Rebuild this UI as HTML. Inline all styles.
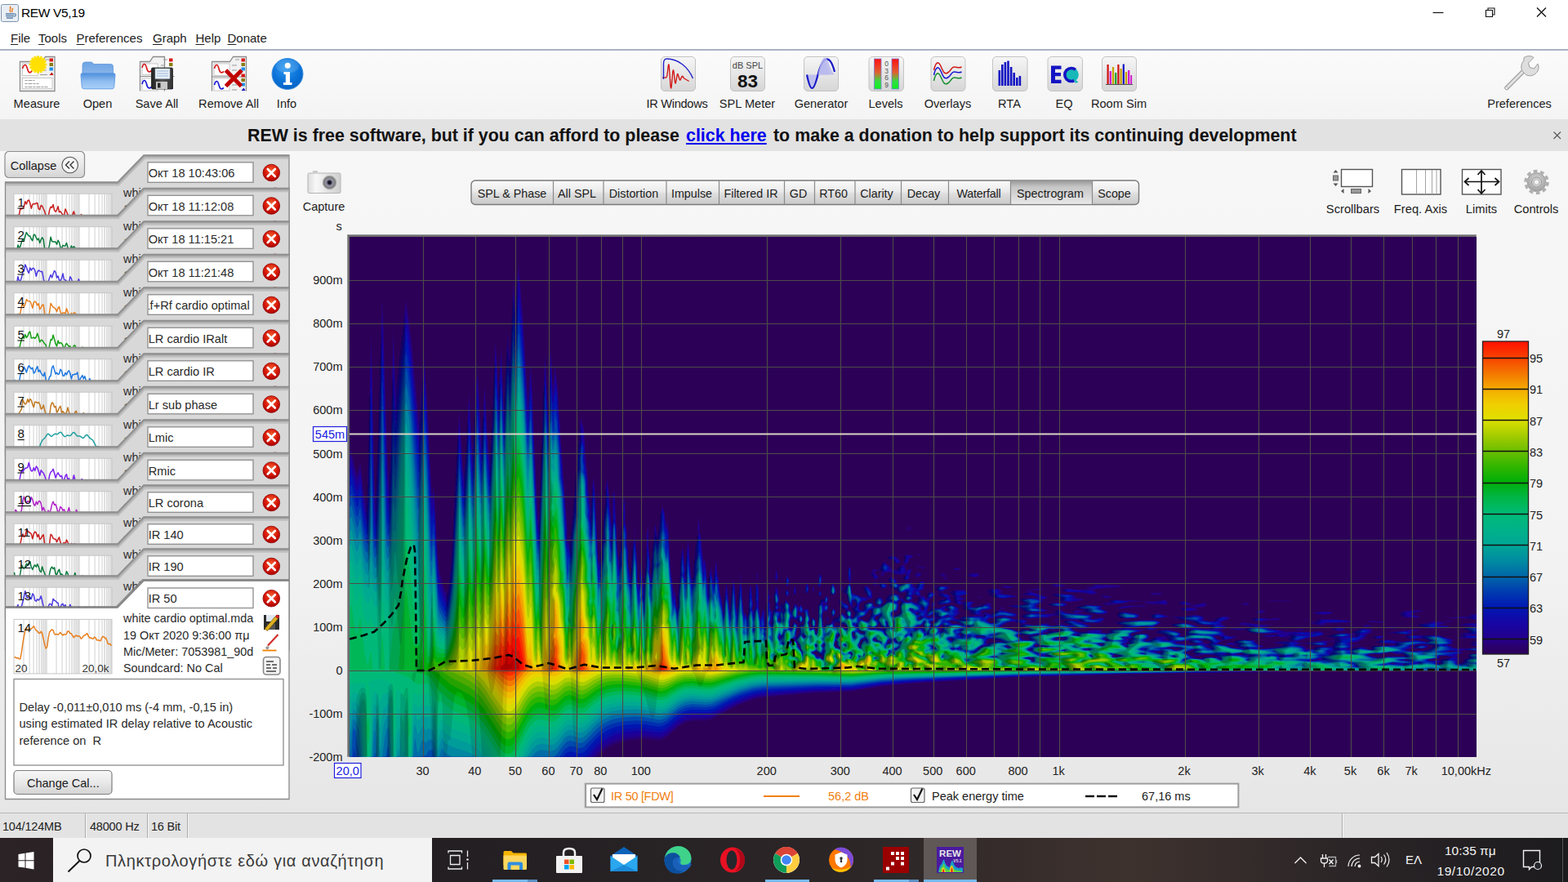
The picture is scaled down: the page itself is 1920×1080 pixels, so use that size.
<!DOCTYPE html>
<html lang="en"><head><meta charset="utf-8"><title>REW V5,19</title>
<style>
*{box-sizing:border-box;margin:0;padding:0}
html,body{width:1920px;height:1080px;overflow:hidden;background:#f2f2f2;font-family:"Liberation Sans",sans-serif;font-size:15px;color:#1a1a1a}
.abs{position:absolute}
.t{position:absolute;white-space:nowrap;line-height:1}
#title{position:absolute;left:0;top:0;width:1920px;height:32px;background:#fff}
#menu{position:absolute;left:0;top:32px;width:1920px;height:30px;background:#fff;border-bottom:2px solid #a9b3c2}
#menu span{position:absolute;top:6px;font-size:15px;color:#222;line-height:17px}
#menu u{text-decoration:underline;text-underline-offset:2px}
#tool{position:absolute;left:0;top:62px;width:1920px;height:84px;background:linear-gradient(#fbfbfb,#f4f4f4)}
.tl{position:absolute;top:119px;font-size:14.6px;line-height:17px;color:#1c1c1c;white-space:nowrap;transform:translateX(-50%)}
#banner{position:absolute;left:0;top:146px;width:1920px;height:39px;background:#e2e2e2}
#banner .msg{position:absolute;top:8px;font-weight:bold;font-size:21.4px;line-height:24px;color:#111;white-space:nowrap}
#banner a{color:#0000ee;text-decoration:underline}
#main{position:absolute;left:0;top:185px;width:1920px;height:811px;background:linear-gradient(#f7f7f7 0,#f3f3f3 60%,#e6e6e6 100%)}
#status{position:absolute;left:0;top:995px;width:1920px;height:31px;background:#e3e3e3;border-top:1px solid #b9b9b9}
#status .s{position:absolute;top:8px;font-size:14.5px;line-height:17px;color:#222}
#status .sep{position:absolute;top:0;width:1px;height:30px;background:#aaa;box-shadow:1px 0 0 #f6f6f6}
#task{position:absolute;left:0;top:1026px;width:1920px;height:54px;background:linear-gradient(90deg,#2b2325 0,#231f22 30%,#2c2627 55%,#3e322e 72%,#2b2527 86%,#1c1b1e 100%)}
#search{position:absolute;left:65px;top:0;width:464px;height:54px;background:#f3f3f3}
#search .ph{position:absolute;left:64px;top:17px;font-size:20px;line-height:22px;color:#3a3a3a;letter-spacing:0.66px}
.ax{position:absolute;font-size:14.5px;line-height:16px;color:#222;white-space:nowrap}
.ay{right:1500px;text-align:right}
</style></head><body>

<div id="title">
<svg class="abs" style="left:1px;top:4px" width="24" height="24" viewBox="0 0 24 24"><rect x="0.5" y="1.5" width="21" height="21" rx="2" fill="#e9eef5" stroke="#7d93ad"/><path d="M11 4c3 2-2 4 1 7M14 6c2 2-2 3 0 5" stroke="#e8822a" stroke-width="1.6" fill="none"/><path d="M6 13h10M6 15.5h10M7 18h8" stroke="#5a7fa8" stroke-width="1.4"/><path d="M16 13c3-1 3 3 0 3" stroke="#5a7fa8" stroke-width="1.2" fill="none"/></svg>
<div class="t" style="left:26px;top:8px;font-size:15.5px;color:#000;letter-spacing:-0.35px">REW V5,19</div>
<svg class="abs" style="left:1740px;top:0" width="180" height="32" viewBox="0 0 180 32"><path d="M14.5 15.5h13" stroke="#111" stroke-width="1.2"/><path d="M79.5 12.5h8v8h-8zM82 12.5v-2.500h8v8h-2.500" stroke="#111" stroke-width="1.1" fill="none"/><path d="M142 9.500l11 11M153 9.500l-11 11" stroke="#111" stroke-width="1.3"/></svg>
</div>
<div id="menu">
<span style="left:13px"><u>F</u>ile</span><span style="left:47px"><u>T</u>ools</span><span style="left:93.500px"><u>P</u>references</span><span style="left:187px"><u>G</u>raph</span><span style="left:239.500px"><u>H</u>elp</span><span style="left:278.500px"><u>D</u>onate</span>
</div>
<div id="tool"></div>

<svg class="abs" style="left:0;top:62px" width="1920" height="84" viewBox="0 62 1920 84">
<defs>
<linearGradient id="btn" x1="0" y1="0" x2="0" y2="1"><stop offset="0" stop-color="#f6f6f6"/><stop offset="0.5" stop-color="#e6e6e6"/><stop offset="1" stop-color="#d6d6d6"/></linearGradient>
<linearGradient id="fold" x1="0" y1="0" x2="0" y2="1"><stop offset="0" stop-color="#4f8fdc"/><stop offset="0.5" stop-color="#8ebcf0"/><stop offset="1" stop-color="#a9d0f8"/></linearGradient>
<linearGradient id="foldb" x1="0" y1="0" x2="0" y2="1"><stop offset="0" stop-color="#6ea4e4"/><stop offset="1" stop-color="#8ab6ea"/></linearGradient>
<radialGradient id="info" cx="0.45" cy="0.3" r="0.75"><stop offset="0" stop-color="#2f9bf0"/><stop offset="0.6" stop-color="#0a72d8"/><stop offset="1" stop-color="#0860c0"/></radialGradient>
<linearGradient id="lev" x1="0" y1="0" x2="0" y2="1"><stop offset="0" stop-color="#ff1010"/><stop offset="0.45" stop-color="#e06030"/><stop offset="0.75" stop-color="#30e040"/><stop offset="1" stop-color="#10f020"/></linearGradient>
<linearGradient id="flop" x1="0" y1="0" x2="1" y2="0"><stop offset="0" stop-color="#222"/><stop offset="0.5" stop-color="#555"/><stop offset="1" stop-color="#333"/></linearGradient>
</defs>
<!-- Measure -->
<g>
<path d="M24.500 75.500h27l4-6h11.500v42h-42.500z" fill="#f2f2f2" stroke="#8c8c8c" stroke-width="1.300"/>
<rect x="27.500" y="78" width="19" height="14.500" fill="#fff" stroke="#bdbdbd" stroke-width="0.800"/>
<path d="M27.500 84c2-6 4.500-6 6 0s4 6.500 6.500 1" stroke="#d61a1a" stroke-width="1.700" fill="none"/>
<rect x="27.500" y="95.500" width="36.500" height="13" fill="#fff" stroke="#bdbdbd" stroke-width="0.800"/>
<path d="M30.500 98.500h12M30.500 102.500h17M30.500 106.500h28" stroke="#9a9a9a" stroke-width="1.200" stroke-dasharray="3 1 5 1"/>
<rect x="60.500" y="71.500" width="4.500" height="4" fill="#d81b1b"/><rect x="60.500" y="77" width="4.500" height="4" fill="#8a7a10"/><rect x="60.500" y="82.500" width="4.500" height="4" fill="#2090e8"/><path d="M60.500 92l3-3.500 2 3.500z" fill="#c01010"/>
<path d="M49 91.500h9M52 86h5M55 73h5" stroke="#999" stroke-width="1"/>
<g fill="#ffee00"><circle cx="46.500" cy="79" r="7.800"/><g stroke="#ffe000" stroke-width="3.200" stroke-linecap="round"><path d="M46.500 69.500v19M37 79h19M39.800 72.300l13.400 13.400M53.200 72.300L39.800 85.700M42.800 70.300l7.400 17.400M50.200 70.300l-7.400 17.400M37.800 75.300l17.400 7.400M37.800 82.700l17.400-7.400"/></g></g>
</g>
<!-- Open -->
<g>
<path d="M101 79.500q0-3.500 3.500-3.500h6.500q2 0 3 1.500l1 1h20.500q3 0 3 3v10h-37.500z" fill="url(#foldb)" stroke="#5d97dd" stroke-width="0.800"/>
<path d="M99 92q-0.300-2.300 2-2.300h38q2.300 0 2 2.300l-1.300 14.500q-0.300 2.300-2.500 2.300h-34.400q-2.200 0-2.500-2.300z" fill="url(#fold)" stroke="#5a98e4" stroke-width="0.900"/>
</g>
<!-- Save All -->
<g>
<path d="M171.500 111.500v-36h12l4-6h14v42" fill="#f2f2f2" stroke="#8c8c8c" stroke-width="1.300"/>
<rect x="174" y="78" width="19" height="13.500" fill="#fff" stroke="#bdbdbd" stroke-width="0.800"/><rect x="174" y="96" width="19" height="15" fill="#fff" stroke="#bdbdbd" stroke-width="0.800"/>
<path d="M171.500 93.500h42" stroke="#8c8c8c" stroke-width="1.200"/>
<path d="M174 83c1.500-6 4-6 5.500 0s3.500 5.500 6 3.500" stroke="#d61a1a" stroke-width="1.700" fill="none"/>
<path d="M174 103c1.500-6 4-6 5.500 0s3.500 5.500 6 3.500" stroke="#1a1ad6" stroke-width="1.700" fill="none"/>
<rect x="207" y="71.500" width="4.500" height="4" fill="#d81b1b"/><rect x="207" y="77" width="4.500" height="4" fill="#8a7a10"/>
<path d="M200 73h5M197 80h5" stroke="#999" stroke-width="1"/>
<path d="M201 108h11" stroke="#1a1ad6" stroke-width="2"/>
<rect x="185.500" y="83" width="26" height="26" rx="1.500" fill="url(#flop)" stroke="#1a1a1a" stroke-width="0.800"/>
<rect x="190" y="84" width="18" height="12.500" fill="#e8f0f8" stroke="#9ab" stroke-width="0.500"/>
<path d="M192 87h14M192 90h14M192 93h14" stroke="#9db8d8" stroke-width="1"/>
<rect x="191" y="100" width="14" height="9" fill="#c8c8c8"/><rect x="193" y="101.500" width="3.500" height="6" fill="#2a2a2a"/>
</g>
<!-- Remove All -->
<g>
<path d="M259.500 111.500v-36h22l4-6h16v42" fill="#f2f2f2" stroke="#8c8c8c" stroke-width="1.300"/>
<rect x="262" y="78" width="19" height="14.500" fill="#fff" stroke="#bdbdbd" stroke-width="0.800"/><rect x="262" y="96" width="19" height="15" fill="#fff" stroke="#bdbdbd" stroke-width="0.800"/>
<path d="M259.500 94h42" stroke="#8c8c8c" stroke-width="1.200"/>
<path d="M262.500 84c1.500-6 4-6 5.500 0s3.500 5.500 6 3.500" stroke="#d61a1a" stroke-width="1.700" fill="none"/>
<path d="M262.500 104c1.500-6 4-6 5.500 0s3.500 5.500 6 3.500" stroke="#1a1ad6" stroke-width="1.700" fill="none"/>
<rect x="295.500" y="71.500" width="4.500" height="4" fill="#d81b1b"/><rect x="295.500" y="77" width="4.500" height="4" fill="#8a7a10"/><rect x="295.500" y="82.500" width="4.500" height="4" fill="#2090e8"/>
<rect x="295.500" y="90.500" width="4.500" height="4" fill="#d81b1b"/><rect x="295.500" y="96" width="4.500" height="4" fill="#8a7a10"/><rect x="295.500" y="101.500" width="4.500" height="4" fill="#2090e8"/><path d="M295.500 111l3-3.500 2 3.500z" fill="#1010c0"/>
<path d="M288 73h5M284 80h6M284 86h6M284 104h6M284 110h6" stroke="#999" stroke-width="1"/>
<path d="M276.500 86l19 19.500M296 86l-19.500 19.500" stroke="#c00000" stroke-width="5"/>
</g>
<!-- Info -->
<g>
<circle cx="352" cy="90.500" r="19" fill="url(#info)" stroke="#3b8fe0" stroke-width="1"/>
<ellipse cx="352" cy="81" rx="14" ry="8.500" fill="#fff" opacity="0.130"/>
<circle cx="352.300" cy="80.300" r="3.500" fill="#fff"/>
<path d="M347.500 88h7.500v13h2.500v3h-10.500v-3h2.800v-10h-2.300z" fill="#fff"/>
</g>
<!-- IR Windows -->
<g>
<rect x="809.500" y="69.500" width="42" height="42" rx="4.500" fill="url(#btn)" stroke="#c3c3c3"/>
<path d="M811 95h5" stroke="#d01818" stroke-width="1.300"/>
<path d="M812.500 97v-19c0-4 2-6 4-6c14 0 26 10 32 24" stroke="#2222cc" stroke-width="1.400" fill="none"/>
<path d="M815.500 95c1 0 1.500-2 2.500-12c0.500-5 1-6 1.500 0l1.500 22c0.300 4 1 4 1.300 0l1.500-17c0.300-3 1-3 1.300 0l1.300 12c0.300 3 1 3 1.400 0l1.300-8c0.400-2 1-2 1.400 0l1.500 5c0.500 1.500 1 1.500 1.500 0l1.200-3c0.500-1 1-1 1.500 0l1.500 2l6 3.500" stroke="#d01818" stroke-width="1.400" fill="none" stroke-linejoin="round"/>
</g>
<!-- SPL -->
<g>
<rect x="894.500" y="69.500" width="42" height="42" rx="4.500" fill="url(#btn)" stroke="#c3c3c3"/>
<text x="915.500" y="84" font-size="11" text-anchor="middle" fill="#444" font-family="Liberation Sans, sans-serif">dB SPL</text>
<text x="915.500" y="107" font-size="22.500" font-weight="bold" text-anchor="middle" fill="#111" font-family="Liberation Sans, sans-serif">83</text>
</g>
<!-- Generator -->
<g>
<rect x="984.500" y="69.500" width="42" height="42" rx="4.500" fill="url(#btn)" stroke="#c3c3c3"/>
<path d="M988 91.500c4.500 22 8 22 13.500 0c5.500-22 9-22 13.500 0z" fill="#b9b9ee" opacity="0.850"/>
<path d="M988 91.500c4.500 22 8 22 13.500 0S1016 64 1022 88" stroke="#1818c8" stroke-width="2.200" fill="none"/>
<path d="M1001.500 91.500c5-24 9.500-26 13.500-13c1.500 4 3 9 7 13z" fill="#b9b9ee" opacity="0.850"/>
</g>
<!-- Levels -->
<g>
<rect x="1064" y="69.500" width="42.500" height="42" rx="4.500" fill="url(#btn)" stroke="#c3c3c3"/>
<rect x="1070.500" y="72" width="8.500" height="37" fill="url(#lev)" stroke="#7a7ad8" stroke-width="0.800"/>
<rect x="1092" y="72" width="8.500" height="37" fill="url(#lev)" stroke="#7a7ad8" stroke-width="0.800"/>
<g font-size="8.500" fill="#555" text-anchor="middle" font-family="Liberation Sans, sans-serif"><text x="1085.500" y="81">0</text><text x="1085.500" y="89.500">3</text><text x="1085.500" y="98">6</text><text x="1085.500" y="106.500">9</text></g>
</g>
<!-- Overlays -->
<g>
<rect x="1140" y="69.500" width="42" height="42" rx="4.500" fill="url(#btn)" stroke="#c3c3c3"/>
<g fill="none" stroke-width="1.500"><path d="M1143.500 86c2-9 5-12 8-6s4 12 9 9s4-7 8-7s5 2 9 0" stroke="#d01818"/><path d="M1143.500 92c2-9 5-12 8-6s4 12 9 9s4-7 8-7s5 2 9 0" stroke="#1818d0"/><path d="M1143.500 99c2-9 5-12 8-6s4 12 9 9s4-7 8-7s5 2 9 0" stroke="#189030"/></g>
</g>
<!-- RTA -->
<g>
<rect x="1215.500" y="69.500" width="42.500" height="42" rx="4.500" fill="url(#btn)" stroke="#c3c3c3"/>
<g fill="#1414c4"><rect x="1222.500" y="86" width="2.600" height="19"/><rect x="1226" y="79" width="2.600" height="26"/><rect x="1229.600" y="76" width="2.600" height="29"/><rect x="1233.200" y="74.500" width="2.600" height="30.500"/><rect x="1236.800" y="82" width="2.600" height="23"/><rect x="1240.400" y="89" width="2.600" height="16"/><rect x="1244" y="95" width="2.600" height="10"/><rect x="1247.600" y="93" width="2.600" height="12"/></g>
</g>
<!-- EQ -->
<g>
<rect x="1283" y="69.500" width="42.500" height="42" rx="4.500" fill="url(#btn)" stroke="#c3c3c3"/>
<circle cx="1311.800" cy="91.500" r="9" fill="#19b8b8"/>
<path d="M1316 97l4.500 3.500-4 1.500z" fill="#19b8b8"/>
<circle cx="1311.800" cy="91.500" r="8" fill="none" stroke="#1414c4" stroke-width="3.600" stroke-dasharray="34 30" stroke-dashoffset="-9"/>
<path d="M1287 80.500h12.500v4.300h-7.500v4.200h7v4.200h-7v4.500h7.500v4.300h-12.500z" fill="#1414c4"/>
</g>
<!-- Room Sim -->
<g>
<rect x="1349.500" y="69.500" width="42" height="42" rx="4.500" fill="url(#btn)" stroke="#c3c3c3"/>
<g><rect x="1355.500" y="79" width="2.200" height="24" fill="#d01010"/><rect x="1358.700" y="87" width="2.200" height="16" fill="#d010d0"/><rect x="1361.900" y="82" width="2.200" height="21" fill="#c8a000"/><rect x="1365.100" y="89" width="2.200" height="14" fill="#18a030"/><rect x="1368.300" y="79" width="2.200" height="24" fill="#d01010"/><rect x="1371.500" y="84" width="2.200" height="19" fill="#c8a000"/><rect x="1374.700" y="78.500" width="2.200" height="24.500" fill="#1414c4"/><rect x="1377.900" y="88" width="2.200" height="15" fill="#c8a000"/><rect x="1381.100" y="86" width="2.200" height="17" fill="#d010d0"/><rect x="1384.300" y="92" width="1.800" height="11" fill="#d010d0"/></g>
<path d="M1354 103.500h33" stroke="#555" stroke-width="1"/>
</g>
<!-- Preferences wrench -->
<g>
<path d="M1845 107.500L1866.500 86" stroke="#a9a9a9" stroke-width="5.500" stroke-linecap="round"/>
<path d="M1845 107.500L1866.500 86" stroke="#e4e4e4" stroke-width="2.500" stroke-linecap="round"/>
<path d="M1866 70.500c4-2.500 9-2.500 12 0l-6.500 6.500 1.500 5.500 5.500 1.500 4.500-6c2 4 1 8.500-2 11.500-3.500 3.500-8.500 4.200-12.500 2l-4.500-4.500c-2-4-1.500-9 2-13z" fill="#dedede" stroke="#9c9c9c" stroke-width="1"/>
<circle cx="1844.700" cy="107.800" r="1.600" fill="#fff" stroke="#999" stroke-width="0.600"/>
</g>
</svg>
<div class="tl" style="left:45px">Measure</div><div class="tl" style="left:119.500px">Open</div><div class="tl" style="left:192px">Save All</div><div class="tl" style="left:280px">Remove All</div><div class="tl" style="left:351px">Info</div>
<div class="tl" style="left:829px;letter-spacing:-0.3px">IR Windows</div><div class="tl" style="left:915px">SPL Meter</div><div class="tl" style="left:1005.500px">Generator</div><div class="tl" style="left:1084.500px">Levels</div><div class="tl" style="left:1160.500px">Overlays</div><div class="tl" style="left:1236px">RTA</div><div class="tl" style="left:1303px">EQ</div><div class="tl" style="left:1370px">Room Sim</div><div class="tl" style="left:1860.500px">Preferences</div>
<div id="banner"><div class="msg" style="left:303px">REW is free software, but if you can afford to please</div><div class="msg" style="left:840px"><a>click here</a></div><div class="msg" style="left:947px">to make a donation to help support its continuing development</div>
<svg class="abs" style="left:1900px;top:13px" width="14" height="14" viewBox="0 0 14 14"><path d="M2.500 2.500l8.500 8.500M11 2.500L2.500 11" stroke="#555" stroke-width="1.100"/></svg></div>

<div id="main"></div>
<svg class="abs" style="left:0;top:185px" width="1920" height="811" viewBox="0 185 1920 811" font-family="Liberation Sans, sans-serif">
<defs><clipPath id="pc"><rect x="428" y="290" width="1380" height="637"/></clipPath><filter id="bl" x="0" y="0" width="1" height="1" filterUnits="objectBoundingBox"><feGaussianBlur stdDeviation="0.7"/></filter><linearGradient id="cbar" x1="0" y1="0" x2="0" y2="1">
<stop offset="0.0000" stop-color="#ff1000"/>
<stop offset="0.0250" stop-color="#fb2800"/>
<stop offset="0.0500" stop-color="#f84000"/>
<stop offset="0.0750" stop-color="#f65a00"/>
<stop offset="0.1000" stop-color="#f47400"/>
<stop offset="0.1250" stop-color="#f48e00"/>
<stop offset="0.1500" stop-color="#f4a800"/>
<stop offset="0.1750" stop-color="#f2bb00"/>
<stop offset="0.2000" stop-color="#f0ce00"/>
<stop offset="0.2250" stop-color="#e8d700"/>
<stop offset="0.2500" stop-color="#e0e000"/>
<stop offset="0.2750" stop-color="#c3d600"/>
<stop offset="0.3000" stop-color="#a6cc00"/>
<stop offset="0.3250" stop-color="#89c500"/>
<stop offset="0.3500" stop-color="#6cbe00"/>
<stop offset="0.3750" stop-color="#4fba00"/>
<stop offset="0.4000" stop-color="#32b600"/>
<stop offset="0.4250" stop-color="#19b204"/>
<stop offset="0.4500" stop-color="#00ae08"/>
<stop offset="0.4750" stop-color="#00b227"/>
<stop offset="0.5000" stop-color="#00b646"/>
<stop offset="0.5250" stop-color="#00b85e"/>
<stop offset="0.5500" stop-color="#00ba76"/>
<stop offset="0.5750" stop-color="#00b67f"/>
<stop offset="0.6000" stop-color="#00b288"/>
<stop offset="0.6250" stop-color="#00ac8f"/>
<stop offset="0.6500" stop-color="#00a696"/>
<stop offset="0.6750" stop-color="#00999b"/>
<stop offset="0.7000" stop-color="#008ca0"/>
<stop offset="0.7250" stop-color="#007aa4"/>
<stop offset="0.7500" stop-color="#0068a8"/>
<stop offset="0.7750" stop-color="#0052ac"/>
<stop offset="0.8000" stop-color="#003cb0"/>
<stop offset="0.8250" stop-color="#002ab1"/>
<stop offset="0.8500" stop-color="#0018b2"/>
<stop offset="0.8750" stop-color="#0b0fab"/>
<stop offset="0.9000" stop-color="#1606a5"/>
<stop offset="0.9250" stop-color="#1d0398"/>
<stop offset="0.9500" stop-color="#24008c"/>
<stop offset="0.9750" stop-color="#2a006e"/>
<stop offset="1.0000" stop-color="#2d0057"/>
</linearGradient></defs>
<rect x="425" y="287" width="1383" height="640" fill="#9a9a9a"/>
<rect x="426" y="288" width="1381" height="638" fill="#6e6e6e"/>
<rect x="428" y="290" width="1380" height="637" fill="#2d0057"/>
<g clip-path="url(#pc)"><g filter="url(#bl)">
<path fill="#290071" d="M454.5 401.4l3.9 191.1 1.1 19.9 1.3 -17.9 6.7 -223.9 1 0 7 210.4 1 -.3 2 -32.8 3 -149.8 3 80.1 9 -86.1 3 -22.7 1 -2.2 5 37.2 10 104.8 1 2.7 6 -78.1 9 167.6 1 4.3 1 -9.8 1 2 4 75.1 2 23.6 6.1 22.9 2.9 6.2 1 -.6 2 -7.5 3.5 -33.1 7.5 -154.7 2 -28.1 4 69.3 1 6.2 1 -1 2 -21.5 4 -75.5 3 61.6 1 10.4 .7 -5.7 5.3 -97.3 5 89.1 4 -67.8 4 74 1 9.8 1 2.5 1 -3.4 1 -12.4 5 -123.1 1 7.4 3 60.5 3 -64.4 3 72.4 1 4.5 4 -92 3 35.7 4 -99 2 29.4 1 -5.3 3 -40.4 1 0 5 64.9 4 73.8 2 24.4 3 -44.1 1 7.9 7.1 165.9 1.9 19.7 1.3 -16.7 6.7 -189.1 3 66.8 1.9 -25.7 1.1 -37.6 1 -9.5 2 43.5 1 .9 2 -24 1 3.6 3 31.7 3.1 54.4 2.9 34.8 .1 10.2 5.2 67 -.3 12 1 3.3 1.3 -2.3 .7 -4.7 1 1.2 5.3 -56.5 6.7 -86.2 2 -5.4 .3 7.6 1.7 4.7 1 6.2 2.5 42.1 1.8 14 0 12 2.7 21.2 1 2.8 3 -35.9 1 3.3 1.3 15.6 2.3 60 1.5 22 .9 3.7 1 -11.8 3.3 -17.9 1.8 -31 1.9 -13 -.2 -17 2.2 -12.9 1 4.2 4 51.9 1 -3.4 .7 -9.8 .3 -22.2 1 -6.5 1 2.3 3.2 69.4 1.8 11.4 2.2 -7.4 .8 -23.7 2.1 -10.3 -.8 -6 1.7 -27.9 1 .9 1 9.4 .1 19.6 2 13 .1 13 1.6 14 0 14 2.2 11.7 1 .7 2 -32.9 1.8 -10.5 .2 -17.9 1 8.4 -.3 8.5 1.4 6 1.8 27 .2 17 .9 5 1 .5 2 -24.8 1 .1 2 25.4 1 1.7 2.7 -30.9 1.3 -39.3 1 -4.2 .5 24.5 1.9 23 -.5 11 1.1 4.9 1 -1.4 1 -24.5 3 -35.6 1 -4.9 2 16.1 1 -1.1 3 -25.8 1.8 -7.7 1.2 -1 1.6 4 3.4 19.2 1 -9.4 3.8 64.2 3.2 23.7 1 -.6 1 1.5 2 20.6 1 0 1 -3.2 -.3 -9 2.1 -24 .6 -18 2.6 -20.1 1 2.6 2 21.3 1 -2.3 3 -34.4 2.2 35.9 1.8 15.9 1 1.2 1.7 -12.1 2.4 -28 3 -16 -.7 -7 1.6 -14.9 1 5.9 .3 14 1.8 7 1.9 22.3 1 5.8 1 -2.1 1 1.6 3 29.9 1 -2.5 3 -21.5 1 5.5 -.1 6 2.1 8 2 -19.9 1 -5.3 .8 1.2 .9 14 1.9 8 .7 11 2.7 12.6 2 14.3 4 -36.8 1.6 19.9 2.4 15.6 1 -4 3 -31.5 1 .3 1 6 1.7 24.6 1.3 6.2 3.7 -36.2 .3 -10.4 1 4.4 -.6 6 1.8 10 -.2 7 1.4 17 1.6 7.1 1 -2.8 2 4.9 1 -.3 .8 -2.9 .5 -25 1.7 -9.2 1 -.3 .9 3.5 .1 8 1.7 12 -1 5 1.3 2.3 2.7 -4.3 -1.3 -3 .8 -4 .5 -19 1.3 -3.3 1 .5 1.6 8.8 .2 19 1.2 11.6 1 2.7 1.2 -3.3 .5 -6 1.3 -2 1.3 4 .7 12.4 1.9 -21.4 1.8 -4 -.7 -5 1.2 -5 -.2 -4 1 -2.3 .7 3.3 -.4 4 .9 4 -.9 4 .8 4 -.2 5 3.1 4.8 2.4 -2.8 1.3 -6 -1.8 -11 1.5 -5 .3 -4 1.3 -1.6 1.7 2.6 1.9 13 -1.4 6 1.8 2.3 1 -.5 2 -5.4 1 2.5 1 -.1 2 -4.2 3.2 1.4 2.2 4 .4 6 1.2 2.2 5 -9.8 4 4.2 1 -.1 2 -2 1 .3 2 5 6 -.6 .6 .8 -.1 5 2.2 7 -2.1 4 .2 2 2.2 5.6 2.4 -.6 .3 -1 -2.1 -6 -.2 -3 2.6 -3 2 1.8 1.3 5.2 -1.7 6 1.4 3 -.1 3 1.1 .9 1.1 -1.9 -.4 -3 1.7 -7 .4 -18 -.6 -5 2.4 -3 .3 -4 4.1 -1.1 3 -3.5 1 -.1 1.3 2.7 0 3 -1.8 4 1.9 2 .5 2 -1.9 4.6 -4 1 -1.4 3.4 .3 12 1.1 2.7 4 -2.7 3 -.3 3.2 -1.7 1.8 -5 6 -2 3 -4.5 4.5 .5 1.5 -4.1 -.7 -.9 -4.3 -1.8 -4 -8.2 3 -3 3 4.4 6.1 3.6 .6 2 -.8 3 3.1 1.1 .8 1.9 .1 7 1.1 .3 2.3 -2.3 .8 -3 -.4 -2 -3.7 -3 -.8 -4 -4 -8 .2 -5 -1.4 -2 -4.1 -2 -.9 -1.2 -1 1.3 -2 -8.1 1 -1.7 1 .6 2 4.2 3 -1.3 4.7 -5.8 -1.3 -4 -.9 -8 .6 -5 .9 -2.1 1 -.2 1.1 2.3 .6 6 -.2 9 -.9 3 2.4 12 11 4.4 7 .9 .3 -2.3 -4.9 -9 .6 -2.1 2 -1.2 3.4 1.3 3.7 4 1.3 3 .4 6 -.8 1.6 -4 .7 -3 1.7 -4 .4 -3.1 2.6 -1.1 3 .1 4 2.1 2.2 2.3 -1.2 1.1 -6 4.6 -2.3 5 -.1 1.6 1.4 1.4 2.9 3.9 .1 -2.9 -4 -.3 -2 2.3 -4.1 2 -1.3 3 .1 2.9 3.3 -.4 3 -1.9 3 .4 1 2 -.8 4.2 -4.2 -1.6 -3 .4 -1 4.2 -4 1.8 -.7 9 .1 1.1 .6 1.9 4.2 3.6 -.2 .9 3 1.5 1.4 3 .6 1.9 -1 -3.9 -1.3 -1.4 -1.7 -.4 -2 1.8 -3 -1 -3.8 -7 1.5 -4 -3.7 -3 -.8 -5.1 -4.2 .1 -4 -2 -4 1 -2 2 -.9 6.6 2.9 .8 1 .3 3 3.3 2.5 6 -2.5 8 -.2 5 2.1 2 -.4 5 -3.1 4.4 .6 1.3 2 -2 3 .3 3.6 -4.8 2.4 1.2 6 3.6 .1 3 3.9 .9 -1 .5 -6 1.6 -1.6 5 .3 3.2 1.3 .4 1 -1.1 2 -5.2 3 -2 3 .8 3 -1.9 5 -.3 5 4.8 -4 -.8 -4 1.1 -2 2 -1.1 1.6 .1 .5 3 -3.3 3 .4 1 6.8 .3 6 -2.9 3 .2 5 -1.1 3 .3 5.7 2.2 2.4 2 .3 1 -1.1 2 1.9 1 .3 1 -6.5 5 0 1 5 2 1.7 -1 0 -1 4.3 -1.7 16.6 -1.3 -6.6 -.4 -3.9 -2.6 1 -2 -8.6 -3 .4 -2 -.9 -3.8 -4 .5 -9 -2.5 -3 1.3 -14.2 1.5 -.3 -2 1.6 -3 8.2 -2 0 -1 -8.7 -3 -.4 -5 -1.9 -2 -.3 -3 -3 .2 -.5 -1.2 .5 -1 2 -.4 2 .4 -1 2 4 -1.8 8 .1 3.5 .7 .9 1 -9.2 5 0 1 9 3 2.8 8.9 1.4 -.9 .8 -5 -4 -4 -.6 -3 8.4 -2.3 10 .5 2.9 1.8 1.2 3 -8.1 1.7 -1.7 1.3 7.5 3 -7.8 2 4 1.4 12.7 -.4 .7 1 -4.3 5 3.9 1.4 16.5 -5.4 4.9 0 .5 1 -1.3 2 1.6 3 -.2 1.4 -2 .8 -10 .9 -1.3 .9 0 1 1.3 1.3 3 -1.2 5 .9 3 1.5 7 -4.7 2 -.6 2 .6 1.6 -.8 -3.1 -2 .2 -1 4.3 -.5 2.7 1.5 -1.7 2 .7 1 6.3 2.3 9 1.7 .7 1 .3 2 -1 .5 -12.3 .5 3.3 .3 8 2.7 13 .4 1.3 1.6 -2.1 3 9.8 2.1 14 -2.3 4 .2 1.3 1 0 1 2.6 1 6.8 -1 3 -2 -7.1 -3 -.3 -1 8.2 -4 -.8 -1 -5.7 -.8 -7 1.9 -27 1.8 -8.4 -1.9 3.8 -3 4.6 -1.5 6 -.4 16 1.1 10 -.4 2.5 -.8 -1.2 -2 .7 -1 5 -1 3 .3 3.1 2.7 4.9 1.7 10 -.6 9 1.7 11 .7 1.1 .5 -2.9 3 -.1 1 1.9 .7 10 -1.8 3.2 .1 2.3 1 -2.5 3 -5.3 2 -5.7 .4 -7 -.8 -6 1.1 1.9 1.3 6.5 1 1.1 1 -7.5 3.4 -5 .3 -7 -2.2 -3 .1 -.9 1.4 1.3 2 7.6 2.8 7 -.6 3 -1.9 15 -.8 2.5 .5 .9 1 -.4 2.1 3 .7 6.5 -.8 -1.3 -2 1.6 -1 12.3 -2 -1.7 -1 5 -2 -.8 -1 -8.9 -2 1.3 -1 10 -1.8 38 -1.6 7.2 2.4 -3.2 3.1 -4.3 1.9 .6 1 2.7 1 -2 2 -5.5 1 -9.5 .3 -5 1.9 -9 1.4 -1.9 1.4 .9 2 10 -2.6 10.7 .6 2.1 4 -5 3 -.6 1 1.8 .6 10 -5.2 11 -.7 1.8 -.7 -3.8 -2 -9.6 -2 5.6 -2.8 12 -.3 9 1.9 5.8 2.2 .5 1 -2.1 2 1.8 .9 3 -.4 2.5 -1.5 .6 -1 -1.1 -1 .2 -1 5.3 -4 -11.8 -1 -11 -4 -.4 -1 11.7 -1.7 6 .2 11 2.2 5.2 2.3 1.6 2 6.2 .9 4 -.1 2.1 -3.8 -14.1 -2.3 -8 -3.5 -13 -2 -12 -3 -6 .1 -15 2.1 -4.4 -2.4 -.5 -2 2 -1 7.9 -1.2 15 4.1 16 -.3 10 -1.6 2 -1 3 .2 9 2.4 .9 1.4 -1.1 2 .3 1 5.9 1.6 6.2 -.6 2.6 -3 5.9 -2 6.3 -.6 4.3 .6 1.4 1 -1.7 1.9 -8.9 3.1 1.2 3 4.6 2 1.2 3 -7.5 2 7.5 7 11.9 .9 1 1.1 -17 3.6 -7.4 3.4 .2 1 3.5 1 8.7 .2 .1 .8 2.9 2 5 1 6.4 0 -7.4 -3.5 -7 -.5 -1.9 -1 0 -1 8.9 -.5 2 -2.3 3 -.8 20 -.1 1.4 .7 .3 2 4.3 3 7.1 2 -7.1 2 -.2 1 2.2 .3 25.6 -3.3 1.8 -1 .2 -1 -3.6 -1.3 -3 .2 -5.1 -.9 .2 -1 21.8 -2 -3.9 -.8 -2 -1.9 -13 -2.5 -6 .8 -13 -.6 8 -2.3 9.5 .3 3 -1 -1.9 -1 -19.6 .2 -12 -1.6 -7 -3.1 -6 .6 -13.9 -1.1 3.1 -1 17.8 .1 6.2 -2.1 -12.4 -2 -1.9 -1 1.5 -2 1.6 -.4 27 3.1 6 -.4 6 .7 -8.2 2 1.3 1 6.1 2 16.8 2.6 16 0 11 1 16.3 -1.6 -.5 1 5 2 -4.8 3 -14 2.3 -16.4 4.7 7.4 1.6 10 -.2 15.8 -2.4 11.2 -.5 2.8 -2.5 -7.9 -1 -1.5 -1 1.5 -1 15.1 -3.2 14 .6 .8 -.4 -1 -1 11.2 -5.3 13.9 1.3 .5 1 -1.4 1 .1 1 1.2 1 -6.5 2 .3 2 -4.6 2 2.1 2 -5.3 1 -2.6 2 -7.7 .8 -3 1.2 1 1.2 2 .5 10.7 .3 -2.7 1.2 -7 .3 -3 2.7 13 -1.8 5 .8 1.3 .8 -.1 1 2.8 1 3.3 -1 -1.6 -2 3.9 -1 22.4 -.7 4 -1.3 -4 -1.3 -15.5 -.7 -6 -1 7.5 -2.6 15 -.5 6 1.9 6 .7 9.6 -1.5 -8.3 -5 4.7 -1.6 38 .2 19.1 5.4 -.4 1 -2.6 1 2 2 -1.1 1 -5.5 1 .9 1 5.1 1 .8 2 9.7 .9 18 -.8 0 3.4 -13 -1 -7.9 1.5 5.3 2 -6.7 2 -.2 2 -1.4 1 4.3 2 -1.5 3 -1.9 .7 -.8 1.3 2.8 1.5 5.9 -2.5 -1.8 -2 8.2 -3 -1.5 -3 1 -1 9.2 -1.5 0 21.4 -216 .4 -221 3.6 -132 4 -115 6.8 -42 3.8 -38 6.3 -46 1.9 -59 5.2 -11 1.7 -11.3 3.4 -13.7 5.6 -31 16.7 -7 1.4 -17 .3 -9 2.6 -7 4.1 -15 13.4 -6 3.4 -5 .7 -13 -1.5 -8 0 -12 1.2 -11 2.2 -8.9 2.9 -7.1 3.6 -8 5.7 -5.6 5.7 -303.4 0 0 -372.3 1 -3.3 1 .5 4 20.5 3 7.9 1 -.9 2 -12.5 1 .9 4 37.9 2 9.2 1 1.4 .7 -3.3 1 -22zM955.5 745.1l-1 -.5 -3.6 2.9 4.2 1 .7 -1zM959.5 745.3l-.9 1.2 .9 1.8zM968.5 757.7l-1.7 5.8 1.3 6 1.4 -1.1 2 -6.6 1 -.2 3.4 2.9 1.6 2.9 2.5 -3.9 -5.5 -4.6 -2 1 -2 -2.5 -1 -.4zM977.5 748.3l-.9 3.2 .9 2.1 3 -.8 3 4.7 1 -.2 .9 -2.8 -.9 -3.6 -1 -1.2 -3 .7 -2 -2zM998.5 789.5l0 1.5 1 .5 .5 -1 -.5 -1zM1008.5 739l-.4 1.5 1.4 .5 .8 -1.5zM1009.5 789.1l-1 -.4 -1.9 1.8 .6 1 1.3 0 1 -1zM1021.2 763.5l.3 2.4 1 .8 5 -.5 1.8 -1.7 -1.8 -1.9 -5 -.7zM1031.3 764.5l-.7 1 2.9 3.8 3 1.2 1 -1 -.2 -2 -1.8 -2.4 -2 -.9zM1035.5 753.9l.8 1.6 .8 0 -.6 -1.4zM1044.5 773.9l-.8 1.6 .1 2 1.7 3.1 .9 -1.1 -.7 -5zM1045.5 735.5l-1 .2 -.8 1.8 .8 4.6 1 .6 2 -.9 .6 -1.3 -1.1 -4zM1051.3 772.5l-.2 1 3.4 2.4 2.7 -.4 .6 -1zM1067.1 747.5l-.6 -.6 -2 .4 -4.4 6.2 -5 2 -2.3 2 6.7 3.5 3 -.6 1.7 -1.9 2.3 -6zM1075.5 753.6l-3.6 1.9 -.4 2 1 1.5 1 .3 3 -4.8zM1076.5 762.8l-4.4 5.7 3.4 2 1 -.2 1.3 -1.8 0 -4zM1080.5 767.8l-1 1.7 2 1.8 1 -1.8 -1 -1.6zM1086.5 763.8l-.6 1.7 .6 1.9 .6 -.9zM1089.3 784.5l-1.8 -.1 -1.2 2.1 .2 1.6 3 -1.6zM1102.5 734.9l-3 2.6 1.2 3 -1.5 7 -6.5 3 -.3 2 1.1 1.8 4 -.6 5.5 -3.2 -1 -9 1.7 -4zM1115.5 745.8l-.6 .7 .6 1 1 .1zM1118.1 717.5l2.4 1.2 1 -1.2 -2 -1.5zM1126.5 756.1l-1 -.1 -1 .9 0 2 1.4 -.4zM1128.5 743.8l-.6 .7 .4 1 1.2 .4 .4 -1.4zM1130.5 762.8l-.5 1.7 -8.5 3.9 -1.1 2.1 1.1 .3 3 -1.5 5 -.3 1.2 -1.5zM1141.8 752.5l-4.3 2.4 -3.2 -.4 2.2 1.8 4 -.3 1.6 -1.5zM1153.5 764.7l-3.7 2.8 .7 2.8 1 .5 3.4 -3.3zM1159.5 744.8l-1.9 .7 -.3 2 1.2 .6 1.4 -.6 .4 -1zM1161.8 782.5l2.7 1.8 1.1 -.8 -.2 -1 -1.9 -.9zM1162.6 761.5l3.9 2.6 5 -.1 4 1 1.6 -.5 -4.8 -3 -4.8 -1.5 -3 0 -1.5 .5zM1195.1 779.5l3.4 .8 2.7 -.8 -2.7 -.6zM1208.9 759.5l1.2 2 3.4 1.6 3 -.6 1.4 -2 -1.1 -3 -1.3 -.4 -5 .3zM1220 755.5l9.1 0 -.6 -1 -3 -.2zM1226.2 766.5l0 1 1.7 1 11.6 2.1 6 2.5 6 -2 5 -.1 3 .8 2 -1.3 -2 -1.2 -10 -1.8 -1.5 -1 1.6 -2 -1 -1 -7.1 -2.6 -8 1.2zM1264.5 777.5l2 1.1 2.6 -1.1 -1.6 -1zM1277.6 775.5l2.9 1 2.7 -1 -.5 -1 -2.2 -.6zM1281.9 771.5l1.6 1.2 5 -.6 6 1.5 4.1 -2.1 -4.1 -1.3 -5 .7 -5 -.4zM1295 760.5l4.5 1.4 5 -1.8 5.3 -.6 -2.8 -1 -5.5 -.1 -6.1 1.1zM1313 759.5l8.5 2.1 1.7 -1.1 -.7 -1 -2 -.5zM1315.5 777.5l3.7 0 -1.7 -.9zM1329 794.5l.5 1.2 3.4 -.2 -.4 -1.1zM1345.6 788.5l2.9 2.2 2.1 -1.2 -2.1 -1.7zM1352 782.5l2.5 2 1.8 -1 -1.8 -1.4zM1362.9 804.5l1.6 .3 4.6 -1.3 .6 -1 -6.2 -1.1 .5 1.1zM1374.6 780.5l.9 .7 1.5 -.7 -1.5 -.5zM1378.3 791.5l1.2 .8 .8 -.8 -.8 -.9zM1378.6 787.5l2.9 .5 2.5 -.5 -1.5 -1zM1405 767.5l-6.5 -.7 -13.7 2.7 6.7 1.6 7 -.2 5.7 -2.4zM1415.4 798.5l4.1 1.4 2.7 -1.4 -2.7 -1.1zM1426.4 782.5l1.1 1.2 2.8 -.2 -1.3 -1zM1439.4 786.5l1.2 1 5.9 -.2 9 2.7 7 -.4 4.7 -1.1 -9.7 -2 -2 -1.7 -2 -.6 -7 1.8zM1469.7 783.5l3.9 2 1.9 2.8 4 .1 2.1 -.9 .6 -1 -1.9 -2 -6.8 -2.2zM1487.2 779.5l4.3 3.8 3 .3 1.7 -1.1 -1.7 -2.5 -2 -1.3 -4 -.4zM1500.2 801.5l4.1 0 -2.8 -.6zM1513.5 801.5l6 .5 1.6 -.5 .4 -1 -2 -.8zM1574.8 779.5l2.7 1.3 2.8 -.3 -1.8 -1.2zM1633.2 788.5l-1.7 -2.5 -3 -.2 -3.5 .7 -.2 1 1.2 2 -4.5 .8 -15 -.5 -11 -1.6 -8 1.3 9.5 2 1.9 1 .6 1.3 7 1.1 2.4 -.4 .6 -1.2 2.8 -.8 16.2 -.7 4.6 -2.3zM1658.5 778.5l-5.1 1 5.1 0zM1675.4 801.5l.4 1 10.7 2.8 35 -1.8 -4 -2.7 -10 -.2 -1.4 -1.1 -3.6 -.8 -14 2.7 -9 -1.1zM1729 782.5l16.5 3.4 3.4 -.4 1.5 -1 -2.9 -1.5 -7 -1.4zM1749.5 808.5l3 .8 11 -.9 3 -1.4 7 -1 3.8 -1.5 -4.8 -1.3 -8 -.6 -2.2 .9 1.1 2 -4.9 1.4 -7 0 -2.1 .6zM1771.9 797.5l3.6 .9 5.7 -.9 -4.7 -1zM953.5 757.1l-.7 2.4 .7 1.3 1 -.1 .5 -2.2zM973.6 783.5l-1.1 -1.3 -1.9 1.3 1.9 .6zM977.5 767.5l-2.1 4 -.9 9.1 2.1 -1.1 2.8 -5 -.1 -3zM983.5 759.6l-2.7 3.9 1.7 1.3 1 -.2 1.1 -2.1 -.1 -1.9zM995.5 798.8l-.2 .7 2.2 .8 3 2.8 4 1 3 3 .4 -.6 -.4 -3.5 -2 -.1 -6 -5.6zM1022.5 785.6l-.7 2.9 1.3 4 4.6 1 .1 -1 -3.8 -3 .5 -3.1 -1 -1.1zM1027.5 777.1l-2 -.4 -1 1.3 0 1.5 2 -.3zM1056.5 782.9l-2.1 .6 -2.7 6 -.3 2 1.1 1.6 1 -.6 .2 -3 1.6 -2zM1063.8 768.5l.7 1.1 4 1.2 2.7 -1.3 -1.3 -1 -5.4 -.9zM1095.5 782.4l-.7 1.1 1.7 1.8 .3 -.8zM1118.5 728.4l-1.3 1.1 1 3 -2.5 3 5.8 2.9 2.8 -2.9 -.4 -5 -1 -1zM1145.5 759l-6.1 2.5 1 3 -1.2 3 .3 1.4 1.6 -1.4 -.5 -3 4.7 -3 .6 -1zM1159.5 753.8l-.8 .7 .8 1 1.3 -1zM1173.9 776.5l1.6 1.3 2.2 -.3 -2.2 -1.7zM1201 792.5l-1.9 0 -1.3 2 .7 .3zM1207.6 786.5l2.9 1.3 8 -1.7 6 .1 2.9 -.7 -3.9 -1.1 -7.1 .1 .4 -2 -4.3 -.7 -2.7 .7 -.3 2zM1231.8 791.5l2.7 1.8 1.7 -.8 -2.7 -1.7zM1245.8 778.5l5.5 3 1.8 2 3.4 .4 4.2 -.4 0 -1 -2.2 -1 -.2 -1 4 -2 -13.8 -1.6 -2.4 .6zM1266.5 790.5l2 1.4 2.1 -.4 .9 -1 -3 -2.1zM1291.8 782.5l3.7 .9 6.8 -.9 1.5 -1 -8.3 -1 -3.3 1zM1298.3 763.5l7.2 2.5 3 -.4 .7 -1.1 -2.7 -1.3 -7 -.5zM1428.7 793.5l12.8 2.3 3.4 -1.3 -.8 -1 -5.6 -.9 -7 0zM1464.7 800.5l-5.5 -2 3.6 -2 -2.3 -1.1 -7 2.6 -1.4 1.5 6.4 3.9 2 -.2zM1461.2 804.5l.2 1 8.1 1.4 6 -2.2 15.6 -.2 -6.6 -2.9 -7 -.7 -14 2.5zM1476.8 791.5l1.7 1.2 4.7 .8 -.3 -1 -3.4 -1.8zM1613.2 807.5l4.5 0 -.2 -1 -2 -.4zM1703.1 812.5l1.4 .5 2.9 -.5 -2.9 -.9zM1718.9 808.5l3.6 .8 3 -.8 -3 -.8zM1722.2 796.5l6.3 1.2 15 -.8 7 -1.7 5.6 -3.7 -.6 -1.1 -3.6 -.9 -8.4 -.9 -7 .4 -9.2 2.5 .2 1.1 6 -1.9 8 -.5 7 .7 .7 .6 -1 1 -5.7 1.6 -15 .2 -5 1.1zM1759.9 812.5l1.6 .8 2 -.5 1.1 -1.3 -2.1 -.9zM954.5 779.2l-1.1 2.3 1.1 1.3 1 -2.3zM976.1 786.5l.6 4 2.8 4.4 0 -4.4 -2 -3.1zM983.5 777.8l-.5 .7 .5 1.5 1 .6 1 -.5 -.1 -1.6zM1070.2 782.5l-.4 1 .7 1 2 .7 1.2 -.7 -2.2 -2zM1122.5 749.7l-.7 1.8 .7 1.3 1.4 -1.3 -.4 -1.5zM1257.9 805.5l6.6 3.6 1 -.6 -1.6 -3zM1259.8 795.5l1.7 1 1.1 -1 -1.1 -1.1zM1436.3 803.5l1.2 .7 .9 -.7 -.9 -.6zM1115.5 645l.5 2.5 -1.3 1 -3.2 1 -2 -.9 3 -4.4 1 -.3zM1122.6 678.5l2.9 -.6 1.9 .6 .1 1 -3 1.2zM1118 680.5l-.3 2 -4.2 2 -.3 3 -3.5 3 -1.5 3 .3 2 2 2.6 4 -1.4 2.5 .8 -3.4 7 -.2 4 -1.9 1.5 -3 .3 -2.9 -.8 .6 -2 3.4 -4 -1.1 -.9 -5 1.1 -9.1 -1.2 -3.9 -1.6 -3 -.3 -4.6 .9 -.3 3 -3.2 1 -1.3 -1 1.2 -4 -2.8 -1.9 -2 0 -3.1 1.9 4.5 6 -3.4 3.7 -7.1 -7.7 3.1 -5.4 2 -.6 4 .7 2 -.4 4 -7.5 2 -1.1 9.9 7.3 1.5 2 2.6 .9 1.8 -.9 1.1 -2 7.1 -5 -.2 -3 1 -3 -.6 -2 1 -3 8.5 0zM1086.4 682.5l1.1 -1.1 3 -.8 4 .3 5.1 2.6 2.3 3 .3 2 -2.7 1.4 -3 -.3 -4 -3.8 -5 -1.6zM1121.4 692.5l1.1 -1.5 4 2.2 6.9 1.3 -.9 1.4 -3 .6 -7 -2.5zM1166.8 696.5l2.4 -1 5.3 -.1 2.3 .1 .5 1 -2.8 1.3 -4 .5 -3 -.5zM950.5 697.6l1.7 8.9 -.6 3 -1.1 1.6 -1 -.7 -.3 -2.9 .3 -7.8zM926.5 700.8l1 .2 .3 4.5 -.3 4.3 -1 .4zM1119.9 704.5l1.4 -2 3.2 -1.3 2 .3 3.2 2 -7.2 4.2 -1.2 -.2 .1 -1zM1132.8 702.5l1.7 -.2 1.1 1.2 -1.7 0zM1150.6 703.5l2.9 -1.4 2.6 .4 1.6 1 .3 2 2.7 3 -2.2 1 -3.4 -1 .1 -2 -4 -2zM1184.3 704.5l2.2 -2 8 -.8 3.8 .8 .6 2 -2.4 1.7 -4 .5 -6 -.6zM1004.5 702.7l1.4 3.8 .3 4 -1.6 7 -1.1 1.5 -1.5 -1.5 -.3 -3 1.8 -11.4zM1200.9 705.5l.6 -1.1 2.6 .1 -.2 1zM964.5 706l2.1 6.5 -2.1 5.8 -1 -.3 -.7 -1.5 -.8 -6 1.5 -4.4zM1140.8 711.5l.7 -1.2 3.2 .2 -.8 1zM987.5 713.2l1 0 2.1 7.3 -2.1 5.5 -1 .7 -1 -.8 -.6 -2.4zM1066 713.5l7.5 -.7 3 1.9 4 -2 4.6 2.8 1.3 2 -1.9 2.5 -5 .6 -1.7 -1.1 -2.3 -3.5 -6 .6zM1019.5 713.5l3.2 7 .5 3 -1.3 4 -2.4 1.3 -2.2 -2.3 -1.2 -3 .9 -5zM1286.8 715.5l7.7 -.7 9.7 1.7 1.7 1 -4.4 1.2 -9 -.4 -4.1 -.8zM1373.5 718.5l-2.3 1 -19.7 .5 -9.9 1.5 -1.1 1 .3 1 3.4 3 -1 1 -3.7 .5 -5 -.2 -13 -2.4 -17 -.7 -4.4 -1.2 -.2 -1 4.6 -1.8 16 1.5 10.7 -.7 -.3 -1 -1.8 -1 7.4 -1.5 2.6 -1.5 .4 -1 2 -.3 11 1 17 0 2 .5zM1226 718.5l.4 -1 5.1 -.2 8.4 1.2 1.1 1 -8.5 .7zM972.5 718l1.1 .5 1.2 5 -.1 3 -1.2 1.8 -1 -.6 -.5 -2.2zM995.5 718.2l1 .5 .3 2.8 -.3 2.6 -1 .3 -.6 -2.9zM1285 747.5l-15.5 2.7 -8 -.2 -7.7 -1.5 -3.3 -3 -13 -2.6 -3.6 -1.4 15.6 -.4 5.8 -1.6 0 -1 -6.1 -4 2.3 -1.5 17.1 -.5 .4 -1 -4.5 -2.3 -13.1 -.7 6.3 -4 -.7 -1 .3 -1 11.2 -2 5 .1 5 .9 -1 .5 -12 1 -3.5 1.5 10.9 3 9.3 4 .7 1 -6.3 2 1 2 -.9 1 -6.8 3 -.1 1 2.6 3zM1207.8 723.5l1.4 -1 6.3 -1.3 7 -.2 3.4 1.5 1.1 2 -.5 2 2.2 1 17 2 -.5 1 -7.7 1.6 -8 .9 -8 -.5 -12.7 -4 .7 -2zM962.9 722.5l1.6 .4 1.4 2.6 -.2 3 -1.2 1.4 -1.5 -.4 -1.5 -2 0 -3.3zM1003.5 723.6l2 1.9 .3 2 -2.3 2.8 -1.4 -3.8 .3 -2zM1076.4 725.5l1.1 -.6 1.7 1.6 -.7 1zM1407.4 727.5l1.1 -1.1 8 -.9 5 .4 3.3 1.6 -2.8 1 -7.5 .3 -4.8 -.3zM1288 728.5l1.2 -1 4.3 -.4 16 .6 4.1 .8 4.9 3.5 10.4 1.5 -3.8 2 -4.6 .8 -15 .6 -7.6 -1.4 -.9 -1 2.1 -2zM1347.3 730.5l.1 -1 5.1 -.5 8 1.4 .8 1.1 -6.8 .3zM980.5 730.4l1 2.1 -1 1.5zM1196.4 731.5l1.1 -1 3 -.3 2.5 .3 1.1 1 -2.6 .9zM995.5 732.1l1 .4 -1 2.2zM1553 736.5l.3 -1 2.2 -1 22 .6 4.8 1.4zM1349.5 739.5l8.4 -2 -.6 -2 5.2 -.6 27 -.1 8 1.3 14 .4 15 -1.9 3 .9 -.3 2 1.2 2 -1.9 1.2 -12 -1.2 -11 .3 -7 -3 -15 .1 -6.6 1.6 -17.4 2.1 -8 .1zM1442.7 738.5l.2 -1 1.6 -.5 8 -.1 2.9 .6 4.1 2.7 3 .4 5 -.7 7 -2.2 2.8 .8 .3 3 -3.1 1.5 -10 1.4 2.8 2.1 -2.3 1 -10.5 .9 -9.7 -1.9 -.8 -1 5.5 -1.4 13 -.6 -6.1 -2 -9.9 -1.3zM1529.5 739.5l-.3 1 -4.7 .7 -5.3 -.7 3.3 -1.8 5 -1.3 1.4 .1zM1283.3 740.5l1.2 -1.3 6 -.9 13 -.1 3.6 1.3 -1.6 2 -6 1.2 -8 -.3 -6.2 -.9zM1312.4 748.5l4.1 -1.3 10.4 .3 .3 -1 -9.8 -2 .3 -1 8.8 -2 7 -.6 16 1.2 .1 1.4 -1.7 1 -.3 1 8.1 3 .9 2 -4.1 1.2 -10 .2 -16 -2.5 -10 1zM1367.1 744.5l2 -1 11.4 -1.8 22 -.9 2.3 .7 -4.6 2 -11.7 -.6 -19 2.8 -1.9 -.2zM995.5 745.3l1 2.2 -1 .6 -1 -1.6zM1020.5 745.3l2.1 2.2 .7 3 -2.8 4.7 -2.4 -1.7 .4 -7zM1802.6 745.5l4.9 -.4 0 1zM1537.6 749.5l-.1 -1 5 -1.2 8.4 .2 -7.4 4 -3.5 0zM1713.1 752.5l2 -3 4.4 -1 13 -1.3 15.7 .3 -15.7 2.7 -3.3 1.3 10.5 4 -2.5 1 -15.5 0 -4.3 -1zM1367.7 752.5l1.8 -2.6 4 -.6 17.8 2.2 3.1 1 .9 1 -1 2 -2.1 1 -15.7 .9 -6 -1 -2 -1.5zM1606.8 750.5l2.2 -1 9.5 -.5 13.5 .5 .4 1 -3.9 1.4 -8 .7 -8 -.7zM1779.2 749.5l5.9 0 -1.2 1 -2.4 .2zM1807.5 752.2l0 6.5 -16 -1.9 -14 1 -12 -2.3 3 -.3 8 1 9 -1.4 10 .4 3.2 -.7 -.6 -1 .8 -1zM1013.5 754.3l1.7 3.2 -1 2 -1.7 1.1 -.9 -2.1zM1531.5 758.5l2 -1.1 9 -.6 13 .6 10 -.8 4.4 .9 -6.4 2.1 -9 .1 -8 1.1 -11 -.7zM1603.1 763.5l1.1 -1 7.3 -1.9 2.5 -2.1 2.5 -.4 22 .5 17.7 1.9 -.8 1 -4.9 .7 -26.9 1.3 .8 1 -1.8 1 -3.1 .3zM1591.4 759.5l15.2 0 -1.1 .7 -7 .3zM1778.9 759.5l-.2 1 -7.2 1.6 -8.5 3.4 14.2 1 -8.7 2.3 -8 .8 -14 -.1 -11.3 -4 .7 -1 10.6 -1.5 7 -2.5 13 .9 9 -2.3zM1672.8 761.5l5.7 -1.8 18.7 1.8 -3.2 1 -4.5 .1zM1785.6 765.5l7.9 -2 14 -.2 0 13.9 -5.1 .3 5.1 .3 0 3.8 -23 -.1 0 -1 6.5 -2 -4 -2 2 -1 7.5 -.9 2.2 -1.1 -.5 -1 -7.2 -3 12.1 -3zM1647.6 765.5l5.9 -.6 4.8 .6 -7.8 .6zM1667.2 765.5l8.3 -.4 3.7 .4 1.5 1 -8.2 1 -3 -.5zM1628.8 769.5l10.7 -2.2 5.3 1.2 3 3 -2.3 1.4 -7 -.1 -7.5 -1.3zM1694.6 769.5l5.2 -2 2.7 -.3 7.4 .3 3.4 1 -3.7 1zM1586.2 771.5l1.2 -1 3.1 -.5 6.7 .5 -1 1 -2.7 .6zM1740.1 771.5l-2 1 -9.2 1 0 2 -4.4 1.6 -26.9 -2.6 31.9 -3.7zM1695.9 779.5l-6.4 2.7 -10.7 -1.7 10.7 -2.1 5.1 .1zM1548.8 783.5l7.1 0 -4.4 1.3 -2.3 -.3zM1798.3 786.5l9.2 -1.4 0 5.9 -6.6 -.5 -1 -1 3.3 -1z"/>
<path fill="#23008d" d="M454.5 419.8l3.8 180.7 1.2 21.2 1.6 -21.2 6.4 -215.1 1 0 5.7 184.1 1.3 23.5 1 -.9 2 -31.4 3 -147.4 3 75.4 11 -103.4 2 -8.1 5 36.1 10 106.3 1 1.9 5 -71.5 1 -5.7 3 45 6 121.1 1 2.4 1 -9.6 1 1.4 4 74.7 2 23.2 6.3 22 2.7 5.4 2 -3.4 1 -4.7 3.6 -33.3 7.4 -151 2 -26.4 4 67.3 1 6.2 1 -.9 2 -21.5 3 -64.7 1 -8.7 3 59.5 1 10.3 .9 -7.1 4.1 -85.1 1 -8.2 4.2 81.3 .8 4.9 4 -66 4 72 1 9.8 1 2.6 1 -3.5 1 -12.3 5 -121.3 1 6.5 3 59.5 3 -62.8 3 70.7 1 4.4 4 -90.5 3 34.7 4 -96.2 2 27.8 1 -4.7 3 -37.9 1 0 5 62.3 6 97 1 -5.7 2 -35.5 1 5.6 7.9 176.6 1.1 4.8 1 -2.5 5 -159.3 2 -43 3 69.6 1 -2.6 2 -60.9 1 -10.9 2 48.2 1.1 .6 1.9 -23.2 1 .4 2.3 20.8 1 23 1.9 19 .4 17 8 106 0 16 1.4 5.6 2 -2.7 1 .1 5.6 -61 3.4 -49.9 2.9 -32.1 1.1 -4.6 2.3 6.6 1.1 6 1.5 28 2.9 28 .3 13 2.9 23.7 1 3.8 3 -37.4 1 3.7 4.9 95.2 1.1 4.6 4.7 -31.6 1.8 -31 1.8 -13 -.3 -15 2 -11.2 2 15.8 3 39.5 1.7 -7.1 .4 -29 .9 -6.9 1 2.8 2.9 67.1 2.1 15.6 2.4 -11.6 1.3 -27 2.1 -8 -1 -2 1.2 -26.9 1 .1 1 13.8 -.3 13 1.3 4.8 .8 8.2 .1 12 1.6 14 0 13 2.5 15.8 1 1.6 2.7 -41.4 1.3 -5.5 1 .7 1 5.6 1.6 25.2 .3 18 1.1 6.5 1 .4 2 -24.3 1 .1 2 25 1 2.7 2.5 -27.4 1.5 -41.5 1 -4.5 .3 21 1.9 22 -.5 11 1.3 6.4 1 -.9 1.3 -27.5 2.7 -31.5 1 -5.6 2 16.1 1 -.7 2 -12.3 1.3 -16 1.6 -7 1.1 -1 1.6 5 2.4 17.5 1 2.4 1 -1.9 .9 6 2.6 48 2.8 20 .6 12 1.1 -4.5 1 -.2 2 19 1 .1 1.2 -3.4 -.2 -11 2.3 -27 .4 -14 2.3 -18.4 1 3.5 2 23.5 1 -2.8 3 -32.8 1 7.3 1.1 23.7 1.9 17 1 1.1 1.3 -6.1 3.5 -38 3.1 -15 -1.1 -5 1.2 -11.5 1 9.5 -.8 6 1.8 3.3 3.6 32.7 .4 1.9 1 -3 1 1.1 3 33.2 4 -25.3 2 14.2 1 3.3 3 -23.9 1 2.6 .5 10.9 1.8 7 1.4 16 2.3 9.2 2 15.9 4 -36.7 4 34.7 1 -4.1 3 -32.2 1 .2 1 6.1 1.5 22.9 1.5 8.1 1.2 -6.1 1.4 -23 1.4 -8.8 2 9.7 -.2 7.1 2.2 23 1 2.2 1 -2.2 2 3.9 1 -.1 1.2 -4.8 .4 -24 1.4 -8.2 1 -.6 .6 2.8 .1 8 1.7 12 -1.1 5 1.7 3.6 3.3 -6.6 -1.4 -2 .8 -3 .2 -19 1.1 -3.8 1 .5 1.4 9.3 .1 18 1.2 11 1.3 4.5 1.2 -3.5 .7 -7 1.2 -1 .9 3 1 19.2 2.4 -29.2 1.6 -3.5 1 -.4 .9 3.9 -.2 5 3.3 6.3 .8 -2.3 2.1 -2 -.1 -3 1.1 -4 -1.8 -10 1.6 -5 .2 -4 1.1 -1.2 1.4 2.2 2.1 13 -1.5 6 1.8 3 -.8 2.1 -3.1 1.9 4.1 1.7 1 -.4 .6 -2.3 -.7 -3 2.1 -5.2 1 1.9 1 .1 2 -4.6 3 1.2 2.2 3.6 .3 6 1.5 3.1 5 -10.1 1 .2 3 4.1 1 -.2 2 -2.4 1 .4 2 5.7 3 -1.4 3 .3 .3 5.3 2.1 7 -2 4 .3 2 2.3 5.9 2.6 -.9 -2 -9 2.4 -3.7 2 1.7 1 2.3 .2 3.7 -1.8 5 1.4 3 0 3 1.2 1.1 1.2 -2.1 -.3 -3 1.6 -7 -.1 -23 2.4 -3 .7 -4 3.5 -.5 3 -3.9 1.3 .4 1 3 -.5 3 -1.7 3 2.1 2 .5 2 -1.7 4.3 -4 .7 -1.6 4 .5 13 1.1 2.1 4 -2.9 3 -.4 3.5 -1.8 1.5 -4.5 6 -2.1 3 -4.6 1 -.4 3.4 1.6 2.6 3.5 1.3 -.5 -2.9 -4 1.1 -5 -5.5 -2.2 -2.8 -5.8 .1 -3 1.7 -1.6 3 4.4 6 3.2 .5 2 -1.1 3 3.9 2 .7 3 -.4 5 1.4 .5 2.5 -2.5 .9 -4 -3.3 -5 1.2 -2 3.4 -2 -.6 -4 -1.1 -1.8 -2.2 -.2 -.8 2 .4 4 -1.4 1.9 -4.6 -8.9 .3 -4 -.7 -2 -4.4 -3 -.8 -2 .9 -2 2.3 -1.4 5 -6.3 3 13.1 11 4.4 7 1 1.2 -.8 -5.3 -10 0 -2 1.1 -1.5 2 -.4 2 .9 4.3 5 .9 3 -.1 6 -4.1 .8 -3 1.9 -5 .9 -2.9 3.4 -.7 2 .2 4 1.1 2 1.3 .4 1.9 -.4 .9 -1 .9 -6 4.3 -2.1 5 -.1 1.5 1.2 1.3 3 1.2 .5 4.8 -.5 -2.8 -1.8 -2.2 -3.2 1.6 -4 2.6 -2 3 .3 2.5 2.7 -.1 3 -2.7 4 1.3 .3 5.9 -4.3 .6 -2 -1.3 -2 .4 -1 4.1 -4 6.3 -1 4.6 1 2.4 5 -.2 1 -3.2 3 1.2 3 -1 6 -.8 1.5 -5 1.5 -1.3 2 .3 2 1 1 4 -.6 5.7 -3.4 -.9 -9 1.7 -4 -1.4 -4 2.9 -1 2 3.9 2.3 1.1 2.4 0 2.3 -1.9 7 3.3 3.1 -3.4 .1 -5 -.6 -1 -5.6 -1.7 -1.9 1.7 1.2 3 -2.3 2.6 -2 .6 -4 -.7 -1.6 -2.5 1.9 -4 -.9 -4 -7.4 1.4 -2 -1.4 -1 -2 -4 -1.1 -4.8 -3.9 .2 -4 -2 -4 .6 -1.4 2 -.9 6 2.3 1 1.1 .4 2.9 2.6 2.5 2 .1 5 -2.4 8 -.2 2.4 1 .6 1 -1.1 2 2.1 1.6 2.6 -.6 .1 -3 4.2 -3 3.1 -.5 2 .7 1.1 1.8 -1.8 3 .7 3 -1 1.2 -4.6 1.8 .9 3 -.1 3 1.8 .8 3 -.2 3 3.8 1.3 -1.4 .1 -5 1.6 -2.1 5 .2 3.1 1.9 -1.1 2 -5 3 -2.3 3 1.2 3 -1.7 4 -1.2 6.8 6 -4.4 7 .3 2.7 -.7 3.3 -2.1 11 -1.2 3.9 1.3 4.7 3 .3 1 -1.6 2 2.5 2 -5.8 4.3 -.7 1.7 5.7 2.2 2 -1 .1 -1.2 3.9 -1.5 16 -.3 5 -1 3 1 .5 -1.2 -2.5 -1.9 -2 1.6 -10 -1 -2.3 -1.7 .3 -2 -9 -3 .6 -2 -1.6 -4.9 -4 1.4 -7.2 -2.5 1 -6 -3.6 -4 -.6 -3 6.4 -1.8 9 .1 4 1.4 1.7 2.3 -.3 1 -9.1 2 -.8 1 1.2 1 5.8 2 -6 1 -1.5 1 4 1.7 13 -.5 .8 .8 -4.2 5 1.4 .9 4 .4 16 -4.9 3 -.1 .8 .7 -.7 2 1.6 3 -.2 1 -11.9 2 -1.4 2 1.8 2 3 -1.4 5 .8 3 1.4 7 -4.4 8 -.1 15.2 3.7 .9 1 -.3 2 -11.8 .5 -8 -.9 -5.4 1.4 .4 .7 13 -.5 11 3.1 12 .3 1.6 1.4 -3.1 3 12.5 2.4 14 -2.3 3 .5 .7 1.4 2.3 1 4 0 7 -1.9 9 1.6 2.9 -.7 .3 -1 -8.5 -3 3.3 -1.1 9 -.6 7 2 3 .1 .4 -1.4 -.7 -1 -2.7 -.7 -18 -.6 -9 .5 5.2 -3.2 -1.2 -1.2 -5 -1 -4 .4 -4.3 1.8 -21.7 1.6 -7 -.2 -4.8 -1.4 2.9 -3 5.9 -1.4 9 -.2 12 1.3 10 -.6 2.4 -1.1 -.8 -2 .9 -1 3.5 -.6 3 .4 2.5 2.2 5.5 1.8 10 -.2 20 2.4 0 1 -2.3 2 -.1 1 2.4 .9 10 -1.8 4.8 .9 -2.4 3 -5.4 1.9 -12 -.4 -7 .6 -.4 .9 9.9 3 -7.5 3.3 -5 0 -7 -2.1 -3 .6 -.3 1.2 1.3 2 7 2.9 8 -.3 2.5 -.6 0 -1 15.5 -1.2 2.6 1.2 -1.2 2 2.9 1 4.7 -.1 4.3 -.9 -1.6 -2 1.7 -1 14.1 -2 -2.4 -1 4.3 -2 -1 -1 -8.2 -2 1 -1 7.8 -1.5 20 -1.3 17 -.3 5 .8 3.5 1.3 -.2 1 -3.3 2.4 -4.5 1.6 -.7 1 3.7 1 -.2 1 -1.5 1 -14.8 1.1 -4 1.9 -9 1.5 -2.1 1.5 .1 1.4 1 .9 10 -2.8 9.9 .5 2.1 4 -5 3.3 -.4 .7 2.4 .9 11 -5.3 13.3 -.6 .1 -1 -4.4 -2 -9.5 -2 1.5 -1.3 4 -1.3 10.2 -.4 9.8 2 5.4 2 .5 1 -2.2 2 2.3 1 3 -.4 3.8 -2.6 -1.1 -1 .8 -2 5.1 -3 -12.6 -1.1 -10.6 -3.9 0 -1 10.6 -1.5 6 .2 10.9 2.3 4.5 2 .7 2 8.9 1.2 7.4 -.2 -2.9 -1 -.4 -1 2 -2 -1.1 -.7 -14 -1.8 -7 -3.2 -14.1 -2.3 -7.7 -2 -1.3 -1 12.1 -.3 14 -1.9 9 1.7 1.3 1.5 -1 3 6.7 1.7 7 -.6 2.6 -3.1 6.4 -2 7 -.2 2.8 1.2 -2.4 2 -8.2 3 1.1 3 5.4 3 -2 2 -7 2 4.3 1.7 4.5 5.3 11.2 1 1.8 1 -16.5 3.4 -7.1 3.6 .1 1 12 1.9 4 2.2 5 1.1 8.4 -.2 -8.4 -3.5 -8 -.9 -1.3 -.6 .1 -1 8.2 -.1 1.5 -.9 -.1 -1 3.6 -1.4 20 .2 1.2 2.2 4 3 6.5 2 -6.7 2 .1 1 2.9 .5 26.2 -3.5 2.5 -2 -4.7 -1.5 -6.4 -.5 .3 -1 19.1 -1.1 2.8 -.9 -4.7 -1 -1.1 -1 3.8 -2 -.6 -1 -2.2 -.7 -4 .1 -3 1.4 -9 -1.3 -5 .8 -11 -.3 1 -1 3 -.6 12 -.4 3.8 -1 -1.6 -1 -23.2 -.1 -11 -1.5 -6 -3.1 -7 .6 -11.8 -.9 6.8 -1 12 .6 8.6 -2.6 -8.2 -2 -1.4 -1.3 -3 1 -2.4 -.7 1.4 -1.5 2 -.5 24 2.8 8.9 .2 -6 2 7.3 3 10.8 1.3 8 2.1 28 .3 11 -1 8.2 2.3 -5.2 3.1 -13 1.9 -18.7 5 10.7 1.9 26 -2.5 5.4 .6 -3.1 1 1.4 3 -4.7 .7 -14 -.6 -10 -2 -7 .7 -2.8 1.2 9.1 2 2 1 1.7 2.4 9 .1 2 -1.8 6 -1 13 -.1 4.2 -2.6 -.2 -2.5 1.8 -1.5 -1.3 -2 1.8 -2 -2.5 -1 -5.8 -.2 -1.7 -.8 10.7 -3.3 8 -.7 10.1 1 1.8 1 -5.6 2 7.7 .4 1.1 -.4 .1 -3 -3.2 -2 11 -4.8 11 1.1 1.1 .7 -1 1 .5 2 -6.9 2 1.3 2 -4.1 2 1.6 2 -4.5 .6 -4.3 2.4 -8.7 1.4 -.8 .6 .4 1 4.1 2 -3.7 2.8 -4.1 1.2 1.1 .4 17 -2.5 5.3 1.1 .2 1 4.5 1.2 2.8 -1.2 -1.3 -2 4.1 -1 24.6 -1 1.8 -1 -4 -1.5 -21.2 -1.5 9.2 -2.7 11 -.1 6 1.7 7 .7 15 -2.2 15 2.1 3.4 -1.5 -7.4 -2.7 -4 -.6 -14 .9 -5.7 -2.6 6.7 -1.5 33 .2 19.6 5.3 -.2 1 -2.3 1 1.9 2.3 -7 1.7 .9 1 4.8 1 1.4 2 10.9 1.1 18 -.9 0 3.1 -13 -1 -11 1.5 -8 -1 -4.4 1.2 4.4 1.1 10 -1 5.8 1.9 -8.1 2 .8 2 -2.1 1 4.8 2 -1.9 1 .6 2 -2 2 2.1 1.7 7.6 -2.7 -1.4 -2 7.7 -3 -1.7 -3 1 -1 8.8 -1.4 0 21.2 -216 .4 -222 3.5 -132 3.9 -120 6.9 -37 3.3 -37 6 -46 1.7 -59 4.9 -12 1.8 -11 3.3 -13.5 5.5 -30.5 16.1 -7 1.3 -17 .3 -9 2.4 -7 4.1 -15 13.1 -6 3.4 -5 .6 -14 -1.7 -11 .1 -15 2 -11.9 3.3 -7.1 3.3 -7 4.6 -7 6.1 -4.3 5 -299.7 0 0 -365.4 1 -3.5 1 .5 4 20.2 3 7.8 1 -1.2 2 -11.4 1 1 4 36.5 2 9.2 1 1.8 1 -3.5zM723.5 632.1l-1.3 1.4 .3 2.3 1 .1zM838.5 703.3l-.5 3.2 1.5 3.2zM944.5 759.7l-2.1 2.8 2.1 1.3 1 -2.3zM953.5 756.8l-.9 2.7 .9 1.5 1 0 .7 -2.5 -.7 -1.6zM959.5 744.2l-1.3 2.3 1.3 2.5 .6 -2.5zM977.5 747.7l-1.1 2.8 1.1 3.7 3 -1.2 2.8 4.5 0 2 -2.8 3.9 -6 -4.8 -2 .5 -3 -2.6 -1 .7 -1.7 5.3 .6 7 1.1 .8 3 -7.7 1 -.5 4.5 4.4 -2.6 9 .1 5.6 2.4 -1.6 2.7 -5 -.9 -8 1.8 -2.8 2 1.3 1 -.1 .9 -1.4 .2 -3 -1.1 -2 1 -.7 1 -3.3 -2 -5.7 -2 1.6zM998.5 789.3l-.3 1.2 1.3 1.2 .6 -1.2 -.6 -1.1zM1008.5 738.2l-.9 2.3 .9 1.3 1 -.2 1.8 -2.1zM1009.5 788.8l-1 -.3 -2 2 .4 1 1.6 .2 1 -1zM1021.2 762.5l0 3 1.3 1.5 5 -.7 2 -1.3 5 5 2 .7 1 -.9 -.5 -3.3 -2.5 -2.1 -2 -.5 -2 1 -3 -2.6 -3 -.6zM1039.9 799.5l2.6 1.6 .5 -.6 -1.5 -1.6zM1044.5 773.8l-1 1.7 .2 2 1.8 3.3 1.1 -1.3 -.8 -5zM1050.8 772.5l1.1 2 2.6 1.5 3 -.4 .6 -1.1 -5.6 -2.1zM1067.4 747.5l-.9 -1 -2 .5 -2.4 2.5 -2.3 4 -7 3 -.7 2 3.4 .4 4 2.2 3 -.5 1.8 -2.1 2.5 -6zM1077.1 753.5l-2.6 .2 -2.8 1.8 0 3 1.9 1zM1078.5 768.5l2 2.6 2 0 .2 -1.6 -1.2 -1.7zM1086.5 763.5l-.7 2 .7 2.1 .8 -1.1zM1089.5 784.2l-1 -.4 -1.3 .7 -1.2 3 .5 .9 3.2 -1.9zM1094.5 766l-1 3.6 1.1 -1.1zM1095.5 782.3l-.8 1.2 .4 1 2.4 1.5zM1115.5 745.5l-.8 1 1.8 1.6 .5 -.6zM1122.5 749.3l-.9 1.2 .9 2.6 1.2 -.6 .5 -2zM1126.5 755.7l-1 0 -1.6 1.8 .6 1.7 2.3 -1.7 .4 -1zM1128.5 743.4l-.9 1.1 .9 2 1 .1 1 -1.1 -.2 -1zM1142.4 752.5l-.9 -.4 -4 2.4 -3 -.8 -.8 .8 2.8 2.2 3 -.2 2.6 -1zM1143.7 755.5l1.8 1.2 2.7 -.2 .1 -1 -.8 -.3zM1153.5 764.5l-3.9 3 .9 3.6 2 .1 1 1.7 .6 -.4 -.2 -3 1.2 -2zM1158.5 744.3l-1.7 2.2 0 1 1.7 .8 1.7 -.8 .4 -1 -1.1 -2zM1161.9 761.5l4.6 2.8 5 -.1 4 1 2.1 -.7 -5.1 -3.1 -5 -1.6 -4 .3zM1194.6 779.5l1.9 .9 6 -.8 .3 .9 1.9 0 -.9 -1 -8.3 -.8zM1208.6 759.5l1.1 2 3.8 1.7 3.4 -.7 1.4 -2 -.8 -3.8 -6 0zM1225.6 766.5l.1 1 1.8 1 12 2.3 6 2.4 7 -2 7 .7 1.8 -.4 .5 -1 -2.3 -1.3 -9.3 -1.7 -1.7 -1 2.1 -2 -.5 -1 -8.6 -2.8 -9 1.5zM1263.8 777.5l2.7 1.2 2.9 -1.2 -1.9 -1.1zM1276.1 791.5l4.7 0 -2.3 -.5zM1276.9 775.5l3.6 1.1 3 -1.1 -.1 -1 -2.9 -.8zM1281.5 771.5l.2 1 1.8 .4 5 -.5 6 1.2 4.5 -2.1 -4.5 -1.3 -10 .2zM1315.1 777.5l2.4 .6 2.3 -.6 -2.3 -1.1zM1328.6 794.5l-.1 1 1 .4 3.8 -.4 0 -1 -.8 -.2zM1345.3 788.5l3.2 2.3 2.4 -1.3 -2.4 -1.7zM1351.6 782.5l2.9 2.1 2 -1.1 -2 -1.5zM1362.7 804.5l1.8 .4 5.6 -1.4 .1 -1 -6.7 -1.3zM1374.4 780.5l1.1 .9 1.8 -.9 -1.8 -.6zM1406.1 767.5l-7.6 -.8 -15.2 2.8 2.1 1 6.1 .7 8 .1zM1414.2 798.5l5.3 1.6 2 -.4 1.1 -1.2 -3.1 -1.2 -5 .6zM1424.2 782.5l3.3 1.9 4.2 -.9 -.9 -1 -2.3 -.6zM1438.7 786.5l1.8 1.3 6 .2 9 2 7 -.3 5.9 -1.2 -10.4 -2 -3.5 -2.4 -14 1.5zM1466.7 782.5l6.5 3 .8 1 -.2 2 4.7 .4 3.7 -1.4 .3 -1 -1.8 -2 -7.2 -2.3zM1487.1 778.5l-.3 1 3.7 3.6 3 .8 3 -.5 -.2 -1.9 -2.8 -2.7 -3 -.8zM1499.4 801.5l3.1 .7 2.6 -.7 -3.6 -1zM1512.5 801.5l7 .6 2.2 -.6 .2 -1 -2.4 -.9zM1513.5 788.5l2 1.2 1.5 -.2 .8 -1 -2.3 -.7zM1606.1 808.5l.4 1 4.6 -1 -1.6 -.7zM1612.6 807.5l1.9 .7 5.2 -.7 -4.2 -1.6zM1674.9 801.5l1.6 1.5 10 2.4 15 -1.2 17 0 3.6 -.7 -4.6 -3 -9.3 0 -1 -1 -4.7 -.9 -13 2.4 -10 -.8zM1756.5 791.5l-.2 -1 -2.8 -1 -15 -.9 -9.9 1.9 -2.1 1 0 1.3 2 .4 5 -2.2 7 -.6 7 .4 1.2 .7 -1 1 -5.2 1.4 -15 -.1 -6.1 1.7 .2 1 5.9 1.3 16 -.7 8 -2.1zM1779 804.5l-6.5 -1.4 -8 -.7 -2.6 1.1 .9 1 -.4 1 -4.9 1.2 -6 .1 -2.6 .7 0 1 3.6 1 11 -.8zM954.5 778.7l-1.3 2.8 1.3 1.5 1.3 -2.5zM973.5 782.2l-4 1.2 -1.8 2.1 .8 .3 2 -1.6 3 .1zM975.5 785.9l1.1 4.6 2.9 4.6 .1 -4.6 -2.1 -3.3zM983.5 777.5l-.5 2 1.5 1.2 1.5 -1.2 -.4 -1zM995.3 798.5l-.3 1 2.5 1 3 2.9 4.4 1.1 2.6 2.8 .8 -2.8 -.8 -1.8 -2 -.3 -6 -5.3zM1022.5 785.4l-.8 3.1 1.3 4 2.5 1.1 2.5 -.1 -.1 -1 -3.7 -3 .3 -3.5 -1 -1zM1027.5 776.8l-2 -.4 -1 1 0 2.5 3 -1.4zM1059.5 782.4l-4 .1 -1.3 1 -3 7 1.3 2.7 1.2 -.7 .1 -3 1.6 -2 2.1 -4.7zM1078 764.5l-1.5 -1.9 -1 .4 -1 2.8 -2 2.3 -5 .2 -3 -1 -.9 1.2 .9 1.3 4 1.1 4 -1.3 4 1.1 1.8 -1.2zM1131.5 762.2l-1 .2 -2 2.9 -7 2.9 -1.5 2.3 1.5 .5 3 -1.5 5 -.2 1.4 -1.8 -.3 -2zM1145.5 758.6l-6.4 2.9 1.2 3 -1.2 3 .4 1.6 1.7 -1.6 -.3 -3 5.2 -4zM1158.4 754.5l1.1 1.2 1.7 -1.2 -1.7 -.9zM1161.3 782.5l3.2 2.1 1.5 -1.1 -.5 -1.3 -2 -.9zM1173.5 776.5l2 1.6 2.7 -.6 -2.7 -1.9zM1177.3 771.5l-.8 -1 -1.7 1 1.7 .7zM1201.2 792.5l-.7 -.7 -1 .3 -2 2.4 1 .4zM1201.6 791.5l.9 .5 1.1 -.5 -1.1 -.7zM1207.2 786.5l2.3 2 8 -1.9 8 -.3 2.6 -.8 -4.6 -1.3 -5 .2 -.8 -1.9 -5.2 -.8 -3.2 .8 -.4 2zM1231.5 791.5l3 1.9 1.9 -.9 -2.9 -1.8zM1245.4 778.5l5.4 3 1.6 2 4.1 .6 5 -.6 -.2 -1 -2.1 -1 -.3 -1 4.6 -2 -15 -1.8 -2.8 .8zM1266.2 790.5l.5 1 1.8 .5 2.8 -.5 .7 -1 -3.5 -2.3zM1276.2 802.5l3.3 .6 2.1 -.6zM1291.3 782.5l4.2 1.1 8 -1 1.1 -1.1 -9.1 -1.1 -3.7 1.1zM1384.4 787.5l-1 -1 -1.9 -.3 -6.3 2.3 1.3 .7zM1428.2 793.5l12.3 2.5 4.8 -1.5 -.7 -1 -6.1 -1.1 -7 .1zM1451.8 799.5l4.7 3.3 4 1.2 .3 1.5 9.7 1.4 3 -1.7 3 -.4 16.2 .7 -1.2 -1.2 -7 -3.1 -10 -.2 -5.4 1.5 -6.6 .5 -.4 -.5 3.8 -2 -6.2 -2 3.5 -2 -1.7 -1.2 -8 2.5zM1476.4 791.5l5.1 2.3 2.5 -.3 -4.5 -3.1 -2 0zM1702.7 812.5l1.8 .7 3.7 -.7 -3.7 -1.1zM1715.8 813.5l1.7 .6 2.7 -.6 -2.7 -.9zM1717.9 808.5l4.6 1 3.6 -1 -3.6 -1zM1764.9 811.5l-2.4 -1.2 -3.3 2.2 2.3 1.1 2 -.6zM1069.9 782.5l-.3 1 .9 1.1 2 .7 1.4 -.8 -2.4 -2.2zM1206.8 789.5l3 0 -.3 -.9zM1257.3 805.5l5 2 2.2 2 1 -.2 -.4 -2.8 -.9 -1 -2.7 -.6zM1259.4 795.5l2.1 1.2 1.4 -1.2 -1.4 -1.4 -1.5 .4zM1379.5 790.4l-1.4 1.1 1.4 .9 .9 -.9zM1436.1 803.5l1.4 .9 1 -.9 -1 -.7zM1123.6 679.5l.9 -1.1 1.6 1.1zM1117.5 680.5l0 1.3 -4.8 2.7 0 3 -4.2 3.2 -1 -.2 -.9 -3 1.2 -3 -.6 -2 1.3 -2.5 3 -.5zM1086.9 682.5l3.6 -1.6 4.8 .6 3.6 2 2.6 3 .2 2 -2.2 1.1 -3 -.4 -3.4 -3.7 -5.6 -1.7zM1079.1 692.5l2.4 -3.7 2 .1 6.4 5.6 1.1 3 5.5 1.3 2.6 -1.3 2.3 -3 6 -3 .1 -.7 0 3.7 1.6 3 -.2 2 .6 .7 3.2 -2.7 3.3 0 -2.7 7 -.3 4 -2.5 1.5 -4 -.5 0 -2 3.6 -4 -1.6 -1.5 -5 1.4 -8 -.9 -6 -2.5 -8 .9 -3.9 -3.4zM1127.8 694.5l3.1 0 .4 1 -2.6 0zM1040.5 694.6l1.5 7.9 -.4 9 -1.1 1.8 -1.4 -3.8 -.9 -8 1.3 -6.7zM1167.3 696.5l5.2 -.8 3.8 .8 -1.8 1 -4 .4 -3 -.4zM1069.5 697.5l2.2 0 .1 1 -2.3 2 5.6 6 -2.6 2.9 -2.8 -1.9 -3.6 -5zM950.5 698.2l1.5 8.3 -1.5 4.2 -1 -1.2zM926.5 701.8l1 .6 .1 3.1 -.1 2.7 -1 .9zM1079.1 703.5l1.4 -1.4 1 .1 .8 1.3 -1.8 1.3 -1.2 -.3zM1120.7 704.5l1.3 -2 2.5 -1 3 1 .5 1 -4.5 2.7zM1151.9 703.5l2.8 -1 2.2 1 .4 1 -1.8 .9zM1185.7 704.5l.5 -1 2.2 -1 6.1 -.3 3 .4 .7 1.9 -.7 1 -4 .9 -6 -.7zM1004.5 703.2l1.3 3.3 .2 4 -1.5 6.8 -1 1.4 -1.3 -1.2 -.3 -4 1.6 -9.7zM906.5 703.8l.5 3.7 -.5 3zM963.5 706.7l1 0 1.8 4.8 -.2 3 -1.6 3.3 -1.1 -.3 -1.2 -6zM1156.2 707.5l2.3 -.3 1.2 1.3 -3.2 .1zM1074.8 715.5l-4.3 1 -3.2 -2 5.2 -1.2 2.1 1.2zM1076.6 715.5l1.9 -1.8 2 -.5 5 3.1 .3 2.2 -2.3 1.6 -4 .1 -2.1 -1.7zM987.5 714l1 .2 1.8 6.3 -.7 3 -2.1 2.9 -1 -.9 -.4 -2zM1019.5 714.1l2.6 5.4 .9 4 -1.3 4 -2.2 1.1 -2 -2.1 -.9 -3 .7 -5zM1288.7 715.5l7.6 0 5.8 1 1.8 1 -4.4 .7 -8 -.5 -2.5 -1.2zM1029.5 716.2l1.6 2.3 -.6 4.9 -1.6 -4.9zM1333 719.5l10.5 -3.6 23 1.2 4.9 1.4 -33.9 2.5zM1143.3 718.5l.9 -1 2.7 0 0 1 -2.5 1zM1146.9 721.5l2.2 -3 2.4 -.8 8 .5 2.7 1.3 -3.7 2.5 -6.8 2.5 -.2 .7 -4 -2.2zM1227.8 718.5l3.7 -.9 7 .9 1.2 1 -7.2 .3zM973.5 718.8l1.2 5.7 -1.2 3.4 -1 -.7 -.4 -3.7 .4 -4.6zM995.5 718.9l1 .9 .1 1.7 -.1 2.1 -1 .3zM1208.7 723.5l6.8 -2.1 7 .1 3.1 2 -.8 3 1.7 .8 16.2 2.2 .9 1 -13.1 2.1 -10 -.5 -9.3 -3.6 -.2 -2zM1265.1 721.5l5.4 -.6 6.5 .6 -6.5 .8zM1300.9 722.5l4.6 -1.4 18 1.5 13 -.7 2 .8 3.9 3.8 -2.6 1 -4.3 0 -13 -2.3 -18 -.7 -3.4 -1zM941.5 721.5l0 4.8 -.7 -2.8zM963.5 722.6l2.2 2.9 -.2 3 -1 1.2 -2.3 -1.2 -.7 -2 .5 -3zM1003.5 723.9l1.8 1.6 .4 2 -1.1 2 -1.1 .5 -1.3 -3.5zM1235.7 741.5l14.8 -.4 5.4 -1.6 -.1 -1 -5.4 -3 -.6 -1 1.7 -1.2 19.9 -.8 -5.9 -3.3 -11 -.8 -.6 -.9 2.6 -1.5 5 -.9 10.4 2.4 9.8 4 .4 1 -6 1 -.6 1 1.5 2 -7.7 4 .7 3 1.5 1 12.1 3 -12.1 1.9 -13 -.1 -4 -1 -3 -2.9 -14 -2.8zM1150.5 725.9l1 -.3 10.2 2.9 1 1 2.3 8 -3.5 1.4 -13 1.3 0 -2.4 1.8 -2.3 8.1 -2 0 -1 -8.7 -3zM1408.9 727.5l1.8 -1 3.8 -.1 5.4 .1 2.7 1 -9.1 .6zM1288.6 728.5l1.8 -1 4.1 -.3 16 .8 4.5 1.5 2.5 2.9 8.4 1.1 -.6 1 -3.8 1.2 -11 1 -7 -.4 -5 -1.1 -.7 -.7 2.2 -2 -1.6 -1zM941.5 727.5l1 4 -1 4 -1 -.1 -.7 -3.9 .7 -3.4zM1348.6 730.5l1.7 -1 4.2 0 5.3 1 .1 1 -7.7 0zM1197.8 731.5l2.7 -.7 1.8 .7zM1350.7 739.5l7.8 -1.5 .7 -.5 -.9 -1 .4 -1 2.8 -.3 30.2 .3 -15.2 2.8 -18.4 2.2 -4.9 0zM1429.4 739.5l-2.9 .8 -19 -1.3 -5.5 -1.5 1.5 -.7 10 .1 13 -1.7 1.5 .3zM1443.3 738.5l.5 -1 8.7 -.3 3 .9 3 2.4 -9 -.1 -4.6 -.9zM1144.5 737.5l.7 3 -1.7 1.8 -2 .7 -1 -1.3 .5 -2.2 1.5 -1.4zM1283.9 740.5l1.6 -1.3 5 -.7 12 0 3.9 1 -1.7 2 -6.2 1.1 -8 -.5zM1476.5 740.5l0 1 -1.9 1 -5.1 .6 -6 -.1 -4.1 -1.5 14.1 -2.8 2 .5zM1520.7 740.5l3.8 -1.5 3.3 .5 -.1 1 -1.2 .2zM1313.1 748.5l3.4 -1 11 .5 1.2 -.5 -.1 -1 -10.3 -2 .3 -1 8.3 -2 6.6 -.5 15 1.2 .5 1.3 -1.7 1 -.2 1 7.4 2.7 1.5 1.3 -.2 1 -2.3 .9 -8 .3 -19 -2.9 -10 1.1zM1401.8 742.5l-13.3 .2 -17 2.4 -3.1 -.6 7.3 -2 9.8 -1 7 .7 8 -.6zM1445 745.5l4.5 -1.1 8 -.2 6 .9 1.9 1.4 -2.9 1.1 -7 .5 -9.6 -1.6zM1020.5 745.5l1.9 2 .7 3 -2.6 4.4 -2.1 -1.4 -.3 -4 .6 -3zM1539 749.5l0 -1 4.3 -1 5.3 0 0 1 -5.1 2.2 -3 -.1zM1741.2 748.5l-10.7 1.7 -3.2 1.3 10.3 4 -3.1 .7 -13 -.2 -4.3 -1.5 -2.4 -2 1.6 -3 5.2 -1 17.9 -1zM1608 750.5l3.8 -1 18.7 0 1.2 1 -3.2 1.2 -8 .6 -9 -.7zM1368.2 752.5l2.3 -2.5 4 -.4 15.8 1.9 3.4 1 1 1 -.8 2 -2.4 1 -15 .8 -6 -1.3 -1.7 -1.5zM1409 754.5l.2 -1 2.2 -1 6.1 -.9 4 .5 8.4 2.4 -1.2 1 -13.2 2 -4 -.8zM1807.5 752.3l0 6.3 -13 -1.8 -13.8 -.3 4.8 -1.3 12 .1 3.1 -.8 -1.7 -1 1.6 -.9zM1013.5 755.7l.8 2.8 -1.8 1.7 -.6 -1.7zM1532.4 758.5l2.1 -1 8 -.5 13 1.2 7 -1 4.4 .3 -.7 1 -4.7 .9 -6 -.5 -10 1.6 -10 -.6zM1605.8 763.5l.8 -1 4.9 -1.1 3 -2.5 2 -.5 21 .4 17.5 1.7 -1.3 1 -29.2 1.2 -3.7 .8 .3 1 -2.6 1zM1676.5 761.5l1 -1 17.7 1 -5.7 .8zM1736.4 765.5l1.3 -1 8.8 -1 9 -2.5 12.9 1.5 -6.9 3 1 .5 13.1 .5 -7.1 2.1 -18 1 -5 -.8zM1788.4 765.5l1 -1 6.1 -.9 12 -.2 0 2.9zM1669.8 766.5l.6 -1 3.1 -.2 6.1 1.2 -6.1 .7zM1698.1 768.5l6.4 -1.1 7.3 1.1 -11.3 .9zM1807.5 766.8l0 9.9 -8.4 .8 8.4 .9 0 3.1 -18 -.2 -2.9 -.8 6.1 -2 -4.6 -2 2.3 -1 7.1 -.8 1.9 -1.2 -.6 -1 -7 -3 3.7 -1.3zM1630.4 769.5l5.1 -1.5 5 -.2 4 1.4 1.9 2.3 -2.4 1 -5.5 0 -5.8 -1zM1589.2 770.5l6.4 0 -1.5 1 -2.6 .2 -2.1 -.2zM1738.3 771.5l-10.8 1.9 .9 1.1 -.3 1 -4.6 1.2 -24 -2.2 19 -1.7 10 -1.7zM1679.6 780.5l8.9 -1.7 6.3 .7 -5.3 2.4zM1799.4 786.5l8.1 -1.2 0 5.6 -5.6 -.4 -1 -1 4.9 -1z"/>
<path fill="#1b039b" d="M454.5 438.3l3.6 169.2 1.4 22.7 1 -5.4 7 -224.3 1 0 5.6 180 1.4 24.1 1 -1.6 2 -29.2 3 -142.5 2 58 1 10.6 9 -89.6 2 -15.4 2 -7.6 2 10.4 3 25.1 10 107.6 1 1.3 5 -71.8 1 -5.4 3 44.2 6 121.1 1 .6 1 -9.9 1 1.4 4 73.7 2 22.8 6 20.1 2 4.7 1 .8 2 -3.5 1.1 -5 3.6 -33 7.3 -146.9 2 -25.5 4 65.7 1 6.3 1 -.8 2 -21.3 3 -63.7 1 -8.3 3 58.1 1 10.1 1 -7.4 4 -83.2 1 -7.8 4 77.8 1 6.1 4 -64.8 4 70.6 1 9.7 1 2.5 1 -3.4 1 -12.2 5 -119.7 1 6.3 3 58 3 -61.5 3 69.3 1 4.3 4 -89.1 3 34 4 -94 2 26.8 1 -4.1 3 -36.3 1 0 5 60.5 5 87.7 1 6.6 1.4 -11.4 1.6 -27.9 1 5.2 7 164.7 1.4 11 .6 1.5 1 -1.5 6 -179.2 1 -12.2 3 59.7 1.3 -6.3 2.7 -66.8 2 44.8 1 .9 2 -19.1 1 1.3 2 14.5 .8 20.4 2.1 21 .1 15.5 1.3 9.5 6.8 96 .1 16 1.8 8.9 2 -2.2 1 1 3.4 -32.7 3.4 -49 1.6 -11 1.1 -23 3.5 -32.2 1 .7 1.8 8.5 1.6 18 -.2 11 6.9 69 -.9 7 1.8 3.1 2 -36.4 1 -9.4 1 2.9 4.7 92.8 1.3 6 1 -4.8 2 -1 1 -2.2 -1.4 -5 2.5 -21 1.6 -30 1.9 -14 -.1 -15 1.5 -7.1 5 54 2.2 -9.9 .8 -33.6 1 3.8 .1 15.8 1.9 23 .7 25 2.3 21 2.7 -17 1.3 -27.4 1 -4.4 2 -3.8 1 1.2 1.6 11.4 0 12 1.4 10 .3 17 2.7 19.1 1.1 .9 2.9 -45 1 -4.1 1 .7 2.4 29.4 .6 21.1 1 6 1 .3 2 -22.4 1 .1 2.7 26.9 -.6 6 .9 1.6 .7 -17.6 2.1 -21 1.2 -37.9 1 -3 .1 19.9 1 4 .9 15 -.5 10 1.5 8.4 1 -.8 1.7 -31.6 3.3 -31.9 2 15.8 1 -.6 2.5 -15.3 1.5 -17.6 1 -4.1 1 -1.1 1.3 3.8 2.6 20 1.1 2.1 1 -1.5 3.3 52.4 2.5 18 1.2 15.8 1 -4 1 -.9 .8 12.1 1.2 5.5 1 .4 1.5 -4.9 -.3 -11 2.4 -27 .3 -14 2.1 -16.3 2.6 23.3 .1 6 -.8 3 2.1 5.1 .5 -18.1 2.5 -26.9 4 46.9 1 1.2 1.7 -7.2 1.4 -18 1.9 -8 -.5 -5 .7 -8 2.8 -13.2 1 -.1 1.4 5.3 .8 14 2.8 20.6 1 -5.6 1 1 3 37.5 1 -1.2 .5 -12.3 1.5 -12.2 1 -1.4 3 14.9 1.2 -4.3 1.8 -18.3 1 4.2 .3 7.1 1.7 7 1.5 16 2.5 10 2 16 1.1 -1 .1 -11 2.8 -23.8 4 34.7 1.3 -6.9 2.7 -30.5 1 .1 1 6.4 1.2 21 1.8 10.1 1.4 -8.1 1.4 -23 1.2 -7 1.7 8 -.1 7 2.4 24.3 1 1.9 1 -1.8 2 3.4 1 .1 1.5 -6.9 .4 -24 1.1 -5.6 1 -1.2 2.2 21.8 -1.3 5 1.6 3 .5 3.4 4 -10.4 -1.4 -8 .5 -15 .9 -3.3 1.2 1.3 .9 6 .1 20 1.4 12 1.4 4.8 1.5 -4.8 .5 -6.4 1 -1.1 1.7 17.5 -.4 3 .7 1.9 .9 -1.9 .8 -19 1.3 -9.8 1 -1.6 1 .1 .7 2.3 -.3 5 2 4 1.6 5.8 .7 -4.8 2.7 -3 -.4 -3 1.2 -3 -1.9 -11 2.7 -9.7 1.1 1.7 .1 4 2.1 9 -1.7 6 1.9 3 -.9 2 -3.4 2 4.8 2.2 1 -.5 .8 -1.7 -.4 -5 1.6 -3.3 1.9 3.3 -1.5 4 1.6 3.1 .9 -2.1 -.8 -6 1.9 -5.3 3 1.1 2 3.2 .3 6 1.7 4.2 5 -10.6 2 1.2 2 3.8 3 -3.6 1 .5 1.7 6.5 -1.7 1.7 -1.6 -.7 -1.4 -2.6 -1 -.3 -1.2 3.9 1.2 4.4 3 -1.7 2.6 4.3 0 2 -2.6 3.6 -4 -4 -2 -.9 -2 .3 -3 -2.6 -1.8 2.6 -1.1 5 .9 6.7 1 .5 1 -1 1.8 -6.2 1.2 -1 3 2.1 1.2 2.9 -1.7 4 -1.5 9.7 -4.4 2.3 -1.7 2 .1 1.3 3 -2.2 4 .2 -.6 -2.3 3.3 -3 2.3 -4 .4 -2 -.9 -7 1.5 -1.8 3 .5 1.4 -2.7 -.4 -4 1.1 -5 -1.4 -5 1.3 -2 3 -.4 1 1.1 .2 4.3 1.9 7 -1.8 5 2.6 7 2.1 -.4 1 -1.6 -2.1 -6 .7 -4 1.4 -1.4 2.4 2.4 .7 5 -1.8 5 1.4 3 .3 3.6 1 .6 1 -1.1 .1 -4.1 1.5 -7 0 -23 2.4 -3 .1 -3 1.9 -1.2 2 .9 3 -4.9 1 .1 .9 2.1 -.7 5 -1.2 1.6 -3 -1.7 -1.4 2.1 1.4 2.9 3 -2.3 1.9 1.4 .6 2 -1.5 4.1 -1 .6 -3 -.5 -1.8 4.8 .5 13 1.3 2.5 4 -3.2 4 -.6 3.6 -2.7 .5 -3 5.9 -2.2 3 -4.7 1 -.4 3 1.7 2 2.8 2 .5 .6 -.7 -2.3 -3 -.4 -2 2.1 -3.9 4 1.8 .9 3.1 -.5 5 1.6 .7 2.7 -2.7 1.1 -4 -2.8 -5 4 -4 -.6 -4 -2.4 -2.6 -1.7 .6 -.3 5.4 -1 1.4 -4.4 -7.8 -.4 -6 -4.3 -4 4.8 -8 2.3 -1.7 1.4 3.7 .5 6 1.1 2.7 6 1.8 5 2.6 4 .2 3.5 1.7 -1.5 1.3 -5 1 -2.6 2.7 -1.5 4 .5 4 1.6 1.4 3.5 -.4 1.5 -3 -.1 -4 4.1 -2 5 -.1 1.3 1.1 1.1 3 1.6 .7 9 -1.6 5.9 -5.1 -1.1 -3 3.3 -4 2.9 -1.5 5 -.3 3.1 .8 2.5 5 -3.4 4 1.3 3 -1.3 7 -5.2 1.8 -1.3 1.2 .1 3 .8 1 3.2 0 7 -4 -.9 -8 1.8 -5 -1 -3 1.3 -1.6 1 0 1.7 3.6 1.3 .8 3 .5 4 -1.2 7 2.7 2.5 -3.8 .5 -4.4 1 -.7 5 .5 2 2.9 2 .5 .8 -.8 -.6 -4 .8 -2.7 2 -1.1 3 .1 3 1 .4 1.7 -5.9 4 -2.5 2.8 1.6 3.2 -3.4 10 -.2 3.3 .4 -1.3 6.6 -5.2 8 -.1 5.8 -2.7 3.2 .3 5 -1.5 5.5 1.2 4.5 3 .2 1 -2 2 2.5 2 -5.3 4 -.7 2 1.3 1.1 5 1.2 4.3 -.3 -1.8 -2 2.5 -1.1 22 -.8 3 .7 1.1 -1.8 -1.6 -2 1.5 -1 8 2.2 8 -4.5 7 .1 14.3 3.2 1.2 1 -1 2 -20.5 -.4 -7 2.3 -4 -.1 -2.9 2.2 -.2 2 3.1 2.3 4 .4 2.9 -1.7 .1 -4.2 11 -1.5 5 .5 8 2.6 12.9 .6 1 1 -.8 1 -3.1 1.6 -3 -.2 -7 -2.3 -4 .1 -7 1.7 -6.5 4.1 .1 1 2.4 1.2 12 2.2 6 2.4 7 -2 7 .7 2.5 -.5 .1 -1 -2.6 -1.4 -8.6 -1.6 -1.8 -1 3.4 -2.2 14 1.6 14 -1.9 2.5 .5 1.5 1.6 2 .6 4 -.1 8 -1.6 9 1.3 2 -.4 .8 -1.4 -8.1 -3 4.3 -1.3 5 -.3 4 .6 18.5 6 -3.5 2 -5 1.3 -3.6 -.3 -5.4 -1.8 -4 .1 -.6 1.7 1.2 2 5.4 2.6 4 .7 5.7 -.3 5.3 -1 -.8 -1 12.8 -1 2.7 1 -2.1 2 2.8 1 5.6 .2 6 -1.2 -1.7 -2 1.7 -1 18 -2 -4.9 -1 3.4 -2 -1.1 -1 -8 -2 .7 -1 5.9 -1.3 39 -1.5 6.9 1.8 -.1 1 -2.8 2.1 -7 2.7 -12 -.6 -18.6 2.8 3.4 1 13.4 1 .2 1 -2.2 1 -9.7 2 -.9 2 1.4 1.5 10 -2.9 8 .3 2 .7 1.4 3.4 -4.8 3 -.5 1 1.9 1 3 -.2 10 -4.8 11 -.1 3.4 -.9 -.7 -1 -5.7 -2.3 -8.3 -1.7 .6 -1 4.7 -1.5 8 -.3 6.3 .8 9.5 3 .7 1 -2.2 2 1.7 1 5 -.6 3.7 -2.4 -1.5 -2 .8 -1.1 5.8 -2.9 -1.8 -.7 -12 -.6 -9.8 -3.7 .3 -1 13.5 -1.4 8.6 1.4 7.9 3 0 1 -1.3 1 27.8 2.6 3.5 1.4 2.4 3 .6 2 13.4 2 -7.4 2 -6.5 .7 -4.3 -4.7 -4.7 -.7 -3.2 .7 .1 1 3.1 3.2 5.7 1.8 -6.5 4 13.8 2.2 6.9 2.8 16.5 1 .9 -1 -6.3 -.3 -7 -2.7 4 -.8 .9 -1.2 -4.9 -1.5 -.9 -1.5 4.9 -1.4 14 -.1 3.5 .5 1.2 2 3.6 3 6.1 2 -7.1 2 1 1 2.7 .5 23 -2.4 4.8 -1.1 4 -2 -6.8 -1.7 -4.8 -.3 1.3 -1 18.5 -.8 8.7 1.8 -5.4 2 9 2 2 1 2.7 3.4 3 -1 6 .4 1.9 -.8 .3 -1 4.8 -1 15 .1 .5 -1.1 3.4 -2 .1 -2.4 2.9 -1.6 -.1 -1 -1.5 -1 0 -1 7 -1 .6 -1 -13.9 -.3 -2.7 -.7 8.9 -3 8.8 -.8 8 .7 2.6 1.1 -6 2 .4 .6 9 .2 1.9 -.8 1.6 -3 -4.3 -2 1.1 -1 9.7 -3.2 9.7 1.2 -.9 3 -7.4 2 2.8 2 -4 2 .5 2 -2.7 .2 -6 2.6 -8 1.6 -.7 .6 .3 1 2.9 2 -.1 1 -2.4 1.7 -4.9 1.3 1.9 1 18 -2.8 4 .7 3.4 2.1 3.6 .2 2.3 -1.2 -1.1 -2 3.8 -.9 25 -1 1.9 -1.1 -3.9 -1.7 -20.8 -1.3 7.8 -2.4 10 -.1 6 1.7 8 .5 16 -1.9 11 1.8 4 -.2 2.9 -1.4 -9.9 -3.5 -13 .9 -5 -.8 -2.6 -1.6 4.6 -1.1 36 .3 16.2 4.8 -.1 1 -1.9 1 2.4 2 -1.7 1 -6.4 1 1 1 4.7 1 1.7 2 13.1 1.5 17 -1.2 0 2.9 -12 -1 -12 1.1 -9 -.5 -4.4 1.2 5.4 1.2 9 -.9 6.2 1.7 -9.7 2 1.5 1 0 1.1 -3 .5 -15 -1.8 -3 1.2 .9 1 -.6 1 -4.3 1 -6 .2 -3.1 .8 -.1 1 4.2 1.2 10 -.5 18 -4.1 4.7 1.4 -2.7 1 2.1 2 -1.7 2 1.6 1.5 2 .5 7.3 -3 -1.2 -2 7.5 -3 -2.1 -3 1.1 -1 8.4 -1.2 0 21 -216 .4 -223 3.3 -133 3.8 -124 7 -31 2.7 -37 5.9 -46 1.4 -59 4.5 -12 1.8 -11 3.3 -13.1 5.1 -30.9 16 -7 1.2 -17 .1 -9 2.4 -7 3.9 -15 12.9 -6 3.3 -5 .6 -14 -1.9 -11 0 -15 1.8 -12 3.1 -8 3.7 -7.3 4.9 -7.7 7.1 -5.6 6.9 -296.4 0 0 -358.8 1 -3.2 1 .5 4 19.9 3 7.7 1 -1.3 2 -11 1 .9 4 35.9 2 9.1 1 2 1 -2.1 1.1 -19.6 2.9 -149zM944.5 758.1l-2.3 4.4 .3 1.1 2 1.1 1 -.4 .3 -1.8 -.3 -3.9zM953.5 756.3l-1 3.2 1 1.7 1 .1 .9 -2.8 -.9 -2.1zM975 785.5l1.5 5.1 4 6.1 -.8 -6.2 -2.2 -3.5zM983.1 777.5l-.5 1 .9 1.9 2 .1 .7 -1 -.5 -1zM998.5 789.2l-.4 1.3 1.4 1.3 .8 -1.3 -.8 -1.3zM1009.5 788.5l-2.6 1 -.3 2 1.9 .4 1 -1zM1020.8 762.5l.7 4.7 8 -1.5 5 4.5 2 .7 1 -.8 -.4 -3.6 -2.6 -2.3 -2 -.6 -2 .7 -3 -2.3 -4 -.7zM1039.6 799.5l2.9 1.9 .7 -.9 -1.7 -1.9zM1044.5 773.7l-1.1 2.8 .7 3 1.4 1.5 1.3 -1.5 -.8 -5zM1045.6 764.5l1.9 2.1 1.6 -.1 -.1 -1 -1.4 -1zM1050.3 772.5l1.4 2 2.8 1.6 3 -.3 .8 -1.3 -5.8 -2.3zM1067 746.5l-1.5 -.2 -2 1.2 -4 6 -7.3 3 -1.1 2 .4 .8 3 -.5 5 2.4 3.5 -.7 4.2 -8 .5 -4zM1077.5 753.2l-2 0 -3 1.4 -1.5 1.9 .5 2 2 1.4 .7 -.4zM1083.5 774.3l-.6 1.2 .6 1.2 .8 -.2zM1086.5 763.2l-.7 .3 -.1 2 .8 2.3 .9 -1.3zM1089.5 783.8l-1 -.3 -1.5 1 -1.2 3 .4 1 3.7 -2zM1094.5 765.8l-1.3 2.7 .3 1.3 1.2 -1.3zM1095.5 782.1l-1 1.4 .4 1 2.6 1.9 .3 -.9zM1115.1 745.5l-.6 1 .5 1 2.6 1 -.9 -2zM1122.5 749l-1.3 1.5 1.3 2.8 1.4 -.8 .7 -2 -.5 -1zM1123.7 758.5l.8 .9 1 -.2 3 -3.7 1.8 0 -4.8 0 -1.3 1zM1128.5 743.1l-1.3 1.4 1.3 2.9 1 0 1.6 -1.9 -.3 -1zM1131.7 761.5l-3.2 3.6 -7 2.8 -1.8 2.6 .8 .9 4 -1.7 5 -.1 1.7 -2.1 -.5 -2zM1150.4 756.5l-2.9 -1.6 -4 .1 -1 -1.5 1.1 -2 -1.1 -.2 -4 2.7 -2 .1 -2 -1.3 -1.5 1.7 2.4 2 2.1 .5 5 -1.4 3 1.6zM1153.5 764.2l-4.3 3.3 1.3 6.2 1 -.8 2 .7 1.2 -1.1 -.3 -3 .9 -3zM1158.5 743.8l-2.5 1.7 .5 2.2 2 .8 2 -1 .4 -1 -1.4 -2.4zM1161.1 761.5l2.4 1 2 2 5 -.2 6 1.1 1.5 -.9 -4.8 -3 -4.7 -1.8 -4 -.1 -2.7 .9zM1185.8 767.5l-1.3 -1.1 -1.7 1.1 1.7 .6zM1194.1 779.5l2.4 1.2 8 .6 .6 -.8 -.6 -1.2 -9.7 -.8zM1197.2 794.5l1.3 .6 3 -2.9 8 -2 1 -1.8 8 -1.8 9 -.2 1.4 -.9 -3.4 -1.3 -6 -.5 -.8 -1.2 -8.2 -.8 -1.7 .8 -.5 2 -1.3 1 -.3 1 1 2 -8.2 3.5zM1231.2 791.5l3.3 2 2.1 -1 -3.1 -2zM1269.9 777.5l-2.4 -1.2 -6 1.4 -13 -1.1 -3 .8 -.4 1.1 5.2 3 1.5 2 5.7 .7 4.9 -.7 -2.9 -3 3 -1.5 5 -.4zM1275.1 791.5l3.4 .5 2.7 -.5 -2.7 -.7zM1276 775.5l4.5 1.2 3.4 -1.2 .6 -1 -4 -.9zM1280.3 772.5l1.2 .6 6 -.3 7 .9 4.9 -2.2 -3.9 -1.4 -11 .1 -3.5 1.3zM1314.7 777.5l2.8 .8 2.9 -.8 -2.9 -1.3zM1328.1 794.5l0 1 1.4 .5 4.2 -.5 0 -1 -1.2 -.4zM1344.9 788.5l3.6 2.4 2.6 -1.4 -.5 -1 -2.1 -.8zM1351.2 782.5l3.3 2.2 2.3 -1.2 -2.3 -1.7 -2 -.1zM1362.6 801.5l.8 1 -.8 2 .9 .6 7.4 -1.6 -.1 -1 -6.3 -1.7zM1374.2 780.5l1.3 1.1 3 .4 2 1.9 4.9 -1.4 -6.9 -1.4 -3 -1.4zM1409.4 797.5l10.1 2.8 2 -.3 1.5 -1.5 -3.5 -1.4zM1422.5 782.4l4 2.2 4.9 -.1 1.4 -1 -1.3 -1.3 -5 -1.6 -3 .3zM1483 786.5l-2.5 -2.3 -7 -2.1 -11.1 .4 7.1 1.4 3.3 1.6 .7 1.1 -2 1.5 -12.9 -1.6 -3.1 -2.6 -16 1.5 -1.5 1.1 2.5 1.6 16 2.1 14 -1.6 8 .6 4.3 -1.7zM1498.4 800.5l.2 1 2.9 .9 4.6 -.9 -3.6 -1.1zM1522.5 801.5l-.2 -1 -2.8 -1.1 -8.2 2.1 5.2 .8zM1524.2 802.5l1.1 1 2.2 .1 5.3 -1.1zM1562.8 802.5l2.7 1 4.2 0 -4.2 -1.4zM1620.8 807.5l-1.2 -1 -4.1 -.8 -4 2 -6.1 .8 .2 1 2.9 .1 4 -1.3zM1627.1 800.5l3.8 0 -2.4 -.6zM1722.8 803.5l-5.3 -3.3 -7 -.2 -8 -1.6 -14 2.3 -10 -.5 -4.2 1.3 .4 1 10.8 3.1 16 -1.3 17 .1zM1720.5 795.5l.3 1 6.7 1.4 17 -.8 8.5 -2.6 4 -3 0 -1 -10.5 -2.1 -9.2 .1 -9.6 2 -2.5 2 1.1 1zM1758.4 812.5l3.1 1.2 2 -.5 1.7 -1.7 -2.7 -1.6 -3.5 1.6zM954.5 778.3l-1.4 3.2 1.4 1.7 1 -.7 .6 -3zM994.9 798.5l-.1 1 2.7 1.2 3 3.3 4 .6 3 2.8 .9 -2.9 -.9 -2.1 -2 -.4 -6 -5zM1022.5 785.1l-.9 3.4 1.2 4 2.7 1.2 2.7 -.2 -.1 -1 -3.7 -3 .6 -2 -.5 -1.8 -1 -.9zM1027.5 776.5l-2 -.3 -1 .9 -.6 2.4 .6 .8 3 -1.6zM1059.5 781.6l-4 .7 -1.4 1.2 -3 7 1.4 2.8 1.3 -.8 .2 -3 3.5 -6.1 2.8 -.9zM1083 770.5l-1.5 -2.9 -3 -.8 -.4 -2.3 -1.6 -2.2 -1 0 -1 3.2 -2 2.3 -5 .4 -3 -1.1 -1.1 1.4 1.1 1.5 4 1 3 -1.1 4 1.1 3 -.8 4 1.8zM1089.5 797l-1.5 3.5 .5 .4 1.4 -2.4zM1145.5 758l-3 2.1 -3.7 1.4 1.3 3 -1.2 3 .6 1.9 1.9 -1.9 -.2 -3 5.1 -4zM1161.8 754.5l-2.3 -1.1 -2 1.9 -1.7 .2 3.7 .3zM1161 782.5l3.5 2.4 1.9 -1.4 -.9 -1.7 -2 -.7 -2 .4zM1172.2 794.5l1.3 .7 1.5 -.7 -1.5 -.9zM1177.5 771.5l-1 -1.2 -2 1.2 2 .9zM1256.7 805.5l5.4 2 2.4 2.2 1.2 -.2 -.1 -2 -1.1 -2 -3 -.7zM1259.1 795.5l2.4 1.4 1.3 -.4 .4 -1 -.3 -1 -1.4 -.6 -2 .6zM1266 790.5l1.5 1.4 4.9 -.4 0 -1 -2.9 -2.3 -2 .5zM1275.2 802.5l3.2 1 9.2 0 -4.1 -.1 -.8 -.9 -3.2 -.5zM1290.9 782.5l1.5 1 3.1 .2 8 -.8 1.6 -1.4 -9.6 -1.2 -4.1 1.2zM1384.8 787.5l-.6 -1 -2.7 -.5 -6.8 2.5 1.8 1.1zM1427.6 793.5l12.9 2.7 5.3 -1.7 -1.3 -1.2 -6 -1 -7 .1zM1451.5 799.5l8 4.7 .6 1.3 10.4 1.6 4 -1.9 8 -.4 7 .6 4 1.9 .8 -.8 -1.9 -2 -6.9 -3.5 -16 .3 -2.1 1.2 -4.4 0 4.6 -2 -7.4 -2 3.5 -2 -.4 -1 -1.8 -.3 -7 2 -2.5 1.3zM1475.9 791.5l6.6 2.8 2.1 -.8 -5.1 -3.5 -3 .2zM1702.2 812.5l2.3 .9 4.7 -.9 -3.7 -1.2zM1716.9 808.5l5.6 1.1 4.2 -1.1 -4.2 -1.1zM1069.7 782.5l-.3 1 1.1 1.3 3 .6 .6 -.9 -2.6 -2.5zM1165 794.5l1.5 .8 .8 -.8 -.8 -.7zM1173.1 776.5l2.4 1.8 3.2 -.8 -3.2 -2.1zM1377.9 791.5l1.6 1 1.1 -1 -1.1 -1.3zM1435.8 803.5l1.7 1 1.3 -1 -1.3 -.8zM1715.1 813.5l2.4 .8 3.2 -.8 -3.2 -1.1zM764.5 615.6l.5 17.9 -.5 5.5 -1 .4 -1 -4.9 1 -18.4zM1116.2 680.5l.4 1 -4.9 3 .4 3 -2.6 1.9 -2 -.2 -.4 -1.7 1.4 -3 -.7 -2 1.2 -2 2.5 -.5zM1087.5 682.5l3 -1.3 4 .3 3.7 2 3.3 4.2 -1 1.2 -3 .3 -2 -1.2 -1 -2.5 -6.6 -2zM1081.5 689.5l2 -.1 5.4 5.1 .1 4 -.9 1 -5.6 .6 -3.2 -1.6 -.7 -2 .4 -3zM1108.5 697.5l-1 2 .7 2 -3.7 1.5 -8 -.7 -2.4 -.8 -2.4 -2 5.8 -.4 2.5 -1.6 2.3 -3 3.2 -1.3 1 .4zM1040.5 695l1.2 7.5 -.4 8 -.8 1.7 -1.2 -2.7 -.9 -8 1.1 -6.3zM1168.2 696.5l6.4 0 -4.1 1zM1114.6 697.5l.8 1 -2.6 6 -.2 4 -2.1 1.2 -3.1 -.2 -.5 -2 3.7 -4 -.6 -2 2.2 -3zM950.5 699l1.3 7.5 -1.3 3.7 -1 -2.7zM1067.5 702.5l2 -.1 4.2 3.1 .6 1 -.8 1.7 -1 .5 -2 -.8zM1121.7 703.5l2.8 -1.4 1.7 .4 .5 1 -3.2 1.6 -1.6 -.6zM1187.5 704.5l1 -1.2 5 -.5 3 .3 1 1.4 -1 1 -6.9 0zM1004.5 703.7l1.1 2.8 .3 4 -1.4 6.4 -1 1.5 -1.1 -.9 -.3 -4 1.4 -9zM963.5 707.1l1 .1 1.6 4.3 -.3 3 -1.3 2.9 -1 -.2 -1.1 -5.7zM1088.3 709.5l.4 -1 1.8 -.8 5 1.6 1.5 1.2 .5 3 4 3 6 -2.6 8 -.2 2.2 1.8 -.9 2 .4 1 3.3 1.4 2.4 -1.4 .2 -3 2.1 -2 2.3 -1.1 2.6 .1 1.7 1 .3 1 -1.6 3 .5 3 -.8 1 -4 1 -1.1 1 1.5 3 -1.1 2.5 -4 -.6 -3 -1.7 -2.6 2.8 1.4 2 -.6 2 -2.2 1.6 -4 .1 -2.4 -2.7 2.1 -4 -.7 -4.3 -1 -.3 -5 1.7 -2 -.1 -1.6 -1 -1.4 -3.1 -3 0 -2 -.9 -3.4 -3 .2 -4zM1068.5 714.5l4 -.6 1.3 .6 -.1 1 -3.2 .5zM1077.4 715.5l2.1 -1.8 2 .3 3.9 2.5 .1 2 -2 1.3 -4 .1 -1.6 -1.4zM987.5 715.2l1 .1 1.6 5.2 -1.6 4.8 -1 .7 -1 -1.3 -.2 -2.2zM1019.5 714.7l2.5 4.8 .8 4 -1.2 4 -2.1 .8 -1.8 -1.8 -.9 -3 .7 -5zM1292.1 716.5l6.3 0 2 1 -5.5 0zM1029.5 716.5l1.4 2 -.4 2.9 -1.4 -2.9zM1146.4 718.5l-2.5 0 1.6 -1zM1337.9 719.5l5.6 -2.1 7.2 1.1zM1058.5 718.5l3.3 0 4 4 1.7 4 0 5 -.8 1 -2.2 .1 -1 -.7 -5.6 -10.4zM1147.2 721.5l2.2 -3 2.1 -.6 8 .5 1.9 1.1 -3.9 2.6 -6 1.8 -3 -.6zM1230.2 718.5l6.5 0 .9 1 -4.7 0zM973.5 719.4l1 5.1 -1 2.9 -1 -.9 -.2 -3 .2 -3.5zM995.5 719.8l.9 1.7 -.9 1.9zM1209.8 723.5l6.7 -1.9 5 .2 2.9 1.7 -1.5 3 2 1 15.9 2 1.2 1 -12.5 1.9 -9 -.5 -5.4 -2.4 -1.7 -3zM1301.9 722.5l4.6 -1.1 16 1.5 13 0 3 1.1 1.7 2.5 -3.7 .5 -13 -2 -17.2 -.5 -4.2 -1zM963.5 722.9l2.1 2.6 0 2 -1.1 1.9 -2.1 -.9 -.7 -2 .6 -3zM1165.4 724.5l5.1 -1.4 10 .2 2.6 1.2 1.5 2 -.6 1 -7.5 1.3 -2.5 1.7 6.3 3 -6 1 -1 1 4.8 2 -1.6 1.9 -2 .3 -5.7 -2.2 .1 -7 -3.3 -3zM1003.5 724.2l1.6 1.3 .5 2 -1.1 1.9 -1 .3 -1.1 -3.2zM1255.2 727.5l4.3 -1.7 7 .7 14.5 5 .1 1 -6.6 .5 -8 -4zM1150.5 728.1l3 -1 8 1.8 1 1.6 -.1 2 2.1 3 -.1 2 -2.9 1.2 -11 1.4 -2 -.5 0 -1.2 2 -2.6 8.7 -2.3 .1 -1 -9 -3zM1289.3 728.5l5.2 -1.1 17 1 2.9 1.1 .8 3 1.3 1 5.1 1 -11.1 1.8 -10 -.7 -1.9 -1.1 2.3 -2zM941.5 728.6l.5 3.9 -.5 1.7 -1 0 -.4 -3.7 .4 -1.5zM1350.3 730.5l3.2 -.6 4.9 .6 -.6 1zM1075.5 731.8l3 .6 2.4 3.1 -.7 3 -1.7 2.2 -2 .9 -3 -1.2 -2 -2.9 1.7 -4zM1237.2 741.5l13.3 -.3 6 -1.7 -.2 -1 -5.4 -3 -.5 -1 2.1 -1.2 17 0 4 .7 2.8 2.5 -7.6 4 .3 3 1.4 1 11.8 3 -11.7 1.7 -12 -.2 -4 -1.3 -1.7 -2.2 -14.7 -3zM1029.5 734.4l3 4.2 5 2 1 1.2 .4 1.7 -1.4 2.9 -7 -2.5 -2.6 -6.4zM1359.4 736.5l.9 -1 6.2 -.4 15.7 1.4 -8.1 2 -12.6 .4zM1427.9 739.5l-22.1 -2 9.7 -.3 9 -1.4 1.9 .7zM1179.4 738.5l.5 -1 9.6 -.7 2 .5 -1 2.1 -3.1 3.1 1.4 1 3.7 .6 12 -3.7 6 -.9 3.2 5 -2.2 1.5 -10 1.5 -1.2 1 .9 3 -.7 .6 -8 .2 -3 -1.8 -.1 -2 -9.2 -3 .8 -2 -1.4 -2zM1444.1 738.5l1.4 -1.1 7 0 3.7 2.1 -1.7 .9 -8 -.8zM1144.5 738l0 3 -3 1.4 -.6 -.9 .6 -2.3zM1284.5 740.5l1 -1.1 6 -.9 11 .2 3.1 .8 -.1 1 -1.6 1 -5.4 .9 -8 -.4zM1352.3 739.5l8.2 -.6 .3 .6 -5.3 .6zM1462.2 741.5l10.3 -1.7 2 .3 .8 1.4 -6.8 1.2 -4.1 -.2zM1319.4 743.5l11.1 -2.3 17.6 1.3 .2 1 -1.6 1 -.2 1 8 3 .9 1 -.9 1.2 -4 .8 -13 -.8 -9.2 -2.2 1.6 -1 -.1 -1 -10.3 -1.9zM1370.6 744.5l1.1 -1 5 -1 11.5 0zM1446.3 745.5l10.2 -.9 5.8 .9 1.2 1 -3.4 1 -5.6 .2 -7.4 -1.2zM1020.5 745.8l1.6 1.7 .9 3 -2.5 4.1 -1.8 -1.1 -.5 -4 .7 -3zM1287 752.5l5.5 -.6 1.4 -1.4 -.4 -2 1.2 -1 2.8 -.2 9 3.9 29.8 2.3 .6 1 -2.4 3 2.2 1 2.8 .1 8 -1.8 4 .7 -2.3 3 -4.7 1.7 -18 -.1 -1.6 -.6 -1 -2 -3.4 -.9 -23 -.6 -1.2 -.5 3.1 -2 -.5 -1 -5.4 -1.6zM1313.9 748.5l3.6 -.7 6.2 .7 -5.2 1.1zM1541 748.5l5.8 0 -4.3 1.2zM1737 748.5l-8.5 1.5 -4.4 1.5 9.9 3 .5 1 -12.7 0 -4.6 -2 -.3 -1 1.3 -3 13.3 -1.3zM1609.4 750.5l9.1 -1 9 .1 3.3 .9 -2.5 1 -7.8 .5 -7.9 -.5zM1368.7 752.5l2.8 -2.4 5 -.2 15 2.2 2 .8 .7 1.6 -3.5 2 -14.2 .6 -6 -1.6zM1252 755.5l0 -1 2.5 -2 7 -1.3 8 .1 16 1.4 .9 .8 -.1 1 -3.6 1 -19.2 1.3 -7 -.1zM1409.6 754.5l.3 -1 2.4 -1 5.2 -.6 11.1 2.6 -1.6 1 -11.5 1.7 -3.4 -.7zM1807.5 752.5l0 5.8 -13.4 -1.8 9.2 -2 -2.6 -1zM1440.3 756.5l.8 -1 25.4 -1.6 6.1 1.6 .5 1 -1.2 3 6.6 1.7 5 .2 4.7 -.9 .4 -2 4.9 -2.2 7 -.9 3.8 1.1 -2.8 2 -6.7 2 -1.1 1 1.7 4 4.6 2 -3.5 2.3 -7 .9 -7.3 -1.2 -.9 -1 2.4 -2 -1 -1 -13.2 -1.3 -9 -3.6 -13.2 -2.1zM1013.5 757.4l.2 1.1 -1.2 1.2 0 -1.9zM1533.3 758.5l3.2 -1 7 -.3 6 .3 2.8 1 -8.8 1.8 -8 -.6zM1609.6 763.5l.6 -1 3 -1 1.5 -2 2.8 -.8 20 .4 16 1.4 -4 1.2 -25 .6 -9 1.7zM1737.7 765.5l1.9 -1 9.4 -1 7.5 -1.8 8.4 .8 -.6 1 -3.8 1.7 .9 1.3 12 0 -.5 1 -4.6 1 -15.8 .9 -6 -.8zM1525.1 770.5l6.4 -2.3 4.8 -.7 -1 -1 -8 -1 -1.2 -1 1.4 -.6 18.8 1.6 2.5 1 -2.9 1 8 3 11.6 1.5 4.5 1.5 -.7 1 -27.8 .8 -11 -1.6zM1791.1 764.5l16.4 -.9 0 2.4 -14.2 -.5zM1671.6 766.5l2.9 -.6 3.6 .6zM1807.5 767.5l0 8.8 -13 1.2 -4.9 -1 8.9 -1.5 1.7 -1.5 -.7 -1 -7 -3 5 -1.4zM1401.1 770.5l7.4 -2.9 5.7 .9 .6 1 -1.7 1 -4.6 .6zM1632.2 769.5l2.4 -1 4.9 -.3 2.1 .3 3 2 -.2 1 -5.9 .5 -3.6 -.5zM1700.1 768.5l4.4 -.6 5.3 .6zM1507.9 770.5l7.6 -.8 7.3 .8 -5.3 .6zM1725.7 772.5l.5 -1 9.7 0zM1701.7 774.5l21.8 -1.7 4 1.7 -1 1.3 -5 .7zM1549.6 778.5l10.9 -.4 8 -1.2 7 .3 2.7 -.7 -1.3 -1 1.9 -1 34.7 -.7 7.5 1.7 -5.5 3.1 -12 1.6 -12 3.5 -5 .6 -7 -1.2 -.8 -.6 3.4 -2 -.4 -1 -4.2 -1.6 -3 -.1 -5 1.9 -7 -.9 -4 .8 -8.7 -.1zM1788.6 780.5l7.9 -2.1 11 .3 0 2.6zM1680.5 780.5l7 -1.4 6 .4 -1 1.1 -4 1.1zM1807.5 787.9l-7 -1.4 7 -1.1zM1599.4 787.5l22.1 -2 3.2 3 -.4 1 -6.8 .6 -12 -.9zM1503 788.5l.4 -1 4.1 -.2 4 .6 1.8 1.6zM1802.1 789.5l5.4 -.8 0 2 -4.3 -.2zM1729.7 793.5l5.8 -2.6 9 -.2 3.6 .8 -1 1 -4.6 1.3z"/>
<path fill="#1109a7" d="M428.5 575.8l1 -2.9 1 .4 4 19.8 2 6.6 1 1.1 1 -1.5 2 -10.4 1 1 4 34.8 2 9 1 2.2 1 -1 1.3 -20.4 2.7 -133.9 1 -18.2 3.5 159.1 1.5 18.1 .9 -3.1 1.3 -23 5.8 -193.5 1 0 5.7 182.5 1.3 14.9 1 -2 2.3 -35.9 2.7 -125 2 51.6 1 8 9 -91.7 2 -15.2 2 -7.3 2 10 4 34.6 9 99.8 1 .2 1 -9.3 4 -62.7 1 -5 3 43.1 6 120.7 1 -1.5 1 -9.9 1 1.1 4 72.5 2 21.9 7 21.1 2 2.4 1 -.9 3 -13.3 3.2 -31.2 6.8 -137.8 2 -24.3 4 63.6 1 6.2 1 -.8 2 -20.9 3 -62.2 1 -7.8 3 56.2 1 9.8 1 -7.1 4 -81.3 1 -7.3 4 75.3 1 5.5 4 -63.1 4 68.6 1 9.6 1 2.4 1 -3.4 1 -11.9 5 -117.5 1 6 3 56 3 -59.8 3 67.5 1 4.1 4 -87.3 3 33 4 -91.1 2 25.6 1 -3.4 3 -34.2 1 0 5 58.1 5 85.2 1 7.2 3 -38.4 1 5.6 6.5 153.1 1.5 16.1 1 2.4 1 -.3 .9 -16.2 5.1 -162.3 1 -8.9 1 9.8 2 48.1 1.7 -13.7 2.3 -55.1 2 38 1 1.8 2 -17.1 1 -.8 1.3 8.2 6.4 100 1.3 7.2 1 13.3 .4 15.5 2.4 31 0 11 2.2 13.9 1 -1.7 .8 .8 1.2 6.8 .6 -.8 -.1 -9 3.6 -35 3.2 -48 2.2 -12 -.4 -7 .9 -15.1 2 -11.8 1 -1.9 1 .5 1 -.5 1.7 6.8 -.3 15 2.9 20 1.1 20 2.9 24 -.5 9 2.2 6 .8 -4 2.2 -40.3 1 2.6 4.3 87.7 1.7 11.3 1 -7 2 -1.4 1.4 -3.9 -.9 -5 .2 -6 2 -14 0 -12 3.4 -34 -.1 -12.4 1 -4.3 5 55 2.9 -15.3 .1 -29.6 .9 8.6 -.7 7 1.1 5 .1 9 1.3 9 2.3 48 1 1.7 1.5 -4.7 2 -23 .5 -17.1 1 -6.3 2 -3.4 1 1.5 1 7 .1 14.3 1.5 10 .2 16 3.2 23.6 1 1 3 -46.1 1 -4.9 1 1 2.2 28.4 .3 18 1.5 11.7 1 .1 2 -20.7 1 .1 1.8 19.8 -.1 9 1.3 2.4 1.5 -26.4 1.6 -13 .9 -31.1 .5 10.1 1.5 6.3 .3 21.7 1.7 11.3 1 -.9 1.5 -17.4 .5 -16.7 3 -25.4 2 12.4 1 -.2 3.2 -20.1 .8 -13 1 -5.3 1 -1.6 1 3.2 2.2 18.7 1.8 5.3 1 -1.8 3.1 50.5 2.4 18 .6 14 .9 3.2 1 -3.8 1 -.6 .5 9.2 1.5 7.2 1 .8 1.8 -7 -.2 -13 2.5 -26 .1 -13 1.8 -13.2 2.2 20.2 0 6 -.8 2 1.6 6.1 1 1.2 .6 -2.3 .4 -19.1 2 -20 2.9 37.1 1.1 7.7 1 1.3 2.4 -10 1.4 -19 2.3 -8 -.9 -5 .8 -8 2 -10.4 1 .2 1 4.4 .5 11.8 3.5 31.5 .5 -1.5 .5 -10.7 1 .2 3 39.1 1.3 -3.6 .4 -13 1.3 -10.9 1 -.9 3 15.2 3 -21.1 9 57.7 1.3 -3 .3 -12 2.4 -19.7 4 34.8 1.7 -10.1 2.3 -28.3 1 0 1 7 .9 18.3 2.1 13 1.7 -11 2.3 -27.8 1.3 4.8 0 8 2.7 25.7 1 2.1 1 -2.3 1 .7 1 2.8 1 .3 1.8 -8.3 .3 -23 .9 -4.7 1 -.4 1.8 19.1 -1.2 5 1.5 3 .9 7.1 1 -.1 .8 -8 2.9 -6 -1.8 -8 1.1 -17.4 1 .9 .9 7.5 -.4 5 .6 7 -.7 5 1.9 13 1.7 6.8 3 -13.1 1.3 16.3 -.4 4 1.1 1.7 1.2 -1.7 1.4 -27 1.4 -3.6 1.2 .6 .1 7 1.7 3 .7 9 -2.1 5 .4 1.5 2 1.7 1 -.2 .5 -2 -.2 -8 1.4 -7 2.3 -.5 4 1.3 1 1 3 -3.2 2 3.3 1.2 -2.9 -.8 -6 1.6 -4.7 3 .9 1.8 2.8 .2 6 2 5.7 5 -11.4 1 -.1 2.5 4.8 -1 5 .8 5 .7 .9 1.2 -1.9 1.8 -1.1 2.1 3.1 .3 3 -2.4 3.1 -4 -5 -4 .3 -3 -2.9 -1 .7 -2 6.8 .6 8 1.4 .7 1 -.7 1.7 -6 1.3 -1.6 3 2.1 .8 2.5 -1.5 4 -1.3 9 -5 3.4 -2.2 3.6 4.2 -2.7 3 0 1.6 1.7 1.4 4.5 4 5.9 .6 -.4 -1.3 -6 -2.3 -3.8 -2.5 -2.2 -.7 -2 3.2 -3 2.3 -4 -.5 -9 1.2 -1.4 3 .4 1.3 -2 0 -5 1 -4 -.7 -7 2.4 -1.2 1.7 1.2 .2 4 1.9 6 -1.6 6 2.3 7 1.5 .4 2.7 -2.4 -2.6 -6 .8 -4 1.1 -1 2.2 2 .7 5 -1.9 5 1.6 3 0 3 1.4 1.4 1.4 -2.4 -.2 -3 1.4 -6 .6 -19 -.6 -4 2.9 -4 .5 -3.5 2 .5 -.9 4 1.9 4.2 3 -3 1.6 .8 .7 2 -.9 3 -1.4 1.4 -3 -2.1 -2 6.7 1.2 15 .8 .9 4 -3.4 3 -.3 4 -2 1 .7 1 4.5 8 -1.8 6 4.9 2 -.5 0 -3.5 -3 -3.1 -2 -.6 -2 .6 -3 -2.2 -4 -.9 -2 .4 -1 -1.1 1 -2 2 0 3 -1.3 3 -4.8 1 -.4 2.9 1.9 2.1 2.6 2.3 .4 .8 -1 -2.3 -3 -.5 -2 1.7 -3.1 4 1.4 .8 3.7 -.9 3 1.1 1.8 2 -.4 2.5 -3.4 .9 -4 -2.7 -4 4.2 -4 -1.3 -4 -1.6 -2.4 -2 -.5 -1.5 1.9 .1 4 -.6 1 -1 -.6 -3.2 -6.4 0 -5 -2.6 -4 1.5 -7 2.3 -3.1 1 0 1.5 4.1 .4 6 1.1 2.2 6 1.6 5 2.9 4 .2 2.1 1.1 -1.1 1 -3 .3 -2 1.3 -3.9 5.4 .9 5.1 2 1.7 2 .1 2.2 -.9 1.3 -2 -.2 -5 4.5 -2 4.2 .1 1.1 .9 .8 3 1.1 .8 6 0 4 -1.4 6.4 -5.4 .5 -1 -1.2 -2 3 -4 2.3 -1.2 5 -.4 3.5 1.6 1.6 4 -1.1 2 -2.5 2 1.7 3 -1.2 6.8 -5 1.7 -1.6 1.5 .6 3.9 3 .5 7 -3.2 1 -1.2 -.9 -8 2 -5 -.7 -3 .5 -1 1.1 0 1.2 3 1.8 1 3 .5 5 -.9 6 3.3 1 -.6 0 -1.3 2.1 -3 .9 -3.8 4 .2 6.4 5.6 .7 2 -3.4 8 -1.7 6.7 -1 1 -1 -.6 -5 .4 -1.6 1.5 -.5 2 1.1 1.2 1 -.2 3 -3 4 -1.3 5 2.1 6 -1 1.6 1.2 -2.6 2.3 -3.3 .7 -.8 1 1.5 3 -1.3 4 .9 1.1 2.2 -2.1 -.2 -3 4.6 -3 1.2 -4 6.9 -1 -6.7 -2 -4 -.3 -.6 -.7 1.5 -2 -.9 -.7 -5 2.9 -2 .1 -1.6 -1.3 .8 -2 4.8 -4.2 2 -.6 11 -.6 2 1.4 .9 2 3.1 0 1.6 -1 .2 -1 -2 -3 .5 -1 4.7 -1 4.1 1 3.8 3 .1 1 -3.3 3 3.2 1 -.4 1 -4.9 4 1.1 2 1.3 .7 13 1.7 .9 -.4 -5.4 -2 -.4 -1 1.9 -.8 21 -.6 4 .9 3 -4 4.1 .5 .9 3 -4.5 3 -.2 2 4.7 2.8 3 .1 2.4 -.9 1.1 -1 -.3 -3 .8 -1.2 6 -1 7 -.1 10 3.1 11.2 .2 1.7 1 -.9 1 -3 .9 -9 -2.4 -7 .9 -5 1.6 -6.4 4 .3 1 3.1 1.4 12 2.2 6 2.4 7 -2 7 .6 3.5 -.6 -.4 -1 -3.1 -1.5 -9.7 -2.5 2.7 -1.6 14 1.1 13 -1.5 7 2.4 12 -1.4 10 1.1 2 -.5 .5 -1.6 -7.7 -3 3.2 -1.1 6 -.2 20.3 6.3 -3.1 2 -4.2 1 -10 -2.2 -3.8 .2 -.3 2 1.1 2 7 3.2 23 -.1 11 1.4 8 -1.5 -1.9 -2 3.9 -1.3 17 -.6 13 1 2.4 .9 -11.3 3 -.8 1 .3 2 2.4 .7 3.2 -1.7 5.8 -1.2 9 .6 1.9 2.6 -.2 1 -4.8 3 -.5 1 3.6 1.3 2.6 -.3 5.4 -2.6 5 -1 8 2.9 8.1 -.3 .5 -1 -3 -3 1.8 -1 -1.2 -1 -7.2 -2.7 -6.6 -1.3 .1 -1 2.8 -1 8.7 -.5 9.3 1.5 5.9 2 .8 1 -2.4 2 1.4 1 3 .4 8.2 -3.4 -2.4 -2 2.2 -2.2 7 -2.2 28 2.2 5 1.6 1.5 2.6 -.7 1 -7.8 .2 -3.2 .8 4.2 4.7 3.9 1.3 -.1 1 -5.5 2 -.6 1 15.3 2.5 7 2.7 16 1.1 3 -1.3 -12.4 -2 -.6 -1 3 -.9 .7 -1.1 -5.2 -2 -.5 -1 2.1 -1 5.9 -.4 13 .8 4.2 4.6 5.7 2 -4.9 1.6 -8 .4 12 1.8 26 -3.2 7.8 -2.6 -1.8 -1 -10.5 -1 4.5 -1 14 -.2 5.2 1.2 -4.4 2 11.3 3 2.6 3 -.4 2 .7 .3 3.6 -2.3 7.7 0 1.9 -2 3.8 -.7 17.9 .7 -.9 -.3 -.4 -1.7 3.3 -2 -.1 -2 4.2 -2 -.9 -3 21.6 -2 2.3 -2.3 4 -1.3 5.2 1.6 -4.5 2 -1.7 2.2 -14 3.8 -.8 1 .4 2 2.7 2 -.8 1 -8.4 2 6.9 1.4 16 -2.7 6.6 2.3 4.4 .4 2.1 -.4 .9 -1 -1.1 -1 .1 -1 3 -.7 22 -.5 6.2 -1.8 -5.2 -2.5 -18.9 -.5 5.3 -2 10.6 -.1 5 1.9 9 0 17 -1.6 12 1.6 5.6 -1.8 -10.6 -4 -.1 -1 7.1 -1 10 .1 5.8 .9 11.8 4 0 1 -1.6 1 2.7 2 -9 2 1 1 4.8 1 3.5 2.5 14.2 1.5 -8.2 .8 -8 -.4 -6.9 1.6 1.9 .9 5 .5 10 -.7 4.2 1.3 -11.1 2 2 1 -1 1 -16.1 -1.2 -2.6 1.2 1 1 -.8 1 -9.6 1 -3.8 1 -.2 1 4 1.4 8 .2 -2 2.4 4 1.4 3 -1 1.2 -1.4 -3 -2 11.1 -3 6.7 -.6 2.4 .6 -3.3 1 4.1 2 -1.3 2 2.1 2 2 .3 8.2 -3.3 -1.1 -2 7.5 -3 -2.6 -3 1.1 -1 7.9 -1.1 0 20.7 -215 .4 -225 3.3 -137 3.7 -73 3.5 -55 3.6 -24 2.2 -35 5.4 -47 1.3 -59 4.1 -12.2 1.9 -10.8 3.2 -13 5 -30 15.2 -7 1.2 -17 -.1 -9 2.2 -7 3.9 -15 12.6 -6 3.2 -5 .5 -14 -2 -12 -.1 -15 1.7 -12 3 -9 4.4 -8 5.7 -7 6.9 -7.5 9.5 -292.5 0zM748.5 658.6l-1.4 3.9 1.4 5.4zM922.5 769.6l0 3 .8 -2.1zM954.5 755.5l-1.6 1 -.3 4 1.9 1.2 1.2 -2.2zM982.4 778.5l1.1 2.2 2.3 -.2 .6 -1 -.4 -1 -2.5 -1.6zM994.5 798.5l0 1 3.5 2 1.6 3 4.9 .3 3.2 2.7 .8 -3 -1 -2.7 -3 -.7 -5 -4.3zM998.5 789l-.6 1.5 1.6 1.5 .9 -1.5 -.9 -1.5zM1009.5 788.2l-1 -.1 -1.8 1.4 -.2 2.2 1 .6 2 -1.1 .6 -1.7zM1022.5 784.8l-1 3.7 1.1 4 2.9 1.3 3 -.2 -.2 -1.1 -3.7 -3 .7 -3 -1.8 -2zM1027.5 776.2l-2 -.3 -1 .8 -.9 2.8 .4 1 3.5 -1.6 .7 -1.4zM1039.3 799.5l3.8 2 .3 -1 -1.8 -2 -1.3 0zM1044.5 773.6l-1.2 2.9 .7 3 1.5 1.8 1 -.4 .5 -1.4 -.8 -5zM1044.9 764.5l2.6 2.5 2 .3 0 -1.8 -.9 -1 -3.1 -.6zM1049.8 772.5l1.7 2 3 1.7 3 -.2 1 -1.1 -1 -1.3 -6 -1.9zM1067.5 746.3l-2 -.4 -2.6 1.6 -3.8 6 -7.6 3 -.9 2 .9 1.5 3 -.9 6 2.3 2.8 -.9 4.1 -7 .6 -5zM1078.3 753.5l-.8 -1 -5.4 2 -1.4 2 .4 2 3.4 2 1.3 -4zM1083.5 773.9l-.7 1.6 .7 1.4 1 .1zM1085.5 761.4l.1 5.1 .9 1.6 1 -.4 .1 -1.2zM1089.7 783.5l-2.2 .1 -2 4.9 2 0 2.7 -2zM1094.5 765.6l-1.5 2.9 .5 1.6 1.3 -1.6zM1095.5 782l-1.3 1.5 3.3 3.3 .5 -1.3zM1114.5 745.5l-.3 1 1.3 1.7 2 1.1 1 -.8 -2.5 -3zM1123.5 748.5l-2.8 1 1.8 4.1 1 -.1 1.7 -3zM1127.5 742.8l-.6 .7 0 4 1.6 .6 2.7 -.6 .7 -1 -.5 -2 -1.9 -1.4zM1132 761.5l-.5 -.5 -3 3.9 -7 2.7 -1.8 1.9 .1 2 5.7 -1.7 4 .6 2 -2.9 -.6 -2zM1132.5 775.7l-.6 1.8 .6 1 .8 -2zM1136.5 774.4l-.6 1.1 .6 1.2 .5 -1.2zM1143.8 792.5l-1.3 -.8 -1 2.3 1.9 -.5zM1153.5 763.8l-4.8 3.7 1.3 4 -.4 2 .9 .7 3 -.3 1.7 -1.4 -.4 -3 .8 -3zM1163 754.5l-3.5 -1.2 -4.7 2.2 .7 .9 4 -.4zM1160 761.5l3.5 1.5 2 1.8 5 -.3 7 1.2 1 -1.2 -5 -3.2 -6 -2.2 -4 .5zM1182.3 767.5l2.2 .8 1.8 -.8 -.4 -1 -1.4 -.3zM1190.9 798.5l1.6 .7 1.3 -.7 -1.3 -.7zM1193.5 779.5l3 1.4 5 -.1 3 .9 1.1 -1.2 -1.1 -1.5 -10 -.8zM1196.9 794.5l.6 .9 1 -.2 3 -2.5 8.4 -2.2 1.6 -2.1 7 -1.6 11.2 -.3 0 -1 -12.2 -3.7 -8 -.1 -1.4 .8 -.5 2 -1.2 1 .4 3 -8.3 3.9zM1230.8 791.5l3.7 2.2 1.6 -.2 .8 -1 -3.4 -2.2 -1.9 .2zM1300 771.5l-4.5 -1.5 -11 .1 -5.5 2.4 .3 1 -5.8 2.5 -7 .2 -5 1.2 -13 -1.1 -3 .8 -.8 1.4 5.1 3 1.7 2.2 9 .4 3.1 -.6 -3.4 -3 2.3 -1.2 5 -.5 4 -1.8 10 -.4 4.8 -2.1 -2.5 -1 10.7 .3zM1314.2 777.5l3.3 .9 3 -.2 .5 -.7 -3.5 -1.6 -2.4 .6zM1327.5 794.5l0 1 3 .8 3.6 -.8 .1 -1 -3.7 -.6zM1335.3 803.5l1.2 .8 .7 -.8 -.7 -.9zM1344.5 788.5l4 2.5 2.8 -1.5 -.4 -1 -2.4 -1zM1350.7 782.5l3.8 2.4 1.9 -.4 .7 -1 -3.6 -2 -1.6 0zM1359.6 800.5l3.5 2 -.7 2 1.1 .7 8.3 -1.7 -.3 -1 -3.6 -1zM1373.9 780.5l4.1 2 -1 2 1.5 .5 3 -.1 5.3 -2.4 -1.3 -1.2 -10 -1.7zM1397.4 795.5l3.1 .1 1.2 -1.1 -3.2 -.3 -1.2 .3zM1408.5 797.5l11 3.1 2 -.2 2 -1.9 -1 -1 -3 -.6zM1426.7 793.5l9.8 1.6 3 1.3 4 -.5 2.9 -1.4 -.5 -1 -7.4 -1.3 -7 .1zM1437.2 786.5l3.3 2 15 1.7 16 -1 3 .7 2.1 2.6 3.9 1.6 3 .6 1.8 -1.2 -6.2 -4 4.7 -2 -.9 -2 -3.5 -2 -5.9 -1.5 -14.4 .5 -11.6 2.3 -10.1 .7zM1535.7 802.5l-11.2 -.7 -5 -2.5 -10 2.1 -8 -1.3 -5.6 .4 4.6 2 9 -.9 12 1 5 1.3zM1561.8 802.5l4.7 1.4 6.6 -.4 -8.6 -1.8zM1577.7 803.5l2.5 0 .8 -1 -2.7 0zM1621.9 807.5l-1 -1 -5.4 -1.1 -4 1.8 -7.4 1.3 .6 1 3.8 .3zM1625 797.5l1 3 1.3 1 7 -1 -6.8 -2 2 -1.9 1.2 -.1 -4.2 -.1zM1633.6 794.5l.9 .7 3.8 -.7zM1723.6 803.5l-6.1 -3.6 -15 -1.6 -13 2.1 -11 -.4 -4.9 1.5 .4 1 3.5 1.4 8 1.9 15 -1.4 19 .1zM1719.5 795.5l1 1.2 7 1.3 18 -.8 8.1 -2.7 4.4 -4 -3.5 -1.3 -8 -1 -10 .2 -9.8 2.1 -1.7 1 -.8 2zM954.5 777.8l-1 1.1 -.6 2.6 1.6 2 1.3 -1 .7 -3zM1060.1 781.5l-4.6 .6 -1.6 1.4 -3 7 1.6 2.9 1 .1 .7 -4 2.6 -5 1.7 -1.1 2 -.2zM1083.4 770.5l-.5 -2 -3.9 -2 -1.1 -3 -2.4 -2 -1 3.6 -2 2.3 -5 .7 -3 -1.2 -1 .3 -.3 1.3 2.3 2.2 3 .4 4 -.9 3 1.2 3 -.5 4 2.3zM1089.5 796.7l-1 .8 -1 4.3 2.5 -3.3zM1096.5 793.8l-.7 .7 .5 1 1.2 .1 .6 -1.1zM1115.5 776.1l-.8 1.4 .8 1 1.1 -1zM1129.6 771.5l.1 1 1.8 1.4 .5 -1.4 -1.5 -1.3zM1160.5 782.5l4 2.7 2.4 -1.7 -1.1 -2 -2.3 -.7 -2 .4zM1174 771.5l1.5 1.1 2.3 -1.1 -1.3 -1.4zM1184.9 778.5l.6 1.2 1.8 -1.2 -.8 -.7zM1256 805.5l5.8 2 2.7 2.5 1.4 -.5 -.4 -3 -1 -1.2 -4 -.6zM1259 794.5l-.3 1 1 1 1.8 .6 1.8 -.6 .1 -2 -.9 -.7zM1265.7 790.5l.1 1 2.7 .7 5 -.6 6 .5 2.2 -.6 -3.2 -.8 -5 .2 -5 -3zM1290.3 782.5l1.2 1 4 .4 8 -.7 1.8 -.7 .4 -1 -2 -1 -8.2 -.4 -4 1.1zM1374.2 788.5l.7 1 2.6 .8 .1 1.2 1.9 1.2 1.4 -1.2 -3 -2 7.5 -2 -.9 -1.3 -4 -.6zM1435.6 803.5l1.9 1.1 1.5 -1.1 -1.5 -1zM1448.5 808.5l2.8 -1 -1.8 -.3zM1451 799.5l8 5 .1 1 11.4 1.7 5 -2 8 -.2 6 .6 4 2.1 1.3 -.2 0 -1 -2.3 -2.5 -6 -3.4 -15 0 -9 -1.4 -1.7 -.7 3.5 -2 .3 -1 -5.1 -.4 -7 2.8zM1701.6 812.5l2.9 1 6.7 -1 -5.7 -1.4zM1715.6 808.5l6.9 1.3 5 -1.3 -5 -1.3 -6.3 .3zM1733.4 811.5l2.1 1 4 -1 -3 -.7zM1069.5 782.3l.3 2.2 4.4 1 .2 -1 -2.9 -2.8zM1164.7 794.5l1.8 1.1 1.3 -1.1 -2.3 -1zM1172.6 776.5l2.9 2.6 3.7 -1.6 -3.7 -2.4zM1274.3 802.5l3.2 1.1 10.5 -.1 -8.5 -1.8 -4 .1zM1300.9 796.5l1.6 .5 1.4 -.5 -1.4 -.8zM1713.8 813.5l3.7 1 4 -1 -1.4 -1 -2.6 -.3zM1171.8 794.5l1.7 .9 2 -.9 -2 -1.1zM712.5 526.6l.7 7.9 -1.7 4.8 -.6 -4.8 .6 -5.8zM764.5 624.4l0 11.1 -1 2.2 0 -12zM1108.7 682.5l1.8 -1.7 2.7 .7 -2.7 2.5 -1 -.1zM1088.6 682.5l3.9 -.9 4.4 1.9 -.4 .8 -2 .2 -5.1 -1zM1110.5 685.4l1.1 1.1 -.2 1 -2.9 1.3 -.9 -1.3 .5 -1zM1096.1 687.5l1.4 -1.7 2 .4 1.3 1.3 -.7 1 -1.6 .3zM1082.5 690.1l5.5 4.4 -.8 4 -1.7 .9 -4 -.3 -2 -2.4 .4 -4.2zM1101.1 698.5l1.2 -3 2.2 -.9 3.1 2.9 -2.1 1.6zM1040.5 695.5l.9 7 -.9 8.7 -1 -1.8 -.8 -7.9 .5 -5zM1113.5 700.7l-.4 1.8 -1.6 .5 0 -1.8zM950.5 701.1l1.1 5.4 -1.1 3 -.6 -3zM1102.8 701.5l2.7 -.8 1.4 .8 -2.4 1.1zM1004.5 704.4l1.2 6.1 -2.2 7.4 -1.1 -1.4 -.1 -4 1.2 -7.2zM1111.5 704.2l.9 2.3 -.4 2 -2.5 1 -2 -.9 .6 -2.1zM1070.5 704.9l2 .6 .9 1 -.3 1 -2.2 0 -.7 -1zM963.5 707.8l1 -.1 1.3 3.8 -1.3 5.1 -1 -.4 -.9 -4.7zM1089.5 708.7l2 -.2 4.9 2 .5 3 3.6 3.5 7 -2.9 6 -.3 3 .7 -.2 4 3.7 2 .2 1 -2.3 2 -.4 4 -2 1.6 -2.4 .4 2.4 .6 1.3 1.4 -.5 2 -3.8 1.6 -2 -.1 -1.8 -1.5 -.3 -2 2.3 -3 -.5 -5 -1.7 -.2 -5 2 -2 -.2 -1.8 -1.6 -1.2 -2.9 -3 .4 -4 -2.5 -1.3 -2 .6 -3 -1.5 -2zM1131 713.5l.4 1 -1.6 3 .7 3 -1.4 1 -5.6 .9 -2.3 -.9 2.6 -3 .2 -3 1.8 -2 2.7 -.8zM1078.2 715.5l1.3 -1.1 3 .6 2.3 1.5 .1 2 -2.4 1.2 -3 -.2 -1.5 -2zM1019.5 715.4l3.1 7.1 -.3 3 -1.8 2.6 -2 -.8 -1.3 -2.8 .6 -6zM988.5 716.5l1.3 5 -2.3 4.1 -.9 -4.1 .9 -4.6zM1029.5 717.4l1 .8 0 1.6 -1 -.8zM1147.5 721.5l2 -2.7 2 -.7 6.8 .4 2.1 1 -2.9 2.1 -5 1.5 -3 .1zM1059.5 718.7l2.9 .8 3.1 3.5 1.6 3.5 -.6 5.1 -2 0 -3.6 -5.1 -2.4 -5 0 -2zM950.5 720.5l3.1 15 -1.9 5 1.5 2 .1 2 -2.8 2.1 -1 -.2 -.7 -1.9 1.2 -4 -2 -10 .5 -2.9 1.6 -3.1zM973.5 720.5l.6 4 -.6 2.2 -1 -3.2zM1212.5 723.5l4 -1.4 5 .3 1 1.6 -3.8 2.5 1.3 1 18.7 2 1.3 1 -10.5 1.5 -9.6 -.5 -2.6 -2 .2 -3zM1303.5 722.5l4 -.6 14 1.4 12 .2 3 .7 1.2 1.3 -2.2 .5 -10 -1.3 -15 -.2 -6.9 -1zM963.5 723.2l1 .6 1 2.7 -1 2.5 -1.7 -.5 -.8 -2 .5 -2.8zM1119.9 725.5l2.6 -2.5 3 2.1 .5 2.4 -1.5 1 -4.2 -1zM1167 727.5l1.1 -3 3.4 -.7 9 .2 3.1 2.5 -1.1 1 -5 .6 -6 2.2zM1003.5 724.5l1.4 1 .5 2 -.9 1.6 -1 .2 -.9 -2.8zM1136.5 731.9l-.5 -2.4 1.5 -2.9 4 -.4 2.9 1.3 -1 2 -5.9 3.1zM1257.5 727.5l2 -1.1 4.6 .1 15.8 5 -.8 1 -3.6 -.1 -2.8 -.9 -3.2 -2.5zM1151.2 728.5l2.3 -.8 5 .6 2.9 1.2 .4 1 -1.3 1.5 -9.2 -2.5zM1290.3 728.5l5.2 -.8 15.3 .8 2.7 1 .6 1 -1.6 2 1.6 2 -.9 1 -3.7 .4 -8 -.4 -1.6 -1 2.5 -2zM941.5 729.7l0 3.2 -1 -.2 -.1 -1.2 .1 -1.2zM1011.5 730.7l1.4 .8 .5 3 -.9 3 -1 1 -1.6 -1 .1 -4zM1170.1 732.5l1.4 -1.7 4.6 1.7 .4 1 -5 .7 -1.4 -.7zM1075.5 732.2l3 .7 2 2.6 -.6 3 -3.4 2.7 -3 -1.1 -1.7 -2.6 1.7 -3.9zM1164 735.5l-.2 2 -2.3 1 -12.4 1 .4 -2.1 3 -1.8 9 -2.2zM1239.5 741.9l12 -.7 5.8 -1.7 -.2 -1 -5.6 -3 -.2 -1 1.7 -1 14.5 -.1 5 .9 3 2.2 -7.7 4 -.1 3 1.3 1 11.5 3 -11 1.5 -11 -.3 -3.3 -1.2 -1.1 -2 -14.6 -3zM1029.5 735l3 4.2 5.5 2.3 .7 2 -1.2 1.8 -7 -1.9 -2 -4.9zM1360.9 736.5l1.8 -1 3.8 -.1 13 1.1 -2 1.1 -10 1 -4 -.4zM1170.1 736.5l1.4 -.5 5.5 1.5 -.2 1 -1.3 .8 -2 -.2 -3.3 -1.6zM1180.3 738.5l2.2 -1.1 8.3 .1 -1.1 2 -3.9 3 3.7 1.4 5 0 13 -3.4 3 .7 2.5 3.3 -1.5 1.1 -10 1.6 -2.1 1.3 .1 3.2 -6 .2 -2.6 -1.4 -.4 -2.1 -9.3 -2.9 1.5 -2 -2.3 -2zM1419.5 737.5l4 -.2 1.7 1.2 -4.8 0zM1144 738.5l.2 2 -1.7 1.2 -.9 -.2 .1 -2zM1445.7 738.5l6.8 -.3 1.9 1.3zM1285.4 740.5l.6 -1 5.5 -.8 13.2 .8 0 1 -1.9 1 -4.3 .7 -8 -.4zM957.5 740.1l.8 2.4 -.8 3.9 -1 -.7 -.5 -2.2zM1320.3 743.5l11.2 -2.2 15 1.1 .9 1.1 -1.7 2 8.2 3 .7 1 -.8 1 -4.3 .7 -14 -1.1 -5.4 -1.6 1.1 -2 -10.7 -2zM980.5 741.9l1 .6 1.4 5 -1.4 2.4 -1.2 -.4 -1.5 -3 .1 -2zM1153.9 743.5l2.6 -.5 1.3 .5 -3.3 1.3zM1448.4 745.5l8.1 -.3 2.7 .3 1.4 1 -7.1 .5 -4.3 -.5zM1020.5 746.1l1.9 2.4 .3 2 -2.2 3.7 -1.5 -.7 -.6 -4 .8 -3zM1294.5 752.5l1 -3.6 2 -.4 11 3.2 26.1 1.8 1.6 1 -2.5 3 2.8 1.2 4 .1 6 -1.6 3.8 .3 -2.1 3 -3.7 1.4 -18.3 -.4 -1.7 -2.2 -3 -.9 -23.4 -.9 2.4 -2 -.4 -1zM1212.5 755.5l.4 -2 9.6 -4.9 7 .4 12.1 2.5 1.6 1 -.7 1.5 -2 .5 -15 -.9 -11 2.4zM1369.4 752.5l3.1 -2.2 7 .1 12.5 2.1 1.4 1 .2 1 -.8 1 -3.4 1 -12.9 .3 -5.2 -1.3 -1.3 -1zM1612.2 750.5l16.7 0 -8.4 1.1zM1252.9 754.5l3.6 -2.3 9 -.8 17 1.9 2.5 1.2 -23.5 2.2 -7 -.9zM1410.4 754.5l2.1 -1.6 5 -.6 9.5 2.2 -1.8 1 -8.7 1.3 -4 -.6zM1721.5 753.5l6.2 0 -1.2 .5zM1442.2 756.5l20.3 -2.2 5 .2 4 1.1 .7 .9 -1.6 3 11.9 2.2 8 -.7 2 1 1 1.5 -3 1.9 -17.7 -.9 -5 -1 -6.6 -3 -12.8 -2zM1490.1 759.5l0 -1 4.1 -2 5.3 -.6 3.2 .6 -6.4 3 -4.8 .8zM1800.5 756.5l7 -.5 0 1.8 -5.2 -.3zM1534.7 758.5l8.8 -1.1 6 1.1 -2.4 1 -4.6 .4 -6.4 -.4zM1615.6 760.5l1.1 -1 19.8 -.1 14.4 1.1 -3.4 1 -31 .2zM1369.2 763.5l.4 -1 4.9 -1.1 22 -1.4 17 0 6 1.4 .2 1.1 -3.2 2.2 -7 2.1 -11 -.3 -18 2.3 -3.7 -.3 1.8 -2 -1.4 -1zM1436.6 765.5l.7 -1 13.2 -1.1 10 2 4.5 2.1 -.5 1 -2 .6 -14 .3 -4 -.8zM1739.3 765.5l3.3 -1 15.9 -1.5 2 .5 -1.6 1 .6 2.2 11.9 .8 -5.9 1.1 -14 .4 -3.5 -.5zM1793.8 764.5l13.7 -.5 0 1.5zM1533.3 765.5l9.2 0 -2 .6zM1482.2 768.5l1.3 -1.4 5 -1.5 6 .4 3.6 1.5 -2.3 2 -3.3 .6 -7 -.2zM1413.3 769.5l-3.8 1.3 -6.9 -.3 5.9 -2.1 3 .1zM1526.8 770.5l6.7 -2.3 10 -.4 7 1.6 3 1.7 11 1.2 2.6 1.2 -16.6 1.7 -10 -.1 -10 -1.6 -2.1 -1zM1793.4 769.5l4.1 -1.1 10 -.6 0 8.1 -6.8 -.4 .6 -2 -.9 -1zM1635.1 769.5l4.4 -.4 2.3 1.4 -4.3 .4zM1659.3 774.5l.6 -1 8.6 -2.7 7 .5 1 1.2 -1.9 2 -8.1 1.6zM1338.9 772.5l7.6 0 -1 1.1 -3 .5 -3 -.5zM1726.2 774.5l-.7 1.2 -5 .5 -15.8 -1.7 15.8 -1zM1580.1 782.5l2.9 -2 -1.2 -2 .7 -.6 14 .3 7.8 -.7 1.8 -1 -14.6 .1 -7.6 -1.1 2.1 -1 10.5 -.1 12 1 6 -.9 5.5 1 -.8 1 -4.9 2 -11.8 1.6 -12 3.5 -6 .4zM1628.7 779.5l3.7 -2 8.1 -1.5 9 .2 4.4 1.3 -8.4 2.4zM1559.7 778.5l7.8 -.7 3.2 .7 -3.2 .6zM1496.8 780.5l.1 -1 1.6 -.4 11.8 1.4 -2.1 1 -7.7 1.2 -2 -.5zM1681.7 780.5l6.8 -1.2 3 .2 .1 1 -4.1 .9zM1722.3 779.5l9.2 -.9 7.3 .9 .6 1 -11.9 .9 -4.5 -.9zM1791.1 780.5l4.4 -1.5 12 -.1 0 2.2zM1457.5 785.5l.3 -1 1.7 -.6 7 -.2 3.9 .8 2.3 2 -4.2 .9 -9 -.9zM1602 787.5l15.5 -1.2 4 .6 2.5 1.6 -.9 1 -6.6 .4 -13.5 -1.4zM1802.1 786.5l5.4 -.8 0 1.5zM1504.4 788.5l2.1 -.7 4.3 .7zM1803.7 789.5l3.8 -.4 0 1.5 -2.2 -.1zM1731.8 793.5l.7 -1.3 4 -1.2 7 -.2 3.8 .7 -.8 1 -4 1.1zM1794.6 795.5l1 -1 11.9 -.6 0 2.6z"/>
<path fill="#0215b0" d="M428.5 584.5l1 -2.8 1 .4 6 26.3 1 1 1 -1.6 2 -9.8 1 1 4 33.6 2 8.9 1 2.3 1 -.2 1.6 -20.1 2.4 -118 1 -17.4 3.2 142.4 .8 14 1 4.1 1 -2.5 1.6 -25.6 5.4 -179.9 1 0 5.4 170.9 .9 14 .7 3.8 1 -2.2 2.4 -32.6 2.6 -115.5 2 44.7 1 5.7 8 -85.3 3 -23.8 2 -7.1 2 9.7 4 34.6 9 101.6 1 -.9 4 -59.1 2 -18.2 3 42.3 6 119.9 2 -13.6 1 1 4 71.1 2 20.7 7 19.5 2 2 1 -1 3.1 -13.3 3.2 -31 6.7 -132.3 2 -23.3 4 61.5 1 6 1 -.7 2 -20.5 3 -60.5 1 -7.4 3 54.2 1 9.5 1 -6.7 4 -79.4 1 -6.8 4 72.8 1 4.8 4 -61.4 4 66.6 1 9.3 1 2.3 1 -3.3 1 -11.7 5 -115 1 5.6 3 54.1 3 -58.2 3 65.7 1 3.9 4 -85.4 1 5.2 2 26.8 4 -88.3 2 24.4 1 -2.6 3 -32.4 1 0 5 55.8 5 84 1 7.3 3 -35.7 1.1 6.8 6.9 154.7 2 8.5 1 1.3 1.2 -23.5 5.2 -158 .6 -6.7 1 11.4 2 47.7 2.1 -21.4 .8 -29 1.1 -4.6 2 25.4 1 1.9 2 -18.2 1 -1.6 .9 7.1 6.2 95 2.4 18 2.8 49 0 10 2.7 19.1 1 -2.2 2 5.1 1.3 -2 .1 -15 4.6 -44 1.9 -34 1.1 -8 1.6 -5 -.8 -6 .9 -15 2 -10 1.3 -1.7 1 .5 1.3 7.2 -.6 13 1.6 7 1.9 17 .6 17 2.8 22 -.3 8 2.7 14.4 2.9 -46.4 1.1 2.6 2.9 67.4 3.1 34.8 1 -12.9 2 -1.9 1.7 -6 -.4 -13 .8 -7 1.6 -4 -.6 -13 3.9 -37.9 2.7 21.9 1.5 22 -.9 8 1.7 10.1 1.8 -30.1 1.2 -3.6 1 -.4 1 3.8 3 56.7 1 .9 2.4 -8.4 1.8 -38 1.8 -9.7 1 -.7 1.8 10.4 -.1 12 1.4 8 .5 18 3.4 25.2 1 1.2 3 -45.4 1 -6.4 1 1.7 2 26.9 .3 18.8 1.7 14.4 1 0 2 -21.8 1 .2 1.6 17.2 -.3 8 1.7 4.6 1.8 -29.6 1.6 -12 .6 -19.2 2 9 -.1 16.2 2.1 15.7 1 -1.5 1.9 -20.2 .4 -16 2.7 -19 2 8.9 1 -.1 3.7 -22.8 1.2 -15 1.1 -3 2.4 19 2.6 10.6 1 -3 2.9 47.4 2.3 18 .7 15 1.1 3.9 1 -3.6 1 -.1 .4 6.8 1.6 8.2 1 1.3 2.1 -9.5 -.2 -13 2.6 -25 .2 -15 1.3 -8.6 1.9 17.6 -.1 4 -1 3 2.2 7.9 1 1.1 1 -1 .2 -19 .8 -9.8 1 -3.6 4 38.4 1 1.2 2.9 -11.2 1.2 -19 2.7 -11 -.8 -6 2 -13.6 1 .9 .7 12.7 1.8 11 2.3 27 2.2 -14.4 3 38 1 -1.3 .8 -5.3 .1 -11 1.1 -10.7 1 -1.6 3 17.3 3 -17.8 2.2 7.8 1.6 15 3.2 14.7 2 15.6 1.5 -5.3 .4 -13 2.1 -14.6 4 33.5 .6 -1.9 3.4 -36.9 1 0 1.6 22.9 2.4 17.9 4 -41.2 1 2.4 1.9 28.9 2.1 8.8 1 -3.1 1 .5 1 3.2 1 .7 2.2 -10.1 -.3 -11 1.1 -15 1 1.4 .3 7.6 1.2 7 -1.2 7 1.6 3 1.1 7.9 1 -.1 1.1 -9.8 2.9 -4.2 3.6 18.2 .3 7 .9 -1 -.2 -6 1.4 -6.3 1 -.9 .9 10.2 -.4 4 1.5 2.5 1.5 -2.5 1.5 -27.1 1 -2.8 1 .9 -.2 6 2.3 5 .1 7 -1.7 6 2.5 3.3 1 0 1 -4.3 -.3 -8 1.3 -5.6 1 -.5 4 .9 2 2.1 2 -2.8 1 -.2 2 2.8 1.6 -3.7 -.9 -5 .4 -3 .9 -2 2 -.1 2.9 4.1 -.1 6 2.1 6 -2 8 0 9 2.1 1.2 1 -.6 1.9 -6.6 1.1 -1.2 2.3 1.2 1.2 2 -2.5 13.5 -5 3.6 -2.3 3.9 .3 .6 4 -3.1 3 -.1 1.5 1.6 1.6 5 4.9 7.2 .7 -.2 -1.7 -4 -.5 -4 -4.7 -6 -.7 -2 2.9 -2.5 2.5 -4.5 -.3 -9 .8 -1 3 .4 1.5 -2.4 0 -5 1 -4 -.7 -6 1.2 -1.5 2.2 .5 .5 4 1.8 5 .1 2 -1.5 5 2.1 7 .8 .7 4 -1.4 1.4 2.7 .5 4 1.1 .6 1.3 -1.6 .2 -5 1.2 -5 .7 -19 -.6 -4 3.2 -4 2.2 6 -1.7 10 .8 4 0 7 1.7 3.5 4 -3.9 3 -.2 4 -1.8 2 5.4 8 -2.1 4 3.6 3 1.4 1.2 -.9 .4 -2 -2.6 -4.3 -3 -1.2 -2 .5 -3 -2.3 -4 -1.2 -2.1 .5 .1 -1.7 2 .2 3 -1.5 3 -5.2 1 -.4 5 4.6 3 0 .5 -1 -2.8 -4 .1 -2 1.2 -1.6 3 .3 1.6 3.3 -1 5 2.4 1.3 2.6 -2.3 3.1 -6 -2.7 -2.4 -.5 -1.6 2.5 -2.3 1 -.2 1 1.2 1 3.8 5 .6 3 -2.1 -.6 -5 1.7 -2 5.9 -1.1 1.8 1.1 1.2 3.9 7 .3 4 -1.5 8 -6.2 8 1.6 2.8 2.9 -.8 6.1 -1 1 -4 1.2 -1.9 1.7 .1 3 1.8 1.8 4.1 -.8 5.9 -3.5 -.5 -9.5 2.5 -4.8 5 1.5 6 -.8 9 4.6 1 4 -2 2 -5 .2 -4 -3.2 -1.3 .5 -.3 1 2.6 2.8 3 .4 2.5 3.8 1.5 .7 3 -5.1 6.1 -.6 -.4 5 -6.7 1.1 -1.4 .9 -1.1 3 1.5 1.5 4 -3.1 3 -1 6 1.8 5 -1.3 1.8 1.1 -1.8 2.1 -4.1 .9 -.4 1 1.7 3 -1.2 5.2 1 .1 2.6 -2.3 -.3 -3 4.6 -3 .8 -3 1.3 -.8 17 -2.7 2.1 3.5 -8.1 1.9 -4 -.2 -.7 1.3 4.7 .3 6 3.3 5 -.3 7 1.2 1.6 -.5 -.2 -1 -8.8 -5 .4 -.4 12 1.1 1.6 -.7 -4.6 -1.6 -1.2 -1.4 4.2 -.9 18 .1 3 1.4 3 -2.8 3 -1.3 1.7 .5 .3 1 -5 5 3.2 3 3.8 1.2 5.1 -1.2 1.1 -1 -.5 -3 2.3 -1.4 10 -.7 7.8 2.1 1.4 1 -10.2 2.6 -7.4 4.4 .5 1 2.9 1.3 13 2.4 6 2.5 8 -2 6 .5 4.3 -.7 -4.3 -2.6 -8.8 -2.4 1.8 -1.1 3 -.4 11 1.2 12 -1.2 8 2 12 -1.2 11 1.3 1 .8 1.3 3.6 7.7 3.8 19 -.4 15 1.3 9 -1.7 -2.1 -2 4.1 -1.2 17 -.4 13.2 1.6 -10.7 3 -.6 2 .9 2 -.8 .9 -8 -1 -1.9 1.1 3.6 2 -.7 1.3 -1.8 .7 2 1 .4 1 -3.4 2 5.8 4.3 1.7 -1.3 -2.4 -2 7.2 -2 0 -1 -2.7 -1 .6 -1 4.1 -2 -3 -2 5.2 -3 9.3 -1.1 5 .9 1.3 2.2 -.3 1 -4.9 3 -.3 1 2.2 1.2 4 .2 6 -2.6 6 -.5 7 2.4 9 0 3 2.4 3 1.2 15 1.6 17 -.6 3.5 2.7 6.5 2.5 3 -.4 .5 -1.1 -5.3 -4 3.8 -1.3 18 3.1 7 2.5 13 1.4 8 -1.3 13 1.6 24 -2.8 14 -3 12.9 2.8 3.1 3 -.2 2 1.2 .4 4 -1.9 8.5 -.5 1.9 -2 7.6 -.7 8.2 .7 2.5 1 -.7 .8 -5 .9 -1.1 1.3 .5 3 2.6 1.4 8.4 -1.4 -5.5 -2 2.1 -1.4 5 -1.3 5 -.5 11 .9 13 -2.6 8 2.2 4 .2 3 -.6 .7 -.9 -1.1 -1 .3 -1 3.1 -.7 25 -.8 3.6 -1.5 -2.6 -2 2.5 -1 21.5 -1.4 9 1.2 5 -.1 4.3 -1.7 -8.8 -4 .3 -1 7.2 -.8 9 .4 14 4.4 -1.2 2 3 2 -10.1 2 1 1 5.2 1 4.1 2.7 11.6 1.3 -13.6 .3 -7.7 1.7 -.2 1 8.9 .6 9 -.7 4.2 1.1 -12.6 2 2 1 -15.6 -.2 -2.2 1.2 1 1 -.9 1 -9.3 1 -4.1 1 -.3 1 2.8 1.5 7.6 .5 -.6 2 5 1.6 2.4 -.6 2.4 -2 -1.8 -2 11 -2.1 7 1.9 -.7 2.2 2 2 2.7 .6 8 -2.7 1.1 -.9 -1.1 -2 7.7 -3 -3.1 -3 1.1 -1 7.3 -.9 0 20.4 -170 0 -123 1 -264 5.3 -126 6 -43 3.2 -39 5.6 -42 .8 -63 3.9 -13 2 -16 5 -13 5.5 -18 9.7 -6 2.4 -7 1.1 -17 -.3 -8 1.8 -8 4.1 -15 12.3 -6 3.1 -5 .5 -14 -2.2 -12 -.3 -16 1.6 -12 3.1 -9 4.3 -8 5.8 -7 7 -11 13.2 -288 0zM923.5 768.5l-1 .1 -.4 1.9 .4 2.6 1.1 -1.6zM954.5 754.1l-1.8 1.4 -.5 4 .3 1.3 2 1.3 1.5 -2.6zM982.5 777.1l-.4 1.4 1.4 2.4 2.5 -.4 .2 -2 -2.7 -1.9zM994.2 798.5l.3 1.3 3.2 1.7 2.5 4 3.3 -.7 3.4 2.7 1 0 .8 -3 -1.2 -3.7 -3 -.1 -5 -4.1zM998.5 788.8l-.7 1.7 1.7 1.8 1.1 -1.8 -1.1 -1.6zM1009.5 787.9l-2 .7 -1.5 1.9 1.5 2.1 1 -.2 1.6 -1.9zM1022.5 784.4l-1.1 4.1 1 4 2.1 1.3 4 .2 -.1 -1.5 -3.5 -3 .6 -3 -2 -2.6zM1027.5 776l-2 -.3 -1 .6 -1 2.2 0 2.8 4 -2.1 .8 -1.7zM1039 799.5l3.5 2.4 1.1 -.4 -.5 -2 -1.6 -1.2zM1044.5 763.8l.5 1.7 4.5 2.8 .5 -1.8 -.5 -2 -4 -1.1zM1067.5 745.5l-2 .1 -3.5 1.9 -3.3 6 -7.2 2.3 -1.1 1.7 .1 2.4 1 .7 2 -1.1 2 0 5 2.1 3 -.9 4.6 -7.2 .2 -6zM1076.5 752.3l-4.9 2.2 -1.4 2 .5 2 4 4 -.1 2 -1.1 1.9 -3 1.5 -3 0 -4 -1.1 -.6 1.7 .6 1.3 2 1.1 7 -.3 3 1.1 4 0 2.6 1.8 .9 3 1.5 1.1 .4 -1.1 -1.4 -3 -.3 -5 -3.7 -2.1 -1.4 -2.9 -2.9 -3 .9 -4 2.8 -3 -.4 -1.2zM1085.5 761l-.6 1.5 .7 5 .9 .9 1 -.2 -.3 -3.7zM1093.5 759.4l0 1.9 1 1.4 0 -2.3zM1102.5 786.1l-.7 1.4 .7 .4 .8 -1.4zM1110.6 777.5l-2.1 .8 0 1.6zM1114.5 776.2l-.2 1.3 1.2 1.2 1 -.3 -.1 -1.9 -.9 -.7zM1132.4 761.5l-.9 -.9 -3 4.1 -6.2 1.8 -3.1 3 -.2 2 1.5 .6 4 -1.9 3 .1 4.2 4.2 .8 -2 -2.1 -2 0 -1 1.5 -2 -.8 -2zM1132.5 775.1l-.7 2.4 .7 1.2 1.2 -2.2zM1136.5 773.9l-1.1 2.6 1.1 .4 .8 -1.4zM1145.2 793.5l-2.7 -2.2 -1.5 2.2 .5 1.1zM1153.5 763.4l-5.6 4.1 1.4 3 -.1 3 .7 1 3.6 -.3 2.1 -1.7 -.5 -3 1 -3zM1160.5 765.5l-1.3 1 .3 1.2 1 0 .7 -1.2zM1160.5 781.5l-.4 1 .7 1 3.7 2.1 2.9 -2.1 -.9 -2 -2 -.9zM1173.4 771.5l2.1 1.4 2.7 -1.4 -.3 -1 -1.4 -.6zM1181.8 767.5l2.7 1 2.4 -1 0 -1 -3.4 -.4zM1192.7 778.5l0 1 3.8 1.7 5 -.1 3 1 1.5 -.6 .2 -1 -1.7 -1.9 -9 -.7zM1231.2 786.5l-3.7 -2.4 -8 -2.2 -7 -.9 -4 .5 -2.8 4 .3 3 -7.5 3.7 -2 2.8 -3 2.2 -3.7 1.3 2.9 1 3.8 -3.7 2 -.4 3 -2.5 9 -2.3 1.4 -2.1 6.6 -1.5zM1230.4 791.5l4.1 2.3 2 -.3 .7 -1 -3.7 -2.3 -2.6 .3zM1300.7 771.5l-5.2 -1.6 -11 .1 -6.6 2.5 0 1 -1.3 1 -4.1 1.2 -11 1.5 -14 -1.1 -3 1.3 -.2 1.1 4.9 3 1 2 1.3 .6 11 0 2.3 -.6 -3.8 -3 2.5 -1.2 10 -2.2 8 -.4 7 -2.6 7 -.3zM1313.7 777.5l2.8 1 4.9 0 .2 -1 -3.1 -1.9 -3 .5zM1326.9 794.5l.1 1 3.5 1 4 -1 .3 -1 -4.3 -.8zM1335.2 802.5l-.1 1 1.4 .9 .9 -.9 -.9 -1.1zM1343.9 788.5l4.6 2.7 3.1 -1.7 -.3 -1 -2.8 -1.1 -3.1 .1zM1350.2 782.5l4.3 2.5 2.9 -.5 .1 -1 -4 -2.4 -2 .2zM1359.2 800.5l3.3 1.7 -.4 2.3 1.4 .8 9.2 -1.8 -.5 -1 -11.7 -2.6zM1396.4 795.5l4.1 .5 1.8 -.5 .5 -1 -4.3 -.7 -2 .7zM1407.6 797.5l11.9 3.4 2.9 -.4 1.6 -2 -.6 -1 -2.9 -.7 -10 -.2zM1425.4 793.5l11.1 1.8 3 1.4 4 -.6 3.7 -1.6 -.3 -1 -8.4 -1.5 -7 .1zM1448.1 808.5l1.4 .4 2.2 -1.4 -1.2 -.9 -2 .9zM1450.5 799.5l7.7 5 -.3 1 12.6 1.9 5 -2.1 8 -.2 6 .7 4 2.1 1.7 -.4 -1.7 -3.2 -3.3 -1.8 -1.7 -2 -18 -.2 -9 -1.7 4.7 -3.1 -7.7 -.3 -7 3zM1492.8 800.5l6.7 2.1 10 -.6 10 .8 7 1.5 11.1 -1.8 -12.1 -1.1 -6 -2.3 -10 1.9 -14.6 -1.5zM1560.4 802.5l7.1 1.8 13.7 -.8 .6 -1 -2.3 -.5 -5 .8 -10 -1.4zM1623.4 807.5l-1.2 -1 -6.7 -1.5 -4 1.8 -7 1.3 -9.9 .4 6.9 .3 5 1.2zM1615 802.5l2.5 1.1 3.8 -1.1 -3.8 -.7zM1652.2 811.5l.4 1 3 0 -1.1 -1zM1658.5 815.5l.4 1 2.5 0 0 -1 -.9 -.4zM1724.4 803.5l-5.9 -3.6 -9 -1.5 -7 -.2 -13 1.9 -11 -.2 -5.7 1.6 .4 1 4.3 1.7 8 1.7 15 -1.3 20 0zM1718.4 795.5l.5 1 8.6 1.6 19 -.7 7.9 -2.9 5 -4 -2 -1 -10.9 -1.5 -10 .2 -10 1.9 -4 3.2 -3.7 1.2zM959.5 776.8l-2 2.6 -3 -2.1 -1 .8 -.7 3.4 1.7 2.3 1 -.3 2 -3.9 2 -1zM1008.5 796.3l-1 1.2 0 2 1 -.2 1 -1.6zM1044.5 773.4l-1 1.1 -.3 2 .6 3 1.7 2 1 -.2 .7 -1.8 -1.3 -6zM1049.3 772.5l1.9 2 3.3 1.9 3 -.1 1.2 -.8 .2 -1 -1.1 -1 -7.3 -2.4zM1069.1 782.5l-.1 1 1.5 1.6 4.5 .4 -3.5 -4.1 -1 -.2zM1078.5 785.8l-.9 .7 .9 1.2 .7 -1.2zM1089.5 782.9l-2 .4 -2.4 5.2 .4 .5 2 -.4 3 -2.1 .3 -2zM1094.5 765.2l-1.9 4.3 .9 .8 1.4 -1.8zM1164.4 794.5l2.1 1.2 1.9 -1.2 -2.9 -1.3zM1173 775.5l-1.1 1 1.4 2 -1.1 2 4.3 .8 1.1 -.8 -.9 -1 3.2 -2 -3.4 -2.4zM1182.5 796.5l-.8 1 .8 .7 .9 -.7zM1187.6 777.5l-3.6 1 .2 1 1.3 .7 2.6 -1.7zM1218.2 804.5l-1.7 -1 -2.2 1zM1255.3 805.5l1.1 1 5.1 1 3 2.7 1.7 -.7 -.4 -3 -1.3 -1.4 -4 -.6zM1258.5 794.5l-.2 1 2.2 1.6 2 .3 1.2 -.9 .1 -2 -1.3 -1.1zM1265.2 791.5l3.3 .8 5 -.5 6 .4 2.8 -.7 -2.8 -.9 -6 -.2 -5 -2.7 -2.3 1.8zM1289.7 782.5l1.8 1.3 4 .3 8 -.6 2.4 -1 .3 -1 -1.7 -1.1 -9 -.4 -4 1zM1397.2 800.5l4.2 0 -2.9 -.8zM1439.3 803.5l-1.8 -1.1 -2.3 1.1 2.3 1.3zM1700.9 812.5l3.6 1.2 6 -.3 7 1.3 5.1 -1.2 -.7 -1 -9.4 -.2 -7 -1.3zM1714.1 807.5l.4 1 8 1.5 4.8 -.5 1.1 -1 -5.9 -1.4zM1725.9 812.5l10.6 .3 4.2 -1.3 -4.2 -1zM957.1 787.5l1.4 1.3 1.1 -.3 -.1 -1 -1 -.6zM1060.5 781.4l-3 -.2 -3.8 2.3 -2.9 7 1.7 3.1 1.3 -.1 .5 -4 3.2 -5.4 4 -.2zM1089.5 796.5l-1 .1 -.4 2.9 -1.3 2 .7 .5 2.7 -3.5zM1094.3 782.5l-.4 1 3.6 3.6 .8 -.6 -1.9 -4 -.9 -.7zM1171.1 794.5l2.4 1 2.5 -1 -.5 -1.3zM1266.9 799.5l1.7 1 2.6 0 -2 -1zM1272.2 801.5l4.3 2.2 11.8 -.2 -8.8 -2zM1300.6 796.5l1.9 .6 1.7 -.6 -1.7 -1zM1097.7 793.5l-2.2 1 1 1.4 1.4 -.4 .5 -1zM751.5 628.8l1 1.2 0 5.2 -1 -.1zM1090.6 682.5l3.4 0 .6 1 -2.3 0zM1081.5 691.7l2 -.3 3 2.1 .7 2 -1.6 3 -3.1 .1 -2 -1.7 -.4 -3.4zM1040.5 696.2l.6 6.3 -.6 7.1 -1.6 -8.1 .6 -5zM1004.5 705.1l1 5.4 -2 7 -1 -1.7 1 -9.7zM1111.5 705.9l-.5 2.6 -2.6 0 .3 -2 1.8 -1zM963.5 708.4l1 -.1 1 2.5 0 2.7 -1 2.2 -1 -.8 -.5 -2.4zM1090 709.5l1.5 -.4 4.2 1.4 .6 3 2.6 2 1.6 2.4 7 -3.6 8.1 .2 .6 1 -.6 3 2.8 2 .1 1 -1.7 2 0 4 -1.3 1.1 -4 .8 -.6 -2.9 .6 -1.5 2 -1.5 0 -1.2 -5 .5 -3 1.7 -3 .5 -2.3 -1.5 -.7 -3.9 -3 1.1 -3 -1.1 -2.9 -3.1 .9 -3 -1.6 -2zM1129.9 713.5l.7 1 -1.7 4 .8 2 -3.2 .9 -3 -.4 -.3 -.5 1.7 -2 .5 -4 2.1 -1.3zM1078.6 716.5l.9 -1.3 2 -.1 2.7 1.4 .5 1 -1.2 1.5 -3 .3 -1.4 -.8zM1019.5 716.1l2 3.2 .8 3.2 -.2 3 -1.6 2.3 -2 -.9 -1.1 -2.4 .4 -5zM1039.5 715.7l1 .1 1 2.3 .7 7.4 1.3 2.8 5.5 1.2 7 4 -5.5 6.7 -1 -.3 -2 -4.2 -2 -1.5 -1.9 .3 -.6 1 -.5 5.1 -1 -.2 -2.5 -4.9 -.6 -6 -1.9 -4 1 -7zM926.5 717.4l1 1.8 .7 16.3 -.7 3 -1.7 -5zM988.5 717.5l1 4 -1 2.8 -1 .6 -.6 -3.4 .6 -3.3zM1148 721.5l1.5 -2.4 2 -.8 4.6 .2 3.2 1 -2.5 2 -4.3 1.2 -3 .1zM1060 719.5l1.5 .2 2.9 2.8 2.1 3.4 0 3.4 -1 1.6 -2 -1.2 -2.2 -3.2 -2 -5zM1305.5 723.5l1 -1 10.7 1zM963.5 723.5l1.6 2 -.6 3.2 -1.3 -.2 -1 -2 .2 -2zM1215.4 723.5l2.1 -.7 2.6 .7 -2.6 .8zM1120.6 725.5l2.9 -1.1 1.6 1.1 .4 1.5 -1 .9 -3 -.2 -1.1 -1.2zM950.5 725.1l2 4.8 .8 5.6 -2.5 5 1.9 2 .2 2 -2.4 1.7 -1.4 -1.7 1.3 -4 -1.4 -4 -.7 -6 .6 -3zM1003.5 725l1.5 1.5 -.5 2.3 -1 0 -.5 -1.3zM1168.9 727.5l1.6 -1.7 2 -.5 8 0 1.5 1.2 -9.5 2.2 -2.5 -.2zM1136.4 730.5l.2 -2 1.9 -1.7 5 .7 .2 1 -5.2 3.3 -1 .1zM1087.3 733.5l3.2 -4.4 5 -1.1 4 1.4 1.8 4.1 -1.2 2 -3.6 2 -2 -.3 -2.1 -1.7zM1152.6 729.5l.9 -1.2 3.9 .2 3 1 .4 1 -2.3 .4zM1291.8 728.5l16.7 0 4 1 .5 1 -4.1 2 2.3 2 -.7 .6 -6.5 .4 -2.4 -1 3.7 -2zM1219.3 730.5l0 -1 1.2 -.7 3 -.2 12.6 .9 1.6 1 -12.2 1.2 -4.1 -.2zM1108.6 732.5l.9 -2.1 2 -.9 4 1.3 1 1.7 -2.4 2 -2.6 .4 -2 -.6zM1011.5 731l1.2 .5 .5 3 -.7 2.7 -1 .9 -1.5 -1.6zM1075.5 732.6l3 .8 1.6 2.1 -.4 3 -3.2 2.3 -3 -1 -1.4 -2.3 1.4 -3.1zM1127.5 732.6l4 .8 5.8 5.1 -1.8 4.5 -2 2.3 -9 -5.8 -.3 -1zM1241.3 742.5l12.2 -1.4 4.9 -1.6 -.4 -1 -5.7 -3 -.2 -1 1.4 -.7 12.4 -.3 5.7 1 3 2 -7.8 4 -.7 3 1.2 1 11.5 3 -9.3 1.3 -10 -.2 -3.3 -1.1 -.7 -2 -2 -.9zM1163.6 735.5l-.5 2 -2.6 .9 -10 .9 -1 -.8 2 -2 9 -2.4 2 .3zM1006.5 735.4l.2 2.1 -1.2 1 0 -2.9zM1029.5 735.7l3 4.2 5 1.4 .9 2.2 -.9 1.2 -3 -.2 -4 -1.7 -1.7 -4.3zM1362.5 736.5l4 -.7 10.5 .7 -.4 1 -8.1 .7 -4 -.5zM1171.5 737.5l3 -.4 1.3 .4 -.1 1 -3 0zM1189.5 738.1l-1 1.5 -3 1.7 -3 .3 -1.3 -1.1 .2 -2 6.1 -1.1zM1142.4 739.5l1.1 -.3 0 1.1 -1 .4zM1286.2 740.5l.7 -1 6.6 -.6 10.1 .6 .2 1 -2.3 1 -5 .5 -7.2 -.5zM957.5 741l0 4.1 -1 -.5 -.2 -1.1zM974.5 741.4l2 4.1 -.5 10 -.5 1.1 -2 .9 -3.7 -3 -.2 -3 1.9 -6.3 2 -3.7zM1011.5 741.1l1.3 .4 .8 2 -.9 3 -1.2 1.1 -1.6 -1.1 -.5 -2zM1212.2 744.5l-2 1 -7.7 .8 -4.2 2.2 -.5 1 .8 1 -2.1 1 -4 -.9 -.6 -2.1 -9.5 -3 2.1 -1.5 9 .3 13 -3.3 4 1zM1321.3 743.5l9.9 -2 14.1 1 1 1 -1.5 2 6.1 2 2.7 2 -1.5 1 -4.6 .4 -13 -1.2 -3 -1.2 1.1 -2 -10.9 -2zM980.5 742.4l1 .6 .9 5.5 -.9 1.2 -1.7 -1.2 -.7 -2zM1170.9 745.5l0 1 -3.3 2 -.2 1 1.8 2 -.4 1 -3.3 1.8 -3 -1.1 -3 -.1 -5 2.2 -3 .1 -4 -1.6 -4 -.2 1 -1.3 2.5 -.8 -3.5 -1.2 -5 3.1 -2 0 -1 -.9 1 -2.3 6 -4.1 10 -.3 2 .7 2 2.3 4.3 -.3 1 -2 -1.9 -3 .5 -1 2.1 -.6 5.6 .6zM1020.5 746.3l1.6 2.2 .4 2 -2 3.4 -1.2 -.4 -.8 -4 .9 -3zM1213.4 754.5l1.6 -2 7.5 -3.4 8 .4 11.8 3 -.8 1.3 -3 .5 -12 -1 -12 2.2zM1296.7 750.5l1.8 -.7 9 2 25 1.7 2.8 1 -2.5 3 1.5 1 6.2 .7 7 -1.7 1.3 1 -1.8 2 -3.5 1.3 -15 -.2 -2 -.8 -1 -1.5 -3 -1 -21 -1.1 -.9 -.7 1.1 -1 -.3 -1 -4.6 -2zM1370.2 752.5l2.3 -1.6 5 -.4 13.3 2 1.8 1 .3 1 -.8 1 -4 1 -10.6 .2 -5.2 -1.2 -1.5 -1zM1254 754.5l2.7 -2 7.8 -.7 15.5 1.7 3.4 1 -21.9 1.8 -6 -.6zM1411.4 754.5l.7 -1 4.4 -.9 6 .8 2.9 1.1 -1.8 1 -7.1 1 -4 -.9zM980.5 753.7l1 .8 1.3 4 -2.3 3.8 -1.9 -1.8 -.8 -3 1.2 -3zM1444.2 756.5l17.3 -1.7 6 .1 3.6 1.6 -2 3 1.4 .7 10 1.6 10 .4 1.5 1.3 -8.5 1.3 -14.6 -1.3 -6.1 -3 -13 -2zM1499.7 756.5l-2.9 2 -4.3 0 4.8 -2zM995.5 757.8l2 1.6 .8 3.1 -.2 3 -1.6 2.7 -2 -2.7 -.7 -3 .4 -3zM1536.6 758.5l5.9 -.7 4.5 .7 -5.5 1.1 -2.9 -.1zM1245.2 760.5l4.3 -1 4.6 1 -1.2 1 -2.4 .4zM1304.3 761.5l4.2 -1 5 .2 18 5.8 -3 2.1 -6 .4 -10.4 -2.5 -.6 -2.4zM1370.4 763.5l.3 -1 4.5 -1 20.3 -1.3 18 .1 5.2 1.2 .4 1 -2.7 2 -5.9 1.7 -11 .1 -17 1.7 -2.5 -.5 .6 -1 -1.7 -1zM1619 760.5l14.5 -.6 11.9 .6 -8.9 .7zM1437.5 765.5l1.2 -1 11.8 -.9 9.3 1.9 4 2 -3.3 1.4 -12 .3 -4 -.8zM1762.3 768.5l-11.4 0 -9.8 -3 14.4 -1 1.6 1 .4 1.4zM1483.2 768.5l1.3 -1.2 5 -1 6.9 1.2 -.9 1.3 -3 .9 -6 -.1zM1527.9 770.5l5.6 -1.9 9 -.4 6.8 1.3 4.2 2.2 9.9 .8 .8 1 -14.7 1.5 -10 -.2 -8.3 -1.3 -2.2 -1zM1794.3 769.5l4.2 -.9 9 -.4 0 7.2 -4 -.6 -2.1 -2.3zM1405 770.5l.7 -1 1.8 -.4 3.9 .4 -2.4 1zM1495.7 775.5l-.1 1 -1.1 .6 -8 .4 -2.3 1 4.9 5 2.7 1 .5 1 -6.8 1.7 -4 -3.2 -8 -2.1 -15 .4 -12 2.4 -10 -.2 -3.1 -3 0 -1 1.4 -1 -9.3 -3.9 -5.5 -1.1 -.5 -1 3.4 -1 5.6 -.3 9.1 1.3 6.5 2 .8 1 -2.7 2 1.1 1 3.2 .5 3 -.3 7 -2.9 7.7 -.3 -7.7 -.3 -2.5 -1.7 2.5 -2.3 6 -1.5 28 2 3.3 .8zM1661.4 774.5l-.1 -1 7.2 -2.1 5 .1 1.5 1 -1.5 1.5 -4 .8zM1707.5 774.5l12 -.7 5.3 .7 0 1 -4.3 .5zM1588.4 775.5l6.1 -.7 8.6 .7 -6.6 .7zM1618.6 775.5l-.5 1 -3.6 1.2 -10 1.3 -15 4.4 -5 .2 -3.1 -1.1 4.1 -3.8 17 0 4 -.6 6 -2.9zM1630.8 778.5l10.7 -2.3 8 .3 3.3 1 -3.3 1.3 -7 .8 -9 -.1zM1663.3 779.5l.5 -1 1.7 -.5 4.8 .5 -4.8 1.6zM1723.9 779.5l7.6 -.5 4.1 .5 .8 1 -8.9 .6 -3.2 -.6zM1794.1 780.5l2.4 -1.2 11 -.1 0 1.7zM1497.9 780.5l2.6 -.7 7.4 .7 -1.4 1 -5 .7 -2 -.3zM1683.2 780.5l4.3 -.8 2.6 .8zM1665 781.5l-.5 1 -15 4 -.1 3 3.2 2 -2.1 1.5 -5 1 -6 .1 -5 -1.1 -1.4 -1.5 3.4 -2 .1 -2 5.3 -2 1.6 -1.7 6.2 -.3 .5 -2 13.3 -.7zM1458.1 785.5l2.4 -1.4 6 -.2 5.2 1.6 .1 1 -7.3 .3zM1514.3 785.5l5.2 -1.2 12.5 .2 2.4 1 3.1 4 5.3 2 -3.3 1.2 -9 .5 -13.4 -1.7 0 -1 2.9 -2 -5 -2zM1690.2 786.5l1 -1 5.1 -1 4.3 0 3 1 -3.1 1.2zM1575 787.5l4.5 -1 7.2 1 -5.2 1.8zM1604.3 787.5l13.2 -.8 3 .4 2.7 1.4 -1.6 1 -6.1 .2 -11 -1.2zM1732.8 792.5l4.7 -1.4 9 .4 -.6 1 -4.4 1.1 -7.7 -.1zM1797.3 794.5l10.2 -.4 0 2.2 -9.9 -.8z"/>
<path fill="#002eb0" d="M428.5 596l1 -2.7 1 .4 6 26.1 1 .9 1 -1.6 2 -9.1 1 1 4 32.1 3 10.9 1 .5 1 -3.9 .9 -15.1 2.1 -96.3 1 -16.8 3 122.8 1 11.9 1 2.7 1 -1.7 2 -25.6 5 -164.5 1 0 5 158.6 1 13.8 1 2.7 1 -2.3 1.7 -13.3 .9 -17 2.4 -99.5 2 36.1 1 3.1 8 -88.8 3 -23.8 2 -6.9 3 16.9 3 27.5 9 104 1 -2.6 4 -60.6 2 -17.5 3 41.5 6 118.1 2 -16.1 1 .9 5 81.7 2 9.7 6 14.1 2 1.5 2 -3.7 1.8 -8.6 3.5 -30 6.7 -127.8 2 -22.1 4 58.7 1 5.7 1 -.7 2 -19.7 3 -58.4 1 -6.9 3 51.8 1 9.1 1 -6.4 4 -76.7 1 -6.4 4 69.8 1 3.9 4 -59.3 4 64 1 8.8 1 2.2 1 -3.3 1 -11.2 5 -112 1 5.3 3 51.7 3 -56.3 3 63.5 1 3.6 4 -83.1 1 4.9 2 25.9 4 -84.8 2 23.2 1 -1.8 3 -30.2 1 0 5 52.9 5 83.4 1 6.4 3 -36.1 1 4 6.5 146.4 1 10 2.5 7.7 7 -186.9 3 60.1 2.6 -32.9 .4 -20 1 -6.3 3 43.8 .5 -15.5 1.5 -10.1 1 1.3 2 14.2 3.2 42.6 1 27 2.8 18.7 2.7 56.3 3.3 27.8 1 -4.9 1 .7 1 4 1.8 -5.6 -.1 -10 1.3 -18.1 3 -23.2 1.3 -4.7 -.3 -10 1.4 -7 -.6 -7 .9 -14 .9 -7 1.9 -6 -.7 -7 .6 -11 1.1 -8 1.5 -3.7 1.3 4.7 -.2 14 1.6 9 -.2 5 2.5 13 -.1 14 1.2 4 1.7 17 -.3 7 1.8 10 .7 13.7 1 1.9 1 -3.6 2 -44.1 2 24.9 4 75.8 1 1.3 1 -13.4 1 -2.9 1 -.5 2.2 -11.1 -.2 -13 1 -6.6 1.4 -2.4 -.7 -14 1.3 -15.9 2 -13.1 2.1 13 1.4 21 -.4 10 1.9 13 1.1 -6 .9 -26 1 -4.1 1 .1 .6 3 3.4 61.9 1 -.1 3.5 -13.8 -.4 -7 1.6 -17 -.1 -12 1.4 -9 1 -.6 1.2 7.6 -.2 12 1.5 8 .4 15 2.1 23 2 8.8 1 2.3 4 -52.8 1 3.6 1.5 19.1 .5 23 2 20.7 1.1 1.3 1.9 -27.2 1 .1 1.3 14.1 -.4 8 2.1 8.8 4 -56.4 1 -1.9 .5 3.5 0 14 2.5 20.7 2.1 -11.7 1.5 -16 .1 -14 1.3 -11.2 1 -4 2 8.7 1 -.1 4.8 -27.4 1.2 -11.1 1.2 12.1 2.4 11 .4 22 2 -10.6 1 5.9 1.6 27.7 2.1 16 1.1 18 1.2 5.7 1 -2.7 1 2.1 3 13.4 2.4 -12.5 -.2 -13 2.1 -22 1.3 -4 -.8 -8 1.2 -10.5 1.4 13.5 -1.2 6 2.8 11.1 1 .9 1.4 -4 .4 -20 1.2 -7.3 4 38.4 1 1 5.1 -24.1 -.6 -6 .7 -7 2.8 -11 1 0 1.9 8 2.5 27 .6 1.4 2 -7.3 1 5.7 2 25.7 1 -1.3 1.6 -6.2 -.4 -12 1.8 -11.2 3 18.8 1.2 -2.6 1.8 -13.4 1 1 4 27.4 2 6.6 2 15.7 1.7 -7.3 .5 -13 1.8 -8.8 1.8 8.8 2.2 21.7 1 -2.8 3 -36 1 .1 1.2 19 2.8 23.4 4 -41.7 4 36.6 1 1.3 1 -4 1 .2 1.1 5.2 -.1 3.5 1 1.9 1.2 -12.4 1.8 -7.7 1 -.2 1.1 .9 1.9 11.1 1 -.6 1.7 -11.5 1.3 -2.4 1 0 4 25.3 1.8 -2.9 -.7 -4 .9 -5.9 1 .5 .5 5.4 -.7 5 2.2 3.9 1 -1.1 1.1 -3.8 .2 -11 2.7 -8.6 1.3 1.6 .5 7 -1.6 7 2.8 5.2 1 .5 1.5 -6.7 -.5 -6 1 -6.4 1 -.9 4.9 1.3 .5 2 -1.7 2 -.2 6 2.5 2.2 1 -.7 .8 -2.5 -1.1 -6 1.3 -4.1 1 -.1 2 3.3 2 -5.1 -.9 -5 .4 -3 1.5 -1.9 1 .3 2.6 3.6 -.3 6 2.1 6 -1.8 8 .4 6 -1.1 3 3.1 1.9 1 -.4 2 -7 1 -1.2 1.8 .7 1.3 2 -2 9 -.1 3.8 -5 3.9 -2.5 4.3 .5 1 5 -3.7 2.4 .7 1.4 2 1.2 4.4 5.2 7.6 .8 4.4 .3 -5.4 -2.1 -4 -.6 -4 -5 -7 .1 -1 2.3 -1.9 2.6 -4.1 .1 -10 1.3 -.6 2 .6 1.7 -3 .1 -5 .9 -4 -.4 -5 .7 -1.8 1 -.4 1 1.1 2.3 10.1 -1.5 4 2.1 8 1.1 1.1 4 -1.3 1.2 2.2 .4 4 1.4 .9 1.5 -1.9 1.3 -10 .3 -23 .9 -1.6 2 -.7 1.6 4.3 -.2 5 -1.2 4 .9 12 1.9 4.4 4 -4.5 3 -.2 4 -1.5 1.2 4.8 .8 .7 8 -2.5 4 3.6 3 1.5 1.4 -1.3 .3 -2 -1.7 -3.7 -3 -2 -4 -.1 -2.8 -3.2 2.8 -6.7 1 -.5 5 4.8 3 -.3 1.5 -1.3 -3 -3 -.2 -3 1.7 -1.5 2 .5 1 1.2 .5 2.8 -1.4 4 2.9 1.7 5 -4.7 2.6 -4 8.4 -.9 .4 1.9 -1.4 2.7 -8 2.6 -.7 2.7 .7 2.9 4 -1.7 5 2 3 .1 2 -1.7 2 -3.7 2 -1.5 1 .6 .7 3 3.4 3 .7 3 -1.3 2 -2.5 1.1 -3 .2 -4 -1.5 -.6 3.2 2.6 1.6 6 -.2 8 1.3 2 1.4 1.3 2.9 1.7 1.5 1 -.5 -1.6 -4 .5 -3 -.6 -2 -4.3 -2.8 -3.9 -6.2 1 -3 2.9 -2.7 0 -1.3 -1 -1.1 -9 3 -.9 -2.9 0 -7 9.9 -.9 9 -6.5 2 -.4 7 2.1 2.2 1.7 -.8 6 -5.4 2.5 -1.2 1.5 .5 4 1.7 1.1 4.8 -1.1 5.2 -3.1 .6 -1.9 -.8 -2 -.2 -5 2.4 -4.6 11 0 7.8 4.6 1.6 3 -1.4 1.6 -5 .3 -4 -2.7 -1.7 .8 .3 2 6.4 4.4 2.7 3.6 -.6 3 1.9 1.8 4 -2.9 3 -.9 6 1.7 4 -1.2 2 .5 -1 1.5 -4 .6 -.8 .9 .3 2 1.5 2 -1.4 3 .4 3.1 4.3 -3.1 -1 -2 .3 -1 4.8 -3 1.6 -3.1 13 -2.3 3 .2 1.2 1.2 -.6 1 -5.6 1.4 -4 -.7 -1.7 1.3 -.5 2 -2.8 3 -3 1.7 -2.6 .3 3.6 2.1 .7 1.9 -.7 3.3 4 0 3.9 -2.3 -.8 -3 1.5 -3 -2.7 -3 1.1 -1.1 3 -.2 3.5 1.3 -.3 1 -3.4 2 1.2 1.8 4 -3 7 -.2 9 1.1 .7 -.7 -.7 -1 -7.7 -5 9.7 1.1 3.5 -1.1 -5.1 -2 -.4 -1 10 -.7 11 .6 1 3.6 3 0 6 3.3 4 .8 4 -1 2.2 -1.6 -.7 -3 1.1 -1 9.4 -.9 5.4 .9 2.2 1 .3 1 -9.9 2.9 -7 4.1 .8 1 7.2 2.4 10 1.5 6 2.6 3 -.1 5 -1.9 6 .4 5.3 -.9 -4.3 -2.5 -8.5 -2.5 4.5 -1.1 10 .9 12 -.7 8 1.6 12 -1 10 1.3 1.3 1 1 3 6.3 3 -4.1 3 4.5 1.2 4.8 -.2 -.8 -2.3 6 -1 11 0 13 1.3 6 -.5 6.3 -1.5 -2.2 -2 2.9 -1 17 -.3 11 1.2 -9.1 3.1 -.9 4.2 -7 -.4 -2.3 1.2 3.1 2 -.8 1.1 -3.4 .9 3.5 2 -2.5 2 .6 1 5.8 3.4 2 -1.4 -1.8 -2 7.1 -2 .4 -1 -1.9 -1 .4 -1 3.7 -2 -2.3 -2 .1 -1 3.7 -2 8.6 -.9 4.4 .9 1.2 2 -.6 1.1 -4.9 2.9 -.2 1 3.1 1.5 5 .1 6 -2.4 4 -.3 6.1 2.1 10.9 .6 3.5 2.4 2.5 .7 16 1.4 15 -.5 8 4.8 3 .7 4.3 -1.1 .1 -1 -3.6 -3 0 -1 13.6 1 5.3 1 4.5 2 15.8 2.1 8 -1 17 .9 21 -2.6 8 -1.8 7 -.2 9 1.6 4 3 .2 2 1.8 .6 5 -1.7 9 -.9 2.3 -2 11.6 0 2.7 1 -5.4 2 -.3 5 -5.9 -.2 -3.9 1.2 2.9 1.8 21.2 -3.8 -4.5 -2 .8 -1 5.5 -1.5 6 -.1 5 1.2 15 -2.9 13 2 4 -.7 .6 -1 -1.1 -1 .4 -1 12.1 -1.1 12 .5 4 -.6 4.6 -1.8 -1.9 -2 2.3 -.6 19 -1.2 12 1.2 6.1 -1.4 1.5 -1 -8 -4 1 -1 13.4 -.1 11.8 4.1 -.6 2 3.3 2 -13.5 1.9 -17 -1.8 -10 .5 -8 1.5 -5 2.9 -4 1 -1 1 .9 2 10.1 1.7 17 -.2 6 -1 11 -6.2 11.2 1.7 1.9 3 -10.4 2 -1.3 1 23.9 1 -11.3 .8 -5 1.5 -8 .2 -3 1.4 1 1.1 -1 1 -13.6 2 -.4 1 1 1.7 7 .9 4 2.4 4 .8 4.9 -1.8 .8 -1 -1.2 -1 .2 -1 8.3 -1.3 6.9 1.3 -.5 2 2.6 2.5 5 .2 7.7 -2.7 .7 -1 -1.3 -2 8.6 -3 -4.3 -3 1.2 -1 6.4 -.7 0 20.1 -170 -.1 -123 1 -263 5 -81 3.1 -65.4 3.6 -25.6 2 -38 5.2 -41 .5 -64 3.5 -13 2 -15.7 4.8 -12.3 5 -18 9.4 -6 2.3 -7 1 -17 -.4 -8 1.6 -8 3.9 -15 12.1 -6 2.9 -5 .4 -14 -2.4 -12 -.5 -15 1.1 -12 2.6 -9 3.9 -8 5.4 -7 6.4 -11 12.6 -4 3.2 -5 .9 -8 -2.6 -3 -.1 -4 2.1 -3.4 4.2 -261.6 0zM922.5 767.1l-.9 4.4 .9 2.3 1 -.8 .6 -3.5 -.6 -2.1zM936.5 774.6l-1.4 1.9 1.4 2 .7 -1zM981.8 777.5l.4 2 1.3 1.7 2 -.1 1.4 -1.6 -.5 -1 -2.9 -2.6zM998.5 788.6l-.8 1.9 .8 1.7 1 .3 1.3 -2 -1.3 -1.9zM1009.5 787.6l-2 .6 -1.7 2.3 1.7 2.6 1 0 1.8 -2.6zM1025.5 775.3l-2 2.4 -.4 4.8 -1.6 4 -.3 3 1 3 1.1 1 5.2 1 .2 -2 -3.4 -3 .6 -3 -2.1 -3 0 -1 3.7 -3.1 1.1 -1.9 -1.1 -1.8zM1032.9 789.5l.6 1 2.5 0 -1.5 -1.6zM1038.7 799.5l3.8 2.8 1.3 -.8 -.4 -2 -1.9 -1.4 -2 .4zM1044.5 762.9l-.6 1.6 5.6 5.6 1 -2.6 -.2 -3 -.8 -1zM1060.5 780.9l-1 -.4 -3 .7 -3 2.3 -2.9 7 1.9 3.3 1.7 -.3 .3 -3.8 3 -5.3 3 -.1 1 2 1 .1 0 -1.8zM1068.9 782.5l.3 2 3.3 1.4 3.4 -.4 -4.4 -4.7 -1 -.1zM1077.1 786.5l.9 1 1.5 .3 -1 -2.3zM1085.5 760.6l-1.1 .9 .7 6 .8 1 1.6 .2 .5 -2.2 -1.5 -4.9zM1091.1 783.5l-1.6 -1.1 -2 .4 -3.2 6.7 5.7 -2 1.3 -2zM1093.5 758.8l-.2 2.7 1.2 2 .2 -3zM1102.5 785.8l-1.5 1.7 1.5 .8 1.2 -1.8zM1108.7 769.5l.8 .6 1.4 -.6 -1.4 -.6zM1112.4 770.5l1.1 3 .4 -2zM1113.6 775.5l-.6 1 2.5 2.5 1 -.1 .6 -1.4 -.6 -1.4 -1 -.8zM1131.5 760.1l-3.2 4.4 -5.8 1.3 -4.5 4.7 1.5 2.1 5 -2.1 3 .3 3.9 4.7 1.1 3.5 2 -2.3 2 .6 1.1 -1.8 -.2 -2 -.9 -.2 -2 2.9 -1.7 -1.7 .2 -2 -1.8 -2 -.2 -1 1.4 -2 -.9 -3 1.4 -3 -.4 -1.2zM1138.9 790.5l1.8 2 -.2 2 5.6 0 -2.6 -3.1zM1154.5 802.8l-1.2 1.7 .2 1 1 -1.1zM1159.6 782.5l4.9 3.7 3.8 -2.7 -.8 -2.2 -3 -1.1 -3.1 .3zM1168.2 773.5l1.3 .8 1.9 -1.8 -1.9 -.9 -1.3 .9zM1171.7 772.5l4.8 .6 2.2 -1.6 0 -1 -3.2 -.7zM1180.8 767.5l3.7 1.2 3.2 -1.2 .7 -1 -4.9 -.7 -2.6 .7zM1211.6 778.5l.9 .3 3.3 -1.3 -3.3 -.4zM1301.8 771.5l-6.3 -1.7 -11 0 -7.8 2.7 -1.3 2 -3.9 1.1 -11 1.4 -13 -1.2 -3 1.1 -.8 1.6 4.9 3 1.3 3 14.6 -.2 1.9 -.8 -4.4 -3 1.9 -1 10.6 -2.3 7 -.3 7 -2.2 7 -.8zM1326.1 794.5l.4 1.1 4 1 4 -.7 1 -1.4 -5 -.9zM1343.2 788.5l5.3 2.8 3.6 -1.8 -.6 -1.2 -3 -1.1 -4.7 .3zM1349.5 782.5l5 2.6 5.2 -.6 -6.2 -3.8 -2 .1zM1395.4 795.5l7.1 .9 1 -.3 .5 -1.6 -1.5 -1 -3 -.3 -3.9 1.3zM1406.2 797.5l14.3 3.8 3 -.8 1.2 -2 -.2 -1.1 -4 -.8 -10 -.3zM1417.8 794.5l18.5 1 1.2 1.2 3 .3 7.9 -2.5 0 -1 -8.9 -1.6 -7 0zM1449.8 799.5l7.3 5 -1.3 1 14.7 2 5.4 -2 7.6 -.2 6 .7 5 2.2 1.3 -.7 -.1 -1 -2.7 -4 7.5 .4 8 -.5 9 .5 9 1.9 13 -2.3 -14 -1.6 -6 -1.9 -11 1.5 -12 -1.4 -15 1.1 -13 -.4 -6.3 -1.3 6.1 -3 -6.8 -.9 -6 1.3 -5.3 2.6zM1551.2 802.5l.1 1 1.2 .5 2 -1.3 4 0 8 2.1 14 -.7 2.7 -1.6 -2.7 -.8 -7 .5 -9 -1.2 -12 .8zM1607.2 798.5l1.3 .8 1.8 -.8 -1.8 -1zM1625.9 807.5l-1.7 -1 -8.7 -1.9 -4.5 1.9 -5.5 1.1 -11 -.1 -2.3 1 14.3 1.7 14 -1.3zM1649.5 798.9l0 .6 2.6 1 6.2 0 -3.8 -1.7zM1725.5 803.5l-8 -4.5 -6 -.9 -9 -.1 -13 1.9 -11 -.2 -7 1.8 .7 1 4.3 1.8 8 1.8 16 -1.3 21 0zM1743 811.5l-1.8 -1 -4.7 -.3 -13 2 -19 -1.4 -4.8 1.7 1 1 16.8 1.4 9 -1.6 11 -.3zM959.5 773.6l-.7 2.9 -1.3 1.8 -1 0 -2 -1.7 -1.1 .9 -.8 4 1.9 2.7 1 -.1 2 -3.3 2 -.9zM1008.2 807.5l.5 -7 1.3 -3 -1.5 -2.4 -3 5.3 -6 -4.2 -5.6 2.3 .6 1.6 2.9 1.4 2.1 4.1 1 .5 3 -.9 4 2.9zM1041.5 804.3l-.8 1.2 .8 .6 .6 -.6zM1045.5 773.1l-1.4 .4 -1.1 2 .6 4 1.9 2.5 2 -1.5 -1.1 -4 .4 -3zM1048.6 772.5l5.9 4.1 3 0 1.6 -1.1 -.5 -2 -4.6 -1 -3.5 -2.4zM1051.5 802.2l0 2.2 1 0 0 -1.5zM1058.5 800.9l-1 .7 0 1.8 1.1 -.9zM1089.5 796.2l-1.2 .3 -.4 3 -1.9 3 .5 .4 3.5 -3.4 .4 -2zM1094.5 764.6l-2.4 4.9 1.4 1.1 1.6 -2.1zM1111.5 777l-2.4 .5 -1.3 2 .7 .7 3.3 -2.7zM1170.9 776.5l1.1 2 -1.6 2 2.8 1 6 0 -.7 -2 3 -.9 3 2.4 6 -2.4 6 3 5 -.2 4.9 2.1 -1.5 2 .3 3 -6.7 3.5 -5.2 4.5 -5.2 1 .4 1.2 3 1.1 3.6 -1.3 1.5 -2 4.9 -3.3 3 -1.3 6 -.9 2.5 -2.5 6.5 -1.4 13.5 -.6 -9.2 -4 -7.3 -1.5 -8 -.2 -4 -2.5 -10 -.8 -4 1 -3 -1.7 -6 1.5 -6 -3.7 -3 .5zM1257.9 794.5l-.1 1 1.7 1.4 4.7 .6 .2 -3 -.9 -1.6 -3 .3zM1264.4 791.5l1.1 .9 14 0 3.9 -.9 -3.9 -1.1 -6 -.3 -5 -2.7zM1288.9 782.5l1.6 1.3 5 .5 9 -.7 2 -1.1 .3 -1 -2.3 -1.4 -9 -.2 -4 .8zM1334.3 802.5l2.2 2.1 1.2 -1.1 -1.2 -1.2zM1358.8 800.5l3.5 2 -.5 2 1.7 1 10.3 -2 -.7 -1 -12.6 -2.8zM1396.4 800.5l3.1 .7 2.9 -.7 -3.9 -1.2 -1.5 .2zM1434.6 803.5l2.9 1.4 2.2 -1.4 -2.2 -1.2zM1447.7 808.5l1.8 .7 3 -2.3 2.4 -.4 -4.4 -.2 -2 .9zM1526.6 808.5l2 0 .9 -1 -2 -.6 -1 .6zM1563.9 806.5l.6 1.3 2.2 -.3 -1.2 -1.7 -1 -.1zM1651.1 811.5l1.4 1.2 5 .8 .9 1 -1.2 2 5.6 0 -.3 -1 -3.8 -3 -5.2 -1.5zM1692.8 813.5l2.7 .9 3.9 -.9 -3.9 -.6zM1712.5 807.5l2 1.4 8 1.2 7 -.6 .1 -1 -7.1 -1.6zM957.4 786.5l-.8 1 .6 1 2.3 .7 .5 -.7 -.5 -1.8zM1093.9 782.5l.1 2 2.5 2.4 2 .3 .5 -.7 -2.5 -4.3 -1 -.6zM1176.6 794.5l-1.1 -2.6 -5 2.3 -5 -1.3 -1.5 1.6 2.5 1.5 3 -1.4 4 1.2zM1180.9 796.5l1.6 2.2 1.7 -1.2 -1.7 -1.3zM1213.5 804.5l3 .6 2.6 -.6 -.9 -1 -1.7 -.2zM1225.3 800.5l2.2 .5 2.2 -.5 -2.2 -.6zM1229.7 791.5l4.8 2.5 2.5 -.5 .5 -1 -4 -2.5 -3.6 .5zM1254.5 805.5l.6 1 6.4 1.2 2.7 2.8 2.3 -1 -.7 -4 -1.3 -.6 -5 -.5zM1265.3 798.5l2 2 8.2 3.3 11 .4 2.4 -.7 -8.4 -2.5 -6 -.3zM1304.7 796.5l-2.2 -1.1 -2.5 1.1 2.5 .8zM1095.9 793.5l-.9 1 1.5 1.7 2.3 -1.7 -.3 -1.1zM1081.5 693l2 -.5 1.8 1 .6 1 -.4 2.1 -1 .8 -2 -.2 -1.3 -1.7zM1040.5 698.2l0 6 -1 -.5 -.2 -2.2 .2 -3.2zM1004.5 706l.7 4.5 -1.7 6.2 -.6 -5.2 .6 -4.3zM964.5 709.2l.6 2.3 -.6 2.9 -1.2 -2.9 .2 -2.1zM1090.9 710.5l2.6 -.3 2 1.3 -.7 2 4.2 3 -.2 2 -.9 1 -2.4 .5 -3.7 -2.5 -.3 -2 1.5 -2 -2.2 -2zM1115.2 715.5l-.5 4 -1.2 1.5 -5 1.2 -4 2.3 -2 .1 -1.7 -1.1 -.4 -4 1.5 -2 6.6 -3.1 5.4 .1zM1126.5 716.2l.2 -1.7 2.4 0 -1.6 2.1zM1039.5 716.1l1 .3 .9 2.1 .6 7 1.5 3.7 6 1.1 4.4 3.2 -.3 2 -3.1 3.5 -1 -.4 -2.4 -4.1 -2.6 -1.3 -1.6 1.3 -1.2 5 -2.2 -3.3 -.9 -2.7 .1 -4 -1.7 -4 .8 -7zM1079.7 717.5l.3 -1 1.5 -.4 2.2 1.4 -2.2 1.2zM1019.5 717l1.8 2.5 .8 3 -.2 3 -1.4 2 -2 -1 -.7 -2 .4 -5zM1148.7 721.5l.8 -2 2 -.9 6.1 .9 -.3 1 -3.8 1.5 -3 .3zM988.5 718.7l.6 2.8 -.6 1.9 -1 .5 0 -4.2zM1061.5 721.9l2 1.2 2.6 3.4 -.6 2.7 -1 .2 -2 -1.9zM926.5 724l1 .5 -1 3.3zM963.5 724.1l1.3 2.4 -.3 1.4 -1 .3 -.9 -1.7zM1111.7 726.5l2.8 -1.7 1.6 1.7 -.2 1 -1.4 .6 -2 -.1zM1121.4 726.5l1.1 -1.2 2.1 1.2 -1.1 1zM950.5 726.3l1.8 4.2 .6 5 -.4 2 -2 1.6 -1.2 -2.6 -.6 -6 .6 -3zM1003.5 725.7l1 .2 0 2.3 -1 -.1zM1142.5 728.5l-3 2.3 -2.4 -.3 .3 -2 1.1 -.8 2.6 -.2zM1089 732.5l2.5 -3.4 5 -.7 2.4 1.1 1.9 4 -1.3 2.1 -3 1.1 -3 -1.1zM1296.2 728.5l14.5 1 .5 1 -6.7 .6 -7.8 -1.6zM1221 730.5l1.2 -1 2.3 -.1 5 .1 2.8 1zM1108.9 732.5l.6 -1.6 2 -.9 3 .8 1.3 1.7 -2.3 1.9 -2 .3 -2 -.8zM926.5 730.8l1 1.9 0 2.8 -1 -.7zM1011.5 731.5l1 .3 .5 2.7 -.5 2.3 -1 .9 -.9 -1.2zM1076.5 733.2l2.4 1.3 .8 3 -1.2 2 -3 .9 -2 -1 -1 -1.9 2 -3.5zM1245.2 742.5l10.3 -1.4 4.8 -1.6 -7 -4 .1 -1 7.1 -1 8 .8 4 1.1 .9 1.1 -7.9 3.5 -.5 2.5 -1.3 1 .3 1 11 2 1.5 1 -8 1.1 -8 -.3 -2.9 -.8 0 -2 -1 -1zM918.5 733.6l1 .5 1.1 6.4 -2.1 6.9 -.7 -2.9zM1128.5 733.7l3 .7 5 4.1 -2 4.7 -1 .6 -2 -.6 -6.3 -4.7zM1162.9 736.5l-.8 1 -3.6 .7 -6 .1 -.5 -.8 8.5 -2.7 2 .5zM1029.5 736.9l1 .6 2 4 2 -.5 3 1 0 1.9 -3.4 -.4 -1.6 -2 -2 .4 -1.1 -2.4zM1059.5 741.1l2 -1.6 4 -.9 2 .6 .9 1.3 -.9 3.6 -6 2.2 -1 -1.4zM1287.5 740.5l.9 -1 13.1 -.1 1.1 1.1 -2.8 1 -4.3 .2zM950.5 741.5l2 2 -.2 1 -1.8 1.3 -1.1 -2.3zM974.5 742.2l1.5 3.3 -.4 9 -2.1 2.4 -3.1 -2.4 -.4 -3 1.5 -5.6 2 -3.6zM1011.5 741.5l1 .2 .7 1.8 -.7 3 -1 .7 -1 -.7 -.6 -2zM1169.3 744.5l-.8 2 -2.6 2 1.5 3 -.9 1.3 -7 .1 -5 2 -3 .1 -2.9 -1.5 .4 -2 -5.5 -1.8 -5 3.2 -2.3 -.4 1.3 -2.6 5.8 -3.4 8.2 -.3 2 .6 3 2.3 5 .4 1 -.4 .4 -1.6 -2.4 -4 .7 -1 5.3 -.2zM1211.1 743.5l-.6 1.2 -8 1.1 -7 2.6 -11.1 -2.9 2.1 -.9 9 -.4 10 -2.5 3 .4zM1322.5 743.5l9 -1.6 11.3 .6 2.1 1 -1.6 2 8.7 3 .2 1 -5.7 1 -11.7 -1 -1.8 -1 1.3 -2 -10.8 -2zM980.5 743l1 .8 .6 2.7 -.6 2.6 -1.3 -.6 -.6 -2zM1048.5 744.3l1.2 1.2 -.2 1 -1 .4 -1.3 -1.4zM1020.5 746.8l1.6 3.7 -1.6 3 -1.3 -1 -.4 -3 .7 -2.6zM1131.3 752.5l-.8 1 -5.4 0 .4 -1.2 3 -1.7 2 .4zM1214.9 753.5l5.6 -3.1 3 -.8 7 .4 10.5 2.5 -.4 1 -3.1 .4 -12 -1 -10 1.6zM1299.4 751.5l33.1 2.5 1.6 .5 -2.7 3 1 1 11.1 1.1 1.4 .9 -4.4 1.2 -9.9 -.2 -3.1 -.9 -1 -1.9 -2 -.5 -21 -1.6 -.3 -2.1 -3.6 -2zM1371.2 753.5l.1 -1 1.4 -1 4.8 -.5 11.5 1.5 2.5 1 .5 1 -.8 1 -3.7 .8 -8.8 .2 -5.1 -1zM1255.4 754.5l.5 -1 2.6 -1 5 -.4 16.8 2.4 -8.8 .2 -9 1.2 -5.4 -.4zM1413 754.5l1.2 -1 3.3 -.3 5.7 1.3 -5.7 1.4 -3.4 -.4zM980.5 754.1l1.3 1.4 .7 3 -2 3.4 -1.5 -1.4 -.5 -2 .4 -3zM1209.8 754.5l0 1 -1.3 1.1 -2 .5 -.5 -.6 1.5 -1.7zM1447.1 756.5l16.4 -1.3 3.9 .3 2 1 -1.9 2.4 -3 1.1 -12.7 -1.5 -3.8 -1zM995.5 758.3l1 .2 1.4 3 -.1 4 -1.3 2.2 -1 -.6 -1.5 -4.6 .5 -3zM1372.1 763.5l.2 -1 5.4 -1 17.8 -1.1 18 .3 4.1 .8 .6 1 -2.7 2 -5 1.4 -22 1.2zM1305.7 761.5l3.8 -.7 5 .6 3.3 2.1 12 3 -.2 1 -4.1 1.2 -4 -.2 -7.2 -2 -1.9 -3zM1466.9 761.5l1.6 -.6 5 .3 12.5 2.3 -4.5 .8 -10.8 -.8zM1438.7 765.5l2.8 -1.1 9 -.5 8.1 1.6 3.8 2 -3.9 1.2 -10 .2 -5 -1.2zM1484.9 768.5l.9 -1 4.7 -.5 3.5 .5 .2 1 -4.7 .7zM1529 771.5l.2 -1 3.3 -1.3 9 -.5 6 .8 5 2.5 7.2 .5 .6 1 -10.8 1.3 -9 -.1 -8.3 -1.2zM1796.2 769.5l11.3 -.7 0 5.6zM1494.3 775.5l-.8 1 -17 1 5 .3 4 2.5 2.2 3.2 3.1 2 -3.3 .8 -6.2 -2.8 -7.8 -1.8 -16 .3 -11 2.4 -8 -.4 -1.5 -.5 -1.7 -2 1.2 -1.4 2.4 -.6 -7.5 -2 -9.2 -4 7.3 -.7 10.5 1.7 4.1 2 -4.2 3 6.6 .8 3 -.3 7 -2.6 10 -.3 .8 -.6 -9.8 -.7 -2.6 -1.3 1.8 -2 5.8 -1.5 27 2 3 .7zM1663.7 773.5l3.8 -1.3 5 .3 -.7 1 -3.3 .5zM1710.9 774.5l10.6 -.2 1.1 .2 0 1 -8.1 0zM1632.7 778.5l1.8 -1 7 -1 5.2 0 4.7 1 -7.9 1.6zM1583.4 782.5l4.4 -3 8.2 0 .7 1 -7.2 2.4zM1726.5 780.5l.4 -1 2.6 -.1 2.5 .1 1.4 1zM1800.7 780.5l6.8 -.8 0 .9zM1652.3 782.5l4.2 -1 5.2 1 -6.2 .9zM1459 785.5l1.7 -1 3.8 -.3 6.3 1.3 -.8 1 -2.5 .2 -5.1 -.2zM1515.5 785.5l5 -1.1 11 .5 1.7 .6 .5 2 2.3 2 4.7 2 -3.2 .9 -7 .2 -11.9 -1.1 -.2 -1 2.8 -2zM1606.3 788.5l.3 -1 7.9 -.5 5 .4 2.4 1.1 -4.4 1zM1634.5 791.5l3.8 -2 -.3 -1 .6 -1 5.9 -.9 2.8 .9 -.1 2 3.9 2 -1.6 1.3 -7 .9 -6 -.8zM1734.1 792.5l3.4 -1.1 7.6 .1 -.2 1 -4.4 .9 -4 -.1zM1799.6 794.5l7.9 -.3 0 1.9 -7.8 -.6z"/>
<path fill="#004cad" d="M428.5 608.3l1 -2.7 1 .4 6 26 1 .8 1 -1.7 2 -8.5 1 1.1 4 30.6 3 10.6 1.1 .6 .9 -2 1.2 -13 2.8 -91 2.7 97 1.3 12.8 1 1.7 1 -1 1.1 -5.5 1.1 -14 4.8 -153.1 1 0 4.5 140.1 1.5 18 1 1 2 -7.1 1.6 -17.9 2.4 -87 2 27.9 1 .8 8 -92.9 3 -24 2 -6.9 2 9.5 3 25.3 9 111.3 1 5.5 2 -17.3 4 -62.5 1 -4.4 3 41 5 108.7 1 6.6 2 -18.4 1 .7 5 78.5 2 8.3 6 12.5 2 1.1 2 -3.8 2 -9.4 3.6 -29.1 6.4 -119.8 2 -21.1 4 55.8 1 5.3 1 -.6 2 -18.8 3 -56.2 1 -6.5 3 49.5 1 8.5 1 -5.9 4 -74.1 1 -6 4 66.7 1 3.1 4 -57.4 4 61.5 1 8.3 1 2 1 -3.3 1 -10.7 5 -108.9 1 5 2 41.4 1 7.9 3 -54.4 3 61.4 1 3.4 4 -81 1 4.6 2 25.2 4 -81.5 2 22.2 1 -1.1 3 -28.3 1 0 5 50.5 5 81.7 1 6.1 3 -35.8 1 4.8 6.9 148.5 3.1 10.3 6.3 -167.3 .7 -6.3 .8 7.3 2.2 44.5 1 -5.7 3 -55.7 2 35.6 1 1.7 2 -3.4 -.5 -5 .5 -9.7 1 -.1 1.1 6.8 3.5 41 .8 19 -.4 7 1.5 5 1.9 16 2.6 53 2.6 27 .4 16.3 1 1 1 -14.1 1 -.4 1 5.2 2.5 -13 0 -11 1.3 -18 3.1 -20 1.1 -2 -.4 -13 1.2 -9 .5 -19 1.1 -8 2.1 -7 -.1 -13 .6 -6.9 1 -2.1 .3 13 1.1 7 -.9 5 2.3 4 1.5 8 .1 15 2.5 22 -.6 5 2.2 10 .8 15 1.7 5.7 1 -3.8 2 -35.1 1 5.4 5 88.1 1 -.1 2 -9.6 1 1.1 .6 -10.7 2.1 -13 .1 -14 .7 -4 1.5 -3 -.7 -14 1.1 -14 1.6 -8 1.6 8 1.2 18 -.2 10 2.4 19.4 1.5 -11.4 .7 -24 .8 -5 1 .6 4 72.3 5.1 -22.9 -.3 -9 1.8 -17 -.4 -9 .8 -6.9 1 -.1 .8 8 -.6 8 1.8 7.6 2.4 39.4 1.8 6 1.8 13.8 4 -56.3 2 15.5 .7 24 2.3 24.8 1 .3 .9 -5.1 .4 -15 .7 -7 1 .1 1 11.9 -.7 6 1.4 5 1.3 14.4 .7 -2.4 1.3 -38 1 -9.8 1.4 -5.2 .5 -8 .1 11 1.6 10 1.7 24 4.1 -41 -.5 -8 1.1 -12 1 -3.9 2 9.9 1 -.3 4 -25.1 2 -3.9 1.8 4.3 .7 4 -.3 12 1.8 12.5 1 -.1 1 -6 1 5.8 3.9 51.8 1.9 14 1.2 -4.1 1 .7 3 16.5 2.7 -18.1 -.1 -12 2.4 -23.9 1 -1.2 1 2 2 14.2 1 .4 1.6 -8.5 .2 -10 1.2 -11.2 4 37.9 1 .7 2 -12.5 1 -2.1 1 .2 .4 -10 1.9 -8 -.9 -4 .6 -7.3 2 -6.7 1 .1 3.4 23.9 .6 9.7 1 .8 2 -5.2 1.5 20.7 1.5 9.2 3.2 -9.2 -.6 -12 1.4 -9.6 2 17.6 1 2.6 2 -4.6 0 -6.4 1 -5.7 1 .8 1.7 14.3 2.3 13.5 2 6.2 2 15.7 2 -10.4 .6 -13 1.4 -6 1.3 6 2.7 26.1 1.8 -9.1 2.2 -28.5 1 -.7 3 41.1 1 2.4 4 -39.6 1.3 4.3 .4 11 2.3 17.8 1 1.9 1 -6.9 1 0 1 17.3 1 .2 1.4 -20.3 1.6 -6.9 1 -.9 1 1.3 2 13 1.7 -5.5 1.2 -9 1.1 -2.2 1 .6 2.6 14.6 .2 7 1.2 4.4 2 -3.7 1 .5 1.4 3.8 -1.4 3 2 3.8 1.2 -1.8 -.4 -5 2.1 -9 -.3 -7 1.4 -4 1 -1.3 1.3 4.3 -1.5 7 4.2 8.5 1.9 -9.5 -.4 -7 1.5 -5.2 4 .2 .3 2 -1.4 1 .3 7 2.8 2.8 1.1 -.8 1.1 -3 -.8 -7 .6 -2.1 1 -.2 1.5 4.3 -.8 5 1.3 2.6 .8 -2.6 -.4 -6 2.1 -6 -.8 -7 1 -2 1.3 -.2 2.3 3.2 -.5 6 2.3 7 -1.8 7 .5 6 -1.7 3 3.9 2.7 1 -.2 2.8 -8.5 1.4 0 1.5 2 -2 9 .3 3 -5 4.3 -2.7 4.7 .7 1.3 4 -3.4 3.1 .1 1.5 2 1.4 5 4.6 6 1.4 5.8 .7 -1.8 -.1 -4 -2.2 -4 -1 -5 -4.3 -6 4.9 -6.6 3 4.6 2 -.1 1.6 -1.9 -3.6 -4.8 -2 1.7 -1.4 -7.9 1 -2 2.4 .8 2 -3.8 1 -14 .7 -1 3.2 8 .1 2 -1.5 4 2.1 8 1.4 1.5 3 -1.5 1 .2 1 1.8 .4 4 1.6 1.2 1.8 -3.2 1.9 -20 -.2 -12 1.5 -1.7 1 .3 1 2.4 .1 6 -1.4 5 1 4 .3 8 2 4.6 4 -5.5 3 -.1 3 -1.2 1.1 .2 1.2 5 8.7 -2.4 6 4.9 2 -.3 .9 -3.2 -1.9 -4 -3 -2.2 -3.4 .2 -1.9 -2 0 -4 1.3 -3.2 1 -.5 4 4 2 1 4 -.9 3 1.9 4 -3.3 1.6 0 .6 6 -.5 1 -4.7 -.3 -1.1 1.3 .5 2 3.8 3 1.1 2 -1.3 2 -3 .5 -1.5 1.5 .5 5.4 1 2.2 1 .5 2.5 -2.1 -1.4 -4 .9 -2.6 2 .1 5 3 4 -.2 1 -1.3 -.2 -2 -4.8 -1 -3.6 -3 .1 -6 1 -2 1.5 -1.2 2 -.2 7 2.2 1.5 -.8 3.5 -4.9 1 .1 1 1.8 3.6 3 .9 3 -1.5 2.1 -3 1 -2.4 -.1 -3.6 -1.8 -1.1 2.8 .8 2 2.3 .9 6 -.1 8 1.4 2 1.5 1.8 3.3 2.2 1.2 .7 -.2 -1.9 -5 1 -4 3.4 -1 -1.9 -7 -1.3 -1.4 -1.3 .4 .3 6.9 -4.5 -1.9 -4 -6 1.3 -3 3 -2 -.8 -3.6 -1 -.4 -5 2.4 -3 .4 -1.3 -1.8 .3 -6 1.5 -1 8.5 -.9 7 -5.5 3 -1 7 2.2 1.9 2.2 -1.2 5 -4.7 2.2 -1.6 1.8 .1 3 1.5 2.1 2 .4 4.7 -1.5 4.6 -3 .7 -2 -1 -2.6 -.1 -4.4 2.1 -3.9 10 -.5 7.6 4.4 1.8 2 -.4 1.8 -2 .6 -3 -.1 -4 -2.3 -1 .1 -1.3 1.9 3.3 3.6 4 2.7 1.9 2.7 -.3 3 1.4 1.7 2 .1 4 -2.8 2 -.4 2.8 .4 2.9 2 -.3 2 2.3 3 -.1 1 -1.5 2 -.1 3.6 -3 4 -1 -.6 0 -2 -1.9 -3 1.6 -2 -1.5 -2 1.7 -5 -.9 -1.1 -1 .1 -3.8 5 -5.2 .8 -6 5 -6 -2.2 -2 .3 -.7 1.1 .4 1 2.6 1 1.2 3 -.3 1 -3.9 3 .3 2 4.4 -2.7 4 1.6 .7 -2.9 -1.9 -2 1.2 -2.5 3 1.2 5 -2.3 2 0 4.5 4.6 .6 3 .9 .7 2 -1.6 3 -.4 .6 -.7 -.2 -5 5.6 -3.5 4 1.3 1 1.2 .3 2 -2 3 0 1 2.7 -.9 2 .7 5 -2.5 3 1.2 -.9 -2.5 -2.1 -1.5 0 -2.2 1 -.7 2 .8 4 -3 8 -.5 5.2 1.1 3.8 2 5 .2 6 -2.1 0 -1.5 -2 .9 -8 -.6 -6.7 -4.9 6.7 .3 4.7 -1.3 -4.6 -2 .3 -1 7.6 -.4 9 .8 1.2 .6 .3 2 1.5 1.1 4 .6 6 2.8 6 .2 4.8 -2.7 -1.3 -3 1.4 -1 8.1 -.6 4.2 .6 2.2 1 -.5 1 -8.1 2 -4.3 3 -5.4 2 9.9 3.4 10.5 1.6 7.5 2.9 3 -.2 4 -1.8 9 .1 3.3 -1 -12.2 -5 3.9 -.6 20 0 9 1.6 12 -1 8.3 1 2 1 .5 3 6.8 3 -3.8 3 5.2 1.4 5.5 -.4 -.5 -2.1 6 -1 26 1.4 10.8 -2.3 -2.3 -2 4.5 -1 15 0 8.7 1 -8.7 3 -.1 3 -.9 1 -8.1 0 -.7 1 2.7 2 -.9 1 -6.6 1 6.4 2 -1.8 2 .6 1 6.4 3.6 2.5 -1.6 -1.7 -2 7.5 -2 .7 -1 -1.3 -1 .3 -1 3.4 -2 -2.6 -2 -.3 -1 3.6 -2 5.9 -.7 5 .6 1.5 1.1 -.2 2 -5.6 3 0 1 3.3 1.6 7 .3 4.7 -1.9 3.3 -.3 5 1.5 12 .7 4 2.5 3 .7 16 1.3 14 -.6 5.4 3.2 1.5 2 2.1 .7 6 -.3 2 -1.1 .2 -1.3 -2.8 -3 1.6 -.4 14.5 1.4 5.5 2.2 16 2.2 8 -1.1 19 .9 33 -4.3 8 1.3 4 1.8 .8 1 -.6 1 1.1 1 2.7 .8 8 -1.5 .6 .7 -.5 1 1.9 1.1 6 .5 1.5 -.6 -5.5 -1.4 -1.4 -1.6 5.2 -1 3.7 -2 4.8 0 3.9 1 -4.5 2 -.1 2 -1.9 2 -4.7 .3 -3.5 1.7 2 2 -1.8 1 -7.7 1.8 -14.9 .2 .2 1 16.7 1.9 11 -.7 3 2 16.3 -2.2 -6.3 -.7 -4.2 -2.3 -6.8 -2 20.2 -4 -4.4 -2 .7 -1 2.5 -.8 8.3 -.2 1.9 1 -.6 2 1.6 1 8.8 .4 1.9 -.4 -4.6 -2 -.6 -1 7.3 -2.6 4 -.2 13 1.6 4.2 -.8 .5 -1 -1.2 -1 1.5 -1.2 9 -.8 17 .9 7.7 -2.9 -2.3 -2 6 -1 14.6 -.2 1.6 .2 -.6 1 -13.5 2 -5.1 3 -7.1 1 3.8 2 -.6 2 -12.5 .4 -13 1.7 -14 .4 -5.6 1.5 4.6 2.5 6 2 4 .4 15 -1.4 24 0 3.2 -1.5 -8.8 -5 21.6 .5 13.8 -1.5 -.3 -1 4.1 -2 2 -2 4.4 -1.2 7.3 1.2 -.7 3 -10 2 -1.3 1 12 2 -2.9 1 -9.3 1 -.2 1 1.2 1 -1.1 1 -13.8 2 -.7 2 -11.5 .3 -2 -1.5 -7 -1.6 -10 .1 -2.4 .7 3.4 1.8 14.7 1.2 -6.7 1.3 -18 -1.2 -16.4 3.9 7.4 .2 5 -.8 18 1.2 30 -3.6 13 3 6 -2 .8 -1 -1 -1 .6 -1 6.6 -.7 5.3 .7 0 2 3.7 3.1 8 -.1 6 1.1 -.1 -1.1 -4.3 -1 5.8 -2 -2.1 -2 -.1 -1 10.8 -2.8 0 15.1 -170 -.1 -123 .9 -264 4.6 -84 3.1 -63 3.3 -24 1.8 -38 4.9 -41 .2 -65 3.1 -13 2 -15 4.5 -12 4.7 -18 9.1 -6 2.2 -7 .9 -17 -.7 -9 1.9 -7 3.4 -15 11.7 -6 2.9 -5 .3 -15 -2.8 -12 -.5 -16 1.1 -12 2.7 -8 3.6 -8 5.3 -20 20.1 -5 1.5 -9 -2.9 -4 .1 -5 3.7 -6.4 9.1 -249.6 0 -2 -11 -1.4 11 -3.6 0zM804.5 689.6l-.6 2.9 .6 1.2 1 0 1 -2.2 -1 -1.9zM910.5 773.2l0 2 1 .3 0 -1.7zM922.5 764.3l-1.2 8.2 1.2 2.3 1.3 -1.3 .6 -4zM944.5 781l-.8 .5 .8 2.2 .8 -1.2zM963.3 771.5l-3.8 -.8 -.8 4.8 -1.2 2.1 -1 .2 -2 -2.2 -1 .7 -1.2 5.2 2.2 3.2 1 .2 2 -3.2 2 -.5 1.5 -7.7zM998.5 788.3l-1 2.2 2 2.5 1.6 -2.5 -.6 -1.3zM1009.5 775.2l-1.1 1.3 .1 1.2 1 .6 1.3 -1.8zM1025.5 774.8l-1 .4 -1.2 2.3 -2.2 10 .1 3 2.3 3.4 5 .9 .4 -2.3 -3.2 -3 .7 -3 -1.9 -3 4.3 -6 -1.3 -2.1zM1031.5 799.7l0 1 1.7 .8 -.1 -1zM1032.4 789.5l2.1 1.7 2 -.7 -2 -1.9 -1.1 -.1zM1038.3 799.5l3.2 1.8 1 1.5 1.6 -1.3 -.6 -2.1 -2 -1.5 -2 .4zM1060.5 780.4l-2 -.4 -3 1.2 -2.4 2.3 -2.8 7 .6 2 1.6 1.5 2.1 -.5 -.1 -3.3 3 -5.2 2.3 -.5 1.7 2.9 1.4 -.9 -.4 -3zM1069.1 781.5l-.7 2 1.1 1.6 3 1 4 -.1 3 2.4 .6 -.9 -1.3 -2 -3.3 -.9 -4 -4.4zM1093.5 758.2l-.6 2.3 1.4 4 -2.7 5 1.9 1.4 1.4 -1.4 .5 -2 -.5 -7zM1104 786.5l-.5 -1 -3 1.3 -1 -.4 -3 -4.6 -1 -.5 -3 2.1 -4 -1.8 -2.1 1.9 -3.1 6 -.2 4 1.4 .5 .1 -3.5 5.9 -3 2 -3.5 5 3.9 2 -.1 2 1.1 1 -.1zM1138.1 790.5l2 2 .4 2.7 3 -.6 3.1 .9 -.7 -2 -2.4 -2.4 -4 -1.3zM1154.5 802l-1.5 2.5 .5 1.3 1.4 -1.3zM1159 782.5l5.5 4.5 6 -5.1 14 0 5 -2.1 3 .5 4 1.9 3 -.7 3.7 1 1.4 1 -.2 5 -5.9 3.3 -6 4.6 -6 1 -4 -1.5 -3.5 .6 3.5 2.7 2 -1.4 2 -.2 2 2.5 5.4 -.6 7.6 -6.1 3 -1.3 7 -1.1 2.6 -2.5 5.4 -1.1 11 0 4.3 -.9 -10.3 -4.4 -11 -1.6 -.8 -1 9.2 -3 .5 -1 -9.9 1.1 -2.7 1.9 -.3 1 -5 -1.5 -10 -1 -4 .5 -3 -1.2 -6 1 -5.9 -3.8 3.8 -2 .1 -1 -2 -1.3 -9 2.3 -.8 2 2.9 5 -3.1 1.7 -6 -.1 -2.2 1.4zM1303.3 771.5l-1.7 -1 -5.1 -.8 -13 0 -8 2.8 -1.3 2 -3.7 1 -12 1.3 -11 -2 -4 2.3 -.4 1.4 4.8 3 .6 1 -1.8 2 20.8 .5 1 -.5 -.6 -1 -4.8 -3 2 -1 10.4 -2.2 6 -.3 8 -2.3 6 -.7zM1313.8 791.5l2.7 1 -.1 -1 -.9 -.4zM1325.1 794.5l1.4 1.5 4 .8 5.5 -1.3 .3 -1 -5.8 -1.1zM1341 787.5l6.5 3.8 3 -.2 2.1 -1.6 -.2 -1 -2.9 -1.4zM1348.6 782.5l5.9 2.8 9.7 -.8 -4.7 -.7 -6 -3.8 -3 .6zM1450.7 793.5l-10.2 -1.7 -8 0 -17.2 1.7 -.3 1 3.3 1 -9.8 .4 -2.7 -.4 -2.3 -2.5 -3 -.4 -5 1.5 -1.1 1.4 27.1 6.3 2.1 -.3 2.4 -4 -4.3 -2 12.8 -.1 2 1.4 4 .5 9.8 -2.8zM1447.3 808.5l1.2 1.2 5 -2.6 5 -.7 14 1.3 3 -1.9 7 -.4 7 .9 5 2.2 1.8 -1 -.8 -3.4 2 -.8 16 -.4 14 2.4 14.2 -2.8 -3.5 -1 -11.7 -.8 -7 -1.9 -10 1.3 -14 -1.4 -15 1.1 -11 -.2 -6.3 -1.1 1.3 -1 6.9 -2 -10.9 -1.3 -4 .6 -7.1 3.7 -.5 1 3.8 2 3.3 3 -6.5 1.9zM1549.9 802.5l2.6 1.7 5 -1.1 6.6 1.4 -.5 3 1.9 .9 1.8 -.9 -1 -2 14.2 -1 3.5 -1 .7 -1 -1.2 -1.1 -10 .5 -10 -1.3 -11 .7zM1557.3 797.5l2.2 1.1 2.5 -.1 -2.5 -1.9zM1649.6 811.5l7.8 3 -2.5 2 5.6 .8 3.5 -.8 -3.6 -4 -1.9 -.9 -6 -1zM1738.8 800.5l1.7 .8 1.6 -.8zM956.4 786.5l-.5 1 2.6 2 1 .2 .9 -1.2 -.9 -2.7zM1008.5 787l-2.9 3.5 1.8 4 -1.9 4.7 -2 0 -4 -3.4 -6 2.7 1 1.9 2.4 1.1 2.6 4.5 2 .5 2 -1 4 2.8 1.2 -1.8 .3 -5 1.5 -4 -1.6 -4 1.9 -4 -1.3 -2.4zM1041.5 804l-1 1.5 1 .8 .8 -.8zM1051.5 801.9l-.6 1.6 .6 1.4 1 -.1 .5 -1.3zM1058.5 800.5l-1.2 1 .2 2.3 1.2 -1.3zM1070.3 805.5l.2 .7 2.4 -.7 -1.4 -.5zM1089.5 796l-1.5 .5 -.2 3 -2 3 .7 .6 3.7 -3.6 .7 -2zM1101.5 791l-2.2 1.5 -4.1 1 -.9 1 .4 1 2.8 .8 4 -3.5zM1177.3 794.5l-1.8 -3.3 -1.3 1.3 -3.7 1 -5 -.9 -1.7 .9 -.2 1 2.9 1.7 3 -1.2 7 1zM1181.4 807.5l1.1 .8 1 -.6 1 .9 1.7 -1.1zM1212.3 804.5l4.2 .9 3.7 -.9 -.7 -1 -3 -.5zM1224.3 800.5l3.2 .9 3.3 -.9 -4.3 -1.1zM1228.9 790.5l0 1 4.6 2.5 3 -.1 1.5 -1.4 -4.5 -2.7zM1257.2 794.5l0 1 1.3 1.1 16 7.3 12 .5 2.9 -.9 -8.9 -3.3 -6 -.1 -9.2 -2.6 -.5 -1 .7 -3.4 8 -1 6 .4 5.7 -1 -11.7 -1.6 -4 -3 -2 .6 -5 4.8zM1288 782.5l.7 1 2.8 .9 10 -.2 4.3 -.7 1.6 -2 -1.9 -1.5 -10 -.3 -4.5 .8zM1333.9 802.5l2.6 2.3 1.4 -1.3 -1.4 -1.4 -2 -.4zM1358.2 800.5l3.6 2 -.3 2 2 1.1 11.4 -2.1 -2.4 -1.5 -12 -2.6zM1395.2 799.5l.4 1 2.9 .8 5.3 -.8 -4.3 -1.5zM1420 805.5l4.7 0 -3.2 -1.1 -1.3 .1zM1433.9 803.5l3.6 1.5 2.1 -.5 .6 -1 -2.7 -1.4 -2.8 .4zM1525.9 807.5l.1 1 1.5 .4 2.7 -1.4 -1.7 -1.5zM1094.5 798.6l-.9 .9 .9 1.8 .9 -.8zM1253.8 805.5l.3 1 7.4 1.5 2 2.8 2 -.1 1.4 -1.2 -.5 -4 -1.9 -.8 -5 -.4zM1299.3 796.5l3.2 .9 2.7 -.9 -2.7 -1.3zM835.5 690.8l.7 6.7 -.7 4 -.6 -4zM1004.5 707.1l.3 4.4 -1.3 4.1 -.1 -6.1zM1092.1 716.5l1.4 -1.7 2 -.1 2.1 .8 .9 2 -1 1.4 -2 .4zM1114.1 715.5l-.1 3 -1.2 2 -4.3 1 -4 2.5 -3 -.6 -.5 -3.9 1.5 -1.9 6 -2.7zM1039.5 716.5l1 .4 .6 1.6 .7 7 1.6 6 -1.9 6.6 -2 -2.6 -.6 -6 -1.5 -4 .8 -7zM1019.5 717.8l1 .7 1.3 4 -.2 3 -1.1 1.6 -1.6 -.6 -.8 -2 .4 -5zM1149.4 720.5l2.1 -1.4 4.4 .4 0 1 -3.4 1.1 -2.6 -.1zM1063.5 725.5l1.6 1 -.6 1.5 -1.4 -1.5zM950.5 727.3l2.1 7.2 -.7 3 -1.4 .9 -1 -2.3 -.4 -5.6 .4 -2.3zM1139.5 728.5l.7 1 -1.7 .5 -.4 -.5zM1090.4 731.5l2.1 -2.3 4 -.4 1.6 .7 2.3 4 -1.9 2.2 -3 .3 -4.5 -2.5zM1109.5 731.5l2 -1 3 .8 .6 1.2 -3.6 1.9 -2 -.9zM1046.7 731.5l2.8 -.2 2.9 2.2 .1 2 -2 2.2 -3.9 -5.2zM1011.5 732.3l1 .4 .2 1.8 -1.2 2.6 -.5 -1.6zM1076.5 734.1l2 1.3 .7 2.1 -1.4 2 -2.3 .4 -2 -1.2 -.3 -1.2 2.2 -3zM1254.5 735.5l1 -1.1 7 -.2 8 1.1 1.4 1.2 -1.4 1.1 -7 1.3zM1126.8 737.5l2.7 -2.2 1 0 5 3.2 .3 1 -1.3 2.3 -2 .9 -6.1 -4.2zM1161.8 736.5l-1.3 1 -3.7 0 .3 -1 2.4 -.9zM919.5 736.7l.4 4.8 -1.4 3.3 0 -7.7zM1067.4 739.5l.4 2 -1.5 2 -2.8 1.6 -2 -.4 -1.2 -2.2 .2 -2 4 -1.4zM1289 740.5l1.5 -1 3 -.1 6.2 .1 1.5 1 -5.7 .9zM1250 742.5l10.5 -1.7 2.7 .7 -.7 1.1 -4 1.1zM950.5 742.4l1.2 1.1 -1.2 1.6zM1011.5 742.1l1 .1 .4 1.3 -.4 2.3 -1 .8 -1.1 -2.1zM1161.2 743.5l.9 -1 3.4 -.2 2.6 1.2 .2 1 -1.8 1.8 -2 .3zM1209.5 743.5l-.6 1 -3.4 .8 -3 -.3 -2.5 1.5 -4.5 1 -7.8 -2 11.8 -2.1 3 .2 3 -1.3zM1324.1 743.5l6.4 -1.2 10 .5 2.5 .7 -2.3 2 10.1 3 -.4 1 -2.9 .4 -10.9 -.4 -2.1 -1 2 -2 -1.1 -1 -9.1 -1zM974.5 743.2l1.1 3.3 -.3 7 -.7 2 -1.1 .8 -2.6 -1.8 -.5 -4 2.1 -5.9 1 -1.4zM980.5 744l1 .9 0 3.6 -1.3 -1zM1258.8 746.5l2.7 -1.2 11.6 1.2 1 1 -10.6 .7 -4.3 -.7zM1143.7 747.5l3.1 -1 3.9 0 4.8 2.7 5 .8 1.6 1.5 -7.6 3.1 -3 .1 -2 -1.2 0 -2.8 -5.6 -2.2zM1020.5 747.3l1.3 3.2 -1.3 2.4 -1 -.5 -.4 -2.9 .4 -2zM1038.5 748.3l2 .5 1.1 1.7 0 3 -1.1 1.5 -2 -1 -1.5 -2.5 .2 -2zM1059.2 750.5l-.6 2 -1.5 1 -6.1 0 0 -2 1.5 -1.6 5 -.5zM1141.5 749.3l-2 2.5 -2.1 .7 -.5 -1 .6 -1.1 2 -1.1zM1221.2 751.5l2.3 -1.1 6.8 .1 9 2 -1.2 1 -16.6 -1.3zM1304.1 753.5l.1 -1 9.3 .1 19 1.9 -.1 1 -1.9 1.4 -4 .9 -19.5 -1.3zM1372.5 753.5l2 -1.7 4 -.2 10 1.4 2.5 1.5 -2.5 1.3 -9 .3 -4.3 -.6zM1257.2 754.5l.4 -1 4.9 -1 5.9 1 -.2 1 -4.7 1zM980.5 754.4l1.1 1.1 .6 3 -.5 2 -1.2 1 -1.1 -1 -.6 -2 .5 -3zM1450.2 757.5l.4 -1 12.9 -.5 3.3 .5 0 1 -1.3 .8 -3 .7zM1142.3 758.5l-2.8 0 2 -1.1zM1156.9 758.5l.6 -1 4 -.9 2.5 .9 -.7 1 -2.8 .7zM1152.5 758.6l.6 .9 -.6 3 -2.5 3 -3.5 1.4 -3 .2 -1 -.6 -.1 -2 5.1 -3 2 -2.6zM995.5 758.8l1 .1 1.2 2.6 -.1 4 -1.1 1.7 -1 -.5 -1.2 -3.2 .2 -3zM1329 760.5l.3 -1 1.2 -.4 10.9 1.4 -3.9 1zM933.5 761l1.1 3.5 -1.1 1.3zM1307.5 761.5l5.5 0 .7 1 -3.3 0zM1374.2 763.5l0 -1 21.3 -1.7 17 .1 3.6 .6 1.2 1 -2.7 2 -4.1 1.1 -19 1zM1469.9 762.5l3.6 -.6 6.4 .6 2.4 1 -7.8 .1zM1155.2 763.5l2.3 -.8 3 .8 -.3 1 -2.7 1.3 -2 -1.1zM1440 765.5l3.5 -1.1 8 -.1 5.7 1.2 3.5 2 -3.7 1 -8.5 .1 -4.5 -1.1zM1314.9 765.5l1.6 -.9 4 .2 7.1 1.7 .2 1 -5.3 .6 -6.3 -1.6zM1530.1 771.5l.4 -1 3 -1.1 9 -.2 5 1 8.6 3.3 -7 1 -8.1 0 -7.5 -1zM1806.3 770.5l1.2 0 0 1.3 -1.3 -.3zM1455.9 774.5l.3 -1 2.3 -1.2 8 -1 23 2.1 3 1.1 .2 1 -3.2 1.1 -15 .2 -15 -1.2zM1427.8 774.5l1.7 -.7 6 .3 6.5 1.4 1.2 1 -2.7 1.5 -4 .1 -6.1 -1.6zM1635.4 778.5l.7 -1 4.4 -.5 9.4 .5 -5.4 1.2zM1437.2 781.5l2.3 -1.2 11 -.1 6 -2.4 16 0 10 1.3 2.4 1.4 1.1 2 -1.5 1 -11 -1.9 -14 -.2 -15 2.7 -5.5 -.6zM1746.9 787.5l8.7 -3 -5 -2 -2.5 -2 5.4 -1.1 9.9 1.1 6.6 3 -.1 2 3.8 2 -12.2 1.4zM1460.2 785.5l4.3 -1 5.1 1 -4.1 .8zM1516.8 785.5l6.7 -.9 8 .8 .4 1.1 -.8 1 7.1 4 -7.7 .7 -10.1 -.7 -.6 -1 3.2 -2 -.8 -1 -4.3 -1zM1608.7 788.5l1 -1 3.8 -.2 6.8 1.2 -3.8 .5zM1640.7 788.5l1.8 -.6 2.2 .6 -2.2 .8zM1636.2 791.5l6.3 -1.9 6.9 1.9 -.9 1.1 -6 .6 -5 -.6zM1735.6 792.5l4.9 -1.1 2.4 .1 .7 1 -4.1 .5zM1801.9 795.5l.8 -1 4.8 -.1 0 1.4zM1800.8 802.5l1.3 -1 5.4 -.5 0 4.2 -4 -1z"/>
<path fill="#006ca7" d="M428.5 621.5l1 -2.6 1 .3 6 25.8 1 .7 1 -1.7 2 -8 1 1.1 4 29.3 2 7.8 2 3.4 1.2 -2.1 1.2 -10 2.6 -65.3 2.4 70.3 1.6 11.1 1 1.2 1 -.7 1.7 -7.6 1 -13 4.3 -132.2 1 0 4 122.1 1 14.1 1 4.4 1 .1 2.2 -7.5 1.6 -16 2.2 -67 1 4.4 1 15.4 1 -1.1 8 -97.2 3 -24.5 2 -6.9 3 17 3 28.9 8 106.6 1 3 1 -7.1 4 -65.1 2 -16.8 3 40.8 5 109.4 1 1.9 2 -20.3 1 .5 5 74.8 2 6.9 6 10.8 2 .7 2 -3.8 2 -9 3.8 -29.3 6.2 -111.4 2 -20.2 4 52.9 1 4.8 1 -.6 2 -17.7 3 -54 1 -6.2 3 47.2 1 8 1 -5.5 4 -71.3 1 -5.8 4 63.6 1 2.4 4 -55.6 4 58.9 1 7.8 1 1.7 1 -3.1 1 -10.2 5 -105.8 1 4.8 2 39.8 1 7.2 3 -52.8 3 59.4 1 3.1 4 -78.8 1 4.4 2 24.5 4 -78.4 2 21.3 1 -.4 3 -26.5 1 0 5 48 5 80.8 1 5.6 3 -34.3 1 3.6 7 145.8 2 2.9 1 6.9 6 -159.8 1 -9.2 1 8.1 2 45.5 3 -52.3 1 -5.4 2 25.9 1 1 1.8 -8.6 1.2 -.9 1.2 3.9 2 19 1.2 32 3 21 6.6 103.3 1 .6 1 -10.1 1 -2.5 1 9.9 3.1 -25.2 1.3 -28 2.9 -19 1.2 -4 -.3 -12 2 -30 1.8 -9.5 1 -1.6 1 .3 2.1 3.8 1.6 8 .3 15 1.1 10 -.3 14 2.7 11 .7 14 1.8 11.1 1 2.8 2.1 -12.9 .9 -19.7 1 2.5 1.7 37.2 3.3 46.3 1 -1 1 -6.2 1 -1.1 1 1.1 3.3 -32.1 .1 -11 2.2 -8 -.6 -13 2 -17 2 18 1 35.4 2 1.2 .9 -4.6 2.1 -37.3 1 1.8 3.4 65.5 -.4 15 1 4.7 1.5 -7.7 2.6 -4 -1.2 -9 2.6 -20 .6 -18 .9 -4.5 1 -.5 1.3 5 2.5 40 2.4 10 1.3 21 4.5 -58.6 1 1.7 .7 5.9 .7 23 2.6 29.1 1 -.7 1.5 -9.4 1.5 -2.6 1.3 3.6 .7 13.3 1 3.7 1.2 -5 .9 -32 1.9 -17.3 1 1.5 1 5.1 .9 14.7 -.7 5 1.8 10.3 1 -.7 .4 -12.6 2.4 -24 1.9 -7 -1.1 -5 .4 -9.4 1 -4.7 1.4 8.1 0 6 -1.2 5 1.8 3.4 1 .1 2.5 -5.5 -1.3 -1 -.6 -2 0 -6 4.4 -26 1 -1.6 1.4 5.6 -1 7 3.6 17.7 1 .4 1 -2 1 4.2 5 66.2 1 -1.2 1 -4.8 1 -.5 3 20 1.7 -17 1.4 -6 0 -14 1.9 -19.2 1 -3.2 1.9 8.4 1 16 1.1 .7 3 -31.1 2.4 16.4 2.6 32.8 1 -21.6 1.3 -7.2 2.1 -4 .6 -11 2.2 -9 -.6 -8 1.4 -5.7 1.2 2.7 3.8 30.8 1 .8 1 -3.6 1 -.9 1 16.9 2 12.4 3.6 -12.4 -.5 -10 .9 -8 2 22.2 1 3.2 1 -8.4 1 -2 1.7 0 -1.1 -7 .4 -4.1 1 1.1 .4 8 -.8 7 .4 1.6 1 -2.7 5 19.4 2 15.4 2.4 -13.7 .6 -12 1 -4.2 1 4 3 29.6 2.5 -13.4 1.5 -17.7 1 2.2 2 15.5 0 13 2 5.3 4 -40 1 3.7 .4 10 1.5 8 1 12 -.5 6 .6 2 1 .2 .9 -1.2 -.7 -6 .8 -4.5 1.3 3.5 0 8 1.7 1.6 .6 -1.6 1.6 -11 -.4 -9 1.2 -5.6 1 -1 2.3 12.6 -.7 11 1.4 2.6 1 -.4 1.4 -6.2 -1.1 -8 1.6 -11 1.1 -2.6 1 1.1 2.1 11.5 .2 7 1.7 8.9 2 -6.1 1 .4 .7 1.8 -1.3 3 1.9 5 -1.5 2 .2 1.4 2 .8 .7 -1.2 1 -5 -.3 -5 2.6 -10 -1 -6 1 -2.8 1 -.2 .7 4 -1.7 5 3 6.3 1.6 6.7 -1.2 3 -1.4 0 -.6 1 2.6 4.7 1 .5 .3 -11.2 2.1 -12 -.3 -8 .9 -2.2 1.6 .2 1.5 4 -.3 4 3.2 3.5 3 -3.6 2 3 1.4 -3.9 -.3 -7 2.1 -5 -1.2 -6.6 1 -2 1 -.1 2 2.7 -.8 6 2.4 6 -1.5 7 .4 7 -1 2 -1.5 1 -4 -.9 -2 7.4 -1 .2 -2 -3 -2 3.3 -.4 4 3.7 7 3.7 1.6 .8 -.6 .4 -2 -1.1 -4 1.9 -9.9 2 -1.7 2 -.2 4 2.8 1.7 -4 .9 -5 1.4 -.7 1.3 2.7 -2 8 0 3 -4.3 3.9 -2.8 5.1 .8 1.6 1 -.3 3.3 -3.3 2.7 .1 1.8 2.9 .8 4 4.8 6 1.6 6.4 1 -6.4 -2.5 -4 -.9 -5 -3.5 -6 3.9 -5.5 3 4 1 .2 2.9 -2.7 -2.4 -3 -1.5 -4.9 -1 1.9 -1 .3 -1.1 -5.3 1.1 -1.4 2 1.3 2.3 -4.9 .1 -5 1.6 -7.2 2.6 5.2 .1 2 -1.4 4 2.4 9 1.3 .9 3 -1.6 1 .3 1.2 5.4 1.8 1.6 1.8 -2.6 2.5 -22 -.8 -4 .8 -4 -.4 -3 1.1 -1.1 1 .6 .9 6.5 -1.7 6 1.2 4 .3 8 2 6 -.3 7 -1.6 3 1.2 1.8 1 -.6 1 -4.2 3 -2.5 2 .6 1.1 -1.1 -.1 -2.6 -3 2.5 -2.5 -1.9 -.8 -2 1.2 -4 2.1 -2.6 3 .1 3 -1.2 1.1 .7 .4 4 1.5 .8 8 -2.9 6 5.2 2 -.4 1 -3.7 -2 -4.5 -3 -2.3 -3 .5 -1.8 -1.7 -.2 -4 1 -2.6 1 -.6 5 4.9 5 -.8 3 2.1 4 -3 1 .7 .5 3.3 -.5 1.5 -4 -.5 -1 .4 -.4 1.6 .4 2.1 3.6 2.9 1 2 -.6 1.2 -3 1 -1.7 1.8 .1 4 1.6 4.8 1 .2 2.6 -2 .2 -2 -1.3 -3 .5 -1.7 1 -.6 5 2.9 5 .4 1 -.8 .5 -2.2 -.5 -1.4 -5 -.8 -3 -2.8 -.1 -5 1.2 -3 2.9 -1.1 8 2.5 4 -4.6 5 3.2 1.2 3 -1.6 2 -3.6 .9 -5 -2.4 -1.3 2.5 .2 3 3.1 1.2 6 -.1 8 1.6 4 4.8 4 2.5 .2 -1 -3 -6 1.7 -3 2.6 -1 .6 -1 -2.4 -7 -2.7 -2.3 -.9 2.3 .9 4.7 -1 .6 -2.9 -1.3 -4.1 -6 2 -3.3 3.7 -.7 -2.6 -6 -1.1 -.1 -2.7 2.1 -4.3 1.3 -1.6 -1.3 -.2 -2 .8 -4 2 -.8 6 -.1 8 -6.1 3 -1 6.4 2 1.9 2 -1.3 4.8 -4 2 -2.1 2.2 .4 4 2.7 3 -.8 3 1.1 5 -3.2 4 1.9 1.5 2 -.6 1 -2.9 -.2 -6 -1.8 -4 .4 -1 8.6 -2.6 1.7 -2.4 .7 -2 -1.2 -7 .8 -2.1 2 -1.6 9 -.1 7.7 4.8 .8 2 -1.5 .8 -3 -.1 -4 -2.1 -1.5 .4 -1.4 2 7.9 7.2 1.2 1.8 -.3 3 2.1 2.4 2 -.1 4 -2.5 1.9 .2 -3.9 5.6 -5 .5 -5 3.9 -3 .3 -4 -1.7 -2 .5 -1 1.2 -.2 1.7 3.2 1.9 .7 2.1 -3.7 4 0 2.4 5 -2.5 4 1.6 1.2 -2.5 -1 -3 8.8 -3.2 1.1 .2 4 4 .9 3.9 3 -1.4 3 -.2 1.1 -1.3 -.6 -2 .7 -3 2.8 -2.5 2 -.4 3 .7 1.4 1.2 .2 3 -2.5 3 .9 .6 3.2 -.6 1.8 4.4 .6 -4.4 .9 -1 3.5 -.9 3 1.4 .8 -.5 -.8 -3 -2.3 -2 .3 -1.3 2 .2 5 -3.2 6 -.5 5 .8 1.9 1 -.2 1 -8.7 2.6 -1.2 1.4 2 6 -2.1 1 -5.7 .2 -2 1 -1.1 1.8 5.1 5.2 1 0 8 -5.3 12 .2 4 -2 2 -.2 4.4 1.1 1.6 1.4 2 -1 3.9 .6 1 1 .2 5 -12.1 7.6 -5 .5 -7.4 -1.1 -3.6 -4.8 -4 2.2 -6 -.6 -2 .6 -.5 1.6 2.5 1.8 6 -.6 9 2.2 2 1.9 3 -1.7 2 1.4 0 1.5 6.9 -1.5 7.5 -6 3.6 -1.4 6 -.7 3.7 -2.9 5.6 -1 10.7 .3 4.9 -1.3 -8.3 -4 -12.3 -3 7.9 -3 1.2 -1 -1.4 -.4 -11 1 -5 1.9 -8.5 -.5 -9.5 -2.4 -6 1.9 -5 -1.4 -1.6 -2.1 3.3 -2 .7 -2 4.6 -.5 7.2 -2.5 -1.2 -2.4 -2 1.2 -7 -.2 -4.9 -3.6 10.5 -2 -4.4 -2 5.8 -1 3.9 1 -1.7 2 .8 1.5 5 -2.3 4 2.4 13.7 4.4 3.3 2.1 19.5 3.9 6.8 3 .5 1 -2.8 1.8 0 1.2 5.2 4 -4.6 3 18.4 -.6 5 .8 1 .8 -3 3.6 -8 4.4 .1 1 15.9 8.2 3 .6 11 .2 3.6 -1 -6.4 -2 -1.3 -1 .1 -1.1 -8 .1 -8 -1.9 -1.1 -1.1 .5 -3 5.6 -1.1 8 .3 9.8 -1.2 -16 -2 -3.3 -3 -.7 -3 -5 -3 2.4 -1 9.3 -2 5.5 -.3 24 -5.5 4 .4 5.6 2.4 -3.6 3 1 .8 8 .9 3.2 -.7 -.3 -2 3.1 -.7 12 0 15 1.5 13.6 -2.8 -2.3 -2 16.7 -.7 7.5 .7 -7.4 3 0 3 -1.1 .7 -8.3 .3 -.1 1 2.7 2 -1.6 1 -11.7 .4 -4 -1.3 -3 -3.2 -2 -.5 -4.7 2.6 -.3 1 6 2.8 13 -.2 6 1.2 -.7 2.2 .7 1 6 3.6 2 -.1 2 -1.4 -1.4 -2.1 7.7 -2 1.2 -1 -.8 -1 .4 -1 2.7 -1 .5 -1 -3.4 -2 -.6 -1 1 -1 6.7 -1.5 5 .4 1.7 1.1 -.3 2 -6.9 3 2.2 2 3.3 .9 6 .5 9 -.9 14 .3 3 .7 6 3.1 16 1.1 13 -.7 3.4 1 2.1 2 -2.5 .8 -15 -.6 -19 -2.5 -14 1.6 -9 0 -4 2.6 -2 -.4 -3.6 -2.5 4.3 -2 -2.7 -.1 -6 1.1 -6.7 3 -.3 1 3 1.3 25 5.4 4.1 -.7 -.1 -2 2.1 -2 -1.8 -1 .1 -1 7.3 0 2.3 1.6 4 .6 13 -2.6 .9 .4 -5.2 3 -.2 1 4.1 2 2.8 3 -6.4 2.1 -1.2 .9 -.3 2 -1.5 2 1.6 0 .6 -1 5.8 -3 4 -.8 15 1.3 4 -2.1 7 -.3 6 .9 3 1.9 2 .3 2.4 -1.2 -.6 -3 1.2 -.6 10 -.9 10 .5 7.4 2 .9 1 -.4 2 2.1 .7 2.7 -.7 .9 -1 -1.6 -2 16 -2.9 7 1.8 5 -.9 5 .7 1.1 1.3 -.7 2 3.6 1.1 1.7 -1.1 -1 -1 .2 -1 16 -1 2.7 -1 -.5 -2 -2.1 -.6 -10 .6 -6.8 -1 -6.2 -4.3 -3.9 -.7 3.2 -1 21.7 -2.3 6 .6 5.4 1.7 .8 1 -1.2 1 1.9 1 4.1 1 6 -.6 4 2 3.6 .6 -.2 1 -1.9 1 2.5 2 -2 1.1 -6 1.2 -15 .1 -3 .6 .8 1 19.2 2.2 9 -.4 5 1.7 25 -2.2 4.4 2.7 6.6 2 -1 1.1 -3.1 .9 9.1 1.1 3.9 -1.1 -5 -5 -12.9 -2.1 -15 -1.1 -9.6 -3.8 19.5 -4 -5.2 -2 .7 -1 6.6 -.8 3 .8 -.9 2 .6 1 12.3 .7 3.3 -.7 -5.6 -2 -.1 -1 4.4 -1.9 5 -.4 10 1.4 8.8 -1.1 .2 -1 -1.4 -1 .7 -1 10.7 -.7 15 2.1 3.6 1.6 -.2 1 -21.4 2.6 -13 .2 -10 1.4 -2 .8 13.2 5 -1.2 .7 -8 1.3 10 .1 .5 -.1 -.5 -1 1 -.6 14 -1.5 29 -.3 2.5 -1.6 -6.9 -4 -.3 -1 13.7 .5 1.9 .5 1.2 2 2.9 .4 5.2 -.4 -2.7 -2 4.5 -.8 8 .1 11.5 1.7 -10.9 2 2.5 2 -1.4 1 -14.1 2 -2.6 2 -6 -.3 -9 -2.5 -13 -.3 -2.9 1.1 1 1 3.9 1.5 6.9 .5 -.9 .4 -16 -.5 -16.4 3.1 -1.5 1 8.9 .4 6 -.6 16 1.1 30 -3.1 14 2.5 7.4 -2.3 1.1 -1 -1.1 -1 1.3 -1 5.3 -.2 2 .2 .7 2 3.5 3 2.8 .7 13 .8 2.2 -.5 -1.7 -2 9.5 -.6 0 7.7 -170 -.1 -123 .8 -264 4.4 -82.9 2.8 -66.1 3.1 -23 1.7 -37 4.6 -41 0 -66 2.6 -12.9 2 -15.1 4.4 -35 15.1 -7 .9 -17 -.9 -9 1.7 -7 3.3 -15 11.3 -6 2.7 -5 .3 -15 -3 -13 -.8 -16 1 -12 2.6 -8 3.6 -7 4.6 -6 5.2 -11 11.8 -4 2.9 -5 .7 -10 -3.2 -4 1.2 -4 3.8 -8 10.7 -4.1 4.1 -146.4 0 -1.5 -7.2 -1 -1.5 -3 1.1 -1 -.7 -4 7 -4 -.4 -1 1.7 -40 0 -1 -11.5 -1 -1.4 -2.4 12.9 -12 0 -.6 -5.1 -1 .7 -.4 4.4 -18.1 0 -4.3 -30 -2.2 -5 -1 1.4 -.6 3.6 -1.4 30 -2 0zM923.5 782.7l-.6 .8 .6 1.6 1.2 -1.6zM998.5 788l-1 .8 -.2 1.7 1.2 2.5 1 .4 1.8 -2.9 -.8 -1.6zM1008.5 786l-3.1 4.5 1.5 4 -2.4 4.5 -2 -.9 -3 -3 -6.4 3.4 1 2 2.4 1 3 4.8 2 .6 3 -.5 3 2.2 1.2 -1.1 .7 -6 1.4 -4 -1.2 -4 1.2 -5zM1025.5 774.3l-1 .3 -1.4 2.9 -2.2 13 .8 2 1.8 1.6 5 1.1 .7 -.7 -.1 -2 -2.9 -3 .6 -3 -1.8 -3 4 -6 -1.5 -2.5zM1031.2 799.5l1.3 2.4 1.6 -.4 -1.6 -1.7zM1032.4 788.5l.1 2.1 2 .9 2 -.3 .1 -1.7 -1.1 -.9zM1040.5 797.7l-1.6 .8 -1.3 2 3.9 1.2 .9 1.8 -2.2 2 1.3 1 2.7 -6 -1.7 -2.5zM1059.5 779.1l-5 2.2 -1.8 2.2 -2.7 7 .7 2 1.8 1.8 1.1 .2 1.3 -1 -.2 -3 2.8 -5 2 -.5 2 2.9 1.9 -1.4 -.9 -4zM1065.5 798.6l-.7 .9 .7 1 .6 -1zM1068.7 781.5l-.7 2 1.5 1.9 7 1.3 3 2.3 1 -.5 -1.4 -3 -4.5 -2 -3.1 -3.9zM1082.4 789.5l.5 4 1.6 .9 .6 -3.9 6.2 -3 2.2 -2 3 2.6 4.2 1.4 -1.3 2 -6 3 .1 1.8 3 .5 5.1 -3.3 2.6 -8 -4.7 .5 -2.8 -4.5 -1.2 -.5 -3 1.4 -5 -1.9 -3 6.9zM1137.2 790.5l2.3 2 .1 3 3.9 -.6 3.4 .6 -.7 -2 -2.7 -2.7 -4 -1.4zM1154.6 801.5l-1.8 3 .7 1.5 1.8 -1.5 .4 -2zM1181 807.5l1.5 1.8 2 .5 2.7 -2.3 -5.7 -1zM1210.6 804.5l5.9 1.1 4.6 -1.1 -.6 -1.2 -3 -.5zM1223.4 800.5l1.1 1 2 .2 5.5 -1.2 -5.5 -1.4 -2.1 .4zM1227.7 790.5l.1 1 5.7 2.7 4.5 -.7 .4 -1 -4.9 -2.9zM1253 805.5l.2 1 8.3 1.7 .9 1.3 -.3 1 1.4 .7 2 -.2 1.8 -1.5 -.1 -4 -1.7 -.8 -6 -.6zM1286.8 782.5l.8 1 3.9 1.2 10 -.2 5 -.9 1.5 -2.1 -.5 -1.2 -2 -.7 -10 0 -5.5 .9zM1312.9 791.5l1.6 1.3 3.3 -.3 -2.3 -1.9 -2 0zM1324.1 794.5l2.4 1.9 4 .6 5 -.9 1.7 -1.6 -6.7 -1.2zM1328.2 785.5l1.3 1.2 3.4 -.2 -2.4 -1.8zM1336.1 787.5l4.4 .6 7 3.4 3 -.2 2.6 -1.8 -.6 -1.6 -3 -1.1zM1356.9 799.5l4.4 3 -.3 2 2.5 1.2 12.6 -2.2 -1 -1 -14.6 -3.3zM1393.8 799.5l.9 1 3.8 1.1 7.5 -1.1 -5.5 -1.7zM1418.3 804.5l.4 1 2.8 .5 4.2 -.5 -3.2 -1.5zM1433.1 802.5l0 1 1.6 1 2.8 .7 2.8 -.7 .4 -1 -3.2 -1.5zM1594.6 802.5l2.9 1.1 2.5 -1.1 -2.5 -.8zM1742.5 818.5l5 1 7.1 -1 -1.7 -1zM1762.6 818.5l3.9 .9 3.2 -.9 -3.2 -.8zM1021.5 802.3l-.6 1.2 .6 1.6 .7 -1.6zM1051.5 801.7l-.7 1.8 .7 1.9 1 -.1 .7 -1.8zM1058.5 800.2l-1.4 1.3 .4 2.7 1.4 -1.7zM1069.5 807.3l3.8 -1.8 -2.8 -.4 -1 .9zM1085.6 802.5l.9 .8 5 -5.7 1 .1 2 3.8 1 .2 .1 -1.2 -2.1 -3.9 -5 -1 -.8 .9 -.1 3zM1298.3 796.5l4.2 1.1 3.3 -1.1 -.7 -1 -2.6 -.4zM1333.8 801.5l-.4 1 1.1 1.3 2 1.1 1.2 -.4 .5 -1 -1.7 -1.6zM1093.1 716.5l.8 -1 2.5 0 1.2 1 0 1 -2.1 1zM1112.5 715.5l.7 2 -.7 2.2 -4 1.1 -4 2.7 -1.7 0 -1 -1 -.5 -2 1.2 -2.3 6 -2.8zM1039.5 717l1 .5 2.2 14 -1.2 3.9 -1 .9 -2.7 -10.8 .7 -7zM784.5 719.1l1 0 .5 7.4 -.5 4.9 -1 1.7 -.7 -3.6zM1019.5 718.6l1 .6 1 3.3 0 2.2 -1 2 -1.2 -.2 -.9 -2zM950.5 728.4l1.6 6.1 -.6 2.7 -1 .4 -1 -6.1zM1091.4 731.5l1.6 -2 3.5 -.2 3.4 4.2 -1.4 1.7 -3 .3 -3.6 -2zM1109.7 732.5l1.8 -1.6 2.4 .6 .5 1 -2.9 1.5zM1074 737.5l2.5 -1.7 2 1.7 -.2 1 -1.8 1 -2 -.6zM1260.7 736.5l8.2 0 -4.4 .7zM1127.9 738.5l.6 -1.2 2 -.5 3.8 1.7 .4 1 -2.2 1.8zM1066.6 739.5l.8 1 -.4 1 -2.5 2.1 -2 .3 -1.7 -2.4 .6 -1 2.3 -1zM1162 743.5l2.5 -1 2.6 1 0 1 -2.6 .8zM1011.5 742.7l1.1 .8 -1.1 2.3 -.5 -1.3zM1204.4 744.5l.1 -1.1 2.4 .1 -.7 1zM1327 743.5l11.2 0 -2.7 .7zM973.5 744.2l1.1 .3 .6 3 -.3 6 -1.4 2.2 -2 -1.2 -.8 -3 .7 -4zM1201.5 744.5l-1 1.1 -4 1 -2.7 -.1 -.6 -1 6.3 -1.4zM1260.9 746.5l6.6 -.4 3.2 .4 .7 1 -7.9 .3 -2.3 -.3zM1146.3 747.5l5.2 0 1 1.4 7 1.3 1 1.3 -4 2.1 -5 .6 -1.1 -.7 .1 -3.7 -3 -.3 -1.2 -1zM1336.1 748.5l3.4 -1.6 9.6 1.6 -4.6 1zM1020.5 748l.9 2.5 -.9 1.8 -1.1 -2.8zM1038.5 748.7l2 .4 .8 1.4 .2 2.4 -1 1.6 -2 -.9 -1.2 -2.1 .3 -2zM1052.1 752.5l.4 -1.5 2 -.9 3 .1 .9 1.3 -.9 1.2 -2 .7zM957.5 751.3l.7 3.2 -.7 3.9 -1 -1.8 -.3 -3.1 .3 -1.9zM1230.4 751.5l6.2 1 -5 0zM1374.1 753.5l1.4 -1 4 -.1 8.6 1.1 1.6 1 -1.3 1 -9.9 .1 -3.8 -1.1zM1260.1 754.5l.4 -1 4.3 0 -.2 1zM1308 753.5l22.4 1 .4 1 -4.3 1.5 -12.8 -.5 -3.9 -1zM980.5 755l1 1 .5 2.5 -.5 1.8 -1 .7 -1.3 -2.5 .3 -2.3zM1222.1 758.5l2 -1 5.4 -.4 6 1.4 -2 1.2 -8 1.2 -2 -.6zM995.5 759.3l1 .1 1 2.2 0 3.1 -1 2 -1 -.5 -.9 -2.7zM1135.5 759.4l.4 2.1 2.6 2.5 .3 1.5 -2.1 2 .5 3 -2.7 3.2 -2.1 -4.2 1.9 -2 -1.8 -1.5 -.4 -1.5 2.1 -3 .3 -2zM1151.5 761.3l-.1 2.2 -2.9 2.5 -4 .7 -2 -1.1 .5 -1.1 7.5 -3.9zM1376.8 762.5l18.7 -1.4 17 .2 3.7 1.2 -2.6 2 -5 1 -16.1 .5 -15.4 -2.5zM1156.4 763.5l2.4 0 0 1 -2.3 .1zM1441.5 765.5l4 -.9 5 0 5.2 .9 3 2 -9.2 .8 -4.2 -.8zM1318.1 765.5l6.7 1 -2.3 .9 -4 -.9zM1251 774.5l3.5 -1.8 10 0 2.5 -1.2 -10 -4 -.8 -1 20.3 -.2 9 1.5 14 -.9 6 .8 2 .8 .3 1 -2.3 1 -21 -1.2 -10.8 3.2 -.9 2 -10.7 2 -6.6 -.2zM1531.3 771.5l.8 -1 2.4 -.7 7 -.1 4.9 .8 5.8 3 -5.7 .7 -8 -.3 -5 -.9zM1457.1 774.5l.2 -1 1.8 -1 7.4 -.8 20.5 1.8 3.6 1 .1 1 -5.2 .8 -12 -.1zM1431.3 775.5l5.2 -.7 4 .7 1.5 1 -1.9 1 -3.6 .1 -4.4 -1.1zM1638.5 777.5l8.4 0 -5.4 .7zM1439.3 781.5l3.2 -.7 9 .1 3.5 -2.4 5.5 -.5 19 .9 2.5 .6 2.7 2 -.7 1 -10.5 -1.2 -20 -.2 -4.9 2.4 -7.1 0 -2.1 -1zM1750.4 780.5l10.8 0 6 3 -.7 1 .7 1 4.9 2 -9.6 .9 -12.4 -.9 1.1 -1 6.9 -2 -7.5 -3zM1518.5 785.5l11.3 0 -.3 1.1 -4 .6 -5.7 -.7zM1718.8 787.5l11.7 -.9 3.4 .9 -11.4 1.2zM1521.4 790.5l3.1 -1.4 4 -.6 3 .8 2.9 2.2 -9.9 -.1zM1464.4 798.5l1.1 -1 7 -1.4 7 .8 7 -.7 2.3 -1.7 -2.3 -3.3 4 -.8 9.2 1.1 6.8 2.4 16 2.2 9 -1 22 1.2 6 3.2 -14 2.8 -2.8 -.8 -15.2 -1 -7 -1.8 -11 1.1 -14 -1.5 -19 1.3zM1638.6 791.5l3.9 -.7 4.7 .7 -.6 1 -3.1 .2 -3.8 -.2zM1756 796.5l3.5 -2 1.5 -2 3.5 -.5 3.8 .5 -1.9 3 -2.9 .9zM1610.4 797.5l1 -1 8.1 -.9 1.2 1.9 -.8 1 -2.4 .4zM1801.8 802.5l1.5 -1 4.2 -.3 0 3.1zM1807.5 806.4l0 5.1 -6 -.4 -3.4 -1.6 -.1 -1 2.4 -1z"/>
<path fill="#0087a1" d="M428.5 635.8l1 -2.6 1 .3 6 25.7 1 .6 1 -1.8 2 -7.6 1 1.1 4 27.9 2 7.4 2 3.4 1.1 -.7 1.4 -7 2.5 -38.9 2.3 42.9 1.7 8.1 1 .8 1 -.4 2 -6.5 1.1 -11 3.9 -113.1 1 0 3.7 105.1 1.3 12.7 1 2.3 1 -.6 2.3 -7.4 1.7 -13.4 2 -47.7 1 1.3 1 10 1 -2.3 8 -100.5 3 -25.4 2 -7 3 17.5 3 30.2 8 112.9 1 -.2 1 -10.1 4 -68.5 2 -16.7 3 41 5 108.5 1 -2.8 2 -21.9 1 .4 5 70.5 1.3 4.2 5.7 9.1 2 2.1 1 -.4 2 -3.8 2 -8.5 4.1 -29.5 5.9 -102.6 2 -19.5 4 49.9 1 4.3 1 -.6 2 -16.5 3 -51.7 1 -5.9 3 44.9 1 7.5 1 -5.1 4 -68.6 1 -5.5 4 60.5 1 1.6 4 -53.7 4 56.2 1 7.1 1 1.5 1 -3.1 1 -9.5 5 -102.6 1 4.5 2 38.4 1 6.5 3 -51.4 3 57.6 1 2.9 4 -76.9 1 4.2 2 23.9 4 -75.4 2 20.6 1 .2 3 -24.8 1 0 5 45.7 6 85.9 3 -34.6 1 3.9 7 142 1 -.9 1 2.1 1 7 1 -10.9 5.2 -147.1 .8 -10 3 52.4 1.4 -8.4 1.2 -34 1.4 -11.7 2 24 1 1.3 2 -12.1 1 -.7 2.4 17.2 1.4 31 2.6 19 7.6 110.9 2 -6 1 -.2 1 3.1 1 -.5 1 -15.3 1.7 -15 1.1 -25 2.9 -20 1.6 -6 -.5 -11 1.8 -26 1.4 -9.7 1 -2.9 1 -.5 2 4.3 1.1 6.8 1.3 24 0 13 2.3 12 .4 12 2.6 18 -.7 10 2 .8 1.2 -3.8 -.5 -7 2.1 -15 .2 -7.8 2 17 .1 10.8 1.9 17 2 34.7 2 -9.5 1 -.9 1 1.7 1 -5 3.3 -42 2.1 -8 -.7 -11 1.3 -10.5 1.2 9.5 1.4 35 2.4 4.8 2.6 -19.8 .4 -12.4 1 5.2 2.9 47.2 0 11 -.8 5 1.9 10 4.5 -17 .4 -5 -.9 -2.1 3 -39.7 1 -1.2 3.3 42 2.8 15 .5 9 -.7 5 1.1 7 1 -.6 1.1 -9.4 .4 -19 2.5 -30.6 1 1.6 4 64.1 1 -1.6 1.5 -17.5 1.5 -3.2 1 3.3 1 15.8 1 3.3 1.5 -7.2 1.1 -35 1.4 -12.6 1 1 1.1 7.6 .3 11 -.7 4 2.3 13.6 1 -1.4 1 -4.2 -.1 -11 2.8 -26 1.3 -2.9 1.1 1.9 .7 4 .2 9.5 1 -.6 .7 -11.9 2.8 -7 -2 -4 .3 -8 1.2 -5.7 2 -4.3 2 4 3 14.2 1 .5 1 -1 1 4.3 .5 14 1.9 15 1.7 25 -.3 9 1.2 1.6 1 -.9 1 -4.2 1 -.9 3 22.1 2 -20.5 1.4 -7.2 .1 -13 2.5 -20.6 1.4 6.6 .9 15 .7 3.6 1 -.1 1.1 -4.5 1.9 -22.5 2 11.1 1.9 30.4 1.1 2.8 .8 -3.8 1.2 -20.2 2.7 -9.8 1 -13 2.3 -7.6 1 -.3 2 5.6 2 18.1 1 1.8 1 -4.3 1 .4 .4 11.3 2.6 16.6 4 -14.9 1 1.5 2 8.8 1 -1 1 -11.2 1 .6 1 5 1 .3 1 2.3 3.1 13 2.9 18.1 2.7 -16.1 1.3 -13.6 4 33.3 3 -14.9 1 0 .5 -1.8 -.8 -6 .3 -3.4 1 -.7 1.5 12.1 -.6 7 3.1 12.3 2.3 -23.3 1.7 -7.5 2.4 9.5 1 12 -.2 7 .8 2.6 1 0 1 -1.4 3 2.8 1.2 -3 1.4 -10 -.5 -9 .9 -4.5 1 -.9 1.7 9.4 -.6 12 1.9 4.4 1 -.7 1.7 -6.7 -1 -8 2.3 -12.7 1 1.7 1.8 10 0 6 2.1 12 .1 5.5 .7 -1.5 -.5 -5 1.8 -2.2 1.6 3.2 -1.5 4 2.9 2.2 1 -1 1.4 -6.2 -.3 -6 1.9 -5.3 1 -.1 2.2 5.4 .4 4 -.6 2.1 -2.4 .9 4.4 7.7 1.1 -2.7 .5 -17 1.5 -6 -.9 -4 .5 -3 1.3 -.9 1 .9 .9 3 -.3 4 3.4 3.5 3 -3.1 2 2.9 1.9 -5.3 -.3 -7 2.4 -3.9 2 2 1.3 2.9 -1.6 7 .3 7.7 -2 1.9 -2 -.2 -2 -1.5 -1.7 7.1 -1 1 -2.3 -4.3 -2.1 4.3 -.6 5 2.2 4 .5 3.3 5 1.7 1.6 -2 -.9 -5 1.2 -9 2.1 -2.2 3.1 .2 2.4 4 .5 3 -3.9 7 .1 2 1.8 1 3 -3.6 2 -.6 1 .5 1.7 2.7 .4 4 5.1 6 1.8 7.1 1.5 -7.1 -2.8 -4 -.4 -4 -3.2 -7 2.9 -4.6 4 3.9 3.5 -3.3 -3.1 -4 -.9 -6 2.4 -7 -.2 -4 1.3 -4.8 1 .3 1.2 2.5 .2 2 -1.4 4 2.2 9 1.8 1.4 3 -1.8 1 .4 1 5.1 2 1.9 1 -.6 1.2 -3.4 1.8 -18.1 1 -.7 1 2.2 .4 8.6 1.7 7 -.5 6 -1.6 3 2.1 4 -2.5 4 1.2 3 -.1 2 -1.7 2.8 -3.5 -1.8 -1.3 -2 1.9 -4 -1.1 -2 -2 -.8 -1.5 1.8 1.7 5 -2.2 2.5 -3 .4 -.8 1.1 .9 2 2.9 1.4 1.8 3.6 2.2 1.6 4 -.3 3 2.2 1.4 -1.5 2.3 -10 -1.1 -4 1.1 -4 -2 -4 .1 -4 2.2 -3 3.9 -1 1.1 -3 -1 -2.3 -3 3.3 -2.4 -2 .2 -4 1.9 -3 3.3 -.1 3 -1.1 .9 1.2 .1 3.1 2 1.3 2 .3 6 -3.5 6 5.6 1 .1 1.7 -1.9 .4 -4 -3.1 -5.3 -2 -1.4 -3 .9 -1.3 -1.2 -.3 -4 .6 -1.9 1 -.7 4 4.8 1 .3 4 -1.4 2.1 .9 1.6 2 -.1 5 4.2 4 -.4 2 -3.4 1.6 -.9 1.4 .3 5 1.4 5 2.2 -.6 2.8 -3.4 -2 -4 1.2 -1.7 2 .6 3 2.4 4.1 .7 -.4 1 -3.8 2 -1.8 5 -1.6 2 -.2 3 1.7 2.3 2 1 1.3 -.3 .2 -4 3.5 -5 1 .7 .2 1.3 1.8 .9 2.3 -1.9 -.5 -3 -3.3 -6 .4 -4 -.6 -1 -5.3 -.5 -2.6 -2.5 .5 -7 1.1 -1.2 2 -.5 6.7 2.7 .6 1 -1.2 6 .9 .8 9 .7 8 1.6 3.1 3.9 4 3 .2 1 -2.3 5.2 -2 1.7 -1 0 -3 -3.5 -3.5 -1.4 -2.5 -4.2 -1 -.3 -2 1.1 -1.7 2.4 .2 2 1 1 7.5 1.5 3 2.5 2 .6 1.1 3.4 1.9 1.2 1.1 -4.2 7.9 -3.6 5.4 2.6 .3 1 -1 1 -3.7 1.5 -3 2.5 -3.5 0 -.5 3.9 -2.1 3.1 1.1 1 5 -4.8 4 3.4 -.2 -4.6 2.9 -1 3.9 -3 2.5 -7 -.1 -1.7 -4 1.1 -2 -1.3 -2 -3.8 -4 1.1 -2 -.6 -4.4 -4.8 -1 -3 3.4 -3.1 5 1.1 1.3 -1 .9 -3 0 -5 -1.2 -5 .5 -1 2.3 -1 6.6 -1 1.5 -5 -1.5 -6 1.1 -3 2.5 -1.3 7 0 6.4 3.3 1.6 2.6 -3 .5 -5 -1.7 -2 1.6 -.2 2 8.6 8 -.2 3 2.8 3.2 5 -1.8 .5 .6 -1.5 3 -5 .2 -6 4.3 -3 -.2 -3 -1.6 -2.7 1.3 -1 3 2.8 2 .9 2 -3.5 4 -.2 2 .7 .9 5 -2.6 4 1.9 1.5 -2.2 .5 -3.9 7 -2.5 5 3.9 1 4.4 3 -1.8 8.8 -.1 5.2 -1.4 1 .4 1 3.7 1 .4 1 -4.6 1 -1.2 3 -.6 3 1.5 1.2 -.2 .2 -2 -1.4 -4 3 -3 6 -1.4 5.8 .4 1.9 1 -.5 1 -7.2 2.1 -1.7 1.9 1.6 5 -.3 1 -6.6 .6 -2.6 1.4 -1.2 2 5.8 6.1 10 -5.7 11 .2 6 -2.2 3.5 .6 2.5 2.3 2 -1.5 3 .3 .9 .9 .4 5 -11.3 7.1 -6 .5 -6 -1.3 -2.1 -3.3 -1.9 -1.3 -4 2.4 -7 -.9 -2 -1.4 -.9 1.2 .9 3 3 2 6 -.5 4 1.7 5 .5 2 2.4 3 -1.9 1.3 .8 .7 2.4 8 -2.7 6.8 -5.7 3.2 -1.2 7.2 -.8 3.9 -3 4.9 -.7 10 .5 8 -2.4 21 -.8 5 .8 1 .6 -.1 1 -3.9 3.7 -6.7 3.3 1.2 2 15.5 7.8 16 .2 2.4 -1 -6.4 -2 -1.2 -1 .8 -1 -.6 -.5 -8 .3 -6 -1 -3.6 -1.8 .2 -2 .7 -1 4.7 -.9 18 0 3.5 -1.1 -18.9 -2 -3.1 -3 -.3 -3 -5.1 -3 5.9 -2 11 -1.4 24 -4.9 5 1 2.6 1.3 -3.4 3 .5 1 11.3 .7 1.9 -.7 .3 -2 5.8 -.7 11 .5 7.2 1.2 1.2 1 -2.1 2 -2.4 1 .3 1 8.8 3.4 11 -.3 6 .9 -.4 2 .7 1 6.7 3.8 4.1 -.8 .7 -1 -1.2 -2 7.9 -2 3.5 -2.5 12 2.1 22 -.5 5 .6 4.3 3.3 -10.3 1.7 -11 -.3 -7 -2.1 -10 1.7 -5.7 3 -.3 1 5.3 2 -5.3 2 1.2 1 4.8 1.3 11 -.7 9.9 1.4 .9 1 -3.5 1 .5 1 6.2 .8 3.2 -.8 -2.2 -1.5 -2.9 -.5 5.9 -2 -1.2 -2 3.9 -2 -.6 -1 9.9 1.5 11 -1.5 -3.8 2 .1 1 5.7 2.9 1.2 2.1 -6.2 2.4 -2.7 4.6 .7 .3 2.6 -.3 5.4 -3.7 5 -.9 15 1.5 2 -2 8 -.6 5.3 .7 2.9 2 2.8 .5 3 -1.5 0 -3 8 -1.2 12 .6 7.2 2.6 .1 2 2.7 .9 3.8 -.9 .9 -1 -.8 -2 14.1 -1.7 7 .9 5 -.9 4.7 .7 .7 1 -.9 2 3.5 1.4 19 -.3 11 1.6 19 .5 6 1.7 5 .4 9 -1.8 9 -.4 12.1 3.9 -5.4 2 1.3 .6 12 .8 3.7 -1.4 -3 -2 -.2 -2 -1 -1 -16.9 -3 -12.6 -.6 -7.2 -3.4 6.4 -2 12.8 -1.6 22 1.3 9.6 4.3 -15.7 1 12.1 1.7 8 -.2 1.9 -.5 .4 -1 13.7 -2 9 .5 1.3 .5 2.7 3.2 -7 .5 -17.2 3.3 -1.2 1 3.4 .7 13 -.5 9 1.1 7 -.1 30 -2.8 14 2.2 6 -1.2 6.2 -2.4 -1.8 -1 1.6 -.3 1.7 .3 -.6 1 3.4 1 2.2 2 6.3 1.5 12 .3 2.9 -.8 -.5 -1 .8 -1 5.8 -.2 0 7.1 -35 -.1 -3.4 -.8 2.4 -1 -3 -1 -17 -.6 -12.8 1.6 2.9 1 -21.1 .9 -206 .6 -265 4.2 -151 5.6 -21 1.4 -35 4.3 -42 -.3 -67 2.2 -12 1.8 -15.2 4.3 -34.8 14.5 -7 .7 -17 -1.1 -9 1.6 -7 3.2 -15 11 -6 2.6 -5 .1 -15 -3.2 -13 -.9 -16 .6 -12 2.4 -8 3.4 -7 4.3 -6 5.1 -11 11.4 -4 2.8 -4 .7 -10 -3.5 -4 .5 -4 3 -9 11.5 -4 3.5 -4 1.2 -10 -1.7 -4 .5 -5 2.9 -4.2 4.9 -98.7 0 -7.1 -4.2 -4 -5.8 -1 .3 -2.6 9.7 -3.8 0 -2.6 -16.1 -2 -5.3 -3 .9 -1 -.8 -4 4.4 -4 -3.2 -1 .5 -4 14.3 -1 .6 -3 -16.8 -1 .7 -1.4 20.8 -28.3 0 -1.3 -28 -1 -7 -1 -.7 -1.8 4.7 -2.2 11.6 -2.4 19.4 -5.7 0 -2.9 -32.5 -1 .4 -1 9.3 -1.1 22.8 -14.2 0 -2.4 -32 -2.3 -7 -4 -7.3 -1 1.1 -1.6 9.2 -2.4 36zM756.5 745.5l-1 1 0 1 1 .7zM923.5 781.4l-1 .2 -.2 .9 .2 7.9 2.5 -5.9 -.3 -2zM944.3 803.5l2.2 -1.3 2 .1 .2 -.8 -3.2 -.4 -1 .7zM958.5 796.7l0 1.6 1.3 .2 .7 -1zM992.5 778.2l-1.7 1.3 .7 2.1 1 .5 .6 -2.6zM1010.5 812.1l-.9 1.4 .9 .6 .9 -.6zM1024.5 773.5l-1.9 5 -1.9 12 1.8 3.3 6.3 1.7 .7 -.3 -.2 -2.7 -2.5 -3 .6 -2 -1.9 -4 3.3 -5 .3 -2 -2.6 -2.6zM1030.9 799.5l1.6 2.6 2.8 -.6 -3.8 -2.5zM1031.9 788.5l-.3 1 .9 1.6 3 .8 1.3 -.4 .1 -2 -1.4 -1.2 -2 -.5zM1041.5 797.5l-2 .4 -3 2.6 4.5 1 .5 1.7 -1.6 2.3 1.6 1.2 3 -5.2 -1 -2.8zM1051.5 801.5l-1 1 1 3.6 1.1 -.6 .8 -2zM1058.5 799.9l-1.6 1.6 -.2 2 .8 1.1 1.8 -3.1zM1065.5 798.4l-.9 1.1 .9 1.1 .8 -1.1zM1069.4 807.5l4.8 -2 -3.7 -.7 -1 .7zM1099.9 777.5l4.1 0 -1.5 -1.4zM1136.7 789.5l-.4 1 2.5 2 .4 1 -.9 2 1.2 .8 4 -1 3 .9 .7 -.7 -.7 -2 -3 -3 -4 -1.4zM1155.5 801.3l-1.4 .2 -1.5 3 .9 1.7 2.3 -1.7zM1179.4 791.5l2.1 .6 1.4 -.6 -1.4 -.8zM1180.7 806.5l.8 2.7 3 1.4 3.8 -3.1zM1221.9 804.5l-.5 -2 -.9 -.3 -9 1.3 -2 1 7 1.2 5 -.1zM1222.1 794.5l1.4 1.2 1.5 -.2 .8 -1 -1.3 -.7zM1225.8 790.5l0 1 6.7 2.8 4 -.1 2 -.7 .5 -1 -6.5 -3.6zM1252.2 805.5l.2 1 9.3 2 -.3 2 1.1 1.1 3 -.2 2.3 -1.9 .3 -4 -1.8 -1 -6.8 -.6zM1292 797.5l4.6 0 -2.1 -.7zM1285.5 782.5l.8 1 4.2 1.3 11 0 5 -.8 2.1 -2.5 -1.3 -2 -11.8 -.1 -6.7 1.1zM1312.1 790.5l.4 1.5 2 1.2 3 .1 1.4 -.8 -3.4 -2.3zM1322.9 794.5l2.7 2 4.9 .6 5.2 -.6 2 -1 .5 -1 -2.4 -1 -5.3 -.4 -5.8 .4zM1327.3 785.5l.5 1 13.7 2.4 6 2.9 5 -1.2 1.4 -2.1 -1.4 -1.4 -2 -.5 -15 .1 -5 -2.7 -2.3 .5zM1355.4 799.5l5.3 3 -.1 2 2.9 1.4 13.9 -2.4 -3.9 -1.8 -12 -2.5zM1392.7 810.5l2.8 .8 4.4 -.8 -3.4 -.7zM1431.2 802.5l2.5 2 3.8 .8 3.7 -.8 .2 -1 -3.9 -1.7zM1586.6 814.5l.9 1.2 3 -1.5 2 0 3 2.6 1.6 -.3 .3 -1 -2.6 -3 -2.3 -.6zM1021.5 802.1l-.7 1.4 .7 1.8 .8 -1.8zM1222.2 801.5l5.3 .4 5.9 -1.4 -7.9 -1.6 -2.2 .6zM1296.7 796.5l5.8 1.2 4 -1.2 -.3 -1 -3.7 -.6zM1333.1 801.5l-.1 1 2 2 1.5 .6 1.7 -.6 .3 -1 -2 -1.8 -2 -.8zM1374.9 812.5l1.6 1.2 1 -1.2zM1228.8 813.5l-1.3 -1.1 -1.7 1.1 1.7 .7zM1111.5 716.5l.4 2 -.9 1 -2.5 .4 -4 2.8 -2 -.6 -.5 -1.6 1 -2 6.5 -2.4zM1039.5 717.6l1.3 1.9 1.2 11 -.5 3.1 -1 1.2 -2.3 -9.3zM1019.5 719.6l1 .5 .4 1.4 -.4 4.6 -1 0 -.7 -1.6zM784.5 725.3l1 2.2 -1 2.7zM950.5 730.2l1 4.3 -1 1.7zM1093.2 730.5l1.3 -.7 2 .4 2.4 2.3 -.2 2 -2.2 .7 -2.4 -.7 -1.7 -2zM1110.3 732.5l1.2 -1.1 2 1.1 -2 1.1zM1075.3 737.5l1.9 0 0 1 -1.7 .1zM1089.5 737.9l5.6 1.6 2.1 2 -.8 4 -4.8 3 -1.7 2 .4 4 2.2 3 0 4 1.3 3 -1.3 3 -2 .7 -2 -1.9 -1 -4.8 -3.5 -4 -.3 -2 -4.2 -7.7 -1 0 -2.2 2.7 -2.8 1.6 -2 0 -1.2 -1.6 .5 -4 .8 -1 6.9 -.2 7 -5.9zM1129.9 738.5l1.6 -.3 1 .9 -1 .4zM963.5 739.4l1.7 3.1 -.7 3.2 -1 1.1 -1.6 -4.3 .6 -2.7zM1062.1 741.5l.6 -1 1.8 -.5 2 .5 -2 1.7zM1004.5 742.2l1.5 6.3 -1.5 3.9 -1 -.9 -.2 -2zM973.5 745.2l1 .9 .2 2.4 -.2 5 -1 1.5 -2 -1.4 -.4 -2.1 .4 -3.2zM1038.5 749.1l2 .4 .8 3 -.8 1.5 -1 0 -1.4 -1.5 -.5 -2zM1151.2 752.5l1.1 -2 1.2 -.4 5 .3 .9 1.1 -5.9 2.4 -2.1 -.4zM1053.6 751.5l1.9 -.7 1.7 .7 -1.7 1.2 -1.5 -.2zM1315.2 754.5l11.3 0 1.9 1 -6.9 .8 -5.7 -.8zM941.5 756.1l.1 3.4 -1.1 1.5 -.4 -3.5 .4 -1.4zM980.5 755.6l1.2 2.9 -1.2 2 -.9 -2zM1078.5 757.1l2 -.4 2.7 1.8 -.2 3 1.2 3 -.7 1.6 -2.1 -.6 -4.4 -6zM1186.8 757.5l4.2 0 -1.5 .7zM1223.7 758.5l5.8 -1.1 4.3 1.1 -1.7 1 -4.6 .4 -3 -.4zM1046.5 758l1 -.1 .8 1.6 -.8 2.1 -2.6 -1.1zM995.5 760l1 0 .6 1.5 -.6 4.6 -1 -.5 -.6 -2.1zM1064.4 763.5l2.1 -3.4 2 -.5 4 2.5 .9 2.4 -1.9 2 -4 .5 -2.3 -1.5zM1179.5 761.5l10 -1.4 2 .7 1 1.8 2 -1.7 3 -.8 8 2.4 13 5.8 18.3 3.2 6.4 3 .7 1 -2.4 2 .2 1 5.1 4 -1.3 1.2 -5 1.6 -7.7 -.8 -4.3 -2.6 -10.2 -2.4 8.3 -4 -3.1 -1 -10 .8 -6 2 -8 -.1 -9 -2.9 -6 2.2 -4 -.3 -2.8 -1.7 -.1 -1 3.6 -2 .5 -1 12.2 -4 -2.4 -3.3 -2 1.6 -6 0 -4.2 -2.3zM1382.1 762.5l13.4 -1 15 .2 4.4 .8 -.4 1 -3 1.1 -18 .7 -10.5 -1.8zM1132.5 764.5l1 -1.5 2 -.6 2.9 2.1 0 1 -2.9 1.6 -2 -.9zM1150.7 762.5l-.2 1.3 -2 1.8 -3 .6 -2.4 -.7 .5 -1 4.9 -2.3zM973.5 765.4l.8 2.1 -2.4 10 -1.4 .5 -.3 -1.5 2 -10zM1443.5 765.5l9.9 0 2.7 1 .1 1 -8.7 0 -3.3 -1zM1258.7 767.5l2.8 -.7 13 -.3 10 1.8 13 -1.1 8.3 1.3 -.2 1 -21.1 -.7 -14 3.5zM981.5 768.1l1.2 1.4 -1.2 2.2zM1133.3 769.5l2.2 -.9 1 .4 .2 1.5 -1.2 1.2 -1 -.2zM1141.5 769.3l4 0 2.5 2.2 -.3 2 -2.2 2.5 -2 1 -3 -.1 -2 -1.4 0 -3zM1533 771.5l1.5 -1 7.6 0 4.3 1 1.9 1 .2 1 -10.1 0 -4.4 -1zM1355.5 778.5l.4 -1 13.4 -3 -2.1 -2 18.9 0 -.7 1 -4.9 1.8 .7 2.2 -.7 1.1 -9.5 .9 3.1 3 -2.6 1 -7 .3 -5 -.7 -2.9 -1.6zM1458.5 774.5l0 -1 2 -.9 5 -.4 22.7 2.3 -.6 1 -19.1 .1zM1253 774.5l3.5 -1.4 13 -.4 2 .8 -.3 1 -10.7 1.8 -6 -.7zM1434.4 776.5l.8 -1 5.1 1zM1389.7 779.5l.8 -1 3 -1 7 .1 2 1.9 -3 2 -4 .6 -4 -1.1zM1454.6 779.5l3.9 -1.2 14 .3 7.7 .9 2.8 2 -25.5 -.8zM1441.7 782.5l.8 -1 2 -.1 3.2 .1 1.6 1 -3.8 .6zM1753.6 781.5l6.2 0 2.8 1 -2.1 .6zM1521.2 785.5l5.5 0 -2.2 .7zM1755 786.5l7.5 -.8 5.2 .8 1.3 1 -12.9 0zM1524.4 790.5l3.1 -.5 2.7 .5zM1457 792.5l1.5 -1 8 -.6 4 .5 1.2 1.1 -.2 1 -3 .3 -7.1 -.3zM1485.2 797.5l1.3 -.1 3.3 -2.9 -2 -3 3.7 -.6 6.6 .6 8.4 2.7 15 2.2 10 -1.1 17 1.3 7.9 2.9 -12.9 1.5 -14 -.6 -10 -2.1 -10 1.1zM1712.4 795.5l-.9 1 -15.3 2 -17.7 .6 -10 1.1 -5 -.1 -5.1 -1.6 .1 -1 5 -1.7 14 1.1 9.7 -1.4 -.1 -1 -1.7 -1 .9 -1 3.2 -.3 11.5 .3zM1561.1 795.5l1.6 -1 15.8 -1.4 9 .6 3.4 .8 .6 1 -1.8 1 2.3 1 6.5 1.2 5 -.3 6.7 2.1 -.5 1 -3.1 1 4 2 -6.1 1.8 -16 -.2 -5.9 1.4 -1.1 1 -11 -.4 -2.5 -1.6 .7 -1 16.8 -.6 3.9 -1.4 -.4 -1 -4.5 -2.2 -9 .8 -5.9 -.6 -6.1 -2.8zM1602.5 802.5l-5 -1 -5 1 5 1.5zM1466.1 798.5l1 -1 5.4 -.8 11 .8 -.8 1 -5.2 .7zM1612.3 797.5l3.2 -.9 3.1 .9zM1639.4 798.5l1.1 -1 5.3 0 0 1 -1.3 .6zM1722.5 799.5l2 -.7 9.8 .7 1.2 2.1 5 .7 10.8 -.8 -4 -1 -.9 -1 16 1 -9.9 1.8 5 2.2 -1.9 1 -10.1 1.1 -8 2 -11.1 -2.1 -.1 -1 3.1 -2 -.1 -1zM1803.2 802.5l4.3 -1.1 0 2.2zM1799.3 808.5l8.2 -1.6 0 4.1 -6 -.7 -2 -.8z"/>
<path fill="#009c99" d="M428.5 651.5l1 -2.7 1 .4 4 19.4 2 6.3 1 .4 1 -1.9 2 -7.4 1 1.2 4 26.6 2 7 2 3.3 1 .1 1 -1.9 3 -22.6 2.6 24.8 1.4 4.1 2 .4 2 -4.3 1.6 -13.2 3.4 -87.7 1 0 3.1 80.7 1.9 14.3 1 1.1 1 -.9 2 -5.5 2 -11.8 2 -33 1 -.9 1 5.1 1.1 -3.4 7.9 -99.8 3 -26.7 2 -7.3 3 18.2 3 32.1 8 117.6 1 -2.5 5 -85.8 2 -16.9 3 41.8 5 105.1 3 -30 1 .4 3.5 52.8 1.5 12.6 1 2.8 6.5 8.6 1.5 1 1 -.5 2 -3.8 2 -8 4.3 -28.7 5.7 -94.4 2 -18.9 4 46.8 1 3.8 1 -.8 2 -15.2 3 -49.1 1 -5.7 4 49.4 1 -4.6 4 -65.8 1 -5.2 4 57.3 1 .9 4 -52 4 53.6 1 6.4 1 1.1 1 -2.9 1 -9.7 5 -98.6 1 4.4 2 37 1 5.7 3 -49.9 3 55.7 1 2.6 4 -75 1 4 2 23.5 4 -72.5 2 19.9 1 .7 3 -23.2 1 0 5 43.6 5 77.8 1 5.5 3 -28.4 1 2.5 7 136.1 1 -3.2 1 1.1 1 6.8 1 -6.5 5 -142 1 -4.9 1 5 2 49.3 1 -9 1.4 -41 1.6 -16.1 2 23.8 1 1 2 -12.1 1 -.4 1.6 8.8 1.7 29 2.1 15 2 33 1.6 11 0 12 1.8 12 1.8 43 1.4 7.6 1 -1.7 1 -6 1 -.3 1 3.9 1 -.3 1.2 -6.2 3.3 -52 2.7 -20 1.7 -7 -.3 -11 1.5 -22 1.3 -10 1.6 -4.3 1.1 2.3 1.2 7 1.4 33 2.2 18 -.9 5.1 2.4 8.9 1.6 13 -.6 10 2.6 3 2.4 -7 -.9 -4 .4 -8 1.1 -5.8 1 1.9 .7 8.9 -.9 6 1.3 3 1.3 12 2.6 49.2 2 -18.6 1 -1 1 2.7 3 -20.5 2.1 -3.8 -.1 -1.9 -1 -.4 -.1 -8.7 1.5 -16 1.6 -4.7 1.1 4.7 .8 14 3.1 13.7 3 -25.3 1 .9 1.1 8.7 1.3 38 -.7 5 1.5 13 -1.3 5 1.1 2.5 1 .8 .9 -2.3 0 -8 5.3 -25 -1 -5 1.8 -23.6 1 -.5 2 17 .4 12.1 3.3 23 -1.3 6 2.6 10.6 1 .7 1.7 -14.3 .3 -18 2 -23.9 1 5 4 58.8 2.8 -8.9 -.6 -8 .8 -6.9 1 -1.5 1.2 15.4 1.8 9.4 1.9 -11.4 -.1 -11 2.2 -33.3 1 .6 .8 7.7 -.4 12 2.6 17.5 1 -2.1 1.5 -6.4 -.1 -12 2.6 -23.4 1.1 -2.6 1.1 12 .8 3 1 -.3 1.8 -15.7 2.6 -8 -1.9 -3 .2 -6 2.3 -7 1.2 1 1.1 8 2.7 8.4 1 .7 1 -1 4.6 54.9 -.4 10 1.8 3.2 1 -.9 1 -4.2 1 -.8 3 24.2 3.7 -31.5 .3 -13 2 -16.6 3 24 1 -.3 1.6 -6.1 1.4 -16.8 1 1.4 3 37.3 1 1.3 1.8 -12.2 2.4 -8 -1 -7 2 -10 .8 -11 2 -7.2 1 .1 1.7 6.1 2.3 20.4 1 2.1 1 -2.2 4 26 1 -2.5 2 -14 1 -1.3 3 10.7 2 -.8 .6 -1.4 -.7 -7 1.1 -1.5 3.6 9.5 2.1 15 1.3 2.8 2 10.9 1 -3.2 3 -24.7 4 31.1 1 -2.2 2 -12.2 1.4 -1.5 .6 -4.1 .8 3.1 -.8 4 4 18.8 1.4 -8.8 1.4 -19 1.2 -3.8 1 1.4 1 4.4 .9 12 -.4 6 1.5 6.2 1 -.5 1 -2.2 1 .4 2 3.3 1.5 -4.2 .5 -6.1 1.3 -4.9 -.8 -8 .5 -3.1 1 -.6 1.1 5.7 -.6 13 2.1 6 -.2 10 .6 2.4 3 -7.4 -1.8 -5 2.1 -10 -1.1 -7 1.8 -9.7 2.3 8.7 1.4 24 1.3 1.8 2 -2.8 3 2.2 1 -.6 2.3 -7.6 -.9 -3 .2 -3 1.4 -2.9 1 -.3 1.6 3.2 .1 5 -2.7 2 5 9.7 1.5 -3.7 .4 -17 1.1 -4.7 1 -1.9 1 -.3 2.3 1.9 1.7 3.2 2 -3.3 1 -.4 1.7 3.5 -1.7 8.5 -1 .5 -2 -6 -3.1 10 2.9 10 2.2 .1 3 1.5 1 -.6 1 -2 -.8 -5 .8 -8 2 -2.8 2.3 -.2 1.7 2 1 5 -3 7 0 2 2.8 2 1.2 2.7 .9 -.7 -1.9 -2 .7 -3 2.3 -1.9 2.4 .9 1.1 2 0 4 5.5 6.1 2 8.3 1 -1.1 1.2 -7.3 -3.3 -4 -.3 -4 -2.9 -7 2.3 -3.9 4 4.3 4.9 -4.4 -.9 -.1 -3.2 -3.9 -.6 -6 2.4 -7 -.5 -5 .9 -2.5 1 -.1 1.1 3.6 -1.7 4 2 5 .4 4 2.2 2 3 -2 1 .5 1 5.3 2 1.9 2.2 -3.7 1.8 -17.3 1 -1.2 .9 2.5 .2 7 1.6 8 -.4 4 -1.8 3 2.1 5 -2.3 4 1.1 3 -.1 2 -1.3 2.2 -1 .2 -2.1 -1.4 -1.1 -2 1.6 -4 -1.4 -2.4 -2 -.8 -1.7 2.2 1.4 4 -.4 2 -1.3 1.2 -3 .3 -1.2 1.5 .8 2 3.4 1.9 2 3.7 2 1.3 4 -.1 3 2 1.3 -.8 2.7 -11 -1 -4 1 -4 -1.7 -4 0 -4 1.7 -2.5 4 -1 1.8 -5.5 -.8 -2 -1 -.3 -3 4.6 -1.1 -.3 -.9 -4 2 -3.9 3 .8 3 -1.3 .3 4.4 4.4 2 -2.8 18 2.1 3.7 5.3 1.3 1.7 1.4 .1 -4.4 -2.2 -3 .5 -2 -2 -4 3.1 -5 .3 -2 -3.9 -5 1.3 -2 2.8 -1.4 6 6.2 2 -.9 1.3 -2.9 .1 -3 -3.4 -7 4 -2.6 2.6 1.6 .6 6 4 4 -.2 1.5 -3 1.7 -1.1 1.8 1.1 10.3 2.4 .7 5.4 -5 -3.1 -3 .3 -2.1 2.5 1.1 1.5 2.7 2.7 .3 -2.8 1 -.9 5 -2.4 4 .9 3 1.5 1.7 3 1 1 -.7 -.1 -4 1.1 -1.3 2 -1.1 4 .5 1.4 -1.1 .3 -3 -3.4 -7 .5 -5 10.2 -.1 8 1.7 6.7 7.4 -2.1 5 -1.6 1.2 -3 -2.5 -5 -2.6 -2 -4.4 -2 .6 -3 3.7 0 2 2 1.7 7 1.1 5 4.1 1.6 3.1 1.4 .5 1.1 -.5 -.3 -3 2.2 -1.8 6 -1.5 3.9 2.3 -6.9 4.8 -3.4 .2 .4 3.3 -2.5 3.7 .4 1 1.1 .2 5 -4.3 4 3 .6 -.9 -.5 -3 5.9 -3.8 1.6 -2.2 2.2 -8 -.8 -.4 -3 1.3 -2 -.2 -3 -5 -5 1.1 -5 -4.7 -1 -2.5 3 -2.9 5 .9 1.6 -1.6 .9 -8 -1 -5 3.3 -2 6.9 -1 -.5 -2 1.3 -4 -1.5 -3.3 -.1 -2.7 1.2 -2 2.9 -.9 6 .3 6.1 3.6 0 1 -6.1 -1 -2.7 2 -.7 2 3.4 2.1 5 4.9 .7 2 -.4 2 2.5 3 -1 2 -4.8 3.7 -3 -.1 -3 -2.1 -3.5 2.5 -.5 4 3.3 3 -.2 1 -3 2 -.3 5 6.2 -3.3 2 .6 2 2.1 1.7 -2.4 .6 -4 5.7 -2.6 3 1.2 2.9 2.4 .1 4.8 4 -2 4 .5 10 -2.1 1 .8 1 3.4 1 .3 2 -5.7 3 -.6 4.3 2.6 -3.3 2.5 -.6 1.5 3.6 3.5 2.1 3.5 -2.1 2.7 -5 1.4 1 .7 4 -1.1 5 3.7 5 -.7 5 1.9 4.8 .4 1.3 1 .9 2 1.8 -2 1.2 -.2 2 3 9 -3.3 6.3 -5.5 3.7 -1.2 8.3 -.8 3.6 -3 8.4 0 -2.9 2 -.2 1 1 1 -4.6 2 4.4 1.7 4 -1.8 7 .2 3.7 -1.1 .3 -1 -6.1 -4 4.1 -1.4 16.1 -1.6 8.9 0 3.1 1 -.4 2 -2.7 2.2 -6.4 2.8 -1.2 1 .3 1 14.2 8 -.9 .6 -11 -.2 -6.2 1.6 .3 1 9.6 2 -.3 3 1.6 .6 3 0 2 -1 .9 -1.6 -.1 -3 2.2 -1.8 17 .1 4.4 -1.3 -6.7 -2 -1.1 -1 2.4 -2 -11 .5 -7.6 -1.5 -1.3 -1 -.1 -1 1.3 -2 5.7 -.8 17 .1 5 -1.3 -21 -2.2 -1.5 -.8 -1.2 -2 .5 -3 -5.2 -3 5.8 -2 33.6 -5.8 4 .6 2.6 1.2 -4.6 4.2 -19 1.3 -5 1.5 -.8 1 1.1 1 6.7 1.7 13 -.3 3.8 -1.4 1.2 -3.8 1 -.6 12.1 .4 2.7 -1 -.2 -1 1.1 -1 2.3 -.3 12.7 .3 5.5 1 1.3 1 -2.5 2 -6.3 1 7.3 1.9 4.4 2.1 -6.4 1 -10 -.5 -2 -2.1 -2 -.4 -3 .9 -1 1.2 .3 .9 2.7 .9 12 1.8 5 2.7 3 .1 3.9 -1.5 1.4 -2 -1.1 -2 5.8 -.5 10.4 .5 1.2 3 6.4 3.8 2 .3 4.2 -1.1 .6 -1 -1.2 -1 .1 -1 12.3 -3.1 16 1.9 12 -1.3 8 .4 1.8 1.1 .6 2 -7.4 1.4 -9 -.2 -7 -2.7 -13 2.2 -5.9 3.3 -.1 1.1 3.7 1.9 -3.9 2 2.2 1.3 5 1.2 11 -.3 6.7 .8 .9 1 -1.7 1 .4 1 7.7 1 4.5 -1 -3.2 -2 2.7 -.7 9 2.6 5.7 -.9 0 -1 -3.7 -1.7 -10 -.8 -1.2 -1.5 2.2 -1.2 14.4 .2 6.4 3 2.4 2 -.3 1 -3.9 1.3 -2 1.5 -2.4 4.2 1.4 .5 3.8 -.5 3.3 -3 5.9 -1.4 8.7 .4 7.3 1.5 1.5 -2.5 8.5 -.4 3.4 .4 2.8 2 3.8 .7 3.8 -1.7 -.2 -2 .8 -1 7 -1 11.6 .8 6 2.1 1 2.7 2 .7 6.5 -1.3 .6 -1 -.5 -1 1.4 -1 7 .6 4 -1.2 12 -.7 4 .7 .7 .6 -.4 1 -2.3 1.4 -3 -.4 -3.8 1 2.8 .5 28 0 10.6 1.5 -9 4 -.2 1 2.6 1 4 -.5 4 1.5 2.9 -1 -1.4 -3 -2.8 -2 .3 -.6 19 .2 12 2.5 8.9 -2.1 7.1 -.4 12.8 3.4 -7.2 2 2.5 1 16.9 1.4 2.8 -2.4 -3.5 -2 -.3 -1 1 -1 -.7 -1 -18.3 -3.3 -13 -.6 -4.8 -2.1 -.7 -1 2.5 -1.2 15 -1.9 17 .6 6 1.5 3.2 2 .5 1 -8.7 -.2 -5.5 1.2 3.5 1.3 16 .7 16 -3.3 6 -.4 5 .7 2.2 2 0 1 -23.6 4 -.9 1 4.3 .9 14 -.3 10 1.4 35 -3 15 1.9 13 -2.4 9 3.3 13 .6 7.2 -1.4 -.8 -1 4.6 -.6 0 6.2 -35.8 -.6 2.7 -1 -3.3 -1 -17.6 -1.1 -19 2 -1.4 1.1 -32.6 1 -34 -.5 -15 .6 -14 -.7 -17 .9 -30 -.7 -22 .8 -54 -.3 -9 .8 -256 3.3 -152 5.1 -20 1.3 -35 4 -42 -.5 -68 1.8 -12 1.8 -15 4.1 -34 13.7 -7 .6 -17 -1.3 -9 1.5 -8.2 3.7 -14.8 10.5 -5 1.9 -5 .1 -15 -3.4 -14 -1.2 -16 .5 -12 2.3 -8 3.4 -7 4.4 -16 15.1 -4 2.7 -4 .6 -9 -3.4 -4 -.2 -5 3.2 -9 11.1 -5 3.8 -4 .6 -10 -2 -6 1.7 -6 5.5 -5.4 8.8 -63.1 0 -3.5 -2.8 -6 -3 -20 -5.9 -8 -4.6 -4 -5.9 -1 .3 -4 13.7 -1 .4 -4 -20.8 -2 -5.5 -3 .5 -1 -1.1 -1 .3 -2 2.5 -1 -.3 -4 -4.3 -1 .1 -4 9.2 -1 -.1 -3 -11.6 -1 .2 -1 6.4 -1.4 32.3 -15.2 0 -1.4 -9 -1 .8 -1 8.2 -7.8 0 -1.2 -33.6 -2 -16.1 -1 -.7 -1 1.4 -4 11 -4 30.9 -1 -.4 -3 -30.9 -2 -9.9 -1 .3 -1.5 10 -1.6 38 -11.6 0 -2.3 -38.2 -1.7 -8.8 -2.2 -5 -3.1 -4.8 -1 -.7 -1 .8 -2 9.7 -2 21.3zM676.5 568.9l-.1 2.6 1.1 1.9 0 -3.2zM945.5 800.5l-1.2 1 -.6 2 2.8 2.8 1.1 -.8 -1.2 -2 2.1 -.5 .5 -1.5 -.5 -.7zM952.5 795l0 1.6 2.3 -.1 -.3 -1.3 -1 -.6zM958.2 796.5l-.5 1 .8 1.1 2.2 -.1 .3 -1 -.9 -1zM973.5 805.7l-.7 .8 .7 .9 .8 -.9zM992.5 777.2l-3 2.3 1.9 4 -.2 3 1.3 1 1.2 -8zM1009 813.5l1.5 .9 1.3 -.9 -.1 -1 -1.2 -.7zM1021.5 801.9l-.8 1.6 .8 1.9 1 -.9zM1023.5 808l.1 2.5 .9 .6 .3 -2.6zM1031.4 788.5l.1 2 1 1 3 .8 1.7 -.8 0 -2 -1.7 -1.6 -2 -.4zM1044.8 801.5l-1.3 -3.3 -2 -1 -2 .5 -4 2.7 -5.1 -1.9 1.1 3 2 1.3 5 -1.5 2.2 .2 .6 1 -1.7 3 1.9 1.4 1 -.6zM1051.5 801.2l-1.3 1.3 .8 4 -2.1 2 .6 .9 4.1 -4.9 -.2 -2zM1058.5 799.6l-1 .3 -.9 1.6 -.1 2 1 1.4 1 -.7 .9 -2.7zM1065.5 798.2l-1.1 1.3 1.1 1.3 1 -1.3zM1075.4 805.5l-4.7 -1 -1.4 1 .2 2.5zM1096.1 775.5l.4 1.4 3 1.4 3 .2 2.9 -1 -2.9 -2 -3 .7zM1106.5 759.9l-1 .8 0 1.4 2.4 -.6zM1107.4 797.5l1.1 1.1 1.9 -1.1 -1.9 -.8zM1134.5 795.7l-1.3 .8 .3 1.9 1.4 -.9 .3 -1zM1135.8 789.5l-.4 1 3.3 3 -1.6 2 .7 1 1.7 .6 4 -1.5 3 .9 1.1 -1 -.8 -2 -3.3 -3.4 -5 -1.5zM1155.5 801l-1.8 .5 -1.4 4 1.2 1 3 -2 0 -2zM1180.1 806.5l1.4 3.3 3 1.1 4.9 -3.4 -7.9 -1.6zM1235.1 800.5l-10.6 -1.9 -4.5 2.9 -9.9 2 -1.6 1 2 .8 11 .9 1.5 -.7 -.6 -2 1.1 -.9zM1268.9 812.5l4.6 .6 1.8 -.6 -2.8 -.7zM1307.4 795.5l-4.9 -.8 -11.3 2.8 11.3 .3 4.8 -1.3zM1310.9 790.5l1.1 2 1.5 .8 7 .6 4.1 2.6 2.9 .6 9 -.4 2 -.9 .7 -1.3 -1.3 -1 -16.4 -.3 -7 -3.5zM1354.3 799.5l5.8 3 -.1 2 3.5 1.5 15.6 -2.5 -6.6 -2.4 -11 -2.1 -5 -.2zM1364.5 795.5l4 1.2 3.8 -.2 -.3 -1 -1.5 -.2zM1391.1 810.5l4.4 1.1 6.5 -1.1 -5.5 -.9zM1411.3 812.5l2.2 .8 1.3 -.8 -2.3 -.7zM1516.8 811.5l1.7 1.1 3 -1.1 -2 -.7zM1567 817.5l-1.5 -1.2 -2.2 1.2 2.2 .8zM1581.1 818.5l4.4 .6 2.8 -.6 -2.8 -1.4 -3 .3zM1631.9 815.5l5 1 .4 -1 -2.8 -.8zM1225 813.5l2.5 1 2 -1 -2 -1.4zM1332.6 801.5l.8 2 2.1 1.5 3.3 -.5 .2 -1 -3.5 -2.7 -2 -.1zM1371.5 811.5l4 2.5 2 -.5 .7 -1 -1.7 -.9zM1039.5 718.5l1.2 2 .5 9 -.7 2.6 -1.9 -5.6zM1106.5 718.5l.6 1 -2.6 2.2 -1.1 -.2 -.5 -1 .6 -1.4zM1019.5 721.8l1 .1 0 3.3 -1 .2zM1093.8 732.5l1.7 -1 2.9 2 -1.2 1 -1.7 0 -1.6 -1zM1089.5 738.3l4.8 1.2 2.3 2 -1 4 -4.1 2.5 -2.2 2.5 .3 4 2.1 3 .3 4 1.5 3 -.6 2 -1.4 1.2 -2 -.6 -1 -1.4 -.4 -4.2 -5.7 -9 -2.4 -7 4.7 -5zM963.5 740.3l1.2 2.2 -1.2 2.6 -1.1 -2.6zM973.5 746.3l.8 2.2 -.1 4 -.7 1.7 -1 0 -1 -4.2zM1072.5 745.9l2 -.3 2.5 .9 -.8 3 -2.7 2 -1.4 0 -1 -1 .3 -3zM1004.5 746.9l1.1 1.6 -1.1 2.9 -1 -1.9zM1038.8 749.5l2 1 -.3 3 -1 .1 -1.1 -1.1 -.3 -2zM963.5 749.8l2 1.6 1 3.1 -1.8 6 .7 7 -.9 1.6 -2 .7 -1.9 -1.3 -.8 -2 2.3 -7 -.6 -6.9zM1152.2 752.5l.3 -1 2 -.8 3.6 .8 -3.6 1.8zM949.5 754.6l1 .8 .5 2.1 -.5 2.6 -1 .6 -1.3 -3.2 .3 -2.1zM1030.5 754.5l2.3 4 -1 2 -1.3 .6 -1.4 -2.6 .4 -3zM1078.5 758l2 -.5 1.5 1 1.5 6.5 -2 -.3 -3.8 -5.2zM995.5 760.8l1 0 .3 .7 -.3 3.9 -1.1 -.9zM1053.9 761.5l3 0 5.1 3 -1.9 7 -3.6 .7 -3.7 -1.7 -.7 -5zM1065.4 763.5l2.1 -2.7 1 -.2 3.7 1.9 .7 2 -2.1 2 -3.3 .2 -1.7 -1.2zM1180.5 762.5l1.9 -1 8.1 -.5 .8 1.5 -1.8 1.7 -3 .3 -4 -.5zM1178.5 773.6l7.6 -4.1 10.4 -2.6 -3 -2 -.6 -1.4 1.6 -2.1 3 -.6 8 2.5 13 5.6 19.6 3.6 4.4 3 -1.9 2 .3 1 4.5 3 .4 1 -1.3 1 -5 1.3 -6 -.6 -5 -3 -7.8 -1.7 .5 -1 5.6 -2 1.4 -1 -4.7 -1.4 -11 .2 -1 -1.9 -1.4 1.1 1.3 1 -.9 1 -8 1.5 -4.4 -.5 -7.6 -2.8 -6 2.3 -3 0 -3 -1.4zM1387.8 763.5l.6 -1 20.1 .2 3.4 .8 -7.4 1.1 -10.8 -.1zM1133.1 764.5l2.4 -1.4 2.3 1.4 -.1 1 -3.2 .6zM1149.5 763.5l-1.9 2 -3.5 0 .5 -1 2.3 -1zM1175 767.5l-.6 1 -5.9 1.5 -1.7 1.5 -.8 2 1.5 4 -1 1 -3.4 0 -1.7 -1 .4 -2 -1.4 -5 2.1 -2.4 8 -1.7zM1260.9 767.5l13.6 -.6 7.4 1.6 -3.9 2 -6.5 1 -7.1 -2zM1288.2 768.5l8.3 -.8 6.5 .8zM1141.5 769.6l3.4 -.1 2.6 2 -.2 2 -2.8 2.7 -4 .1 -2 -1.6 .8 -3.2zM1382.5 773.5l-4.2 1 2.2 3 -.9 1 -9.9 1 3.6 3 -10.8 .9 -5.3 -1.9 1.4 -4 14.1 -3 -1 -1 1.1 -1 7.7 0zM1254.9 774.5l2.4 -1 3.2 -.1 7.1 .1 1.6 1 -8.7 1.4 -4.6 -.4zM1460 773.5l5.5 -.7 19.3 1.7 -11.3 .9 -13 -.8zM933.5 777.6l1.1 1.9 -1.1 2.1 -1 -2.1zM1390.7 779.5l.8 -1 5 -1 4 .7 .9 1.3 -1 1 -3.9 .9 -4 -.7zM1456.4 779.5l7.1 -.9 14 .9 2.9 1 -1.9 .6 -16 -.6zM1202.3 787.5l-1.6 2 -7.5 5 -6.7 1.3 -6 -1.3 -1.2 -1 4.3 -2 -.8 -1 -4.3 .5 -3 -1.2 -3 1.8 -3 .4 -4 -.7 -1.3 -1.8 6.2 -3 2.9 -3 11.2 .1 6 -2.2 4 .9 2 2.2 3 -1.6 1 .2zM1460.7 792.5l1.5 -1 4.3 -.2 2.3 .2 1.2 1 -3.5 .7zM1489.6 796.5l1.5 -2 -1 -3 3.4 -.2 11 2.8 16 2.7 9 -1.1 7 .1 13 1.6 2.6 1.1 .5 1 -7.1 .9 -13 -.1 -12 -2.4 -12 1 -16 -1.5zM1710.5 795.5l-1.5 1 -17.5 2.2 -25 1.1 -6.8 -1.3 .1 -1 4.7 -1.3 14 1 11.1 -1.7 -2.6 -2 2.5 -1.1 9 .1zM1563.4 795.5l15.1 -1.7 9.5 .7 .7 1 -1.8 1 1.1 1 10.5 1.4 5 -.1 4.7 1.7 -1.2 1 -2.5 .4 -7 -.7 -6 .8 -7 -2.4 -11 .9 -9 -2.9zM1468.6 798.5l.8 -1 4.1 -.3 3.3 .3 1.7 1zM1724.5 799.5l7 -.1 1.8 1.1 -1.8 1.2 -6.2 -1.2zM1728.7 805.5l2.8 -2.3 3 -.6 16 .3 5.7 1.6 -2.8 1 -15.9 1.8 -7.6 -.8zM1592 804.5l11.5 -.9 4.2 .9 -5.2 1zM1569.1 806.5l1.6 -1 2.8 -.1 8.7 1.1 -8.7 .8zM1801 808.5l6.5 -1.2 0 3.2 -6 -.9z"/>
<path fill="#00aa90" d="M428.5 669.1l1 -2.8 1 .3 4 19.7 2 6.2 1 .2 3 -9.5 1 1.2 4 25.7 3 8.5 2 1.5 1 -1.2 3 -12.6 3 16.4 1 1.6 2 .5 2 -2.9 1.9 -11.4 3.1 -61.5 1 -.1 3 58 2 9.7 1 .3 1 -1.2 2 -5 1.9 -9.2 2.1 -24 1 -1.9 1 2.2 2 -9.8 8 -99.6 2 -17.8 2 -7.7 2 10.7 3 30.7 6.7 103.2 2.3 22.1 1 -.7 1 -11.5 4 -78.2 2 -17.2 3 43.2 4 96.8 1 1.6 3 -33.9 1 .3 3.1 45.5 1.6 13 1.3 3.1 6 6.3 2 1.2 1 -.6 2 -3.7 2 -7.5 4.6 -28.8 5.4 -84.9 2 -18.3 4 43.5 1 3.2 1 -.8 2 -13.8 3 -46.6 1 -5.4 4 46.3 1 -4.2 4 -62.7 1 -5.1 4 54.1 1 .1 4 -50.1 4 50.8 1 5.6 1 .8 1 -2.9 1.2 -11.6 4.8 -92.6 1 4.3 2 35.6 1 5 3 -48.7 3 54 1 2.4 4 -73.2 1 3.9 2 23 4 -69.7 2 19.3 1 1.2 3 -21.8 1 0 5 41.7 5 76.5 1 4.7 3 -27.8 1 5.3 7 129.4 1 -4.8 1 .5 1 9.6 1 -4.5 3.8 -109.3 2.2 -42.9 3 55 1 -4.1 .9 -28 1.1 -10 0 -13.4 1 -5.6 1 13 -.5 6 1.5 5.9 1 1.6 1.9 -2.5 .1 -13.4 1 -.9 .8 14.3 3.8 30 2 33 1.7 13 -.1 8 1.8 10 1.7 45 1.8 12 .5 13.9 1.1 -1.9 -.8 -6 1.7 -12.8 1 -.7 1 5.9 1 .2 1.8 -12.6 3.6 -53 2.6 -19.9 1.7 -6.1 0 -16 1.9 -21 1.4 -5.4 1.3 6.4 3 41 .2 13 2.2 9 1.4 11 -.3 12 3.2 7.8 2.4 -10.8 .6 -.7 1 .2 1 3.8 4 64.6 1.1 -5.9 .9 -13.7 1 -1.1 1 9.2 3 -28.4 4.4 -13 -.3 -2 -1.1 .6 -.9 -.6 .1 -9 1.8 -7.5 1.3 13.5 1.7 5.7 2 15.8 3 -29.6 1 .2 2 33.4 -.7 12.5 1.2 12 -.9 6 2.4 5.3 1.8 -4.3 4.9 -33 0 -15 1.3 -5.9 1.5 12.9 .1 8 2.5 18 -.4 11 4.3 16.5 2.1 -18.5 .5 -19 1.4 -12.2 1 4.6 4 53.8 1.7 -9.2 2 -6 -.8 -8 1.1 -4.5 .2 11.5 2.8 16.9 2.2 -18.9 -.1 -10 1.9 -29.9 1 .4 0 15.5 3 22.2 3.1 -13.2 -.1 -13 3 -17.7 .7 6.7 1.3 3.7 1 .1 2.8 -19.8 3.1 -10 1.1 -.7 3 10.3 1 1.2 1 -1.2 4.1 50.4 -.4 10 2.3 6.1 1 -1.3 1 -5 1 -.5 3 25.8 1 -3.6 3.2 -32.5 .3 -12 1.5 -8.3 3 19.7 1 -.4 2.6 -10 .4 -12.4 .8 2.4 .3 11 2.5 23 -.3 8 .7 2.4 2.3 -11.4 .9 -11 2.4 -10 -.1 -9 2.3 -19 1.2 -4.3 1 .6 1 3.8 3 25.1 1 1.9 1 -1.6 2 6.8 2 18.6 1 -1.8 1.6 -16.1 1.4 -3.5 2.3 10.5 .7 7.7 1.1 -.7 .4 -7 2.5 -5.1 1 .5 2 7.8 .8 11.8 2.2 2.6 2 13.2 4 -24.4 4 26.2 1 -2.2 2 -13 1 -1.4 1.6 4 3.4 19.4 .8 -2.4 3.2 -31.3 1.3 3.3 1.1 12 -.3 6 1.9 11.6 2 -6.2 1 .3 2 9 .5 -6.7 2 -6 .5 -5.9 1 -2.4 -.1 5.3 1.9 6 .2 12 1 3.8 1.6 -6.8 1.9 -4 -1.6 -6 1.8 -9 -1 -7 1.3 -4.5 1 .8 1 3.7 1 23 1 3.7 1 .5 2 -4.4 3 2.6 1 -.5 1.6 -5.9 1.4 -.9 1.9 2.9 3.1 9.3 1 -.8 1 -6.1 .5 -19.4 1.3 -3 1.2 -.9 2.5 1.9 .9 3 -3 12 2.3 6 .3 4 1 1.2 2 -.7 3 1.6 1 -.6 1.4 -2.5 -.8 -5 .7 -8 1.7 -2.4 2 -.3 1.6 1.7 .9 5 -2.9 7 0 2 3.4 4.7 2 .6 1 -.3 -.2 -1 -2.1 -2 -.2 -2 2.5 -2.7 2.2 .7 1.3 3 -.6 3 6.1 6.5 2 8.8 1 -.8 .9 -6.5 1.3 -2 -1.2 -2 -3 -2.5 -.2 -4.5 -2.5 -5 .5 -3 1.2 -1.3 2.1 2.3 .9 6.7 1.6 -1.7 .5 -4 2.9 -2.6 1.8 1.6 .3 5 1.9 .9 1.2 -1.9 .4 -7 -.6 -2.2 -1 -1.3 -4 2.4 -2.8 -2.9 -.6 -7 1 -3 1.4 -2 2.2 4 .2 4 2.6 2.9 3 -2.5 1 .5 .7 5.1 2.3 3 1 -.5 1.5 -4.5 1.5 -15 1 -2.1 .7 8.1 1.6 7 -.4 5 -2 3 2.3 5 -2.1 4 1 3 -.2 2 -1.9 1.9 -2 -1.4 -.6 -2.5 1.4 -3 -1.8 -2.9 -2 -.8 -1.9 1.7 1.3 6 -1.4 2 -4 .4 -.6 1.6 .6 2 3.6 2 3.4 4.7 5 .5 4 2.2 1.5 -7.4 2 -5 -1.1 -4 1 -4 -2 -5 .3 -3 1.3 -1.9 4 -1 2.7 -6.1 2.3 -.8 1.7 .8 .6 2 -3 15 1 3 1.7 2 6.2 2 2.8 5.2 2.9 1.8 -1.6 4 .7 .3 2 -1.9 1.6 -.4 .7 -1 -1.3 -1 3 -2.1 1.5 1.1 -2.3 3 2.8 1.5 1 -.4 2.6 -5.1 -1 -3 -2.6 -1.6 -6 3.1 -3.8 -1.5 -1.4 -2 -.3 -4 -2 -3 .4 -2 -2 -4 3.3 -6 -2.9 -5 .8 -3 1.9 -1 1 .5 5 6.5 1 0 2 -2.9 .6 -5.1 -2.7 -7 3.1 -2.2 2.6 2.2 .7 6 3.1 3 .1 1 -2.5 1.8 -1.5 2.2 .7 10 1.8 1.9 2 0 2.3 -2.9 1.7 -.8 .2 2.8 -1.7 2 -.6 2 2.1 4.1 2 1.6 3 .3 1 -5.7 2 -.8 4 0 1.9 -1.5 .6 -3 -3.8 -8 .3 -2.8 1 -1.1 8 0 8 1.6 6.9 6.3 .3 1 -2.2 5.1 -2 .1 -2 -1.9 -4 -1.8 -1.1 -1.5 -.4 -3 -1.5 -1.2 -4.3 3.2 -1.3 2 -.3 2 2.9 2.2 7 1 6.1 6.8 3.9 1.2 .9 2.8 -2.7 4 .8 1.3 1 .1 5 -4 4.4 2.6 .1 -4 7.1 -5 4 -11 5.4 -3 2.4 1 1.6 2.3 2 -2.3 1.3 -5 4.7 -1.9 4 1.6 1.9 2.3 -.9 3.5 -2.1 1.5 .1 1.4 6 -3.2 6.4 -.2 7.6 -2.1 1.1 .1 1.9 4 1 .4 2 -5.2 1 -.9 2 -.1 2.2 1.8 -2.7 3 .1 2 3.4 2.8 2.3 3.2 -2.3 2.4 -4 .7 -.7 .9 .5 1 5.2 .1 5 2.7 5 -.7 4 1.6 5 .5 1.6 .8 .4 2.1 4 0 2 1.1 8.7 -3.2 6.3 -5.4 4 -1.6 10 .2 3.6 2.8 4.4 1.5 5 -2 6 -.2 4.5 -1.3 .2 -1 -5.4 -4 2.7 -1 18 -1.9 8 .5 1.6 1.4 -1.5 2 -9.6 5 1.5 2 11.4 6 .3 1 -11.7 .5 -5.2 1.5 .3 1 10 2 -.8 3 1.7 .8 14 1.5 1.1 -.3 .2 -1 -1.3 -1 -6.2 -1 -.8 -3 2 -1.9 31.4 -1.1 -7.4 -.5 -8.5 -2.5 -1.2 -1 2.9 -2 -1.2 -.4 -12 .6 -7 -2 0 -2.2 3 -1.3 21 -.2 5.9 -1.5 -.8 -1 -11.1 0 -11 -1.6 -1.8 -2.4 1.8 -3 -5.6 -3 5.7 -2 9.9 -1.3 16.5 -3.7 5.5 -.4 5.5 1.4 -3.5 3.2 -3 .9 -13 .6 -9 1.8 -2.7 1.5 5 2 6.7 1.1 13 -.5 3.6 -1.6 1.1 -3 1.3 -.9 13 -.1 3 -2.8 7 -.4 9 .9 2.7 1.3 -.7 1 -8 1.6 -2.1 1.4 9.1 .9 3.4 1.1 .9 1 -6.3 .8 -8 -.8 -.6 -1 .6 -1 -3 -.5 -5.1 1.5 -.5 2 2.6 1 12 1.7 5 3 7 -.8 2.8 -1.9 1.2 -2.6 2 -.5 9.2 .1 2.6 3 6.2 3.9 3 .6 5.7 -1.5 .5 -1 -1.5 -1 .3 -1 11 -2.5 8.1 .5 3.9 1 -13 3 -4 2.8 -.4 1.2 2.8 2 -3 2 1.7 1 5.9 1.6 15.5 .4 2.1 1 -1 1 .2 1 9.2 1.2 7 -1.6 7 .6 6 -1.1 -.2 -1.1 -2.8 -1.3 -10 -1.3 -2 -1.4 4 -1.1 10 .7 6.7 2.4 2.3 2 -5 2.9 -3.1 5.1 2.1 .7 5.2 -.7 2.5 -3 5.3 -1.2 7.6 .2 9.4 2.3 1.5 -.3 -1.1 -2 1.1 -1 6.5 -.3 3.4 .3 3.6 2.5 5 .4 3 -1.3 .9 -2.6 1.2 -1 7.9 -.8 7 .5 7 2.3 .7 2 -.7 1.6 -6.7 1.4 .7 1 2 .4 3 -.4 3 -2.3 10 -1.6 3 -1.9 19 2.8 4 -.5 23 .5 7 1 -7 3.7 -5.5 .3 2.9 2 -1.6 2 5.2 1 0 1 -56 .4 -14 -.7 -9 .9 -270.9 3.4 -142.1 4.5 -50 4.7 -43 -.6 -71 1.6 -11 1.9 -14 3.9 -32 12.5 -7 .6 -17 -1.5 -9 1.3 -9 4.1 -14 9.7 -5 1.8 -5 -.1 -15 -3.6 -14 -1.4 -17 .3 -12 2.3 -7 2.9 -7 4.2 -16 14.6 -4 2.5 -4 .5 -9 -3.6 -4 -.3 -5 3 -9 10.8 -5 3.6 -4 .5 -10 -2.2 -6 1.4 -4 3.1 -4 4.8 -7.5 14.2 -49.3 0 -6.2 -7.8 -7 -5.7 -10 -4.8 -15.5 -4.7 -8.5 -5.2 -4 -5.9 -1 .1 -4 13.4 -1 .3 -4 -21.6 -2 -5.1 -3 -1 -1 -1.3 -1 0 -2 2 -1 -.1 -3 -2.5 -2 -.4 -4 6.3 -1 -.1 -3 -8.1 -1 -.1 -1.9 15.3 -1.4 37 -7.6 0 -1.1 -5.7 -2 -.4 -1 -1.8 -4 -26.7 -1 .6 -1 7.8 -1.7 26.2 -5.1 0 -1.8 -47 -1.7 -15 -.7 -2.1 -1 -.6 -5 7.1 -4 21.6 -1 -.5 -3 -21.3 -2 -5.9 -1 .2 -1 3 -1 7.5 -2 53 -9.3 0 -2.1 -43 -2.6 -17.1 -2 -3.9 -5 -4.6 -1 .6 -1.9 6 -2.1 13.1zM931.5 791.8l-1 .3 -.3 1.4 .3 3.9 1 0 .4 -.9zM945.5 799.9l-2 2.6 0 2 3 2.3 1 -.3 1.7 -5 -.7 -1.1zM951.9 795.5l1.6 1.9 1.9 -.9 -.9 -2.3 -1 -.3zM957.7 796.5l-.3 1 1.1 1.4 2.7 -.4 .2 -1 -1.9 -1.7zM973.5 805.5l-.9 1 .9 1.1 .9 -.1 .3 -1zM1012.1 812.5l-2.6 -1 -1 3 2.5 0zM1017.2 817.5l2.3 .8 .2 -.8 -1.2 -.6zM1021.5 801.7l-.7 2.8 1.7 1.5 .2 -2.5zM1023.5 807l-.2 3.5 .2 1 1 0 .8 -2zM1030.9 788.5l.1 2 1.5 1.5 4 .5 1.1 -1 -.1 -2.1 -2 -1.9 -3 -.2zM1051.5 800.9l-1.6 1.6 .7 3 -2 3 .9 1.1 4.6 -5.1 -.3 -2zM1058.5 799.2l-1.1 .3 -1.4 3 .5 2 1 .7 1 -.7 1.2 -3zM1065.5 798l-1.4 1.5 1.4 1.5 1.3 -1.5zM1068.9 806.5l.6 1.7 2 -1.2 4 -.4 .3 -1.1 -4.3 -1.4 -2 .8zM1106.7 797.5l.8 1.6 1 .2 3 -1.8 -3 -1.5zM1132.9 797.5l.6 1.3 3 -1.9 3 .9 4 -1.8 3 .8 1.5 -1.3 -.8 -2 -3.7 -3.8 -6 -1.6 -2 .9 -1 1.5 3.5 3 -1.5 1.4 -3 .4zM1153.8 785.5l-2.3 0 -1 2 2 .9 1 -.4 1.1 -1.5zM1179.6 806.5l1.9 3.8 3 .8 5.9 -3.6 -1.9 -1.1 -7 -.8zM1237.1 800.5l-12.6 -2.6 -5 3.1 -12.3 3.5 3.3 1.2 12 1.2 1.7 -1.4 -.8 -2zM1290.1 797.5l3.4 .7 9 -.3 5.8 -1.4 .4 -1 -7.2 -.8zM1309.5 790.5l3 3.1 7 .9 7 2.7 11 0 1.7 -.7 1.1 -2 -.2 -1 -17.6 -.7 -8 -3.4 -3.2 .1zM1352.7 798.5l.4 1 6.3 3 0 2 4.1 1.6 18 -2.6 -8 -2.6 -12 -2.2zM1362.8 795.5l7.7 1.9 4.4 -.9 -.5 -1 -8.9 -.7zM1389.2 810.5l1 1 5.3 .4 9.7 -1.4 -8.7 -1.1zM1407.2 811.5l6.3 2.3 4.2 -.3 -4.2 -2zM1561.8 817.5l3.7 1.2 2.7 -1.2 -2.7 -1.6zM1155.5 800.6l-2 .5 -1.3 3.4 .3 1.8 1 .5 4.4 -2.3 -1.2 -3zM1224.3 813.5l.3 1 2.9 .2 2.9 -1.2 -2.9 -1.7 -2 .5zM1332.1 801.5l.9 2 2.5 1.7 3.9 -.7 0 -1 -3.9 -3.3 -2 0zM1370.5 811.5l5 2.9 3.4 -1.9 -2.4 -1.2 -4 -.4zM726.5 665.7l1 5.8 -1 4.4 -.7 -3.4zM810.5 677.1l.9 2.4 -.9 4.2 -1 -.4 -.1 -1.8zM1039.5 721.3l1 1 0 6.2 -1.4 -2zM1089.5 738.7l4 .8 2.5 2 -1.4 4 -4.1 2.8 -1.9 2.2 .2 5 2.4 3 .3 3 1.7 3 -.6 2 -1.1 .7 -2 -.6 -.8 -1.1 0 -4 -2.2 -4 -.2 -2 -2.9 -3 -2.1 -7 4 -5zM1116.6 742.5l-2.1 .3 -5.8 4.7 5 2 5.5 6 -.5 3 2.2 2 .1 2 -3.5 3.4 -3.2 .6 -2.6 -2 -1.2 -3.8 -4 -2.9 -1 .1 -1.1 4.6 3.4 1 .6 1 -2.1 3 -.4 5 2.6 1.3 .4 1.7 -2.4 1.4 -3 -2.3 -4 .9 -3 -1 -1.1 1 1.2 3 -.5 1 -2.6 1.2 -2.3 -.2 -4.7 -4.6 -.5 -1.4 2.5 -2.2 5 .5 1.4 -1.3 1.1 -3 .3 -6 -.9 -4 .9 -2 3.2 -1 6.3 0 .4 -1 -.9 -2 2 -4 -2.4 -4 .5 -3 3.1 -1.3 5 .2zM1074.6 746.5l1 1 -.1 1 -1.8 2 -1.2 -.1 0 -2.9zM973.5 747.9l.2 4.6 -1.2 .7 -.4 -3.7 .4 -1.2zM1039.5 749.8l1.2 1.7 -.2 1.2 -1 .3 -1 -1.5zM963.5 750.7l2 1.7 .5 2.1 -2.1 6 1.2 7 -.6 1.2 -2 .7 -1.3 -.9 -.6 -2 2.3 -6 -1.1 -7zM1030.5 755.4l1.4 3.1 -1.4 1.8 -1.1 -2.8zM949.5 755.8l1.1 1.7 -1.1 1.5 -.6 -1.5zM988.5 755.8l.6 2.7 -1.6 2.2 -.4 -3.2 .4 -1.4zM919.5 757.5l0 6 -1.1 -3 .1 -2zM1079.5 758.5l1.7 1 -.7 1.3 -1.8 -1.3zM1182 762.5l6.5 -1.1 2 1.1 -1 1.1 -6.5 -.1zM1186.3 770.5l3.2 -1.6 9 -1.4 .8 -1 -4.8 -1.7 -1.1 -1.3 2.1 -2 2.6 0 8.9 4 12.5 4.3 17.2 2.7 4.1 3 -1.3 2 .5 1 4.4 3 .3 1 -4.2 1.6 -5 0 -3 -.9 -4 -2.6 -5.2 -1.1 -.2 -1 7.1 -3 -1.2 -1 -14.5 -1.2 -3 -1.9 -3 1.7 -1 2.4 -1 .5 -6 .5 -8 -3.1 -4 -.5zM1054.5 761.7l4.1 .8 2.7 2 -.6 5 -1.9 2 -4.3 0 -1.8 -2 0 -5zM1066 764.5l1.5 -2.3 2 -.5 2 .9 .9 1.9 -1.9 1.7 -2 .4 -2 -1zM957.5 764l.9 3.5 -.9 4.8 -1 1.2 -.9 -6 .9 -3.2zM1134 764.5l1.5 -.6 1.3 .6 -.2 1 -1.1 .2zM1013.5 767.2l1.1 2.3 -2.1 4.5 -1.2 -.5 -.4 -3 .6 -2.2 1 -1.2zM1173.6 767.5l-1 1 -3.1 .2 -2 1.1 -2.7 3.7 1.3 4 -2.8 0 -2 -6 .4 -2 4.6 -2zM1263.2 768.5l.5 -1 8.8 -.3 7.2 1.3 -.4 1 -2.7 1 -4.1 .5 -3.9 -.5zM1138.8 774.5l.7 -2.8 2 -1.7 3 -.2 2.4 1.7 0 2 -2.4 2.3 -4 .1zM941.5 771l1.2 2.5 .1 3 -.5 1 -1.8 .3 -1 -1.8 -.1 -2.5 1.1 -2.3zM1179.3 774.5l.5 -1 2.7 -.7 3.4 .7 .3 1 -3.7 1.2zM1257.5 774.5l8.9 0 -5.9 1zM1379.5 777.5l-2 .9 -9 .9 3.9 3.2 -1.9 .5 -8 .1 -4.6 -1.6 .6 -1.6 2.8 -2.4 2.9 -1 10.3 -1.2 3 .6zM1392 779.5l.7 -1 3.8 -.5 3.1 .5 .4 1 -3.5 1.2zM1098.5 783.5l0 -4 6 -.9 1.6 .9 -.9 3 -2 2 -2.7 .7zM1201.4 787.5l-1.6 2 -5.8 4 -7.5 1.9 -5.7 -1.9 3.6 -2 -1.9 -1.4 -4 .1 -3 -.9 -6 2 -4.1 -.8 0 -1 1.6 -1 4.5 -.5 .5 -2.5 1.5 -1.3 11 -.1 6 -1.8 3 .3 2 2.2 4 0zM1190.5 788.6l-1.5 1.9 .5 1.9 1.3 -.9zM1414.6 789.5l2.9 -1.3 9 -.9 4 .5 1.9 1.7 -.6 1 -8.3 1.3 -5 -.4zM1085.5 792.5l1 -2 4 -1.4 3 -.2 2.2 1.6 -5.2 4.3 -4 .1zM1219 789.5l2.5 -.7 1.8 .7 -2.8 .6zM1492.5 792.5l4 -.1 6 1.7 14.7 2.4 .7 1 -8.4 1 -17 -2 -.4 -1 .9 -2zM1708.1 795.5l-2.7 1 -16 2 -6.9 -.4 -15 1.2 -6.4 -.8 .2 -1 3.2 -.8 15 .7 10 -1.1 3.4 -.8 -.6 -1 -3 -1 3.2 -.5 6 .2zM1585.3 795.5l-1.7 1 -.3 2 -5.8 1.3 -8 -1.1 -3.6 -1.2 -.7 -1 2 -1 15.8 -1zM1521.8 797.5l2.9 -1 8.8 -.5 13 1.4 3 1.1 -1.1 1 -14.9 .4 -5 -.5zM1587.6 799.5l.3 -1 15.6 .7 3.1 1.3 -3.1 .8 -12 .1zM1631.3 804.5l1.5 -1 4.7 -.9 10 -.8 16.4 .7 4 1 2.4 2 -5.8 .4 -10 2.5 -18 -1 -3.2 -.9zM1730.9 805.5l1.6 -1.6 3 -.7 14 .1 5.2 1.2 -3.6 1 -13.6 1.2zM1545.7 806.5l1.2 -1 9.6 -1 4.7 1 -.7 1.3 -10 .6zM1662.6 809.5l18.9 .2 12.2 -3.2 6.8 -.3 4 1 1.4 1.3 -9.7 3 -15 2 -.4 1 2.7 .7 17 .4 10 1.7 18 -2.2 17 -.9 5.4 .3 2.1 1 -21.5 2.5 -4.5 1.5 -53.5 .8 -5.3 -.8 4.2 -3 -4.4 -2 1.8 -2 -.9 -1zM1803.1 808.5l4.4 -.7 0 2.1 -3.7 -.4zM1592.1 819.5l.7 -1 7.2 -1 .1 -1 -2.8 -5 4.2 -.2 11.1 .2 15.9 2.7 2 1.7 3 1 25 1.6 5.5 1 -8 1 -18.5 -.9 -20 1 -20.6 -.1zM1633.2 813.5l1.2 -1 6.1 -.8 12.3 2.8 -4.3 1.3 -6 .2zM1763.9 815.5l9.6 -1.2 7.1 2.2 -2.1 .7 -14.3 -.7zM1807.5 816l0 3.7 -31 -.2 6 -1.6 16 -.6z"/>
<path fill="#00b385" d="M428.5 689.2l1 -3 1 .3 4 20.5 2 6 1 -.1 3 -10.1 1 1.1 4 25.2 2.6 7.4 1.4 1.8 1 .4 1 -.8 3 -7.9 2.6 10.5 2.4 3.1 2 -.5 1 -1.5 1.4 -5.1 3.6 -41.2 1 -.2 3 35.7 2 6.1 2 -1.5 3.7 -11.9 2.3 -19.2 1 -2.2 1 .6 1 -2.7 1.4 -8.5 2.8 -26 5.8 -73.8 2 -15.2 1 -2.1 3 21.4 7.6 103.7 3.4 30.2 1 1.7 1 -5.8 4 -79.8 2 -18 2 25.2 3.9 99.5 1.1 11.6 1 -3.4 3 -36 1 .2 4 49.4 2 4.7 7 5.6 2 -.7 2 -3.6 2.2 -7.8 4.6 -27 6.2 -89.1 1 -4.6 3.7 37.7 1.3 4.8 1 -.8 2 -12.5 3 -43.8 1 -5.2 4 43.1 1.3 -6.6 3.7 -56.6 1 -4.9 4 50.5 1 -.4 4 -48.3 4 47.8 1 4.8 1 .5 1 -2.7 1.4 -12.7 4.6 -87.4 1 4.1 2 34.4 1 4.2 3 -47.5 3 52.3 1 2.1 4 -71.3 1 3.7 2 22.6 4 -66.9 2 18.6 1 1.8 3 -20.5 1 0 5 40.1 5 74.9 1 4.3 3 -25.4 1 2.4 6 119.4 1 7.4 1 -5 1 1.5 1 6 1 1 4.3 -118.8 1.7 -29.1 3 48.9 1.7 -15.8 1 -30 1.3 -5.7 1.3 6.7 .7 11.6 1 -.7 2 -7.9 1 -.1 3.3 20.1 .3 13 1.4 10 2 33 2.4 13 1.9 34 -.4 9 1.5 8 .4 16 1.2 5.8 2.7 -6.8 -1 -3 .3 -7.4 1 -.6 .2 11 .8 1.4 1 -1.1 4.7 -50.3 1.7 -28 2.2 -18 1.9 -7 .3 -17 2.2 -10.7 1.8 11.7 1.2 26 4 24.9 .2 14.1 2 8 .8 12.6 1 1.3 2 -21.3 1 -2.7 1 1 4.2 73.1 .8 3.2 2 -2.2 2 2.3 1 -.2 1 -2.1 -1 -2.4 -2 1.8 -1 -.5 -.9 -5.9 .9 -9.1 1 -.2 1 7.1 1 -.2 1.1 -4.6 -.1 -14 2.2 -22 2.8 -7.7 1 -1 .5 .7 3.5 21.7 1.3 -7.7 1.7 -24.1 1 1.2 1.4 23.9 -.5 15 1 11 -.7 7 1.8 7.4 1 1.7 1 -4.2 2 -3.2 3 -28.7 2 -5.8 2 6.4 1.5 15.4 -.4 7 1.9 15.1 1 .5 2 6.3 2.6 -21.9 1.4 -24.6 2.5 21.6 2.3 34 .9 -2 1.3 -11 2 -4.8 1.7 6.8 1.3 19.1 1.6 -4.1 -.8 -9 3.2 -41.5 1.8 6.5 2.2 21.1 3.7 -19.1 -.4 -10 1.7 -10.8 1 -1.7 2 5.3 1 .4 1.3 -4.2 2.7 -20 2 -5.8 1 0 4 20.4 1 -.1 1.9 10.5 1.8 28 -.5 9 1.5 3 1.3 7.1 1 -1.7 1 -6.2 1 -.3 3 26.5 1 -2.5 4 -47.5 1 -4.3 3 19.2 1 -.5 2 -11.7 1 -.6 1 2.5 1.9 16 -.5 11 1.6 4.7 1 -.9 1 -7.8 2.2 -4 -.8 -4 .2 -6 2.7 -14 .2 -9 2.5 -17.7 1.2 2.7 3.8 30.9 1 -.5 1 -3.2 1 .9 .8 3.9 2.2 21.5 1 -2.3 1.7 -18.2 1.3 -4.1 1.5 7.1 .3 10 1.2 1.9 2.4 -1.9 -.3 -6 .9 -4.1 1 -1.3 1.1 1.4 1.3 6 .6 11 1 3.2 2 1.5 2 15.8 1 -1.5 1.7 -19 1.3 -5.6 1 3.3 3 23.5 4 -19.2 1.1 2 3.9 22.8 1.5 -4.8 2.5 -28.3 1.8 10.3 -.2 6 2.4 18.7 2 -9.5 1 .3 1.3 6.5 .7 1.3 .9 -1.3 .5 -8 1.6 -3.4 1 -.5 1 2.2 .8 12.7 1.5 7 0 4 .7 .7 1.1 -5.7 -1 -4 .1 -3 2.8 -7 -1.5 -7 2.5 -8.5 1.3 8.5 -.2 8 1.4 5 -.4 6 .9 2.1 1 -.1 1 -2.9 -.5 -5.1 1.5 -4.1 1 .1 2 2.7 1 -.4 2 -6.6 1 -.7 1.8 3 2.2 8.6 1 1.2 1.3 -.8 2.1 -14 -.6 -12 .9 -3 1.3 -1.2 2 1.4 .8 3.8 -3 11 2.5 6 .2 4 1.5 3 2 -2 3 1.9 2.4 -2.9 .5 -2 -1 -6 .8 -6 1.3 -2.1 2 -.1 1.5 2.2 .6 4 -2.8 7 0 2 3.7 5.6 2 .2 2 -.8 -.2 -1 -2.6 -2 -.3 -2 2.1 -2.4 2 .4 1.2 3 -1.1 3 6.9 6.9 2 8.9 1.2 -.8 .8 -6.4 2.3 -2.6 -2.3 -2.8 -2.2 -1.2 -.2 -3 2.4 -1.6 1.7 -2.4 .1 -4 2.2 -1.8 1.3 1.8 -.7 3 .5 1 2.9 1.6 1.3 -.6 .7 -9 -1.2 -4 .7 -2 1.5 -1.2 1 .9 .3 4.3 2.7 6.6 1.9 -2.6 1.1 -11.3 1.9 -4.7 .1 -5 .2 6 1.8 8 -.6 4 -2.3 3 2.8 5 -2.5 4 1.4 3 -.3 2 -1.5 1.5 -2 -1.5 -.2 -2 1.6 -3 -3.4 -4.9 -1 .3 -2.4 2.6 1.5 5 -.5 2 -1.6 1 -3 -.3 -1 1.3 0 2 1 1.8 3 1.2 4 5.1 5 .6 3.4 2.3 .5 1 -.9 4.2 4 -1.2 .9 -2 -2.8 -2 .7 -8 2.1 -5 -1.1 -4 1.1 -4 -1.8 -4 -.2 -3 1.1 -2.3 4 -1 3 -6.1 2 -.8 1.6 1.2 .2 2 -3.1 14 .6 2 2.7 3.5 4 .5 2 1.4 2.7 4.6 2 2 -.7 4.7 1 .1 4 -2.4 5 1 2.9 -5.4 -1.7 -4 -1.2 -.9 -2 .2 -6 2.9 -2.4 -1.2 -1.6 -3 0 -4.4 2 1.3 4 .6 1.4 -1.5 0 -2 -2.4 -2.4 -3 -.1 -2.4 1.5 .2 2 -.8 .3 -.5 -3.3 -2.2 -4 3.2 -6 .1 -1 -2.7 -4 .9 -3 1.2 -.6 1 .5 3 5.9 2 1.2 1.1 0 1.9 -2.9 .9 -6.1 -2.5 -6 .8 -2 1.8 -.9 2.2 1.9 .2 5 3 4 .1 1 -3.3 4 .5 10 1.3 2.1 3.7 1.9 3.3 5.8 3 1.7 3 .3 .1 -5.8 6.9 -1.5 3 -2.9 3 1.3 6 .1 2.4 2 .5 3 2.1 .2 2 2.1 4 1.7 .6 2 -2.7 4 1.1 1.6 1 0 5 -3.7 4 2.5 .9 -.4 .1 -4 5.3 -3 2.4 -3 2.1 -8 1.3 -2 2.9 -2.1 3 -.3 1.5 1.4 .5 2.6 3.9 -3.6 1.1 -4.7 4 -1.6 4 1.5 1.5 1.8 -.5 2.6 -2.5 2.4 -.3 1 .8 .7 6 -2.8 9 -.7 6 -1.5 2.9 5.3 -1.9 2 0 1.2 4 1.4 4 -2.2 3.6 2.6 -1.9 2 -4.5 1 -.2 2.1 6 .6 5 2.5 4 -.6 6 1.8 5 .6 -.6 2 1.6 .9 3 -.3 4 .8 8.3 -3.4 5.6 -5 3.1 -1.4 4 -.5 6 .8 6.8 4.1 -.7 1 -5.3 3 -10.7 3 4.9 1.5 8.8 .5 3.2 1.2 3.2 -1.2 -1.2 -3 14.7 -3 -13.2 -3 3.7 -2 6.8 -.7 4.4 -1.3 .1 -1 -4.7 -3 -.4 -1 4.6 -1.2 12 -1.2 10 .1 1.9 1.3 -1.4 2 -10.1 5 1.7 2 11.1 6 -13.6 2 -3 1 .4 1 10.4 2 .3 1 -1.3 2 1.5 1 16.1 1.9 1.6 -.9 -.6 -1.8 -7 -1.9 -1.3 -2.3 .7 -1 5.6 -1.1 23 -.2 6.1 -.7 -12.1 -1.3 -5.8 -1.7 -1.2 -1 4 -2.3 14 -.3 5.9 -1.4 .8 -1 -1.2 -1 -6.5 -.2 -14 3.4 -12 .8 -6.8 -1 -1.8 -1 -.1 -1 2.2 -2 23.5 -.4 5.7 -1.6 1.1 -1 -22.8 -1.1 -3 -.9 -.8 -1 .8 -2.2 4 -1.5 13 2.1 14 -.5 4 -1.4 1.7 -3.5 1.3 -.6 14 -.5 1 -2.1 5 -.8 9 .7 3 1.3 -1.6 1 -6.1 1 -11.2 4 -.8 2 2.7 1.1 13 1.9 1.6 1 .2 1 -.8 .9 -18 .2 -7 -3.3 -4 -.4 -3.9 .6 -.9 1 2.8 3.2 8 1.2 8 2.5 18 .6 6 1 8.2 3.5 0 2 4.8 1.8 22.1 -2.8 -13.1 -3.4 -8 -1.2 -21 -1.7 -1.8 -.7 -.5 -1 1.3 -2.4 10 -1.4 3.9 -2.2 1.4 -2 5.7 -.9 4 .9 .5 1 5.7 3 1.7 2 -1.9 .9 -11 .2 -1.2 .9 3.2 1.5 6 1.2 5 0 1.8 -.7 -.4 -2 1.1 -1 10.5 -1.5 .5 .5 -.5 2 1.8 2 -1.9 1 0 1 3.1 1.5 5 1.2 14 .5 2.7 .8 -.2 2 8.5 1.3 10 -1.1 13 -.2 .9 1 -2.8 5 2.9 .9 7 -.9 .1 -2 1.3 -1 5.6 -1.1 7 .4 10 2.8 1.4 -.1 .8 -1 -2 -2 .8 -.6 7 -.5 3.4 1.1 .6 1.8 7 .4 3.7 -1.2 1.6 -3 1.7 -.9 6 -.5 6.4 .4 6.6 2.3 .8 1.7 -.9 1 -6.9 2 .6 1 3.4 .7 4.5 -.7 3.7 -2 12.8 -2.4 12 1.5 11 -.2 25.5 1.1 -.3 1 -4.2 1.7 -6.5 .3 -.8 1 2 2 -2.3 2 4.8 1 -4.9 1 -32.3 0 -3 -1.1 -2.3 1.1 -23.7 -.7 -9 1.1 -9 -.4 -41 1.1 -217 2.3 -146 4.1 -50 4.4 -43 -.9 -72 1.2 -11 2 -14 3.7 -31 11.7 -7 .4 -17 -1.6 -9 1.2 -8.2 3.4 -14.8 9.8 -5 1.7 -6 -.3 -17 -4.1 -12 -1.1 -17 .1 -12 2.3 -7 2.8 -6 3.5 -16 14.1 -4 2.4 -4 .4 -9 -3.8 -4 -.4 -5 2.9 -9 10.4 -4 3 -5 .7 -11 -2.4 -6 1.8 -5 4.4 -4 5.5 -9.2 19.3 -39 0 -8.8 -13.5 -9 -9 -10 -5.7 -17 -5.9 -9 -6 -4 -5.6 -1 -.1 -1 1.4 -3 10.7 -1 .3 -4 -21.5 -2 -4.6 -4 -3.8 -1 -.2 -3 1.4 -4 -1.8 -2 .7 -3 3.6 -1 .1 -3 -5.7 -1 -.4 -1 2.6 -1.2 10 -2 53 -4.6 0 -2.2 -26.5 -1 -4.4 -1 -.9 -1 .1 -1 -3.2 -2.4 -18.1 -1.6 -6.6 -1 0 -1.4 7.6 -3.2 52 -1.7 0 -2.5 -60 -1.7 -15 -1.5 -3.1 -1 -.5 -4 1.4 -2 2.1 -3 6.8 -1 -.1 -3 -8 -2 -2.3 -1.3 .7 -1.4 3 -1.3 9.9 -2 65.1 -6.7 0 -2.4 -55 -1.9 -15.5 -3 -6.1 -6 -2.9 -2 1.5 -3 8.3zM945.5 799.3l-2 2.6 -.3 2.6 1.3 2 2 .7 1.3 -.7 1.7 -5 -1 -1.5zM954.5 792.5l-2 1.3 -.9 1.7 1.9 2.4 2.8 -1.4zM959.5 795.1l-2.7 1.4 0 1 2.7 2 2 -.7 .4 -1.3zM972.1 806.5l1.4 1.3 2.2 -.3 -2.2 -2.2zM1015.5 788.4l-1.6 1.1 -.1 1 1.7 1.5 2 -1.5 -.2 -1zM1021.5 801.5l-1.1 2 2.3 4 .8 4.6 1.3 -.6 .7 -2zM1059.5 799.5l-2 -.8 -2 4.6 -3 -2.4 -2.5 .6 .3 4 -2 3 .3 1 1.4 0 5.5 -5.8 2 1.8 1 -.6 1.4 -3.4zM1063.8 799.5l.5 1 1.2 .6 1.2 -.6 -.2 -2.1 -1 -.6zM1069.5 790.6l-.3 .9 2.3 3 2 1 2.3 -1 .4 -1 -3.7 -.8zM1107.5 795.3l-1.4 2.2 1.4 2.6 1 .4 3.4 -3 -3.4 -2.3zM1133.7 790.5l3.3 3 -4.1 2 -.3 2 .9 1.6 3 -1.3 4 .8 2.6 -2.1 3.4 .5 1.5 -.5 .4 -1 -3.9 -5.6 -3 -1.9 -5 -.2zM1151.8 805.5l1.7 1.6 5 -1.6 1 -1 -2.2 -3 -2.8 -1.4 -1.7 1.4zM1178.9 806.5l2.6 4.3 3 .6 6.9 -3.9 -1.9 -1.2 -9 -1.3zM1223.6 814.5l3.9 .5 4 -1.5 -5 -2.3 -2 1.2zM1331.6 801.5l.9 2 2 1.6 3 .3 2.5 -.9 0 -1 -4.5 -4 -2 .3zM1349.1 813.5l4.4 1.5 1.3 -.5 -4.3 -1.9zM1365.5 810.5l5 1.4 5 2.8 4.3 -2.2 -.7 -1 -11.6 -1.7zM1386.5 811.5l19 .3 11 2.7 2.3 -1 -5.3 -2.3 -13 -1.9 -13.3 1.2zM1464.5 815.5l1 1.4 1.6 -.4 -.9 -1zM1543.6 812.5l4.9 .6 3.2 -.6 -1.2 -1.1 -2 -.4zM1560.5 817.5l.7 1 4.3 .6 3.8 -.6 1.2 -1 -5 -2.1zM1016.4 817.5l.6 1 2.5 .4 .5 -1.4 -.5 -1.2 -1 -.1zM1068.7 806.5l.8 2 2 -1.3 4 -.3 .7 -1.4 -5.7 -1.4 -1 .5zM1108.5 800.5l-.9 2 .9 1.2 .7 -1.2zM1416.9 817.5l2.6 .7 2.6 -.7 -2.6 -1.4 -2.3 .4zM1094.4 740.5l.9 2 -.8 2 -7 6 0 2.5 -2 0 -3 -6.5 2.7 -5 4.3 -2.2zM1105.5 744.5l0 -2.1 2 -1.5 6.1 .6 .1 1 -4.2 3.3 -2 .4zM1108.5 749.1l3 -.1 2 .9 4.6 5.6 -1.2 3 3 2 .4 1 -3.7 4 -3.1 -.3 -1.1 -5.7 -5.3 -3 .2 -2 -1.2 -2zM963.5 751.6l1 .3 1 2.6 -1 3 -1 .4 -1.1 -3.4zM1100.5 755.8l3.4 .7 .6 2 -.9 4 2.4 3 -1.5 7.2 -5 2.2 -4.1 -1.4 -.4 -1 1.3 -4 .3 -6 -.9 -4 1.3 -2zM987.5 757.5l1 -.3 0 1.6 -1 .1zM1088.5 758.1l2 1 0 1.7 -1 0 -1 -1.2zM926.5 759.8l1 .9 .3 2.8 -.3 2.8 -1 .2 -.6 -4zM963.5 762.1l1 2 .2 3.4 -1.2 1.4 -1 -.1 -1.2 -1.3 -.1 -2 1.3 -2.9zM1054.5 762.3l3 .1 3.3 2.1 -.3 4.3 -1.1 1.7 -1.9 1 -2 0 -2.3 -2 -.3 -4zM1089.5 762.1l1 -.3 2 1.8 .3 1.9 -1.3 1.3 -2.4 -1.3 -.4 -2zM1194.3 763.5l.4 -1 1.8 -.5 4.2 1.5 -.3 1 -1.9 .4zM1066.7 764.5l.8 -1.3 2 -.6 2 .8 .3 1.1 -1.3 1.3 -2 .3zM987.5 764.5l1.9 3 .1 4 1.9 4 -.9 1.4 -2 1 -2.4 -2.4 -.5 -6 .5 -3zM957.5 765.4l0 3.9 -1 .8 -.2 -3.6zM1187.8 770.5l1.1 -1 4 -1 5.5 0 7.1 -2.1 5.8 1.1 8.2 2.9 15 2.1 .3 1 -4.3 .4 -14 -1.2 -5 -2.1 -3.8 1.9 -1.8 3 -4.4 .5 -12 -4zM1012.5 767.7l1 .4 .4 1.4 -1.4 3.6 -1 -.5 -.2 -2.1zM1264.8 768.5l2.7 -.8 6 -.1 4.2 .9 0 1 -6.2 1zM1162.5 771.5l-.3 -1 1.3 -1.4 2 -.2 .6 .6 -1.6 2.1zM1139.2 774.5l.3 -2.1 2 -2.1 3.7 .2 1.5 2 -1 2 -2.2 1.2 -3 -.1zM940.5 772.7l1 -.1 .6 1.9 -.6 2.4 -1 -.2 -.4 -1.2zM1062.4 773.5l2.1 -.7 6 .2 9 2.3 2.2 3.2 3.1 2 .3 1 -1.6 4 -2 .4 -6 -3.4 -.2 -4 -1.8 -1.5 -2.8 .5 -5.2 5.3 -1 -.5 -2.8 -5.8zM1086.5 774.5l3 -1.4 4 1 1.1 1.4 .5 3 -.6 1 -2 .6 -5 -3.7zM1310.7 774.5l-.2 1 -2.9 2 -3.9 1 -13.2 .6 -14 2.4 -5.2 -1 1.2 -1 29 -5.7 5.9 -.3zM1105.3 775.5l.3 -1 2.1 0 -.2 1.3zM1225.6 778.5l10.9 -3.9 2 .9 -.3 2 .6 1 4.5 3 0 1 -2.8 1.1 -5.1 -.1zM1364.5 777.5l2.4 -1 6.6 -.5 3.6 .5 1.1 1 -10.7 .8zM1156.5 778.3l-.1 1.2 -1.9 1.7 -.3 -2.7zM1105.4 779.5l-1.4 4 -2.5 1.3 -2 -.4 -.9 -1.9 .9 -2.5zM1358.7 781.5l1.8 -1.8 4 -.9 6.5 2.7 .4 1 -8.9 .3zM1394 779.5l2.5 -1 1.3 1zM980.5 781l1 .5 1.2 3 -1.2 4.1 -2.2 -4.1 .1 -2zM1153.5 781.4l1 .7 .1 1.4 -2.1 .6 -.5 -.6zM1335.2 784.5l2.3 -.9 4 0 4.8 .9 .4 1 -8.2 .4 -2.6 -.4zM1172.9 786.5l1.8 -2 8.8 .1 8 -1.1 2.4 2 4.6 .3 1.8 1.7 -1.7 2 -7.1 4.1 0 -5.1 -1 -.6 -2.3 2.6 1.1 3 -.7 1 -2.1 .5 -4.2 -1.5 3.2 -2 -.4 -1 -11.1 -2zM1404.8 788.5l-15.3 3.2 -3.6 -1.2 .3 -1 9.7 -2zM1416.7 789.5l2.1 -1 6.7 -.8 4 .6 1.2 1.2 -1 1 -6.2 1 -5 -.8zM1094.5 790.5l-4.3 4 -2.7 0 -1.7 -2 .7 -1.6 3 -1.3 3 -.2zM1494.6 795.5l1.2 -1 2.7 -.2 15.3 2.2 -1.9 1 -5.4 .1 -9.1 -1.1zM1696.2 796.5l2.3 -1.4 2.8 .4 -1.7 1zM1524.2 797.5l2.9 -1 7.4 -.2 11.3 2.2 -12.3 .9zM1568.1 796.5l9.4 -.4 1.3 .4 .3 1 -.9 1 -4.7 .1 -5.4 -1.1zM1663.3 798.5l.1 -1 3.1 -.2 5 .2 .5 1zM1430.1 799.5l4.4 -.7 7 .7 7.8 3 .3 1 -3.1 .8 -5 -2.3 -10.3 -1.5zM1589.7 799.5l2.8 -.6 9 .5 2.9 1.1 -11.9 .4 -2 -.4zM1038.1 803.5l.4 -1.2 2.1 .2 -1.1 1.3zM1633.4 804.5l4.1 -1.5 9 -.8 16 .6 5.4 1.7 -.8 1 -16.6 2 -13 -.5 -3 -1zM1733.2 805.5l0 -1 6.3 -1 13.3 1 -12.3 1.4zM1549.3 806.5l1.4 -1 3.8 -.4 5.3 .4 -1.3 1.2zM1703.7 808.5l-9.3 3 -18.9 1.8 -3.9 -2.8 13.9 -.9 5.7 -2.1 6.3 -.9 4 .3zM1595 819.5l14.1 -2 -5.6 -.5 -2.6 -1.5 -1.5 -3 5.1 -.6 8 .2 8.7 1.4 11.3 3.7 28.6 2.3 -8.6 .5 -14 -1 -21 1.5 -16 -.2zM1637.6 813.5l4.9 -.6 8.4 1.6 -7.4 .8 -4.5 -.8zM1671.8 814.5l2.7 -.9 2.1 .9 -1.1 .6zM1670.8 819.5l6.5 -3 .2 -1.1 22 .7 8.3 2.4 -1.1 1 -10.2 .6zM1725.4 816.5l6.1 -1.1 15.6 .1 -9.6 1.4zM1768.6 815.5l6.7 0 -2.8 1zM1807.5 817.4l0 1.2 -12.1 -.1z"/>
<path fill="#00b978" d="M428.5 713.5l1 -3.3 1 .2 4 22.1 2 6 1 -.6 3 -11.8 1 1 4 26.1 3 8.1 2 1.4 1 -.6 3 -5.9 2 7.4 2 4.1 2 1 2 -1.5 2 -6.8 3 -25.4 1 -.2 3 23.9 1 3.3 1 1.1 1 -.6 4 -10 3 -19.7 3 -5 2 -10.7 3.4 -28.6 5.6 -66.4 2 -9.7 3 23.9 6.5 79.2 4.5 32.2 1 2.7 1 -1.5 .9 -8.4 4.1 -79 1 -4.7 2 27.2 4 94.6 1 2.4 1 -4.8 3 -35.8 1 .1 2.6 33 1.4 9.7 2 2.9 7 4 2 -.9 2 -3.5 2.2 -7.2 4.8 -26 2.2 -22 3.8 -57.4 1 -4.6 3.3 32 1.7 6.2 1 -.8 2 -11.2 3 -40.8 1 -5 3 35 1 4.7 1.6 -9.1 3.4 -50.2 1 -4.8 4 46.9 1 -1.1 4 -46.3 4 44.7 1 4 1 .2 1.3 -4.4 1.3 -13 4.4 -81 1 4 2 33.1 1 3.4 3 -46.3 3 50.6 1 1.9 4 -69.6 1 3.6 2 22.3 4 -64.3 2 18.1 1 2.1 3 -19.2 1 0 5 38.5 4 61.3 2 17.5 3 -27.8 1 2.9 6.1 119.9 .9 1.4 1 -5.9 1 .3 2 11.4 5.1 -130.2 .9 -8.7 3 41.2 1 -5.6 3 -50.3 .3 10.4 1.7 9.7 1 -1 2 -8.9 1 .1 2 11.2 .6 8.9 -.8 5 1.9 7 2 34 3.2 19 1.7 30 -.2 9 1.2 7 .6 17 1.8 12.6 2 -9.1 1 -1 1 3 1 .7 7.3 -75.2 .4 -12 1.6 -14 2.2 -8 .5 -13.3 1 -3.8 1.8 16.1 0 8 4.7 31 0 10 1.8 9 .6 16 1.1 5 1 1.1 2 -24.9 1 -4.9 1 2.3 3.7 68.4 1.3 7 2 -4.6 2 2.3 1 0 1.5 -3.7 -.8 -6 1.6 -11 .6 -26 1.1 -6.6 2 -4.8 1.5 2.4 1.5 8 .7 18 1.3 4 1 -2.2 2 -35.7 1 4.7 .9 16.2 -.5 11 1 10 -.6 8 2.2 14.7 1 1.1 1 -7.4 2 -2.2 4 -34.2 1 -.9 1.4 3.9 1.2 9 -.3 11 1.3 9 .4 12.2 1 .4 1 -1.6 2 6.2 1 -2.8 3 -32.4 1 .8 4 44.4 1 -3.3 1 -11.1 1 -4.1 1 -1 1.2 5.3 .8 16 1 5.5 2.2 -7.5 -.8 -4 0 -8 2.6 -34.1 1 .6 3 31.2 2.9 -21.7 1.3 -5 -.3 -10 1.1 -8 1 -2 2 6 1 .6 1.8 -6.6 2.9 -20 1.3 -3.8 1 2.2 3 17.7 1 1.3 1 -.5 1.1 4.1 2.2 30 -.5 10 1.4 3 1.8 10.8 2 -8 1 -.1 3 26.6 1 -1.4 5 -51.6 3 20.7 1 1.6 2 -17.3 1 -1.5 1 2.7 1.3 12.5 -.5 11 1.8 8 0 6 .4 1.3 2 -2.5 -1 -3.8 1.7 -11 2 -6 -.4 -9 2.4 -14 2.3 -20.1 3.3 20.1 .7 11 1 2.7 2 -7.2 1 .1 3 28.7 1 -3 2 -21.5 1 -3.7 1 5.9 -.1 9 1.1 3.3 1 .3 1 -1.7 1 -.7 1 .6 .5 -.8 -.5 -8.7 1 -1.5 1 1.8 .8 13.4 2.2 6.8 1 0 1 1.4 2 14.4 1 -.7 3 -23.5 4 29.5 4 -23.4 1 1.4 4 25.2 2.3 -9.1 0 -7 1.7 -13.3 1.1 2.3 -.1 6 1.2 7 .8 13.8 1 1.4 2 -8.2 1 .3 2 5.1 1.8 -4.4 .2 -6.9 1 -1.5 1 .4 1 4 1.6 19 1.4 1.8 1 -1.8 .5 -5 -.9 -6 1.4 -4.9 2 -1.2 1 1.2 .9 2.9 -.2 7 1.3 2.4 1 -.1 1.4 -3.3 -.3 -6 .9 -2.9 1 -.1 2 3.9 1 -.7 3 -8.2 1 1 2.5 10 1.5 2.6 2.7 -3.6 .3 -8 1 -2.9 1 .5 1.8 3.4 .6 7 -1.7 3 .9 2 1.4 .8 3 -.5 3 2.2 2 -.7 .9 -1.8 -2.6 -4 3.2 -5 -1.1 -5 .6 -8 2 -2 2 1.9 .7 4.1 -.6 3 -2.7 5 4.6 7.4 6 -.8 6 6 1.2 7.4 .8 1.3 1.5 -1.3 .8 -6 2.9 -2 -1.2 -2.6 -3.8 -3.4 4.8 -6 5 2.3 3 -1.1 1.7 5.8 -1.7 1.7 -3 -.7 -1 .8 -.4 4.2 1.4 1.6 3 1 4 4.8 5 .7 2.3 1.9 .6 2 -1 4 1.1 1.5 1 -1.9 4.4 -2.6 0 -1 -2.5 -2 -.7 -2 .8 -5.8 2.9 -5.2 -1.4 -4 .5 -1.9 3 1.7 3 -1.7 1 .3 3 3.5 5.1 1.1 5.1 7 -.8 4 .6 1.2 5 -2.3 5 .8 3.4 -5.7 -1.6 -4 -1.8 -1.4 -7 3.1 -3 -.7 -1.4 -2 0 -3 6.4 -.6 .7 -3.4 -2.7 -2.9 -6 .8 -2.4 -3.9 3.5 -7 -2.7 -4 .3 -2 1 -1 1.3 .3 1.2 1.7 .8 4.8 4 1.3 1.2 -1.1 1.6 -4 .4 -5 -2.4 -6 1 -2 1.2 -.4 1.8 1.4 .1 5 2.4 4 .1 1 -2.6 4 .8 11 4.4 3.9 3.4 5.1 5.9 3 .5 1 -1.2 3 -3.6 -1.2 -2 1.2 .5 4 -2 3 .1 1 1.4 .5 5 -4.7 3 .5 1.5 -1.3 1.4 -4 -2.4 -3 -.8 -6 .7 -1 8.6 -2 4 6 3 2 2 -.4 4 -2.6 6.5 3 .8 2 -2.8 4 .5 1.4 2 .3 5 -3.4 4 2.4 1.3 -.7 .3 -4 5.6 -3 1.9 -2 2.3 -5 -.4 -3.4 1.5 -2.6 3.5 -2.1 2 .1 1 1 -.5 3 -4.5 4 2 .2 8.7 -7.2 .7 -5 3.6 -1.6 3 .7 2.1 1.9 -.2 2 -2.9 3 -.2 1 1.1 1 5.1 -2.5 10 -.8 5 -1.5 1 .4 1.9 4.4 -2.9 3 6 2.6 4 -1.7 2.6 1.1 -1.6 1.8 -4 .3 -.9 1.9 .7 2 7.2 .4 4 2.4 4 -.5 7 1.8 2.3 -.1 -.2 1 -1.1 -.3 -1.3 1.3 2.3 1.8 6 -.6 4 .6 10.8 -4.8 3.8 -4 2.4 -1.2 4 -.3 6 1.3 5.3 3.2 -.4 1 -3.9 1.5 -1.3 1.5 -11.6 3 5.9 1.6 11.8 1.4 2.6 2 .2 2 -1.3 3 1.7 .7 8.2 -.7 .2 -1 -5.7 -3 -.4 -2 1.7 -2 -.4 -1 -2 -1 -.1 -1 15 -3 -1.3 -1 -11.8 -2 .6 -1 13.6 -3 -.1 -1 -4.8 -3 -.2 -1 4.5 -1.1 16 -1.3 4.6 .4 1.5 1 -.3 1 -11.7 6 2 2 6.7 3 3.9 3 -10.7 1.4 -6.1 1.6 .7 1 10.9 2 .5 1 -1.6 2 1.6 1.2 16 2.3 3 -.5 .8 -1 -.5 -2 -7.3 -2.1 -1.4 -1.9 1 -1 10.4 -1.2 18 .3 7.9 -1.1 1.9 -1 -15.8 -.4 -6.1 -1.6 -1.2 -1 3.3 -1.8 14 -.6 11 -3 10 2.3 9.2 1.1 -2.2 2.3 -.2 1.7 2.2 2.6 2 .6 5.3 -1.2 -3.3 -4 .4 -1 1.6 -.6 7 0 6 1.2 5.5 2.4 0 2 1.6 1 4.9 .9 25.2 -2.9 -13.5 -3 .4 -1 6.9 -.9 9 3.7 18.8 1.2 .4 2 2.8 .9 9 .7 9 -1 11 .2 .5 2.2 -2.4 3 3.9 1.1 9 -1 -1.1 -2.1 1.4 -1 5.7 -.9 8.5 .9 5.5 2.4 3 .3 3.2 -.7 -.2 -1 -2.9 -2 5.9 -.9 3.4 .9 -.2 2 8.8 .6 5 -1.6 2 -3 6 -1.1 7 .8 5.6 2.3 .2 1 -1.5 1 -7.3 2 .7 1 4.3 1 5 -.3 7.6 -2.7 10.4 -1.5 5 .5 1.1 1 -6.3 2 6.1 1 7.4 -1 -2 -2 8.7 -.7 24.5 1.7 -8.5 1.1 -1.3 .9 -1.3 3 -8.4 -1.6 -5 1.5 -1.5 1.1 .5 1.3 15 .6 -4 .4 -25 .1 -5 -1.2 -9 1.7 -17 -1.1 -6 1.3 -17 -.1 -4 -2.1 -.8 .1 .8 2 -13 .2 -1.5 -.2 -.2 -1 -1.3 -.3 -.3 1.3 -13.7 .9 -89 .2 -243 4.3 -43.8 1.6 -39.2 3.6 -44 -1.1 -61 .2 -11 .6 -24 5.2 -31 11.2 -7 .4 -17 -1.9 -9 1.1 -9 3.7 -14 9 -5 1.6 -6 -.3 -17 -4.3 -14 -1.5 -16 0 -12 2.3 -7 2.8 -6 3.5 -15 12.8 -4 2.3 -4 .3 -9 -3.9 -4 -.5 -5 2.7 -9 10 -4 2.9 -5 .6 -11 -2.7 -6 1.6 -5 4.2 -5 6.9 -5 9.6 -6.9 16.1 -29.4 0 -12.7 -20.9 -5 -6.2 -6 -5.7 -9 -5.5 -18 -7.1 -9 -6.3 -5 -5.6 -1.4 1.3 -2.6 5.3 -1 -.5 -4 -16.2 -2 -4 -4 -5.1 -1 -.5 -3 1 -5 -.7 -5 2.4 -4 -4.2 -1 .7 -1 2.7 -.9 7.1 -2.1 59.4 -.9 8.6 -.7 0 -2.6 -30 -.8 -31.3 -1.8 -10.7 -3.2 -3 -4 -7.6 -2 -.2 -1.4 2.8 -1.3 11 -.4 38 -.9 8.2 -1 -.8 -.6 -7.4 -.1 -40 -1.2 -16 -1.4 -3 -4.7 -3 -5 -1.8 -5 -.1 -13.2 3.9 -.5 1 2 2 1 6 .7 51 -1.3 31 -3.5 0 -1.9 -31 .3 -57 -.6 -1.3 -4 -.8 -10 0 -4 .9zM909.5 800.6l0 3 1 -1.1zM945.5 798.1l-2.1 3.4 -.5 3 1.6 2.5 2 .6 1.7 -1.1 1.6 -5 -1.3 -1.9zM966.5 805.5l1 1.1 4 -.1 4 2 1.1 -1 -3.1 -2.4 -5 -.6zM1015.9 817.5l-.4 1 4 .8 .9 -1.8 -.9 -1.7 -1 -.1zM1021.5 801.2l-1.2 2.3 2 4 1.2 5.2 1.6 -1.2 .7 -2 -2.4 -4 -.9 -3.6zM1063.5 799.5l2 1.8 1.6 -.8 .3 -1 -1.9 -1.9zM1068.6 807.5l.9 1.3 2 -1.4 4 -.2 1.1 -1.7 -1.1 -.9 -5 -.8 -1.8 1.7zM1107.5 794.1l-1.7 1.4 -.3 2 1.5 3 .2 3 1.3 1 1.4 -2 -.1 -3 2.6 -2 -3.9 -3.4zM1115.1 811.5l1.3 1 1.5 0 -.9 -1zM1132.9 790.5l2.3 3 -2.8 2 .2 3 .9 1 3 -1.1 4 .9 3 -2.4 4 .3 1.6 -1.7 -4.1 -6 -.2 -2 -8.3 -.4zM1152.7 800.5l-1.1 5 .9 1.6 8 -1.6 .2 -1 -3.9 -4 -2.3 -.8zM1178.3 806.5l3.2 4.8 3 .3 7.9 -4.1 -2.9 -1.6 -6 -.4 -4 -.9zM1238.6 815.5l3.9 .7 3.9 -.7 -4.9 -.9zM1325 808.5l-1.5 -.5 -3.2 1.5 2.2 .3zM1339.3 812.5l8.2 .8 6 2 2 -.8 -5 -2.3 -7 -.3zM1364.6 810.5l5.9 1.8 5 2.6 7 -3.1 21 .3 13.9 3.4 -3.2 1 4.3 1.9 4 0 1 -.9 -2 -1.6 -2.3 -.4 1.2 -1 -.3 -1 -6.6 -2.5 -9 -1.7 -10 -.2 -12 2.2 -15 -1.9zM1428.7 813.5l1.8 .7 1.7 -.7zM1463.3 815.5l2.2 1.9 1.1 .1 1.2 -1 -1.3 -1.5 -3 -1zM1495.8 813.5l2.7 .7 4 -.7 -3 -.7zM966.5 812.6l0 1.7 2 .5 -.5 -1.3zM1132.2 806.5l2.3 1.5 .6 -.5 -.6 -1.2zM1401 815.5l4.5 .7 3.5 -.7 -4.5 -.7zM1094.2 741.5l.3 1 -2.2 3 -5.8 3.8 -1.9 -.8 -.6 -3 2.5 -3.7 4 -1.3zM1106.1 743.5l.4 -1.2 2 -.9 2.5 .1 1.3 1 -3.8 2.7 -2 -.5zM735.5 748l0 5.8 -1 -.9 -.2 -2.4 .2 -2.3zM1107.2 751.5l2.3 -1.8 4 .8 3.1 6 -3.1 .9 -4 -.7 -2.5 -4.2zM963.5 752.9l1.2 .6 -.2 2.4 -1.2 -.4zM1100.5 756.2l2.2 .3 1 1 -.9 5 1.9 3 .2 3 -1.2 4 -4.2 1.7 -3.5 -1.7 1.1 -10 -1 -4 1.4 -1.8zM1114.5 764l0 -3.7 2 -.5 2 .7 .3 1 -3.3 3zM1054.5 763l2 -.3 3.6 1.8 .3 3 -1.9 3.1 -3 .4 -1.8 -1.5 -.5 -3zM1067.6 764.5l1.9 -1.1 1.4 1.1 -1.4 1.1 -1.2 -.1zM1089.5 763.3l2 -.1 .9 2.3 -.9 .8 -1.9 -.8zM950.5 764l1.8 1.5 .4 3 -2.2 8 -1 .3 -.7 -9.3zM963.5 763.6l1 2.9 -1 1.9 -1 -.3 -.7 -1.6 .7 -2.5zM987.5 765.4l1.1 1.1 .3 5 1.7 3 -.5 2 -1.6 .8 -1.4 -.8 -.7 -2 -.3 -6zM1210.9 768.5l0 1 -5 3 -.6 2 -1.8 .7 -3 -.4 -11 -4.3 3 -1.4 6 .1 6 -1.8zM1004.5 767.6l1.2 2.9 .4 5 -.7 3 -1.9 1.7 -1.2 -.7 .5 -9 .7 -2.3zM1267.5 768.5l7 -.1 1 1.1 -6 0zM1143.7 770.5l2.3 2 -.9 2 -2.6 1 -2.8 -1 .9 -3zM995.5 772.9l.9 1.6 -.1 3 1.6 3 .3 4 -2.7 3.2 -.9 -3.2 .5 -6 -1.1 -3 .5 -2zM1020.5 772.9l1 .6 .4 3 -2.4 11.4 -1 .8 -3 -1.2 -3 .8 -1.8 -3.8 .4 -3 1.4 -1.3 3 -.4 3 -5.8zM1062.5 774.5l2 -1.3 4 0 10 2.3 1.1 3 3.1 1 1.9 2 -2.1 3.4 -6 -2.3 -.7 -1.1 2.5 -3 -5.8 -2.2 -2.7 1.2 -4.3 4 -2.1 -2zM926.5 773.8l1 -.1 .5 2.8 -.5 5.9 -1.9 -3.9zM1087.5 774.5l2 -.5 2.6 .5 1.4 1 0 1.5 -1 1.1 -4 -1.7zM1309.2 774.5l.1 1 -1.3 1 -4.5 1.6 -20.9 .4 16 -4 6.9 -.6zM1228.9 778.5l2.6 -1.2 4 0 6.2 4.2 -.2 .9 -3 .6 -3.5 -.5zM1342.4 778.5l-8.6 2 -7.5 3 -2.6 2 -.1 1 1.6 1 14.3 2 1.6 1 -.2 1 -2.4 .7 -15 0 -6 -3.1 -3 -.6 -28 1.5 -9 -1 -2.9 -1.5 1.2 -2 3.7 -.9 12 1.7 14 -.3 4.5 -1.5 2.5 -4.1 14 -.4 1.9 -.5 .1 -2 2 -.4 9 .2zM1099.4 783.5l.6 -3 4.5 -.5 .1 1.5 -1.1 2 -2 1zM1359.7 781.5l.8 -1 3 -.5 6.5 1.5 0 1 -3.5 .2 -4.6 -.2zM980.5 781.8l1.4 1.7 -.4 3.5 -1.6 -2.5zM988.5 782.8l.3 1.7 -1.3 1.1 -.3 -2.1zM1002.5 782.5l2 1.2 1.5 2.8 -2.5 3.7 -3 -4.7 .7 -2zM1336.9 784.5l7.3 0 -.1 1 -3.6 .2 -2.6 -.2zM1174.6 786.5l.9 -1.1 13 -.5 2.6 .6 -2.6 3.9 -2 .9 -7 -1zM971.5 786.3l2 .5 .9 1.7 -.9 3.4 -2 -.2 -1.7 -2.2 .4 -2zM1198.9 787.5l-.5 1 -4.9 2.1 -1 -1.1 .5 -2 1.5 -.8 3 -.2zM1374 792.5l-.1 1 -13.7 1 -.4 1 4 2 -1.3 .4 -15 -.8 -4.9 -1.6 1.8 -2 9.1 -1.7 8 -4.4 3.1 .1zM1069.9 788.5l2.6 -.8 3 .2 1.9 1.6 .1 1.5 -1 1.2 -3 .2 -2.9 -1.9zM1388.8 789.5l7.7 -1.4 5.4 .4 -10.4 1.9zM1419 789.5l5.5 -1.2 2.8 .2 1.2 1 -1.3 1 -3.7 .4 -3.4 -.4zM1086.2 792.5l.3 -1.2 2 -1.1 3 -.3 1.8 .6 -1.1 2 -2.7 1.8 -2 -.2zM956.5 791.2l1.1 .3 1.6 2 -.2 1 -1.5 1.1 -1 .1 -1 -2.2zM1003.5 791.2l1.5 3.3 -1.5 2 -1.9 -2zM1308.5 792.5l-1 1.1 -7 .6 -12 3 -9 .9 -8.8 -.6 -2 -1 -.2 -1 .6 -1 2.4 -1 22 0 10 -2.6 3 .3zM1183.5 793.5l3 -1.5 1.9 1.5 -1.9 1.1zM1380 795.5l5.5 -1 1.1 2 -.7 1 -2.4 .6 -3 -1.6zM1527.3 797.5l4.2 -.7 6.5 .7 -.7 1 -3.8 .1zM1432.7 799.5l5.3 0 3.7 1 -7.2 0zM1592.7 799.5l5 0 -2.2 1 -1.6 0zM1635.4 804.5l3.1 -1.3 9 -.6 15 .7 3.3 1.2 -3.3 1.1 -14 1.3 -10.6 -.4 -2.1 -1zM1553.9 806.5l.5 -1 2.5 0zM1700.6 808.5l-8.5 3 -11.6 .6 -4.2 -.6 2.3 -1 11.8 -1 4.5 -2 5.1 0zM1599.2 819.5l9.3 -.8 3.4 -1.2 -8.6 -2 -.2 -2 4.4 -.9 11.2 .9 4.6 1 4.2 2.5 8.3 1.5 -2.6 1 -9.7 .6zM1674.3 819.5l10.2 -3 13.7 0 5.4 2 -1.4 1 -4.7 .3z"/>
<path fill="#00b758" d="M476.1 818.5l5.4 -48.3 3 -5.8 4 -24.6 7 -68.7 2 -10.6 8.3 77 2.2 14 4.5 17.6 1 .1 1.4 -6.7 3.6 -66.6 1 -5.3 2 31.3 2.1 57.6 1.9 14.5 1 -.3 1 -4.1 3 -32.8 1 .1 2.2 25.6 1.8 8.9 1 1.1 8 2.9 2 -1.1 2 -3.3 2.4 -7.5 4.9 -24 2.2 -20 3.5 -49.3 1 -4.5 3 26.9 1 5 1 1.6 1 -.9 2 -9.8 3 -37.5 1 -4.8 3 32 1 4 1.8 -10.7 3.2 -44.5 1 -4.6 4 42.9 1.1 -2.8 3.9 -43 4 41.3 1 3.3 1 -.1 2 -9 5 -84.9 1 3.9 2 31.7 1 2.8 3 -45.3 3 48.9 1 1.7 4 -67.8 1 3.4 2 22.1 4 -61.8 2 17.6 1 2.5 3 -18 1 0 5 36.6 4.1 62.1 1.9 14.8 3 -27.6 1 3.7 6 121.6 2 -13.4 1 .3 2 15.6 4 -105.4 2 -27.9 3 38.2 4 -51.3 1.8 15.4 -.3 7 .5 1.3 2 .1 .3 -1.4 -1.2 -6 1.9 -15.4 1 -.1 1.1 8.5 -.7 7 2 7 1.9 21 0 13 2.2 11 1 18 2.2 16 .1 13 1.4 9 1.4 27 -.3 8 1 5 .7 1.2 1.4 -2.2 -.7 -6 1.3 -10.4 1 -.6 2 7 3.9 -35 1.1 -18 1.7 -11 .3 -10 1.6 -9 1.2 -21 1.2 -6.2 1 -2 1 -.1 3 15.8 2.5 18.5 .4 10 1.5 8 -.4 17.6 1.4 2.4 2.6 9.1 3 -30.1 1 3.6 2 33.4 -.7 9 1.4 8 2.3 26 2 -12 1 .7 1 3 1 .5 2.2 -8.2 -.4 -6 1.6 -19 .6 -2 1.9 -2 -1.9 -5 -.2 -8 1.1 -6 1.1 -1.9 2.1 6.9 .6 7 -.6 9 2.9 12.5 2.3 -11.5 .7 -16.8 1 2.9 -.3 12.9 1.1 9 -.4 10 2.6 18 1 .8 2 -5.2 1 2 4 -39.9 1 -1.8 2 11.1 -.5 9 1.4 8 .1 13 1 4.1 2 -2 2 6.5 1 -2.7 3 -28.9 1 -.4 3 38 1 5 3 -20.5 1 -.7 1.1 6.6 1 24 .9 4 1 -.7 -.5 -7.3 2 -10 -.6 -12 2.1 -29 1 .2 1 8.4 2 31.1 3 -31.2 1.9 -8.5 .1 -13.4 1 -2.7 2 9.1 1 .6 6 -28.8 4 16 1 .7 1 -.7 .7 3.2 .5 14 1.6 14 -.5 10 1.4 3 2.3 14.1 2 -7.5 1 .2 3 26.1 1 0 2.6 -30.9 2.4 -18.1 1 2.5 2 18.6 1 1.9 1 -5.9 .6 -13 1.4 -5.4 1.4 7.4 -.2 13 1.6 16 1.2 3.4 2.6 -4.4 .9 -14 1.9 -7 -.3 -9 3.9 -23.8 2.3 12.8 -.1 3 -1.4 4 2.3 5 1.9 9 2 -12.7 1 -.1 3 30.7 1 -1.9 2 -15.3 4 4 1.9 -3.7 1.1 .3 5 13.5 1 -.1 1 1.8 .6 7.5 1.5 5 .9 -.4 3 -20.7 4 28.1 1 -1.1 1.4 -14.9 1.6 -8 1 1.3 4 27.5 1 -2.2 1.9 -12.6 .2 -8 .9 -2.8 1 1.8 1.8 20 -.7 6 .9 2.2 1 .3 .6 -8.5 1.4 -6.5 1 0 2 6.3 2.4 -7.8 -.2 -4 .8 -2.5 1 .7 2.3 21.8 .7 1.6 1 .3 1.5 -2.9 .4 -5 -.9 -6 1.1 -4 .9 -1 1 .2 1 1.6 .1 8.2 1.9 4 1 -.1 2 -4.9 0 -7.2 1 -.4 .8 1.6 0 6 1.2 2.3 1 -1.4 .8 -6.9 2.2 -6.2 1 1 3 11.2 -1.7 6 .1 3 1.6 2 3 .1 1.5 -2.1 1.2 -4 -2.9 -5 1.8 -4 .4 -9.2 1 -.1 1.3 2.3 .3 6 -1.3 4 1.7 2.8 2 .6 2 -.5 3 2 2.4 -.9 1.1 -2 -1.7 -2 -.6 -2 2.8 -4.7 2.9 2.7 2.1 4.5 5 -1.7 6 4.9 1.9 5.3 .1 4 1 .7 1.8 -1.7 1 -6 3.8 -2 -4.5 -6 1.5 -4 2.4 -1.2 4 2.1 3 -.6 1.5 3.7 -.5 1.9 -1 .5 -3 -1.1 -1 .5 -1.6 5.2 2.6 2.6 3 .7 4 4.5 5 .8 1.5 1.4 0 6 1.5 3.2 1.3 -3.2 4.7 -3 0 -1 -3.3 -3 .7 -7 3.6 -4.4 1.4 -3.6 2.6 -2 1 .2 3 3.3 4 .4 2 1.5 3.8 5.6 -.7 4 .9 1.6 5 -2.3 5.1 .7 3.5 -5 .1 -2 -2.7 -5.2 -8 3.5 -2 -.1 -1.5 -1.2 -.5 -3.1 6 -.9 1.1 -2 -.1 -2 -1 -2.1 -2 -1.5 -6 .9 -2 -3.3 3 -5.6 1 -.6 5 1.3 1 -.4 2.5 -4.7 .3 -7 -2.5 -5 1.7 -2 1.6 2 -.3 5 2.1 3 -.4 1.9 -1.8 2.1 .5 11 7.5 10 6.5 4 -.7 2.1 -3 -.8 -2.7 1.7 .9 4 -2 3 0 1 1.8 .7 5 -4.3 3 .2 1.1 -.6 2.3 -5 -1.9 -3 -.6 -6 6.1 -1.7 2 .4 4 5.2 3 2.1 2 -.3 4 -2.6 6 2 1 1.9 -2.8 3 0 2 .8 .8 2 .1 5 -3.3 5 2.4 1.2 -5 5.8 -2.4 2.8 4.4 .9 4 1.3 .6 1.7 -1.6 .1 -4 2.7 -2 -3.3 -3 -1.1 -3 5.9 -4 3.1 -4 4.7 -2 -1 -2 .1 -2 1.1 -1.4 2 -.6 3 .7 1.5 1.3 -.1 2 -3.2 3 0 1 1.8 1.3 5 -2.4 10 -.7 4 -1.2 2 .5 1.3 2.5 -.3 1.4 -2 1.4 -10 -.1 -4 2.3 -1.5 2 1.6 3 -1.8 2 .4 3 1.3 1.4 3 -1 5 .9 2 -2.4 5 -.1 1.7 -1.8 -3.7 -5 0 -1 2 -.2 4.7 2.2 -.9 3 1.2 1.5 7 .1 2 .5 3 2.3 4 -.4 4.5 1 1.7 3 2.3 2 -.4 2 3.7 5 3.2 .4 9.1 -4.4 -.7 -1 -4.4 -1.5 -3 .4 -3 -.7 .1 -1.2 2.9 -.3 3 .7 11.8 -5.4 4.2 -4.3 6 -.7 7.4 3 1.2 1 -.4 1 -3.2 0 -.2 2 -1.3 1 -12.8 3 8.3 2 10.7 1 2.8 3 -1.1 4 2.6 1 10 -.6 9 1.7 6.1 -1.1 -14.1 -1.4 -6.5 -3.6 0 -2 4.3 -3 -5 -1 -.3 -1 14.8 -3 -.3 -1 -12.8 -2 .4 -1 13.7 -3 -.6 -1 -5.1 -3 .2 -1 19.2 -2.1 5.1 1.1 -.1 1 -3 2 -8.8 3 -.8 1 3.6 2.7 8.8 4.3 -.1 1 -18.3 3 6.2 2 7.6 1 .8 1 -1.6 2 1.6 1.4 17 2.7 2.6 -.1 1.8 -1 .5 -3 -.7 -1 -8.2 -2 -.4 -1 1.4 -1 11 -1.1 16 .6 10.7 -1.5 2 -1 -1.7 -.5 -16 0 -6.4 -1.5 -1.2 -1 3.6 -1.6 13 -.7 12 -2.2 16.2 2.5 .3 1 -1.5 2 2.4 4 2.6 .5 6.1 -1.5 -3.3 -4 1.6 -1 3.6 -.4 7 .8 6.6 2.6 .4 2.3 6 1.8 38 -3.6 7.7 .5 2.3 2.7 12 1.1 18 -.8 1.8 1 -.8 2 -2.1 2 5.1 1.4 13 0 8 5.1 1.9 -.5 .3 -1 -4.1 -4 -6.1 -.5 -4 -2.2 1.3 -1.3 4.7 -.7 7.5 .7 5.5 2.8 5 .4 7 -1.1 9 .2 5 -.7 2 -.8 3.5 -3.8 4.5 -.5 5 .5 5.4 2 .2 1 -1.9 1 -9.6 2 .2 1 7.7 1.3 7.4 -.3 10.6 -2.2 1.8 .2 -.7 1 2.9 1.1 12 .2 5 -.7 .9 -.6 -1.3 -1 1.2 -1 4.2 -.3 8.8 .3 5.1 1 -.1 1 -2.8 2.1 -9 -.2 -8 4.5 -9 .2 -6 -1 -10 1.7 -15 -1 -9 1.5 -13 -.6 -3.9 -2.2 .9 -1 4 -1.3 12.3 -1.7 -.9 -1 -5.4 -.4 -14 2.7 -1.2 .7 .1 4 -1.9 .8 -7 -.2 -4 -1.6 -2.3 2 -10.7 .7 -26 .2 -8 -.9 -6 1 -48.3 0 -1.7 -1.1 -2 1.2 -122 1.2 -94.7 1.7 -65.3 1.8 -42 3.5 -44 -1.3 -62 -.2 -11 .7 -24 5 -30 10.3 -7 .3 -17 -1.9 -9 .9 -8 3 -13 8.1 -6 2.4 -6 0 -14 -3.9 -11 -1.8 -15 -1.1 -11 .4 -10 2.1 -9 3.8 -7 4.7 -11 9.4 -4 2.2 -4 .2 -10 -4.4 -4 0 -4 2.3 -9 9.6 -4 2.7 -5 .5 -8 -2.6 -4 -.4 -4 1 -4 2.5 -4.7 5.2 -4.3 6.8 -14.4 30.2 -18.1 0 -18.5 -29.3 -8 -9.8 -5 -4.5 -6 -3.8 -21 -9.6 -8 -5.9 -5 -5.5 -4 1.8 -1 -1.1 -4 -11.6 -6 -9.4 -1 -.7 -14 1 -10 -8.7 -23 -8.9zM723.5 733.8l-1.3 2.7 .3 1.1 1 .1 .6 -2.2zM756.5 780.4l-1 1 -1.1 5.1 1.1 4.9 1 .1zM965.6 805.5l1.9 1.8 4 -.3 4 2.1 1.9 -.6 -.8 -2 -3.1 -1.6 -5 -1.1zM1014.7 818.5l4.8 1.2 1.2 -2.2 -.2 -1.9 -3 -.1zM1021.5 800.9l-1.4 2.6 2.2 5 .2 4.9 2 -.9 1.6 -3 -3.5 -8zM1065.5 797.3l-2.6 2.2 2.6 2 2 -1 .3 -1zM1068.4 807.5l1.1 1.6 2.6 -1.6 3.4 .1 1.4 -2.1 -1.4 -1.2 -5 -.7 -1.6 .9zM1111.6 811.5l-2.1 .1 -1 3.2 1 -.1zM1113.6 811.5l3.9 1.8 1.1 -.8 -2.1 -1.5zM1127.5 805.2l7 3.1 1 -.8 -1 -1.6zM1151.9 800.5l-.7 5 1.3 1.9 7 -.7 2.2 -1.2 -.2 -1.6 -5 -4 -3 -.5zM1292.6 809.5l3.9 1.2 4 -.2 -.7 -1 -2.3 -.8zM1327.3 807.5l-3.8 -.1 -5.2 3.1 5.2 -.6zM1333.2 813.5l13.3 .1 8 2.1 1.7 -.2 .1 -1 -4.8 -2.4 -6 -.6zM1363.6 810.5l6.5 2 5.4 2.7 9 -2.8 18 .1 5.1 1 -7.8 1 -.9 1 1.6 .6 12 1 10 2 2 1.2 .6 -1.8 -1.3 -3 6.7 -.9 2.7 -1.1 -2.7 -.8 -7 1.3 -10 -3.3 -11 -1.8 -14 .4 -8 1.5 -14 -1.7 -2.3 .4zM965.9 812.5l-.3 1 1.9 1.9 2 .6 1.9 -.5 -1.9 -.8 -2 -2.3zM429.5 741.8l1 .2 4 27.8 2 7 1 -2.1 3 -17.6 1 .9 5 42.4 3 13.6 1 .6 3 -14.6 1 -1.5 1.6 21 -1.6 1 -4 -1.1 -9 2.2 -13 0 0 -75.5zM1108.4 751.5l2.1 -1.1 2 .4 1.3 1.7 .1 3 -1.6 0 -4 -3zM1100.5 756.5l2 .6 .7 1.4 -1.2 4 2 4 .3 3 -1.6 3 -3.2 1.1 -2 -.7 -.8 -1.4 .9 -9 -1.1 -3.3 1 -2zM1055.5 763.4l2 .2 2.5 1.9 -.4 3 -2.1 2 -2 0 -1.6 -2 .4 -4zM1090.5 763.8l1.2 .7 -.2 1 -1 0 -.5 -1zM950.5 765l1 .5 .6 2 -1.6 6.4 -1 -1.6 -.2 -3.8zM987.5 766.4l1.2 2.1 -1.2 2.6 -.9 -2.6zM1004.5 768.8l1.2 6.7 -.9 3 -1.3 .8 -.9 -1.8 .9 -8.2zM1208.1 769.5l-6.6 3.3 -7.8 -1.3 -1.8 -1 1.6 -.8 5 .5 6 -1.4zM1029.5 770l1 .4 1.2 2.1 -.2 2 -1 .8 -2.1 -2.8zM1140.2 773.5l2.3 -2.4 1.9 .4 .8 1 -.1 1 -1.6 1.3 -3 -.2zM987.5 772.3l1 0 1.4 2.2 -.4 1.7 -1 .5 -1.5 -1.2zM1020.5 773.5l1.1 3 -2.1 10.3 -1 .9 -3 -1.2 -3 .8 -1.4 -2.8 .4 -2.9 1 -.8 3 -.2 3.3 -6.1zM1062.9 775.5l1.6 -1.8 3 -.2 4.7 1 .7 1 -3.4 1.6 -4 3.3 -1.3 -.9zM964.5 774.1l1.8 2.4 .4 4 -1.2 3.3 -2 2.6 -1 -1.9 -.2 -6 .7 -3zM1307.9 775.5l-2.4 1.5 -3 .7 -11 .4 -2.4 -.6 2.4 -1.1 10.6 -1.9 4.8 0zM1088.8 775.5l3.1 0 -.4 .8zM1330.1 778.5l.5 -1 1.9 -.1 4.4 .1 3 1 -7.4 1zM467.5 779l1 .1 2.9 37.4 -.1 3 -2.8 1.4 -2.5 -.4 -1.4 -2zM996.5 779.2l1 4.3 -1 2.6 -1 -.2 -.3 -2.4 .3 -3.6zM1076.9 781.5l1.6 -1.7 2 -.3 2.9 1 .4 1 -2.3 1.9 -3.6 -.9zM1103.6 780.5l.3 1 -1.1 2 -1.3 .5 -1.4 -.5 .4 -2.4zM1235.2 780.5l1.9 0 1.4 1 -2 0zM1340.1 790.5l-.8 1 -2.8 .6 -10 .1 -4.4 -.7 -3.6 -3 -3 -.5 -8 -.1 -21 1.8 -9 -1.1 -1.8 -1.1 .8 -1.4 4 -.8 12 1.5 12 0 7 -2.3 1 -3 1.3 -1 13.7 .1 2 .9 -6.1 3 -1.5 2 .6 1 15 1.8zM1113.8 781.5l0 2 -1.3 1.7 -3 1.7 -2 0 -.3 -2.4 1.3 -2 3 -1.7zM1361.2 781.5l2.3 -.7 4.4 .7 -3.4 .5zM1002.5 783.4l2 .9 1.2 2.2 -.9 2 -1.3 .8 -2.3 -2.8 .2 -2zM972.5 786.5l1.2 1 .5 2 -.7 1.8 -1 .3 -2.3 -2.1 .4 -2zM1179.1 787.5l1.3 -1 4.1 -.8 4 0 1.2 .8 -1.2 2.2 -2 .9 -6 -.8zM1071 789.5l.5 -1 3 -.4 2 .9 .5 1.5 -1.5 1.5 -2 -.1zM1373.1 792.5l-1.6 1.1 -13 .8 -.3 1.1 1.2 1 -1.9 .7 -9 -.5 -4.3 -1.2 1.3 -1.5 8 -1.7 8 -3.4 4 .2zM1086.6 792.5l2.1 -2 2.8 -.1 .7 1.1 -2.7 2.3 -2 -.2zM1156 790.5l1.5 -.9 1.1 .9zM956.5 792.2l1 .1 .5 1.2 -.5 1.3 -1 -.3zM1003.5 792.1l1.1 2.4 -1.1 1.3 -1.4 -1.3 .4 -1.7zM1298.7 793.5l3.8 -1.3 3.6 .3 -2.8 1zM1269.3 795.5l1.2 -1.3 4 -.8 22 1.1 -8 2.4 -10 1 -6.5 -.4 -2.4 -1zM1379 800.5l4.5 -.6 4.7 1.6 -5.7 .2zM1637.4 804.5l2.1 -.8 7 -.4 16.6 1.2 -16.6 1.9 -8.5 -.9zM1479 807.5l6.6 0 -2.1 1.6 -3 -.5zM1607.3 815.5l.2 -1 3 -.7 7 .2 4.8 1.5 -.8 1 8.8 2 -2.8 1.1 -17 -.1 5.4 -2zM1682.3 818.5l3.2 -1 7 -.5 5.7 .5 1.5 1 -3.7 1 -6.5 .1 -7.1 -.1zM501.5 873.4l.7 21.1 -.7 8.2 -1 -2.2 -.4 -6 .4 -14.9zM450.5 878.1l1 3.7 .7 13.7 -.7 10.8 -1 3.9 -1.8 -14.7 .8 -12.6z"/>
<path fill="#00b32e" d="M488.3 817.5l2.7 -43 4.5 -43.9 2 -9.7 7 58.3 2.2 10.3 .8 1.2 2 -.9 3 1.1 1 -.8 1.6 -4.6 1.4 -10.2 2 -35.5 1 -6.4 2.9 58.1 .8 8 1.3 4.4 1 .6 1 -.9 1 -3 3 -26.6 1 0 2 18.5 2 6.3 9 1.7 2 -1.2 2 -3.1 4.3 -13.7 3.6 -18 5.1 -57 1 -4.4 3 23.5 1 4 1 1.1 1 -.9 2 -8.5 3 -34 1 -4.6 3 28.8 1 3.3 1 -2.6 4 -48.1 1 -4.4 4 38.4 1 -1.9 4 -42 4 37.8 1 2.5 1 -.4 1 -2.6 2 -17.2 4 -69.3 1 3.7 2 30.4 1 2 3 -44.1 3 47.1 1 1.4 4 -66 1 3.4 2 21.8 4 -59.3 2 17.1 1 2.8 3 -16.9 1 0 5 35.4 4 59.4 2 18.3 3 -26.3 1 2.7 6 113.2 1 -3 1 -10.3 1 -.4 2 17.9 .8 -6.8 3.8 -106 1.4 -18.1 3 43.5 3 -42.7 1 -2.6 .8 1.9 1.2 10.3 1.6 -5.3 1.9 -3 .5 -4.1 1 2.1 2.5 22 -.1 9 2.1 13 .6 25 .9 4.6 1 .7 1 3.6 0 11.1 1.4 8 1.4 26 -.3 10 1.5 10.3 1 .6 1.9 -5.9 .1 -11.9 1 -.5 1 14.4 1 1.6 1.2 -2.6 -.4 -6 2 -27 2 -14 3.4 -39 1.6 -8 1.1 -19 1.1 -4.9 1 0 6.3 45.9 -.1 18 2.1 6 1.3 8 .2 7 -1.1 6 2.3 3.2 1.6 -4.2 -.8 -10 2.2 -22.9 .7 3.9 1.5 22 -.3 4 -1.2 3 2.4 9 1.9 29.5 1 2.5 2 -14.5 1 .7 2 10.7 1.2 -11.9 1.6 -7 2.2 -25 1.2 -1 1.8 3.4 3 18.3 1 -2.4 2 -16.2 1.1 4.9 .2 17 -.6 4 1.8 3 1.4 9 -.1 8 -1.4 8 1.6 7.4 1.5 -2.4 .5 -9.7 1 -1.5 2 2.5 1 -.3 .2 -1 -.2 -4 -2 -3.9 -1 3.8 -1 1.1 -.9 -6 .9 -5.8 1 -.2 1 3.3 1 -4.2 1.5 -22.1 2.5 -14.5 .9 5.5 -.5 6 1.9 11 -.1 12 1.8 7.9 2 -3.5 2 7.3 2.5 -11.7 1.5 -16.4 1 .2 .8 14.2 3.2 26.2 3 -22.5 1 -.6 1.8 27.9 1.2 4.3 1 -.1 .4 -11.2 1.5 -8 -.5 -10 1.4 -12 .2 -12.4 1 -.7 .8 15.1 -1 3 1.2 .7 1 15.3 1 4.4 1.2 -4.4 .8 -17 2 -16 2 -7.1 2 3.9 1 -.7 3 -19.2 3 -12.2 4 16.3 1 .4 1 -2.2 .3 2.8 -.3 4.9 -2 -3.8 -2.6 4.9 4.6 2.1 2.3 13.9 -.6 11 1.6 4 1.7 13.5 1 3.8 2 -7.7 1 .3 3 25.4 1 .4 3.1 -33.7 1.9 -12.1 1.5 6.1 1.5 20.8 1 0 1.1 -10.8 1.8 -7 -.7 -6 .8 -6.1 .6 6.1 -.5 7 1.9 17 2 8 3.7 -9 .5 -12 2 -8 -.2 -8.1 2 -6.2 2.5 6.3 2.5 14.4 1 1.4 2 -11.9 1 -.6 2.9 27.7 1.1 2.3 2 -17.8 2 -.6 2 2.4 2 -5 1 -.1 2.9 7.8 2.1 9.5 1 .1 3 11.9 1 0 3 -17.4 1.5 5.9 2.5 18.5 1 -.9 2.3 -19.6 .7 -3.1 1 .8 3 24.2 1 3.3 1 -.5 .7 -2.7 .5 -8 1.6 -7 .2 -6.8 2.2 16.8 -.7 7 2.5 4.7 1.2 -2.7 .8 -12.1 1 -.4 1.4 6.5 .6 7.9 1 .1 .4 -1 .1 -9 1.5 -7.5 1 -.1 1.7 9.6 -.1 6 1.4 3.7 1 -.1 1.8 -3.6 .7 -6 -.8 -6 1.3 -3.8 1 .4 .5 1.4 -.1 7 2.6 6.4 1 -.3 2 -4.9 1 -.8 2 3.1 1 -1.1 1.7 -10.4 1.3 -2.7 1 .7 2.4 10 -1.6 7 1.2 2.7 2 1.2 3 -1.3 1.8 -4.6 .1 -2 -2 -3 1.1 -2.6 3 4.1 2 .6 2 -.7 4 2.1 3.1 -2.5 .2 -1 -2 -2 -.5 -2 2.2 -3.8 1 .2 2 2.6 1 5.4 3.3 -2.4 2.7 -.7 6 5.2 1 1.7 .3 6.8 1.7 1 1.7 -1 1.3 -6.5 3 -.9 4 3 3 .4 5 4.9 4 .3 1.2 1.8 .1 6 1.7 2.7 1 .1 .2 -2.8 6 -4 -.3 -1 -3.8 -3 -.1 -5 1 -2.7 4 -3.3 1.5 -4 1.5 -1.2 1 .1 3 3.2 4 .3 2 1.5 3.5 5.1 -.7 4 1.2 1.9 6 -2.4 5 .6 1.3 -3.1 2.7 -2.3 1.8 3.3 -2.2 3 .1 1 2.3 .9 5 -4 4 -.4 3 -5.4 4 1.1 2 -.5 .9 -1.7 -1.9 -2.5 -2 .3 -3 1.9 -1.7 -1.7 -.2 -5 .8 -1 4.1 -1 2 .7 3 4.3 3.4 3 2.6 -.2 4 -2.3 6 1.2 0 2.1 -2.5 1.2 .3 3 1.2 1.2 2 0 5 -3.2 5 2.4 .8 -.4 .3 -4 .8 -1 4.1 -1.5 1 .3 1.6 2.2 1.4 5.2 1 1.3 1 0 2.4 -2.5 .1 -4 2.7 -2 -3.4 -3 -.1 -3 5.2 -4 3.1 -4.1 5 -.2 4 1.9 5 -2.3 10 -.6 4 -1.1 2 .7 .8 1.7 -1.4 2 -11.4 .3 -5.2 3.7 -.5 1 1.8 2 .2 1 -1.7 2 1.4 4.2 1 .6 4 -.9 4 1.1 3 -2.7 3 .3 4 -1.5 3 .6 7 -.5 4 3 4 -.6 4 1.3 .7 2.1 2.4 2 .1 2 4.8 5.7 6 -.5 7.9 -4.2 .9 -1 -7.2 -2 .8 -1 11.6 -5 3.3 -4 3.7 -.8 5.2 1.8 .5 5 -1.9 1 -12.3 2 -1.5 1 2 1.2 19 2.1 2.5 2.7 -1.2 4 3.7 1.4 9 -.4 13 1.6 6.4 -1.6 -15.4 -1.8 -6.9 -3.2 0 -1 1.7 -2 7.2 -1.1 16.2 2.1 1.7 1 -1.7 2 .6 1 3.2 1.2 8.8 .8 7.2 1.7 3 -.2 2.8 -1.5 1.5 -4 -9.3 -1.9 -1 -1.2 2.1 -.9 6.9 -.6 18 .5 13.7 -1.9 1.2 -1 -1.9 -1.1 -17 .4 -6.6 -1.3 -1.2 -1 2.8 -1.4 25 -2.2 14 1.6 1.4 1 -1 2 1.5 3 -.9 1.4 -8 1.2 -6.8 3.4 6.8 .1 8 -3.9 10.2 -1.2 1.9 -1 -3.2 -3 0 -1 6.1 -.9 8.9 1.9 1.6 1 0 2 1.5 .9 6 1.6 38 -3.7 6 .5 2.6 2.7 2.4 .5 28 -.1 1.5 .6 .2 1 -3.4 3 .7 .7 18 1.3 10.5 6 -2 1 -36.5 .5 -2.6 -.5 -1.2 -4 1.2 -1 7.4 -2 -1 -1 -10.8 .6 -17 -4.5 -19 .3 -8 1.6 -13 -1.7 -2.9 .7 -.1 1 7 2.2 5 2.6 3 -.1 7 -2.3 13.9 .6 -1.5 2 2.6 1.1 11 .9 11.2 2 1.2 1 -4.4 .7 -34 -.3 -2.9 -.4 .2 -1 -1.3 -.5 -1 .5 0 1.3 -4 .5 -5 -.3 -2 -1 -3 1.3 -121 1 -126 2.1 -37.4 1.1 -38.6 3.1 -42 -1.5 -69 -.5 -12 1.2 -15 3.1 -33 10.7 -7 .2 -17 -2.2 -9 .8 -8.5 3.1 -14.5 8.6 -5 1.4 -5 -.3 -14 -4 -11 -1.9 -16 -1.3 -12 .4 -9 1.9 -8 3.3 -7 4.4 -11 9.1 -4 2 -4 .1 -9 -4.2 -4 -.6 -5 2.3 -9 9.3 -4 2.6 -5 .3 -11 -3.3 -4 .5 -3 1.4 -5 4.2 -5 6.9 -16 31.6 -4 4.2 -4 1.1 -5 -2.3 -5 -5.1 -18 -28.5 -9 -11 -9 -6.9 -20 -9.6 -9 -6.5 -6 -6.1 -4 -2.3 -4.8 -8.7 -6.2 -8.5 -19 -7 -15.7 -.5 -2.2 -1zM748.5 762.1l-1.3 4.4 .3 2.8 1 .3 1.1 -5.1zM772.5 793.2l-.6 1.3 .6 1.4 1 -.4 .1 -1zM845.5 794l1 6 .5 -3.5 -.5 -2.5zM886.5 799l-1 .5 -.1 1 1.1 1.3zM964.8 805.5l.7 1.4 2 1.3 4 -.7 5 2.4 2.2 -1.4 -2.2 -2.7 -8 -2.7 -2 .6zM1022.5 800.8l-1 -.2 -1.5 1.9 2.2 7 -.7 3.4 -1 1.3 -4 .8 -2.8 4.5 5.8 .6 1.3 -1.6 .7 -3.1 4.8 -4.9 0 -2 -2.1 -3zM1068.2 807.5l1.3 1.9 3 -1.7 3 .3 1.7 -2.5 -1.7 -1.5 -6 -.6 -1 1.1zM1083.5 817.4l-.9 1.1 .9 1.7 .8 -.7zM1105.2 808.5l2.9 0 -1.6 -.9zM1108.3 815.5l1.2 0 1.1 -2 1.9 -1.3 5 1.6 1.6 -1.3 -2.6 -1.9 -6 -.3 -1 .3 -.9 1.9zM1124.7 795.5l1.8 .5 .6 -1.5 -1.6 -.5zM1136.5 809.4l1 2 .9 -.9 -.9 -1.1zM1151.1 800.5l-.2 5 2.6 2.7 3 -1.1 4 .3 3.1 -2.9 -1.1 -1.6 -7 -4.1 -3 .1zM1190.6 813.5l1.9 1.5 2.8 -.5 -2.8 -1.3zM1289.2 809.5l8.3 1.8 5 -.8 -5 -2.6 -5 .4zM1331.6 813.5l.9 .9 12 -.6 9 2.1 4.3 -.4 -3.3 -2.8 -7 -1.3 -7 .1zM747.5 777.1l-.4 3.4 .4 1.3 1 .4 0 -3.2zM965.3 812.5l.5 2 2.7 1.9 3 .2 .9 -1.1 -4.9 -3.9 -1 -.1zM1125.5 804.5l3 2 6 2.2 1.8 -.2 -1.8 -3.1 -8 -1.5zM1305.4 815.5l-4.9 -.9 -2.3 .9 -.6 1 5.9 .3 1.5 -.3zM743.5 710l1 2.5 .6 6 -.6 4.5 -1 .2 -1.3 -6.7zM1100.5 757.3l2 1.2 -1.8 4 2.1 3 .8 4 -1.1 2.4 -3 .9 -2 -1.3 -.1 -7 1.3 -2 -1.6 -3 1.3 -2zM1039.5 760.2l1 .7 .2 1.6 -.2 1.3 -1 .4 -1.1 -2.7zM950.5 766.4l.6 2.1 -.6 2.1zM1054.8 768.5l.7 -2 3 -.9 .8 .9 -1.8 3.1 -2 -.1zM1041.5 768.8l.5 1.7 -.5 1 -1 -.1 0 -2zM1004.5 770.1l.7 5.4 -.7 2.5 -1 .3 -.1 -6.8zM1029.5 770.7l1.6 1.8 -.6 1.9 -1.5 -1.9zM1141.1 773.5l1.4 -1.4 1.3 .4 .3 1 -1.6 1zM988.5 773.6l.6 .9 -.6 1.4 -1 -1.4zM1020.5 774.3l.6 3.2 -1.6 8 -1 1.2 -3 -1.6 -3 1.4 -1 -2 .1 -2 .9 -1 3 .3 3.2 -6.3zM1063.7 775.5l.8 -1.1 3 -.4 2.9 .5 .4 1 -5.3 3.6zM964.5 774.8l1.3 1.7 .4 4 -1.7 4.1 -1 .4 -.8 -6.5 .8 -3zM1039.5 775.8l1 .3 .1 8.4 4.2 6 .4 2 -4.2 3 -6.7 3 -1.7 -1 -.3 -2 1.2 -.9 4 -.2 1.4 -2.9 -.3 -3 -2.1 -3.3 -7 1.1 -1.4 -1.8 -.1 -2 2.5 -4 1 -.4 6 1.4zM1122.3 778.5l1.2 -1.9 2 -.3 2 .6 1.2 1.6 -1.3 2 -2.9 1.1 -1.6 -1.1zM1294.2 776.5l7.3 -.7 2.1 .7 -6.1 .5zM1079.1 781.5l1.4 -1.1 2.1 1.1 -1.1 .6zM1102.5 781.4l.2 1.1 -1.2 .8 -.7 -.8zM1112.8 781.5l.6 1 -1 2 -2.9 1.6 -1.7 -.6 1.3 -3 1.4 -1zM1310.9 786.5l2.4 -2 .4 -3 .8 -.5 12.6 .5 -8.6 5.4zM950.5 784.4l.7 2.1 -.7 2.4 -.7 -3.4zM1002.5 784.2l2 .6 .7 1.7 -.7 1.9 -1 .4 -1.7 -2.3zM1181.1 787.5l4.4 -1.2 2.2 .2 .8 1 -1 1.1 -2 .4 -4 -.5zM1277.2 787.5l.7 -1 3.6 -.5 11.3 1.5 .1 1 -8.4 .6 -5.7 -.6zM971.5 787.1l1 -.2 1.4 1.6 -.3 2 -1.1 .7 -1.9 -1.7zM1239.2 789.5l.4 -1 15.9 -1.6 5 .3 1.1 1.3 -3.3 2 -10.8 2.7zM1321 789.5l1.5 -1 14 .9 2.4 1.1 -2.4 1.2 -10 .2 -3.2 -.4zM985.2 792.5l1.3 -2.7 2 -.9 4 2.5 3 -.8 1.1 1.9 0 2 -1.1 1 -3 -1.7 -1 .4 -2 3.5 -1 0 -2.8 -3.2zM1072 789.5l2.5 -1 1.6 1 .2 1 -1.5 1 -1.3 -.1zM1346.2 795.5l.3 -1.1 8 -1.5 7 -3.1 6 .6 4.6 2.1 -2.6 .9 -12 .2 -1.4 .9 0 2zM1087.2 792.5l1.3 -1.4 2.6 .4 -1.6 1.8zM1148.5 790.7l3.2 .8 -.2 1.6 -2 -.2 -1.2 -1.4zM1270.2 795.5l1.3 -1.2 3.9 -.8 17.9 1 -.8 1 -4 1.1 -10 1.1 -5 -.2 -2.9 -1zM1231 803.5l10.5 -1.7 3.1 -1.3 .4 -1 -13.5 -2 .4 -1 13.6 -2.2 3 .7 12.5 6.5 -1.4 1 -14.1 1.8 -11 0zM1045.7 796.5l.8 -1.2 1 0 6.1 3.2 -3.1 .7 -3 1.9zM1504.1 808.5l2.4 -2.1 4 -.6 6 .9 1.8 .8 .3 1 -2.2 1 -6.9 .8 -4 -.4zM1455.4 809.5l2.1 -1.1 6 -.3 6.1 1.4 1.2 2 2.7 .6 20.2 -.6 -1.3 1 -9.6 2 -.9 1 1.1 2 -2.2 2 -2.3 .1 -8.3 -2.1 -2.5 -4 .5 -1 -9.7 -1.4zM1558.1 811.5l6.4 -.7 5.8 .7 1.1 1 -1.5 1 -3.4 .1 -5 -.7zM1490.8 817.5l4.9 -2 16.8 -1.4 17 -.3 8 1.1 18 -.8 2.5 .4 .2 1 -3.7 2.1 -9 .6 -9 -1.3 -7 1.9 -4 .4 -14 -1.4 -3.5 1.7 -3.5 .3 -11 -.9z"/>
<path fill="#06af07" d="M518.5 793.2l1 -1.2 2 16.2 1.2 3.3 1.8 1.4 2 -1.3 1.3 -3.1 2.7 -17.2 1 -.2 2 11.5 2 2.9 9 -.2 2 -1.2 2 -2.9 4.6 -12.7 3.7 -17 4.7 -46.3 1 -4.4 3 19.8 1 3 1 .7 1 -.9 2 -7.4 4 -34.5 2.8 24 1.2 3.9 2 -9.3 3 -36.5 1 -4.3 4 33.7 1 -2.2 4 -39.6 3.5 31.3 1.5 4.4 1 -.7 2 -7.8 5 -76.4 1 3.6 2 28.9 1 1.4 3 -43 3 45.2 1 1.1 4 -64 1 3.3 2 21.6 4 -56.9 2 16.7 1 3 3 -15.9 1 0 5 34 4 59.9 2 16.1 3 -26.4 1 3.5 4.7 96.4 1.3 9.8 2 -11.4 1 -.9 2 16.8 1 -4.4 5 -119.7 3 44.2 3 -46.4 1 -1.8 2 7.5 1 -.7 2 -8.5 1 -.5 2 10.2 .5 11.8 1.9 13 .5 23 2.3 16 -1.2 5 3 4.6 .8 5.4 1.4 26 -.3 9 2.1 19 1 -.5 2 -11.5 1 .1 2 5.1 2 -5.7 1 -27.5 2.6 -19 1.4 -18 2.8 -23 2.2 -11.6 1 .1 3 8.8 2.2 16.7 .2 19 3.3 14 .2 7 -1 7 1.7 5 -.1 8 .5 2 1 .5 2 -3.2 -1.2 -4.3 .4 -5 1.8 -4.1 1.1 2.1 2.7 22 1.2 20.8 1 .9 2 -12 1 .9 2 10.9 1.8 -19.5 4.2 -29.9 2 5.4 1.9 15.5 -.8 26 1.9 7.6 .7 -2.6 -.3 -12 1.6 -10 -.4 -8 .4 -3.4 1 -1.4 .2 8.8 1.8 3 1.2 9 -1.3 17 .6 5 1.5 2.9 2.2 -5.9 .7 -6 1.1 3.3 2 -3.3 .8 -3 .1 -4 -1.3 -8 2.4 -26.7 1 .9 1 4.3 .2 15.5 2.8 17.5 2 -9.3 2 10.4 4 -25.5 5 37.4 3 -20.9 1 -.8 1.4 20.2 1.6 6.3 1 -.5 1 -2.8 -.2 -9 1.5 -9 -.4 -8 1.1 -8.3 1.6 4.3 .6 11 1.8 9.6 1.7 -8.6 1.2 -20 2.1 -13.3 1 -2.4 2 6.6 2.3 -5.9 1.7 -1.7 2.1 -7.3 -1.8 -3 .2 -6 1.5 -6.4 1 -1.3 1.9 8.7 -.4 3 -1.7 4 3.2 1.2 3 3.3 1.9 12.5 -.6 10 1.7 5 2 16.5 1 3.5 2 -8.6 1 .6 3 24.5 1 .5 1.3 -6 2.5 -31 1.2 -6.5 1 3.5 2 23.8 1 1.6 2 -17.1 1 -2.7 .7 9.4 2.1 11 -.8 6 2 9.6 1 .5 .1 -15.1 .9 -4.3 2.4 -4.7 .6 -12.7 2.5 -8.3 -.2 -6 .7 -3.1 1 .4 4 24.4 1 -.3 2 -11.4 1 -.6 3 24.4 2 2.1 .1 -10.9 1.9 -9.3 1 .4 2 3.4 2 -6 1 -.7 2.8 8.2 2.2 13 1 -.6 1 .5 .9 3.1 1.1 13.2 1 .5 .8 -1.7 -.2 -8 2.4 -14.1 1 2.8 3 20.8 1 -1 3 -22.6 1 .5 2.5 21.6 1.5 5.4 1 .2 1.7 -4.6 .1 -9 1.2 -4.8 1 1.6 .6 5.2 -1.1 7 3.5 8.1 1.4 -3.1 .5 -11 1.1 -1.3 .5 10.3 1.5 4.1 1.1 .9 1.3 -5 -.2 -8 .8 -5.8 1 .5 1 5.3 .7 14 1.3 1.2 1 -.4 2.2 -6.8 .8 -5.6 1 -.3 3 8.9 1 -.2 2 -7.6 1 -.5 2 3.8 1 -1 3 -14 1 .8 1.8 7.7 -1.1 8 1.3 2.5 2 1 2 -.5 1.8 -2 2.2 -6.7 3 1.1 2 -1.4 4 2.8 4 -3.6 3 1.4 4 -4.5 2 -.4 7 7.5 0 4.3 -1 .3 -3 -2.2 -5 -1.1 -3 -2.1 -1 0 -4 3.6 3.6 4 -2.4 4 1.8 2.1 3 1.6 2.7 -.7 .7 -2 -2.7 -1 -2.1 -3 .1 -1 3.3 -1.5 4 2.6 5 -1.5 3 .6 1.5 -2.2 .5 -4.5 2 -1.4 2 .6 3 3.1 3 0 5.3 5.2 -.5 3 1 1 1.8 -1 -1 -2 .5 -1 1.7 0 .9 6 1.1 3 1.2 1.2 2.6 -.2 -.7 -3 3.1 -1.7 1.5 .7 -1.2 3 .7 .6 6 .3 1.7 -1.9 1 -3 3.9 -4 .8 -2 -2.8 -5 -1.6 -4.7 -1 .2 -1.7 2.5 2.1 7 -1.4 3.8 -4 0 -5 -3.2 -1.1 -2.6 1.1 -5.1 1 -1.3 3.3 -1.6 1.7 -4.4 2 -1.1 3 3.6 4 -.1 3 2.5 2.2 3.5 -.7 4 1 2 2.5 .1 4 -2.3 5 .9 1.1 -.7 .9 -3.3 2 -.9 1.4 2.2 -2.5 3 .2 1 1.9 1.3 2 -.6 4 -3.3 4 -.5 3 -5 6 .7 3 -3.2 5 .9 3 -1.9 6 -.6 .8 1.2 -3.8 .9 -.3 1.1 2.3 3.8 2 1 6 -3.5 4 2.3 2 0 .7 -4.6 1.3 -1.1 3 -.6 2 1.9 1.5 6.8 -1.9 1 -.2 1 4.7 2 -.8 4 .7 1.7 1 -.2 2 -2.8 2 -.3 4 1.3 1.7 -.7 .4 -1 -2.1 -1.9 -6.7 -1.1 -1.8 -2 0 -1 2.6 -3 0 -4 3.8 -2 0 -1 -2.9 -.7 -1.6 -1.3 0 -3 5.6 -4 1.2 -3 2.8 -1 8 1.8 4 -2 9 -.3 5 -1.3 2.3 1.8 -1.3 1.6 -11 -.1 -7.6 4.5 -.3 1 3.2 2 .1 1 -1.9 2 2.5 4.9 1 .4 4 -.9 4 1.1 3 -2.5 5.5 0 .5 7 3 3.2 3 -1.1 5 .5 5.9 -5.6 -.3 -2 3.4 -.1 -2.2 2.1 5.2 1.4 8 8.8 6.2 -.2 2.4 2 3.4 1.1 4 -.1 .8 -1 -.8 -1.8 -2 .7 -5.3 -1.9 .5 -1 8.8 -3.5 5 -.5 12 1 3.2 1 1.3 3 -1.7 3 3.2 1.6 11 -.2 13 1.8 7.2 -1.2 3.8 -2 10 .4 8 1.8 3.7 -.2 3.1 -1 1.6 -3 1.6 -1.2 4 -.4 9 1.1 4 -.5 2.1 -1 -4.5 -3 16.3 -3 -1.2 -2 -2.7 -.8 -10 1 -9 -.3 -5 -1.9 1.5 -1 25.5 -1.9 14 1.7 -.4 2.2 1.2 3 -7.8 1.9 -4 2.5 -4.8 1.6 2.8 .8 6 -.4 9 -3.7 10.6 -1.7 1.9 -1 -3.7 -3 .2 -.6 4 -.9 8.6 1.5 1.6 1 -.1 2 1.7 1 7.2 1.9 11 -1.3 10 .2 11 -2.2 7 -.4 4.7 .8 2.3 2.9 14 .4 13 -.8 3.9 .5 .6 1 -2.5 2.3 -3 1.1 -11 .9 -4 -.5 -12 -4.2 -23 -.1 -7 2 -14 -2 -3.3 1.5 -.2 1 8.5 2.7 4.2 2.3 2.8 .2 8 -2.4 9 .2 1.3 1 0 1 2.7 1.4 21.8 2.6 1.7 1 -3.5 .4 -31 -.5 -6 -2 -1.9 1.1 -.3 1 -6.8 .2 -3 -1.2 -4 1.4 -49 .9 -5 -.4 -2 -3.2 -2 -.3 .8 2.6 -.5 1 -62.3 .3 -166 2.9 -35 2.6 -43 -1.6 -69 -.9 -12 1.1 -15 2.9 -33 10 -7 .2 -17 -2.3 -9 .6 -9 3.2 -14 8 -5 1.3 -5 -.3 -14 -4.2 -12 -2.2 -16 -1.4 -12 .4 -9 1.9 -8 3.2 -6.8 4.3 -10.2 8 -4 1.9 -4 .1 -9 -4.3 -4 -.7 -5 2.2 -9 8.8 -4 2.4 -5 .2 -11 -3.5 -4 .4 -3 1.2 -5 4.1 -5 6.6 -16 30.6 -3 3.3 -4 1.6 -5 -1.7 -5 -4.7 -20 -31.3 -10 -11.4 -8 -5.8 -18 -9 -7 -4.7 -9.9 -9.3 -12.3 -14 -10.8 -1.6 -2.3 -1.4zM772.5 789.8l-1.7 5.7 1.7 1.8 1 -.1 1.1 -1.7zM803.5 749.9l-1.1 1.6 1.1 2.1zM937.5 811.3l-1 .9 0 1.3 1 1zM959.7 805.5l.8 1.3 2.9 -1.3 -2.9 -1.8zM1068.1 808.5l1.4 1.3 3 -1.7 4 -.1 1.1 -2.5 -1.1 -1.6 -6 -1.2 -2 .3zM1083.5 815.6l-1.4 2.9 1.2 2 1.2 .1 .5 -1.1zM1096.5 814.3l-1.3 1.2 1.3 .7 .8 -.7zM1118.8 800.5l8.7 5.9 8 2.9 2 2.6 2.1 -.4 -5.1 -6.6 -9 -1.9 -5 -2.9zM1124 795.5l1.5 1.1 2.9 -1.1 -1.9 -2.5zM1167.6 815.5l1.9 1.4 2.4 -1.4 -2.4 -1.2zM1291.8 816.5l1.7 1.1 12 .2 1.5 -1.3 -.1 -1 -1.6 -1 -4.8 -.7zM1329.6 814.5l1.9 .9 7 -1.4 7 .1 11 2.5 2 -.2 .9 -.9 -4.9 -3.4 -8 -1.1 -13 1.2 -3.3 1.3zM1074.5 816.5l-.8 1 .8 2.9 1 -1.9zM1076.2 812.5l.3 1.7 1 .3 1.9 -1zM726.5 718l1.3 10.5 -.3 3.6 -1 1.6 -1.1 -5.2zM1099.5 763.8l2 1.1 1.2 3.6 -.2 2.2 -2 1.3 -1.8 -.5 -.7 -6 .5 -1.4zM1020.5 775.4l.1 4.1 -1.1 4.4 -1 1.6 -1 -.3 -1.2 -1.7 .3 -2 2.8 -6zM1065 775.5l2.5 -.8 1.5 .8 -2.5 1.5 -1 -.1zM964.5 775.9l1.2 3.6 -1.2 3.6 -1 -.3 -.4 -3.3 .4 -2.6zM1123.5 778.5l2 -1.3 2.3 1.3 -.4 1 -1.9 1.1 -1.9 -1.1zM1028.2 783.5l1.3 -3.4 2 -1.3 4.1 1.7 1.9 2 -7 3.7 -1.4 -.7zM1012.5 782.5l1.4 1 -.4 1.5 -1 .3zM1112.4 782.5l-1.2 2 -2.3 0 1.1 -2zM1315.2 782.5l2.3 -.8 4.8 .8 -4.8 2.1zM1039.5 784.3l4.1 7.2 -2.1 3 -2 .9 -.9 -.9 .8 -4 -.9 -6.1zM1002.5 785.3l1 -.5 1 .7 0 2.2 -1 .4 -.8 -.6zM972.5 787.3l1.1 2.2 -1.1 1.2 -1 -.6 -.4 -1.6zM1260.4 788.5l-3.8 2 -8.1 1.6 -4 -.7 -4.1 -1.9 1.1 -1.1 17 -1.1zM1280 787.5l5.8 0 .1 1zM988.5 789.4l1.9 1.1 1 2 -1.9 3.7 -1 .5 -2.2 -2.2 -.6 -2 .8 -2zM1073.4 789.5l1.4 0 .2 1 -1.5 0zM1322.7 789.5l2.8 -.5 9 .5 3 1 -2.1 1 -8.9 .1 -3.8 -1.1zM926.5 790.5l.8 2 -.8 3.5 -.5 -2.5zM963.5 790.4l2 1 .9 2.1 -.1 2 -1.8 1.6 -2.6 -2.6 .1 -2zM1358.4 792.5l1.1 -1.4 4 -.7 6 1.1 1.2 1zM994.5 791.2l1 .1 .7 1.2 -.7 2.5 -1.2 -.5 -1 -2zM1061.5 792.5l1.3 -1 2.8 0 1.2 1 1.7 4.4 -3 -.7 -4 1.8 -.7 -1.5 1 -2zM1212.1 795.5l.4 5 -9 2.3 -7.6 -.3 .3 -1 6.9 -3 1.5 -3 1.7 -1 3.2 -.2zM1271.3 795.5l1.2 -1.1 4 -.6 14 .7 .6 1 -3.6 1 -10 1 -5 -.7zM1349.4 794.5l3.4 0 .3 1 -3.6 0zM1233.8 797.5l.7 -1.1 11 -1.1 6 3 6.9 2.2 .9 1 -11.6 2 -7.2 0 5 -2.3 2 -1.9 -1.4 -.8zM1033.2 796.5l1.3 -1 1.5 1 -1.5 1.3zM1047 797.5l1.5 -.5 1.2 .5 -.1 1 -2.1 .9zM1157 797.5l5.1 0 1.1 3 -1.7 .4 -4.9 -2.4zM1190.5 804.5l1.1 -1 2.9 -.3 1.5 1.3 -2.5 .8zM1274.4 807.5l7.1 -1.2 12 .2 -1.3 1 -8.7 1.4 -7.1 -.4zM1232.1 809.5l2.4 -1.9 3 -.4 14.6 1.3 3.6 1 -1.4 2 1.3 2 -3.1 .7 -14 -.8 -6.4 -2.9zM1506.6 808.5l.9 -1 4 -.7 4.3 .7 .8 1 -6.1 1.1zM1456.8 809.5l2.2 -1 5.5 -.1 3.3 1.1 .6 1 -6.9 .5zM1427.3 816.5l10.2 -3.5 16 .3 5 1.2 7.5 5 -7.5 1.2 -28 .1 -3 -1.2zM1470.5 814.4l.3 -.9 1.7 -.3 5.9 .3 .3 2 2.2 2 -2.4 1.1 -6 -1.1zM1493.8 817.5l1.3 -1 6.4 -1.1 6.3 .1 1 1 -6.3 2.4 -6 -.4zM1512.3 815.5l13.2 -.6 4.4 .6 .1 1 -3.5 1.4 -5 .2 -9 -1.6zM1542.6 816.5l.7 -1 4.2 -.5 7.7 .5 -5.3 2 -3.9 0z"/>
<path fill="#2bb501" d="M524.5 819.5l3.5 -4 2.5 -9.2 1 -.6 2 5 2 .9 10 -2.1 4 -5.2 4.5 -11.8 3.2 -13 5.3 -40.9 3 15.9 1 2.1 1 .4 1 -.9 2 -6.3 4 -30.3 3 21.6 1 1.9 1 -2 4 -38.7 1 -4.1 3 25.3 1 3.2 1 -2.3 4 -36.9 3 25.2 1 4.6 1 1.1 1 -1.1 2 -7.3 1 -8.9 4 -62.8 1 3.5 2 27.3 1 .7 3 -41.8 3 43.2 1 .8 4 -61.9 1 3.2 2 21.4 1 -6.5 3 -48 2 16.3 1 3.1 3 -14.9 1 0 5 32.7 5.1 71.1 .9 3.7 3 -22.7 1 3.2 4.1 79.8 1.9 20.5 2 -16.1 1.8 6.6 1.2 10.5 1 -.9 2.5 -66.6 2.5 -43.6 3 43.1 1 -7 1.9 -45.5 .9 -7 1.3 7 .1 9 .8 1.6 2.4 -4.6 -.3 -9 .9 -4.6 1 -.4 3 24.4 1.2 22.6 1.5 12 -.4 9 3.7 11.3 2 45.4 1.3 9.3 0 11 .7 4 1.2 -3 .4 -12 1.4 -10.8 1 -.1 2 8.7 2.8 -11.8 1.2 -30 2.5 -16 3.5 -34 1.8 -10 1.2 -2.5 2 4.9 1.9 11.6 .5 22 3.4 14 .2 7 -1 7 1.6 5 0 8 1.4 4.1 1 .6 3.5 -6.7 -1.5 -4.3 1 -5.9 1 2.9 2.3 19.3 1.7 31.2 1 -2.1 2 -15.2 1 .8 2 13.4 1 -1.3 1.7 -25.8 3.3 -20.6 1 .7 1.6 8.9 -.4 25 2.8 19.8 1 1.2 3 -4.6 3 6.3 3 -9.1 1 .7 1 -1.3 2 -7 .7 -7 -.8 -8 1.1 -5 3 11.8 2 24.8 2 -2.7 2 1.9 1 .1 2.2 -3.9 -1.5 -4 -.4 -8 .8 -10 1.9 -7.9 1 1.6 1 6.1 2 30.8 1 .1 3 -26.2 1 1.2 .9 12.3 2.1 10 1 -.9 1.4 -4.1 -.2 -8 1.6 -11 .2 -11.4 1 1.6 .4 8.8 1.4 9 -.1 11 1.3 3.1 1.2 -3.1 0 -10 2.1 -16 .7 -14.3 1 -2.3 3 3.2 6 -21 2 -1.6 1.6 1 3.4 5.8 1.4 10.2 -.8 9 1.9 5 2.5 21.5 1 3.3 2 -10.3 1 .9 3 23.4 1 .2 1.4 -5 3.6 -35.3 3 26.6 1 1.6 1.1 -2.9 .9 -10.3 1 -1.2 2.1 10.5 -1.4 4 1.9 6 1.4 11.1 1.5 -7.1 .5 -14.4 1 -1.8 1 .2 1.1 -4 .9 -16.3 1 -3.4 2 -2.2 1.3 2.9 1.4 12 1.3 3.2 1 -.2 2 -9.1 1 0 3 22 1 .4 1.2 -2.3 .4 -12 1.4 -6.3 1 .8 2 5.3 2 -7.4 1 -1.3 2.1 5.9 1.9 13.2 1 2 1 -1.1 1.2 .9 1 12 .8 2.6 1 .7 1.3 -2.3 .1 -9 1.6 -8.4 4 23 1 -1.1 3 -22.8 1 .3 2.3 20 1.7 5.4 1 .4 .8 -.8 1.2 -4.1 1 -.7 1.7 2.8 .4 4 1.9 .7 3 -4.3 2 4.7 2 1.9 2 -.9 4 1.5 1.3 -.6 .6 -6 2.1 -5 1.2 3 .8 7 -2.1 3 3.1 1.4 1.8 -.4 .4 -1 -.4 -2 1.1 -10 1.1 -1.2 .8 12.2 2.2 1.2 1.9 -1.2 -1.1 -11 2.2 -12.4 1 1.1 1.3 4.3 -1 8 2.7 4.4 2 -.1 2 -1.6 3 -5.3 3 1.3 2 -3.9 2.2 2.2 .8 5.4 1 .5 3 -1.3 1 .6 1.1 1.8 -1.6 4 2.5 2.6 3 1.6 3 -1 1.3 -2.2 -.3 -1.2 -3 -.8 -.6 -2 .6 -1.3 2 -.6 3 3.4 4 -1.9 4 .1 1.6 -1.7 .7 -5 1.7 -1.4 2.7 1.4 2.3 3.3 3 -.7 3.8 4.4 .3 4 1.9 .8 2 -.3 4 6.1 9 -.8 3 .5 7.9 -11.3 -3.3 -7 -.2 -3 1.6 -1.3 3 1.2 2.4 3.1 .6 2 -.8 4 .8 1.1 3 .5 3 -2.1 2 -.4 6 1.6 3 2 6 -3.8 4 -.5 2.5 -4.4 1.5 -.9 4.1 .9 .9 .9 .5 6.1 1.5 .8 3 -1.8 3 1 2.5 -4 -1.5 -2 -4.8 -1 -1 -1 .8 -.5 9 .1 2.6 3.4 2.4 1.3 6 -3.6 6 2.7 1.5 -.4 .2 -5 2.7 -1 1.6 1.1 1 4.9 -1 1.3 -2 .2 -.4 2.5 6.5 2 -.1 5 1 1.2 1 -.1 2.7 -3.1 1.8 0 3.5 1.6 2.4 -1.6 .3 -1 -2.7 -2.4 -5 -.6 -2.6 -2 0 -1 3 -4 -1 -2 .4 -1 5.2 -1.7 .5 -1.3 -5.5 -1.2 -1.3 -1.8 .4 -2 2.1 -2 5.5 -2 -1.6 -1 0 -1 1.9 -1.4 9 1.9 5 -2 1.3 .5 -6.3 3.8 -2 .4 -7 -.9 -.4 .7 7 2 .5 1 -3.4 4 .7 1 1.6 .5 4 -.5 2.4 4 1.6 .9 4 -1.1 4 1.2 4 -2.2 2.1 .2 2.2 3 .8 4 2.9 2.8 4 -.7 4 1.1 4 -3.7 5 -.9 5.6 2.4 5.4 5.8 4 -.4 6 2.7 6 .4 1.5 -.5 .2 -1 -1.7 -2.5 -2 .7 -3.3 -1.2 .2 -1 1.5 -1 8.6 -2.3 12 .5 3.6 .8 1.8 2 -.4 1.5 -2.3 1.5 -.3 1 2.9 2 -3.3 1.2 -.6 .8 1.6 .2 5 -1.6 10 -.8 13 2.6 17 -3.6 16 1.8 6 -.9 .8 -2.7 1.4 -1 4.8 -.4 3.4 .4 1.1 1 -3.5 2 -5.3 1 6.3 1.5 9 .2 2 .6 1.6 1.7 -7.6 1 -17 -.8 -12 1 -25 -.8 -17 .8 -139 1.6 -46 2.9 -42 -1.8 -72 -1.1 -11.7 1.2 -14.3 2.7 -31 8.9 -7 .1 -17 -2.4 -9 .6 -9 2.9 -14 7.7 -6 1.2 -5 -.7 -15 -4.5 -10 -1.8 -17 -1.7 -12 .4 -8 1.5 -8 3.1 -6.8 4 -10.2 7.6 -4 1.8 -4 -.1 -9 -4.3 -4 -.8 -5 2 -9 8.4 -4 2.3 -5 0 -11 -3.6 -4 .2 -3 1.2 -5 3.8 -5 6.3 -16 29.6 -3 3.1 -4 1.5 -5 -1.8 -5 -4.9 -20 -31.3 -10 -11.4 -8 -5.9 -23 -12.5 -17.4 -15.2zM943 814.5l3.3 3 2.1 0 .2 -1 -1.1 -1.5 -3 -1.4zM1059 817.5l-1.5 -1.1 -2.9 2.1 2.9 .3 1.1 -.3zM1075.5 810.6l-.6 3.9 -2 2 1.6 4.5 1.4 -1.5 .6 -3.3 2 -.7 2.8 1 .5 3 1.7 1.6 2 -.6 .5 -1 -1.3 -5zM1098.1 814.5l-1.6 -.6 -2.6 1.6 .4 1 2.2 .1zM1118 799.5l.3 2 8.6 5 8 3 1.6 2.3 2 .6 2.4 -.9 -3.1 -3 -1.4 -3 -1.9 -1.2 -6 -.8 -8 -4zM1146.7 812.5l1.8 .8 1.4 -.8zM1165.7 814.5l.3 1 3.5 1.9 3.8 -1.9 -.5 -1 -2.3 -.7zM1125.4 813.5l1.1 .6 1.3 -.6 -1.3 -.6zM1131.5 817l-1.2 1.5 .6 1 1.6 .3 1.1 -1.3 -1.1 -1.6zM1149.1 818.5l4.4 0 -.6 -1 -2.4 -.3 -1.2 .3zM811.5 723.6l0 5.6 -1 -.1 -.2 -1.6 .2 -2.6zM752.5 763.2l1.2 4.3 .4 9 -1.6 12 -1 2.2 -1.1 -3.2 -.6 -14 1.7 -10.1zM1100.5 767.4l.9 2.1 -.9 1.1 -.9 -1.1zM1019.5 776.5l.6 3 -1.6 4.3 -1 -.7 -.2 -1.6zM770.5 777l1.1 11.5 -1.1 5.4 -1 -.1 -.4 -4.3zM1031.5 779.5l1.6 4 -2.6 2.2 -1.6 -1.2 -.3 -2 .9 -1.9zM1143.4 783.5l3.1 -1.1 1.5 1.1 -.6 1 -1.9 .3zM1040.5 787.7l1.9 3.8 -1.9 2.7 -.9 -.7zM1242.5 789.5l4.5 -1 11.5 0 -4.6 2 -4.4 .5 -5 -.5zM1324.2 790.5l2.3 -1 9 1 -6 .7zM988.5 790l1.1 .5 1 2 -2.1 3.2 -1.5 -1.2 -.7 -2 .9 -2zM963.5 791.1l1.4 .4 1 2 -.3 2 -1.1 .7 -2.1 -1.7 .1 -2zM994.5 792.4l1 -.2 0 1.9 -1 -.6zM1128.1 792.5l2.4 -.1 .3 1.1 -1.3 .6zM1272.4 795.5l1.3 -1 3.8 -.3 10.2 .3 1.9 1 -3.8 1 -8.3 .6 -4.4 -.6zM1019.5 794.8l2.4 3.7 -2.3 4 2 7 -.4 2 -1.7 1.5 -8 -3.4 -.8 -3.1 1.3 -4 4.5 -2.5 1.6 -4.5zM1210.5 795.5l.4 1 -1.5 3 -2.6 2 -5.3 1 -3.7 -1 7.6 -3 .1 -2 1 -1.1zM919.5 796.3l0 5.9 -1 -1.4 -.1 -2.3 .1 -1.8zM971.1 796.5l1.4 -.8 2 .8 3 4.9 2 .8 1 3.3 -1 .5 -3 -1.8 -4 -.2 -2.3 -1.5 -.6 -3zM1236.8 796.5l5.7 -.6 3.6 .6 -1.3 1 -4.3 .1 -2.8 -.1zM1289.4 800.5l2.1 -1.1 31 -.8 5.8 .9 -.1 2 .8 2 -.1 1 -7.4 .9 -2 -.6 -5 -4 -16 1.7 -7 -.8zM964.5 799.7l1.7 1.8 -2.7 2.7 -1.7 -1.7 1.1 -2zM1247.9 801.5l4.6 -1.7 3.7 .7 .6 1 -7.3 .9zM1302.2 812.5l7.3 -1.3 7 .6 6 -.6 10 -3.7 11.5 -2 1.9 -1 -4.4 -3 1.3 -1 3.7 -.1 5.1 1.1 1.5 1 -.4 2 8.6 3 -2.4 3 9.7 3 3.1 2 4.8 .6 8 -2.2 5 -.1 2.6 .7 1.4 2 3 1.7 13.9 .3 6 1 1.3 1 -16.5 0 -5.7 -1.5 -8 .7 -7 -1.8 -6 2.5 -6 -1.3 -8 1.8 -18.7 -.4 -3.3 -.6 -5 -2.3 -.9 -1.1 1 -1 3.9 -1 9 -.1 10 2.7 4.8 -.6 .2 -1 -6 -3.9 -11 -.9 -11 1.1 -4.7 1.7 -.7 1 1.3 2 6.8 4 -5.9 1 -15.8 -.1 -3.7 -.9 -2.1 -3 -.4 -2zM1047.5 804.1l.8 1.4 -1.8 1.7 -1 -.4 0 -1.6zM1387.3 806.5l6.2 -1.5 8 -.8 3.3 .3 1.3 1 .1 1 -1.9 1 -10.8 .5 -5.5 -.5zM919.5 804.7l0 4.9 -.9 -2.1zM1302.7 808.5l.8 -1.3 6 -1.2 8 -.3 2.4 .8 -1.6 2 -6.8 1.8 -5 -.1zM1367.5 807.5l10 -1 3 .8 .7 1.2 -1.6 1 -5.1 .1 -5.7 -1.1zM1439.5 808.5l-1 1.3 -3 1.3 -11 1.3 -5.1 -.9 -6.1 -3 24.2 -1zM1233.9 809.5l1.6 -1.2 4 -.5 13.6 1.7 -.6 3.3 -4 .8 -11.3 -1.1 -2.7 -1.5zM1458.7 809.5l3.8 -.7 3.7 .7 -.7 1 -2 .1zM1428.7 817.5l.8 -1.3 8 -2.5 13 -.2 6.3 1 6.6 4 .4 1 -6.4 1 -24.9 .1 -3.8 -1.1zM1010.3 818.5l.3 -1 1.9 -.7 0 1.7 -1 .6z"/>
<path fill="#56bb00" d="M529.2 819.5l2.3 -3.7 3 1.2 11 -3.3 5 -6.1 3.9 -9.1 3.2 -11 4.9 -31.3 3 12 1 1.5 2 -.9 2 -5.3 4 -25.9 3 17.6 1 1.4 1 -1.8 5 -37.5 2.7 19.2 1.3 3.9 2 -9.2 3 -27.1 3 21.9 1 3.4 1 .5 1 -1.3 2 -6.9 1 -7.9 4 -59 1 3.4 2 25.5 1 .1 3 -40.4 3 40.8 1 .5 4 -59.4 1 3.1 2 21.1 1 -5.6 3 -46.5 3 19.1 3 -14.1 1 0 5 31.7 5 67.8 1 5 3 -20.1 1 4 5 92.9 1 -.1 2 -18.3 1 -.1 1.5 18.3 1.5 8.8 3.1 -81.8 1.9 -27.8 3 47.9 3 -57.4 1 -4.4 2 4.8 3 -9.2 1 -.1 4.4 36.2 .6 18.9 4 18.2 .6 19.9 3.4 44.2 1.8 -9.2 1.2 -18.2 1 -.6 2 20.8 1 -4.2 .8 -15.8 2.1 -9 -.4 -7 1.5 -21.9 6 -49.5 2 -7.3 2 6.5 1 7.1 -.2 17.1 3 10 1.1 7 -.7 12 1.2 6 .1 7 3.5 10.4 3 -9.8 1 .3 1.1 4.1 2.9 44.4 1.2 -2.4 1.8 -18 1 1 2 16.5 1 0 2.8 -35.5 2.2 -12.5 1 1 .6 5.5 -.2 19 3.6 26.3 4 -6.1 1.3 2.8 1.7 9.4 2 -13 1 -1.5 1 2 1 -.4 4 -19.5 2 9.7 1 15.8 1 .9 2 -4 3 4.7 1 -4.2 1.7 -2.9 -1.4 -6 -.3 -6 .8 -10 1.2 -4.9 1 1.9 1 8 .6 24 1 3 1.4 .8 .9 -2.8 2.1 -21.2 4 22 1 -1.1 2.1 -8.7 -.1 -9.4 1 -5.2 1 -.8 1 6.4 -.2 9 1.2 5.6 1 1.2 1.9 -5.8 .1 -11 1.7 -11 3.1 -8 -1.8 -.7 -.4 -1.3 .3 -6 1.1 -.7 2 7.4 6 -26.2 1 -2.2 1 -.1 5.2 10.8 .6 7 -.9 7 2.1 5 3 29.3 1 1.2 2 -12.5 1 1.3 2 18.4 1 3.1 1 .2 1.6 -4 1.9 -20 1.5 -5.7 1.7 8.7 1.3 15.3 2 -8.1 1 -1.3 1 .6 2 4.8 .8 11.7 1.2 2 3 -14.6 1 2 2.3 -5.4 .3 -23 1.1 -5 1.3 -1.2 1.8 13.2 2.2 5.8 1 -.3 2 -7.9 1 0 2.6 20.4 .1 8 -.7 5.1 1 -.1 .4 -8 2.1 -10 .5 -11 1 -4.9 1 1.5 2 8.3 3 -11.8 1.3 2.9 2.7 16.3 1 1.8 1 -1.8 1 .5 .7 9.2 1.3 4.6 1 1.2 1.9 -3.8 .2 -8 .9 -4.3 2 11.3 -.1 9 2.1 2.7 1.7 -4.7 2.3 -18 1 -.3 2.2 17.3 1.8 4 2 0 .8 -1 1.2 -4.1 1 4.1 2 2.2 1 .1 3 -3 3 5 3 -.5 3 1.3 4 .2 4 1.9 4 -1.1 3 .7 4 -2.5 5 2.5 2 .1 .9 -1.9 -2.7 -5 4.8 -6.7 3 2.1 2 -5.5 1.3 1.1 1.7 9.6 9 6.1 3 -.3 4 -4.6 4 -2.5 5 -.6 1 -1.7 .8 -5 1.2 -.8 2.8 1.8 2.2 4.7 3 -2.2 1 .5 1.8 3 1.1 5 4.1 .5 3 5 2 1 8 -1.2 3 .4 1.9 -1.7 2 -4 4.6 -6 -3.5 -6.8 .1 -2.2 1.9 -1.4 3 1.8 1.6 2.6 -.9 5 1.3 1.5 2 .6 2.8 -.1 1.3 -2 1.9 -.5 9 3.7 6 -3.7 4 -.6 3 -4.9 3.7 0 1.6 1 .8 6 .9 1.5 4 -1.8 1.8 1.3 -.1 3 -2.6 3 2.9 5 1 -.5 2 -3.8 2 -.5 3.6 4.8 -.6 1 -39 2.5 -81 -2.8 -41 .1 -21 3.3 -29 7.9 -7 0 -17 -2.5 -9.2 .5 -8.8 2.7 -14 7.3 -5 1.1 -5 -.5 -15 -4.6 -14 -2.5 -17 -1.6 -12 .6 -7 1.6 -7 2.7 -16 10.5 -4 1.7 -4 -.1 -9 -4.5 -4 -.8 -5 1.8 -9 8 -4 2.1 -5 -.1 -11 -3.8 -4 .2 -3 1 -5 3.5 -5 6.1 -16 28.5 -3 3 -4 1.3 -5 -1.9 -5 -5 -20 -31.3 -5 -6.3 -6 -5.9 -8 -5.5 -20 -10.6 -11.5 -7.7 -11.5 -2zM1059.3 816.5l-1.8 -.7 -3.9 2.7 1.9 .8 3 -.2 .8 -.6zM752.5 766.6l.8 10.9 -.8 6.3 -1 1.6 -.9 -11.9 .9 -6.7zM1030.5 780.2l1 .4 .6 2.9 -1.6 1.7 -1.5 -1.7zM842.5 782.5l1.1 5 -1.1 2 -.7 -3zM1118.8 785.5l1.7 -.7 6.5 1.7 -.4 1 -7.1 -.9zM1112.3 791.5l2.2 -1.9 2 -.6 7.6 1.5 1 1 -2.9 4 .2 1 3.1 1 4 0 2.7 5 -2.7 .6 -4.8 -1.6 -5.1 -3 .4 -2 -7.5 -1.8 -.7 -1.2zM988.5 790.6l1.3 1.9 -1.3 2.1 -1 -.5 -.5 -1.6 .5 -1.5zM963.5 792l1 0 .8 1.5 -.8 1.9 -1.4 -.9zM1273.9 795.5l4.6 -1 9 1 -12.5 1zM940.5 795.4l1 .1 .6 2 -1.2 7 2.3 6 -1.7 3 -1 -.2 -1.1 -2.8 .1 -11zM972.5 796.3l1.2 .2 2.4 5 -.7 2 -2.9 .2 -2.1 -2.2 .2 -3zM1019.5 795.6l1.1 .9 .5 2 -2 4 2.2 7 -.6 2 -1.2 .8 -7 -2.5 -1.2 -1.3 -.3 -2 1.5 -4 4.8 -2 1.1 -4zM1075.2 802.5l4.3 -.8 6 4.8 5 -3.7 2 -.1 6.6 3.8 .4 2.6 7.1 1.4 .7 1 -.4 4 .6 1.1 2 .4 2.5 -2.5 2.5 -.1 2 4.4 1 -.2 1.1 -3.1 2.5 -3 -3.6 -2.8 -5.6 -1.2 -1.1 -2 4.4 -4 -2.3 -2 .6 -1 2 -.3 2 3.3 3.8 1 5.2 3.2 7.5 2.8 1.5 2.3 3 1 3.7 -.3 .3 -1 -3.3 -2 -1.7 -4 -3.7 -3 2.7 -1.5 5 1.1 5 -1.3 2.3 1.7 .7 3 3 4 2 .9 3.9 .1 .6 1 -2.8 0 -.7 -.7 -2 1 -6 -.3 -2 1 2 1.2 17 2.2 5 2.1 6.5 -2.5 .4 -1 -11.3 -2 -.9 -2 1 -3 1.3 -1 3 -.5 5.5 1.5 6.5 6.7 3.8 -.7 6.2 2.5 6 .5 3 -1 0 -1 -3 -3.4 -3 .4 0 -1.1 9 -2.8 12 .8 2.5 1.1 .5 1 -4.1 4 2.1 2 -3 .4 -.7 .6 .3 1 4.4 .8 8 -2 7 -.5 5.5 .7 1.5 1 .1 1 -1 1 -11.1 .8 -140 1 -1.8 -.8 3.8 -3.4 7 -1.2 1.8 -1.4 .3 -2 -1.1 -.4 -4 1.8 -5 1 -2 -.9 -3 -2.9 -4.9 -.6 -1.5 -2 1.4 -5 -1 -1.6zM1124.4 813.5l1.1 1.1 2 .2 2 -1 .2 -1.3 -3.2 -.2zM1129.1 817.5l1.4 2.7 2 .3 1.8 -1 -.3 -2 -1.5 -1.3 -2 .2zM1147.1 818.5l.4 1.1 5 .1 2.5 -1.2 0 -1 -4.5 -1.2 -2 .6zM1290.4 800.5l3.1 -1 13 -.5 4.1 .5 -3.5 2 -5.6 .6 -8 -.3zM1317.8 800.5l.4 -1 1.3 -.2 6.5 .2 1 1 .6 3 -1.3 1 -3.8 -.1 -2.1 -.9zM1100.5 800l1 -.4 1 .9 .5 2 -.5 1.2 -1.8 -.2 -.8 -1zM1199.7 801.5l1.8 -1.1 3.8 .1 -.8 1.1zM963.5 801.1l1.5 .4 -.5 1.2 -1.5 -.2zM1343.5 801.5l4 -.3 3.1 1.3 -3.1 .6zM1359 807.5l-.1 1 -3.4 1.8 -17 .4 -10 1.9 -1.3 .9 -.5 2 7.1 5 -14.3 .8 -7 -.7 -2.4 -3.1 -.3 -2 -2.4 -2 1.1 -1.1 16 -1.1 8 -3.2 16 -2.9zM1390 806.5l8.5 -1.6 5.4 .6 -.2 1 -4.9 1 -7.1 0zM1304.4 808.5l.6 -1 5.5 -1.1 5.9 .1 1.8 1 -1.1 1 -5.6 1.3 -4 -.1zM1370.3 807.5l6.2 -.3 2.3 1.3 -4.3 .5 -3.5 -.5zM927.5 808l0 5.5 -1 .1 0 -5.1zM963.5 808.2l1 .9 0 1.1 -2 2 -.7 -.7 0 -2zM1417.2 809.5l3 -1 13.3 -.5 3.9 .5 -.3 1 -1.9 1 -8.7 1.4 -5 -.4zM972.5 809.4l1 1.1 -1 1.8 -1.2 -1.8zM1235.8 810.5l.7 -1.2 5 -.5 7 1 1.5 .7 -.3 2 -6.2 .3 -3.3 -.3zM1361.4 813.5l4.4 0 -1.3 1.1zM1334.5 816.5l3 -1.5 6.5 -.5 10.5 2.8 8 .8 4 -2.7 13 1 7 -1.8 2 .6 2.1 2.3 -2.6 1 -7.5 -1.7 -6 2.6 -10 -.9 -3.3 2 -8.7 .2 -11 -1.2zM1430.8 816.5l6.7 -2.3 12 -.2 5.3 .5 6.5 4 -.1 1 -24.8 1 -6.1 -1zM1248.7 819.5l6.8 -2.2 9 -1.2 12 1.7 9 -.6 15 1.5 3.3 .8 .4 1 -13.7 .5 -9 -1.1 -8 1.3 -14 .1 -10 -.7z"/>
<path fill="#81c300" d="M539.6 819.5l7.9 -3.4 3.3 -3.6 2.9 -5 4.8 -12.9 4 -21.1 3 8.4 2 .7 2 -2.6 5 -24.4 3 13.8 1 .8 1 -1.6 5 -32.2 2.4 14.1 1.6 3.5 2 -8.5 3 -24.7 3 18.4 1 2.3 1 -.1 1 -1.5 2 -6.7 1 -6.9 4 -54.7 1 3.2 2 23.4 1 -.5 3 -38.8 3 38.2 1 .2 4 -56.7 1 3.1 2 20.8 1 -4.8 3 -44.9 3 18.7 3 -13.3 1 0 5 30.8 4 55.5 2 17.4 1 -3.3 2 -17.3 1 3.5 5 90.9 1.3 -4.2 1.7 -20.4 1 -.5 1.8 22.9 1.2 5.4 4.1 -90.4 .9 -6.9 1.5 26.9 1.5 6.5 1.1 -6.5 2.9 -50.5 .6 12.5 1.4 3.6 3 -14.7 2 4.1 2.4 17 .2 19 5.1 25 -.1 9 2.3 24 1 24 1.1 3.4 1.4 -4.4 1.6 -17.9 1 -1.4 1 12.8 1 4.1 1 -1.7 2 -25.6 .8 -3.3 1.2 -.3 .4 -1.7 -.9 -7 1.8 -24 3.7 -30.4 3 -17.1 1.4 6.5 .2 16 2.5 8 1.4 8 .4 24 3.3 12 .6 15 1.2 4 1.3 -2 .1 -18 1.6 -6.8 1 1.1 1.1 7.7 .4 23 1.5 15.6 1 3.2 1 -1.4 2 -16.9 1 1 2 14.7 1 .7 1.8 -7.9 2.2 -21.3 1 -.2 3.5 28.5 1.5 3.9 3 -7.3 1 -.4 2 10.7 1 1.9 1.2 .2 .8 -12.5 1 -1.3 1 3.5 1 1.1 2 -12.3 2 -6.3 1 3 .7 11.8 1.3 6.5 1 .2 2 -5.2 3 8.2 .9 -1.7 1.1 -8 1.9 -3 -2.1 -9 .2 -8.1 1 -5 1 3 .8 15.1 -.6 5 .9 9 1.9 2.8 1 .2 1 -1.5 2 -18 1 2 3 17.6 1 -.6 3 -13.1 1 .3 2 9.2 1 .4 2.4 -8.3 .4 -12 1.9 -11 1.3 -3.5 2 -.3 1 -1.6 2 -10.3 1.6 -4.3 2.4 -13.9 1 0 4.5 13.9 -1.2 8 2.6 3 4 37 1.1 .4 2 -12.8 1 1.7 1.8 15.7 1.2 2.5 2 -.6 1 -2.9 2 -20.2 1 -3.4 1.2 6.6 .3 16 1 6 1.5 2 1.3 -1 -.9 -5 .2 -7 1.4 -6 1 -.2 1.8 6.2 .2 10 2 3.2 3 -11.2 1 0 1 -1.3 3.4 -8.7 -.3 -9 .9 -10.1 .5 6.1 3.5 10.5 1 -.5 2 -10.1 1 0 1.7 13.1 .3 17.9 1 .1 .8 -2 3.2 -29.4 1 2.8 2 14.9 1 -1.3 -.1 -6 2.1 -10.9 4 18 1 2 1 -1.7 3 12.2 1 1.5 3 -7 1.3 7.9 2.7 4.2 1 .4 1 -1.8 2 -15.9 1 .2 2 13.7 2 2.7 2 0 2 -1.8 4 2.6 2 -2.4 1 0 3 4.2 6 .9 4 -.5 5 2.2 3 -.9 .8 1.2 -14.8 .6 -17 2.1 -32 7.8 -7 -.1 -17 -2.5 -9 .3 -7.1 1.8 -14.9 7.2 -6 1.5 -5 -.6 -15 -4.6 -12 -2.4 -17 -1.9 -12 .1 -8 1.3 -8 2.7 -16 9.9 -4 1.5 -4 -.2 -9 -4.5 -4 -.9 -5 1.7 -9 7.5 -5 2.2 -4 -.4 -10 -3.8 -5 -.1 -6 2.6 -5 4.8 -5 7.2 -12 21.5 -4 4.1 -4 1.2 -5 -2.1 -5 -5 -20 -31.1 -5 -6.2 -6 -5.8 -9 -6 -17.3 -8.4 -14.2 -3zM1030.5 781.1l.7 2.4 -.7 1.1 -1.1 -1.1zM1112.5 793.5l1 -2.6 3 -1.2 7.2 1.8 -.4 2 -2.8 1.8 -6 -.3zM972.5 797.1l1.2 .4 1.3 3 -.1 2 -1.4 .9 -1.7 -.9 -.8 -2zM1019.5 797l.6 1.5 -.6 1.1 -.5 -1.1zM1121.5 797.7l7 .4 1 .7 .9 2.7 -.9 .8 -3.7 -.8 -4.5 -3zM1291.6 800.5l15.4 -1 .6 1 -2.9 1 -5.2 .3 -6 -.3zM1026.5 800.1l2 .4 2.2 3 -1.2 4.6 -4 -3.8 -.3 -2.8zM1322.1 800.5l1.7 0 .4 2 -1.7 -.1zM1135.5 802.5l2 -1 4 1.2 4 -.8 2 .6 4.7 8 -6.7 1 -4 -1.1 -2.5 -1.9 -.5 -3.5zM1012.5 803.2l5 -1.3 1 .4 2.3 6.2 -.3 2.3 -1.5 .7 -6.5 -2.2 -1.2 -2.8zM1073.3 821.5l-2.8 .9 -27 1.5 -27.6 -1.4 -.3 -1 3.9 .8 10 -13.5 2 1.5 6 1.8 1 -.6 -.6 -2 1.6 -1.1 9 4.1 6 -4 4 -.4 3 -4.9 2 -.7 2.5 1 1 2 .4 6 -1.3 2 .2 2 5.2 2.8zM1046.7 815.5l4.8 4.7 7 -.6 1.6 -2.1 -.4 -2 -1.2 -.6 -6 2.7 -4 -3.4 -1 0zM1005.8 821.5l-1.3 .6 -8 .1 -13 -1.2 -5 .9 -13 -.6 -1.5 -.8 -1.3 -3 .8 -1.3 4 2.8 2 .3 2 -.8 7.9 -7 4.1 -.2 1.4 -.8 1.1 -2 .4 -4 1.1 -1.3 1.2 .3 1.5 2 1.3 9.2 1 .7 1 -.8 1 -5.2 1 -1.4 1 .5 1.9 7 1.1 .9 4 .5zM1085.2 811.5l2.5 -6 2.8 -2.2 2 -.1 4.3 3.3 .2 3 1.5 1.7 5 -1 3 1.3 -.2 4 1.2 1.8 6 -.3 3 2.5 1 -.1 2.3 -3.9 2.7 -1.6 4.5 2.6 2.4 4 -5.9 1.1 -21 -.6 -5 .8 -7.1 -.3 -.9 -1 1.7 -2 5.3 -1.2 2.6 -1.8 .1 -3 -.7 -.9 -4 2.2 -5 .7 -3 -.9zM1079.5 804.1l2 .3 2.6 3.1 -.5 2 -2.1 1.5 -2 .1 -1.6 -1.6zM1111.8 806.5l2.7 -2.1 6 -.5 12.4 5.6 .9 1 -.6 1 1.3 1 4 .8 6 -.2 4.5 1.4 .3 1 -3.1 2 -1.2 3 -7.5 .6 -1.5 -.6 -1.9 -4 -2.9 -2 1.3 -2.1 -3 -.9 -7 .9 -5 -3.2 -5 -1.4zM961.8 817.5l-.8 3 -2.5 1.1 -19 -1.1 -.3 -1 2.3 -2 5 1.8 3 -.7 .8 -2.1 -2.2 -5 2.4 -4.3 1 -.5 1.4 2.8 -.6 5 1.2 .7 1 -.4 1.6 -2.3 -.3 -4 .7 -2.7 1 1.4 .4 5.3zM1356.7 807.5l-.1 1 -3.1 1.1 -24.1 .9 3.6 -2 13.5 -2.2 6 .1zM1393.9 806.5l3.6 -.5 2.3 .5zM1166 808.5l2.5 -1.7 5 .6 2.5 2.1 1.7 3 -10.2 -.5 -1.5 -1.5zM1306.4 808.5l1.2 -1 2.9 -.5 5.6 .5 -.6 1 -4 .7zM940.5 808.2l1 .7 0 2.5 -1 -.6zM1236.2 818.5l-.3 1 -2.4 .9 -69 .9 -11.1 -.8 3.4 -2 1.7 -2.1 6 .4 5 1.8 10 -3.7 6 -.2 5 1.5 7 .8 4.9 -.5 1.2 -2 -4.1 -2.5 -.9 -1.5 1.9 -1.5 4 -.9 8 .5 3.5 .9 .7 1 -.7 1 -3.9 2 .4 2 -2.2 2 .5 1 3.7 1.5 4 .1 10.5 -2.6 5.1 0zM1421.8 809.5l9.7 -.8 2.7 .8 -2.2 1 -5.5 .7 -4.5 -.7zM1072.5 810.3l.9 1.2 -.3 2 -1.6 1.3 -2 -.4 -1.2 -1.9zM1241.2 810.5l3.6 1 -2.5 0zM1310.4 813.5l5.1 -.9 9.7 -.1 -.3 3 .7 1 5.6 3 .4 1 -17.5 0 -1.5 -1zM1432.3 817.5l2.8 -2 3.6 -1 10.8 -.1 5.3 1.1 3.5 3 -1.8 1 -19 .5 -4.6 -.5zM1336.5 816.5l.9 -1 8.1 -.4 14.4 4.4 -5.4 .6 -14 -1.7zM1251.4 819.5l6.1 -1.9 7 -.7 11.6 1.6 1.7 1 -2.3 1.1 -10 .4 -12 -.4zM1367.9 817.5l2.6 -.6 5 .6 -3 .9zM1280.7 818.5l5.8 -.5 14.6 1.5 -1.1 1 -10.5 .1zM1076.6 821.5l1.9 -2.6 2.2 1.6 -.2 1z"/>
<path fill="#adce00" d="M548.3 819.5l5.5 -5 3.5 -6 5.2 -18.5 2.3 4.5 1.7 1.5 3 -2.7 5 -20 3 10.1 1 .4 1 -1.4 5 -27.1 3 12 1 .2 2 -7.7 3 -22.1 3 14.6 1 1.4 2 -2.5 3 -12.5 4 -50.1 1 3 2 20.9 1 -1 3 -36.8 3 35 1 0 4 -53.5 1 3 2 20.5 1 -4.1 3 -43.2 3 18.2 3 -12.6 1 0 5 29.9 4.4 59.6 1.6 13.2 1 -1.6 2 -16.8 1 4.4 3.8 71.8 1.2 7.1 1 -2.5 2 -18.8 1 .5 3 22.8 1 -2.8 3 -70 1 -3.3 1 3.1 2 22.1 3.9 -56.2 2.1 4.4 1.8 -5.4 1.2 -7.7 1 -.6 1.7 10.3 .1 19 2.2 8 1.8 11 1.1 16 1.8 8 1.4 14 .9 27 2 6.2 1.3 -2.2 1.7 -11.5 1 -.3 2 10 1 -2 3 -29.2 2 -6 -.3 -8 1.9 -24 4.4 -28.2 1 1.6 4 15.6 .8 26 3.2 10.5 .5 13.5 2.5 14.1 2 -5.2 3 6.8 1.4 13.3 1.6 4.7 1 -1.1 2 -9.7 1 .2 2 8.6 1 1 1 -1.7 4 -19.7 2.7 18.7 2.3 5.2 1 -.9 2 -7 1 .6 2.2 9.1 1.8 .9 1.5 -.9 -.3 -5 .8 -3.1 .8 7.1 1.2 1 3 -19.5 1 -.3 3 17.2 1 -.6 2 -6 2 7.1 1 1.1 3 -4.5 1 -.3 3 3.9 1 .2 2 -4.3 1 -12.1 1 1.1 1.6 14 1.4 2.9 1 0 1 -1.9 .9 -9 1.1 -3.8 1.3 1.8 .5 8 1.2 1 1 -.2 1.3 -2.8 1.6 -8 .7 -13 2.4 -11.2 2 2.9 1 -1.4 3 -12.6 2 .1 .4 -11.8 .6 -4.2 1 -.3 1.8 6.5 .5 11 .7 1.6 2 .6 1 3 1.9 28.8 2.1 9 1 .4 2 -11.5 1 1.3 1.3 11.8 1.7 3.1 2 0 1.2 -2.1 2.8 -17.5 .7 13.5 1.7 7 1.6 1.2 3 -2.7 1 .1 3 3.8 3 -10.1 1 .1 1 -1.2 5 -11 1 -.2 2 4.5 1 -.8 2 -12.6 1 0 1.1 9.9 -.1 14 1 3.4 1 .2 1.3 -2.6 2.7 -21.6 1.8 9.6 1.2 2.1 2.4 -4.1 .6 -7.9 4 13.3 1 1.6 1 -.7 1 1.6 2 9.4 1 1.3 2 -4 1 -.4 2.6 5.8 3.4 2 1.1 -3 .9 -8.1 1 .2 1.1 6.9 1.9 3.3 2 .9 3 -1.2 4 1.4 2 -1.8 1 .2 3.2 3.2 -.3 1 -19.9 2.2 -25 5.9 -7 -.2 -17 -2.6 -10 .4 -7 1.8 -13 6.1 -6 1.6 -6 -.5 -14 -4.4 -11 -2.4 -16 -2.1 -12 -.4 -9 .9 -9 2.4 -7 3.3 -10 6.2 -4 1.4 -4 -.3 -9 -4.4 -4 -1 -5 1.5 -9 7.1 -5 2 -4 -.5 -10 -3.9 -6 -.1 -5 2.2 -5 4.5 -5 6.9 -12 20.6 -4 3.9 -4 1 -5 -2.2 -5 -5.1 -19 -29.3 -5 -6.3 -6 -5.8 -6 -4.2 -6.3 -3.2 -3.2 -1 -17.1 -2zM675.5 711.4l-.6 2.1 .6 1.7 1 -.4 .2 -1.3 -.2 -1.4zM726.5 760.5l1.2 5 -.2 13.8 -1 -.1 -.8 -7.7zM1113.4 792.5l1.1 -1.4 2 -.6 5.2 1 1 1 -1.2 1.5 -3 .6 -4 -.2 -1.1 -.9zM842.5 796.4l1.3 8.1 -.3 4.3 -1 2.1 -1.2 -1.4 -.5 -5 .7 -6.8zM972.5 798.3l1 .2 .6 2 -.6 2.1 -1.5 -1.1zM1124 799.5l.5 -.6 3 0 1.4 1.6 -1.4 .7zM1026.5 801.3l2 -.1 1.4 1.3 .6 2 -1 2 -1 0 -2.1 -2 -.5 -2zM1012.5 804l5 -.7 1 .7 2 4.5 -.7 2 -7.3 -1.9 -.9 -2.1zM1071.8 820.5l-3.3 1.2 -22 1.2 -24.7 -1.4 3.5 -7 4.2 -4.5 9 3.1 1.9 -1.6 -1 -1 .1 -1.1 1 .4 .3 1.7 4.5 1 .2 3 6 5.8 3 -1 5 -.2 1.4 -3.6 -.8 -2 -1.6 -.6 -6 2.7 -2.8 -3.1 3.8 -3.9 5 -.8 3 -4.7 2 -1.1 2 .8 1.3 2.7 -.4 5 -1.6 3 .4 1 5.3 3.3zM1139.5 807.5l2 -3.5 4 -1.1 1.3 .6 2.6 4 .8 3 -6.7 .1 -2.6 -1.1zM971 820.5l.3 -1 9.2 -7.8 3 .3 2 -1.2 2 -6.8 1.4 .5 1 2 .6 11.2 3.6 -2.2 1.4 -5.3 1 .2 .5 4.1 1.1 2 5.4 1.4 1.2 2.6 -1.2 .8 -8 .2 -5 -.7 -2 -1.5 -5 .3 -4 1.5zM1089.5 804.4l2 -.9 3 2 .2 2 -1.4 2 2.6 2 -.7 1 -4.7 .8 -3.3 -.8 -.2 -1 1.7 -2 -.6 -3zM1080.5 805.3l1.1 .2 1.2 2 -.7 2 -1.6 .8 -1.5 -.8 -.1 -1zM1113.4 806.5l2.1 -1.3 5 -.4 10.3 4.7 .1 1 -8.4 1zM1335.3 809.5l1.2 -1 6.4 -1 10.1 0 .1 1zM1167.4 809.5l1.1 -1.6 2 -.4 3 1 1.1 2 -1.1 1 -3 .2 -2 -.7zM950.5 808.7l1 .6 .2 1.2 -1.2 3.2 -1.2 -2.2zM1200.9 810.5l.9 -1 2.7 -.5 8 .4 1.8 1.1 -.9 1 -3.9 1.1 -8 -1.3zM1091.3 820.5l1.2 -1.6 6.4 -2.4 1.1 -1 1.1 -4 2.4 -.6 1.8 .6 .4 1 -.3 5 8.1 .7 2 1.3 .2 1 -8.2 .4 -5 -1.6 -4 1.8zM1313.6 814.5l1 -1 6.8 0 1.7 3 6.4 3 -1.1 1 -12.9 -.5 -1.6 -1.5 .4 -2zM959.9 819.5l-.4 1 -3 .5 -4.3 -.5 -1.8 -1 4.1 -2.7 2 -2.4 1 -.1zM1133.5 814.5l2 -1 10.5 1 .1 1 -3.6 4.8 -3 .3 -2 -.8 -1 -2.3zM1118.3 819.5l2.2 -3 2 -1.1 4.8 4.1 -.1 1 -4.7 .6 -4 -.5zM1339.4 816.5l1.8 -1 3.2 0 3.3 1 .6 1 -4.8 .2zM1435.3 817.5l1.2 -1.2 4 -.9 11.2 2.1 -1.4 1 -9.8 .8 -4 -.5zM1168.8 819.5l10.7 -3.2 6 -.3 20 2.2 3.7 1.3 -13.7 1.2 -26.5 -.2zM1157.4 820.5l.4 -1 5.7 -1.4 4.9 1.4 -.2 1 -1.7 .2zM1254 819.5l3.5 -1.2 7 -.7 7 .7 3.4 1.2 -2.1 1 -6.3 .2 -10.1 -.2z"/>
<path fill="#d8dd00" d="M557.3 819.5l5.2 -13.6 2.1 2.6 1.9 1 3 -2.6 5 -16.1 3 6.8 1 0 1 -1.4 5 -22.4 3 7.6 1 -.4 2 -7 3 -19.4 3 10.7 1 .5 2 -3.2 3.2 -13.1 3.8 -43.7 1 2.8 2 17.9 1 -1.3 3 -34.5 3 31.5 1 -.3 4 -49.8 1 2.9 2 19.9 1 -3.3 3 -41.4 3 17.6 3 -12 1 .1 5 29.4 5 66.8 1 5.2 1 -1.1 2 -14 1 3.1 3 57.2 .9 6 1.1 2.1 1.2 -2.1 1.8 -12.6 1 -.2 2 14.4 1 1.8 1.4 -2.4 3.6 -69.5 3 33.3 1.9 -16.8 .1 -11.3 1.1 -6.7 .9 -18.8 2 1.5 3 -6 1.1 2.3 .3 6 1.8 3 1.8 9 1.8 21 3.6 23 .9 27 1.7 6.3 1 1.3 1.5 -1.6 1.5 -7.7 1 -.6 2 8.3 1.2 -2 2.8 -24.3 2.7 -4.7 0 -19 2 -20 2.9 -19 1.4 -3.1 1.7 4.1 .8 5 1.5 25 3.2 12 -.1 10 2 9 1.9 24 1 -2.1 1 -13.9 1 -2 1.4 4 1.3 13 1.3 4 1 1 1.2 -1 1.8 -8.1 1 -.1 2 8.5 1 .8 1 -.7 4 -11.1 2.8 10.7 2.2 3.2 1.5 -1.2 1.5 -4.7 3 6.1 7 -.1 1.4 -2.3 .6 -8.3 1 0 1.4 8.3 1.4 2 1.2 -.8 2 -5.7 1.6 4.5 1.4 1.5 1 -.4 2 -4.2 1 -.6 2 3.3 2 1 1.5 -1.6 2.5 -6 1.1 7 .9 1.8 2 1.3 2.7 -6.1 .3 -8.2 .8 3.2 -.5 5 3.7 1.6 1.3 -1.6 2.2 -11 1.5 -16.8 1 -2.8 2 3.8 1 .2 3 -16.4 4 -4.1 3 6.4 2.2 1.7 1.4 19 0 10 3.4 10.4 1 .5 1 -1.6 1 -6.1 1.9 7.8 2.1 3.4 3 -.1 2 -5.2 1 -.9 1.7 5.8 1.3 1.7 1 .1 3 -2.5 4 3.9 1 -.9 2 -7.2 1 .5 1 -.9 2 -5.3 2 -2.9 2 1 2 5.6 1 -1.8 2 -12.8 1 0 .4 16.5 1.6 4.1 1 .2 1.5 -2.3 2.5 -15.1 3 6.1 3 -5.4 1 -.5 3 8.4 1 1.4 1 -1.3 1 1.4 2.3 10 1.3 0 2.4 -3.5 2 3.5 3 2.3 2 -.3 2 -2.8 2 2.6 3.2 1.2 .4 1 -8.6 .9 -25 4.9 -23 -2.8 -10 .2 -7.5 1.8 -13.5 5.8 -5 1.2 -6 -.6 -14 -4.4 -11 -2.3 -13 -1.8 -14 -.7 -11 .7 -8 1.9 -7 2.9 -10 5.8 -4 1.2 -4 -.3 -9 -4.5 -4 -.9 -5 1.3 -9 6.5 -5 1.8 -4 -.5 -10 -3.9 -6 -.2 -5 1.9 -5 4.2 -5 6.4 -12 19.7 -4 3.7 -3 1 -5 -1.7 -5 -4.6 -20 -29.9 -10 -10.5 -4 -2.3 -18 -1.7zM805.5 801.9l-.8 1.6 .8 1.5 .5 -1.5zM1027.5 802.3l2 .3 0 2.8 -2 -.9zM1065.5 804.7l.8 1.8 -.5 4 -2.3 3.7 -1 .5 -4 -2.3 -4 3 -2 .1 -1.5 -2 1 -2 2.5 -1.5 3 .6 1 -.5 4 -6.1 1 -.3zM1089.5 805.5l1 -1 1.9 0 1.1 2 -1 1.1 -2 .2 -1.2 -1.3zM1140.7 807.5l2.8 -2.8 2 0 2.9 2.8 .6 2 -2.5 .9 -4.2 -.9zM988.5 805l1.3 8.5 -1.3 4 -9 2.7 -6 -.1 -.5 -.6 7.3 -7 3.2 .5 2 -1.1 1.4 -2.4 .6 -4.4zM1012.5 805.1l5 -.5 2 2.5 0 2.4 -7 -1.8zM1117.7 806.5l1.8 -.7 2 .3 6.9 3.4 -1.9 1.1 -4 .1zM1023.4 820.5l2.6 -6 3.5 -3.8 8 3 5 .3 2.1 2.5 3.7 2 1.6 2 -.4 1.2 -4 .4 -19 -.8zM1103.5 812.1l.7 1.4 -1.7 2.6 -.7 -2.6 .3 -1zM992.1 819.5l3.4 -4 3 2.5 5 1.5 -1 1.1 -6 .4 -3.5 -.5zM1062.5 815.7l1 -.1 5.8 3.9 .1 1 -4.9 .6 -3 -.6zM1102 816.5l-2.1 3 -1.4 .7 -3.9 .3 -.9 -1zM956.5 816.8l1 .2 .8 2.5 -.8 .6 -2.3 -.6zM1172.3 819.5l8.2 -2.1 4 1.4 3 -1.6 10.7 1.3 1.1 1 -7.8 .7zM1119.3 819.5l1.2 -1.3 2 -.4 3 1.7 -3 1.1 -2 -.1zM1257.2 819.5l7.3 -1.1 7.4 1.1 -6.4 .6zM1316.9 818.5l3.6 -.9 6.4 1.9 -7.4 .5 -2.6 -.5zM1106.9 819.5l3.6 -.6 2.7 .6 -3.7 .7z"/>
<path fill="#ead400" d="M574.5 808l3 4 2 -1.7 5 -18.6 2 3.2 1 .6 1 -.9 2 -6.5 3 -16.7 3 6.9 1 -.3 2 -3.8 2 -6.2 1.5 -8.5 3.5 -36.4 1 2.4 2 14.7 1 -1.7 3 -31.6 3 27.5 1 -.5 4 -45.7 1 2.7 2 19.1 1 -2.5 3 -39.3 3 16.9 3 -11.4 1 .1 5 29 6 72.4 1 1 2 -11.4 1 4.8 2.4 37.9 1 5 1.6 1.8 1 -.6 2 -10.5 1 -.2 2 11.1 1 .8 1 -.6 1 -2.1 .9 -6.7 2.1 -43.8 2 26.6 1 3 1.5 -9.8 0 -12 2.3 -26 6.2 -14.1 1 .1 2 8.4 2.9 35.6 3.1 13.4 .4 21.6 1.8 6 1.8 2.4 1 -.1 1 -1.3 1 -2.9 1 0 2 3.4 1 -.5 1 -2.7 2 -19.8 3.5 -9.5 .3 -21 2.4 -19 2.8 -8.6 2 5.9 .8 12.7 2.7 15 -.2 4 -1.8 5 .3 1 3.2 1.7 .9 3.3 1.2 14 0 12 1.9 3.2 1 -.4 1.2 -2.8 .8 -8.8 2.4 11.8 2.6 3.8 1.5 -.8 1.5 -5.2 1 -.1 2 6.3 1 .4 2 -.7 3 -4.3 2.2 4.6 2.8 2.2 1.1 -.2 1.9 -2.5 4 2.6 2 -.9 3 .6 3 -1.3 4 1.4 1.2 -.9 1.8 -3.5 2 2.9 2 .2 3 -4 2 2.9 2 .4 3 -3.5 2.3 3.6 2.7 1.8 1 -.8 2 -4.6 1 -.4 3 2 2.1 -2 1.8 -8 2.1 -18.9 2 4.8 1 .6 1.7 -6.5 1.7 -13 1.2 -3 1.4 -.9 2 2.3 1.4 4.6 2.6 12.3 1.4 16.7 2.3 8 1.3 2.2 1 .5 2 -2.5 1 .5 3 4.8 3 .5 3 -3.2 3 3.8 2 -.5 2 -1.7 4 3.5 1 -.3 2 -4.6 2 0 3 -7 1 0 3 7.4 2 1.6 2 -10.7 .6 5.7 1.5 3 1.9 1 2.1 -3 1.9 -12.3 3 6.6 3 -7 1 0 3 11.2 1 .8 1 -2.1 3 9.5 4 -3.1 3.9 4.4 -22.9 3.6 -24 -2.7 -13 .9 -6 1.6 -11 4.4 -5 1 -5 -.4 -15 -4.4 -10.6 -2 -31.4 -1.6 -17 1.7 -5.4 1.9 -9.6 4.9 -4 1.2 -4 -.4 -9 -4.3 -4 -.9 -5 1.1 -9 5.9 -5 1.6 -4 -.6 -10 -3.9 -6 -.3 -5 1.7 -5.2 4 -4.9 6 -11.9 18.5 -4 3.5 -3 .8 -5 -1.7 -5 -4.7 -17.3 -25.4 -6.8 -8 -1.5 -1 -7.4 -1.5 -7 -.5 -2.5 -1zM805.5 799l-1 1.1 -.8 3.4 .8 3.1 1 -.3 1 -2.8zM1063.5 804.7l2 1.1 0 2.7 -1 3.1 -3 1.2 -1.9 -2.3 1.9 -4.3zM1142.5 807.5l3 -.7 1.6 1.7 -.6 .7 -3.6 -.7zM1121.2 808.5l1.3 -.8 2.7 .8 .7 1 -2.4 .4zM988.5 809.7l.2 5.8 -1.2 1.2 -1 0 -.8 -1.2 1.8 -5.4zM1025.4 819.5l1.3 -5 2.5 -3 1.3 -.3 7 3.2 3 .4 2 2.9 4 .4 2.6 2.4 -3.6 1 -8 -1.4 -9.5 .4zM1055.5 811.5l.3 1 -1.3 1.7 -2 -.6 1 -2.1zM981.5 813.3l1.7 3.2 -1.7 1.9 -2.4 .1 -.6 -1 1.9 -4zM994.7 819.5l.8 -1.3 2.9 1.3 -1.9 .7zM1063.1 818.5l1.4 -.5 1.4 1.5 -2.4 .1z"/>
<path fill="#f1bf00" d="M628.5 686.5l3 15.9 3 -10.8 1 .2 5 28.5 3.9 52.2 2.1 18.2 1 3.1 2 -8.3 2.6 26 1.4 4 2 1.7 1 -.3 2 -4.5 1 0 2 4.6 2 0 1.2 -1.5 1.5 -7 1.3 -22.4 2 17.9 1 -.4 2.6 -22.1 -.1 -10 1.5 -14 2 2.2 .6 -1.2 .7 -16 1.7 -7 1 -.8 2.1 7.8 1.9 21.8 0 8.2 -1 4 1 .3 1 2.5 2.7 17.2 -.2 14 .5 1.3 1 0 2 5.7 2 1.7 2 -.4 1 -1.1 3 .8 2.5 -3 1.5 -13.4 4.7 -17.6 .3 -22 3 -16.2 1 -2.1 3.9 24.3 -.2 5 -1.5 6 2.7 2 2.1 4.1 1.2 12.9 -.1 13 2.9 4 1 -.2 2 -2.6 1 .6 2 4 2 1.3 4 -1.8 2.5 2.7 -.6 1 -13.2 2 -7.7 3.1 -4 .7 -4 -.8 -7 -3 -7 -1 -6.1 2 -6.9 4 -4 .9 -4 -.7 -11 -3.8 -8 .4 -5 2.5 -5 4.6 -15 21.1 -3 2.3 -3 .7 -5 -1.9 -5 -4.6 -18.4 -25.5 -4.3 -2 -6.7 -1 -2.1 -1 2.5 -10.4 3 .5 2 -3.7 4 -18 3 3.4 2 -3 2 -5.3 3 -14.1 3 -28.5 1 1.8 2 11.3 1 -1.9 3 -28.4 3 23.1 1 -.7 4 -41.1 1 2.6 2 17.8 1 -1.9zM837.4 820.5l-5.9 .4 -16 4.9 -5 .6 -20 -4.7 -20 -1 -1.2 -1.2 1.2 -1.5 3 1.4 4 -1.8 4 .9 3 -2.2 3 2.5 3 .6 2 -4 1 -.6 2 1.9 3 -.9 3 -8.1 1 -.9 1 2 1 .6 1 -.8 1.6 -4.1 0 -10 2.4 -17.8 1 -4.1 1 -1 1.4 2.9 2.4 13 2.2 6.9 1 11.3 2.6 8.8 2.4 2 2 -1.5 1 .3 2 2.9 3 1.2 2 -.1 2 -1.3 1.9 1.5zM884.5 820.5l-6 1.4 -9 .5 -20 -1.7 -1 -1.2 1 -1.1 2 -.3 3 -4.3 1 -.3 2 3.2 3 2.3 2 -3.4 1 -.1 2 1.7 2 -.4 1.8 -3.3 1.2 -8.2 2 7.2 1 .8 3 -10 1.3 1.2 2.4 11 1.3 .9 1 -.8zM1064.5 806.4l-1 4.4 -2 .4 -.4 -.7 1.4 -3.9zM1026.8 816.5l1.7 -3.5 2 -1.2 4.1 1.7 3.8 3 -2.9 2.8 -5 .6 -3 -.9zM840.8 819.5l1.7 -1 1.4 1 -.2 1 -1.2 .2 -1.5 -.2zM888.6 819.5l.9 -.6 .8 .6 -.8 .9zM1043.3 819.5l3.2 -.6 1.4 1.6 -3.4 .3 -1.1 -.3z"/>
<path fill="#f4a100" d="M628.5 704.9l3 14.8 3 -10.1 1 .1 5 28.6 5.5 63.2 1.5 5.3 1 .5 1 -.5 2.6 9.7 3.4 2.8 4 -1.6 3 1.7 3 -1.9 2 -6.9 2 4 1 -.7 4 -35.8 3.2 -4.6 1.8 -27.3 1 -1.2 2.4 20.5 -.3 12 3.1 16 -.1 10 .9 10 3 2.7 1.5 4.3 -13.5 3.2 -15 -2.8 -7 .2 -6.5 1.4 -6.5 5.5 -12 16.3 -4 3 -3 .6 -4 -1.3 -5 -4.1 -15.6 -20 -7.2 -2 -1.6 -1 3.4 -15.2 2 .6 1 -.6 5 -12.9 2 -9.7 3 -24.4 1 1.1 2 7.9 1 -2 3 -24.9 3 18.5 1 -.9 4 -36 1 2.4 2 16 1 -1.4zM712.5 756.4l2.5 12.1 -1.5 13 3 3.4 3 13 .2 15.6 2.8 4 2 .6 2 -1.1 2.5 2.5 -1.5 1.3 -15 2 -8 -1.1 -3.3 -1.2 2.6 -7 .7 -6.1 4.9 -21.9 .5 -21 1.1 -6zM811.5 779.7l8.6 35.8 2.4 2.6 4 -.1 1.4 2.5 -16.4 3.2 -19.7 -3.2 .7 -2.2 1 -.5 2 1 3 -.5 1.9 -1.8 2.1 -4 2 .7 2 -3.2 1.4 -4.5 .9 -15zM882.8 819.5l-4.3 1.5 -8 .4 -8 -.7 -.4 -1.2 1.4 -1.2 2 .7 2 -.5 3 -3.7 2 2.4 1 .1 1.6 -1.8 1.4 -5.3 1 1.1 1.7 6.2 1.3 1.3zM1029.1 813.5l1.4 -.9 2 3.4 3 .1 .1 1.4 -5.1 1.5 -1.7 -.5 -.6 -2zM853.4 819.5l2.1 -1.5 2.6 1.5 -.6 1 -2 .1z"/>
<path fill="#f47a00" d="M628.5 723.5l3 13.3 3 -9.3 1 .2 5 28.5 4.7 50.3 2.3 8 4.2 5 -.6 1 -4.8 1 -4.5 2 -11.3 13.9 -4 2.7 -3 .5 -6 -2.7 -5 -4.8 -7.8 -9.6 -8.6 -4 6.4 -20.1 4 -25.7 1 .3 2 4.8 1 -2.1 3 -21.2 2 11.2 1 2.6 1 -1 4 -30.8 1 2.2 2 13.5 1 -1zM680.5 769.9l.1 9.6 1.9 5.4 1.5 8.6 .2 6 -.8 5 1.6 5 .5 7.1 3.2 2.9 -1.2 1 -8 1.5 -12.4 -1.5 -.6 -1 1 -1.2 3 -.1 1.3 -2.7 2.7 -20.8 1 0 1.1 1.8 -.9 -5 .5 -5 1.3 -4.4 1 -.9 1 .2 .9 -1.9 -.5 -6zM712.5 785.1l2.2 3.4 2.9 13 .3 13 3.9 5 -1.3 1.2 -7 1 -9 -1.1 -1.3 -1.1 2.9 -4 3.5 -24 1.9 -6.1zM811.5 787.8l1.1 2.7 3.6 18 2.9 8 2.4 4 -10 1.7 -10.9 -1.7 -.1 -1 5 -3.6 3.3 -7.4 .7 -14.4zM870.5 818.5l1.3 1 -1.3 1 -1.4 -1zM874.6 819.5l1.9 -1.4 1.7 1.4 -1.7 .8z"/>
<path fill="#f65300" d="M628.5 741.9l3 11.6 3 -8.2 1 .3 5 28.3 3.5 34.6 2.8 11 -1.2 1 -7 2 -9.1 9.2 -3 1.7 -3 .3 -5 -1.9 -10.2 -9.3 -6.3 -2 -1.3 -1 2.8 -12.3 3 -17.9 1 -.4 1 1.8 1 .4 1 -2.2 3 -17.8 2 8 1 1.5 1 -1.2 4 -25.6 1 1.8 2 10.8 1 -.8zM680.5 788.1l1.8 6.4 0 10 2.8 15 -1 1 -2.6 .6 -8 -.4 -1.4 -1.2 2.4 -11.9 3.4 -7.1 1.4 -10zM712.5 792.7l3.2 9.8 .5 13 2.7 4 -5.4 1.5 -5.4 -.5 -1.4 -1 1.5 -4 .7 -7zM811.5 796.5l1.5 9 2.1 7 4 7 -1.6 1.3 -8 .5 -3.7 -.8 -.5 -1 5.4 -11 -.1 -8z"/>
<path fill="#fa2e00" d="M628.5 759.8l3 9.5 3 -6.6 1 .5 5 28.1 3.5 28.2 -1.5 1.1 -8.4 1.9 -6.6 4.2 -4 .7 -4 -1.3 -5.7 -3.6 -8.6 -2 -1.3 -1 2.6 -15.1 1 -1.2 1 .5 1 -.4 1 -2.3 3 -14.9 2 5.1 1 .6 1 -1.3 4 -20.9 1 1.3 2 8 1 -.7zM679.5 804.6l1 .6 2.7 14.3 -3.7 1.2 -5 -1.2 2 -3.8zM807.5 819.5l2 -4.9 2 -2.7 1 .4 4.2 7.2 -1.8 1 -3.4 .4 -2.9 -.4zM709.5 819.5l3 -3.6 2 1.3 1.2 2.3 -3.2 .9z"/>
<path fill="#f90e00" d="M634.5 779.7l1 .8 5 27.1 1.1 11.9 -6.1 1.8 -11 1.2 -11 -1.3 -6.3 -1.7 .3 -2 2 -1.9 1 -2.4 3 -12.6 2 2.5 1 -.1 1 -1.5 4 -16.8 1 .7 2 5.5 1 -.7 3 -13.6 3 7.7zM809.7 819.5l1.8 -3.1 2.2 3.1 -2.2 .6zM679.5 817.3l1 .4 .3 1.8 -2.2 0z"/>
<path fill="#db0700" d="M634.5 796l1 1.1 2.7 13.4 -.1 9 -3.6 1.3 -7 .5 -7 -.2 -7.9 -1.6 .9 -4.7 2 .4 2 -2.4 4 -13.9 1 .3 2 3.3 1 -.7 3 -9.8 3 6.3 1 -.1z"/>
<path fill="#be0400" d="M635.1 812.5l.2 7 -6.8 1.1 -8.7 -1.1 1.7 -6.8 1 -.2 2 1.5 1 -.7 3 -7.1 3 5.3 3 0z"/>
<path fill="#000" fill-opacity="0.1" d="M634.5 339.2l-1 246.7 -1 -2.8 -1 -52.1 -1 -5.7 -1.5 254.2 -1.6 37 -.9 2.2 -3 .5 -2 7.3 -3 100 -39.9 0 -4.1 -42.1 -4 -23.4 -4 -10.7 -6 -3.5 -3 3.1 -1.5 6.6 -4.5 48.6 -1 1.9 -1 -1.5 -1 1.5 -1.2 19.5 -4.2 0 -1.2 -60 -1.4 -13.5 -1 -3.2 -1 -.2 -2.1 16.9 -.6 60 -7.4 0 -.9 -46.9 -3 -44.1 -2.3 -12 2.3 -8.3 .9 -9.7 3.1 -89 1 -4.1 2.4 102.1 .6 2.8 2 1.1 4 -5.2 3 -.2 2 -5.6 2.8 -77.9 2.3 -4 1 -10 1 -1 1 -18 .9 -1 .1 -13 .9 -1 .1 -16 .9 -1 .1 -19 .9 -1 .1 -20 .9 -1 .1 -21 .9 -1 .1 -21 1 -1 0 -21 1 -1 0 -20 1.2 -1 .3 -18 .8 1 .7 300 .9 2.9 2 .5 1.6 -1.4 .6 -4 0 -234 .9 -1 0 -6 1 -1 1 -34 1 -1 0 -22 1.2 -1 .7 -20.4 1.1 317.4 .9 6.2 1.5 -.2 .9 -2 .7 -268 1 -1 0 -18 1 -1 0 -21 1 -1 0 -22 1.2 -1 .3 -20 1.1 30 .4 256 .8 41 1.1 6.1 1.8 -53.1 1.2 -201 1.1 -33 1.1 -1 .2 -20 .6 -.6 .6 1.6 .6 254 .8 36.1 1 8.7 1 -4.2 2.3 -61.6 .6 -162 1.1 -4 .1 -12 .9 -1 3.2 -100 1.8 -1.3 2 300.9 2.2 -272.6 1.1 -1 .2 -26 1 0 .4 280 .9 52 1.2 11.7 1.2 -50.7 .9 -256 1 -1 0 -25 1 -1 .1 -24 1.1 -1 .4 -17 .8 5 1 1 .1 18 1.2 1 .3 8 2.1 -77 1.2 -1 .6 -13.4 2.2 23.4 1 -17 1 -1 .1 -13 1.4 -1zM623.5 662.3l-1 101.2 1 47.1 1 -6.6zM496.5 378.1l.1 276.4 -1.5 165 -1.6 1.8 -6 .8 -4 -1.5 -4 1.6 -2.3 -1.7 -.7 -3.8 -1 -94.2 .3 -131 .8 -1 0 -10 1 -1 0 -20 1 -1 1.1 -94 1.4 -1 .4 -25.8 2 69.1 2.1 -36.3 1 -1 0 -10 1 -1 0 -10 1 -1 0 -9 1 -1 0 -9 1 -1 0 -9 1 -1 1 -17 1 -1 .1 -7 1 -1 .1 -7 1.2 -1zM467.5 391l.3 319.5 -1.2 105 -1.1 4.3 -2 -1.3 -3.2 -112 -.7 -93 1 -1 0 -28 1 -1 0 -37 1 -1 2 -105 1 -1 .1 -30 1.3 -1zM453.5 438.1l.6 189.4 -1.6 93.5 -1 -.1 -3.6 -99.4 1.7 -4 0 -24 1 -1 0 -53 1 -1 0 -52 1.2 -1zM673.5 443.1l2 64.4 -1 17 1 64.4 1.9 4.6 .8 11 -2.7 18 .9 9 2.1 .7 .2 2.3 -.2 4.1 -1 1.7 -1 -.5 1 8.7 -2 10 1 2.7 2 -1.9 .3 3.2 -1.9 18 2.5 13 -1.9 32 2.2 8 .2 35 -1.1 12 1.2 15 -1.3 24 -4.8 7 -2.4 32.2 -2 11.5 -2 -6.5 -3.2 -36.2 -1.6 -8 -3.1 -78 -.3 -99 1.2 -4 2 -95 1 -1 .1 -24 1 -1 0 -37 1 -1 .3 -22 1.2 0 2 223 -.6 37.4 1 1.9 1.2 -221.3 .9 -1zM669.5 733.6l-.7 4.9 .7 8.9zM518.5 449.1l.5 271.4 -1.3 83 2 18 -2.2 2 -7.8 0 -2.2 12.2 -2.5 -2.2 -.6 -7 3.9 -6 4.7 -36 -1.2 -102 1.2 -161 .6 -8 1 -1 1 -31 1 -1 .1 -16 1.1 -1zM648.5 469.9l.8 5.6 -.8 80.9 -1 0 -.4 -60.9zM710.5 518.8l.9 .7 .8 24 -.7 19 .9 71 -.8 12 .8 45 -1.1 20 1 15 -.7 53 1 24 -.7 18 -1.9 7 -3.5 73.5 -2 16.6 -1 -2.1 -2 -24.6 -2.8 -64.4 -3.2 -9.5 -1.3 -11.5 .7 -34 1.2 -6 -1 -8 1.2 -10 .3 -48 1.1 -18 -1 -18 1.9 -1 0 -11 .9 -1 .1 -8 1 -1 0 -9 1 -1 0 -12 1 -1 0 -11 1 -1 0 -15 1 -1 0 -9 1 -1 0 -12 1 -1 0 -15 1 -1 1 -21 1 -1zM742.5 593l1.3 22.5 -.7 72 1.3 11 -.9 11 .6 44 -1.6 23 0 36.8 -1 3.2 -1 -.2 -1 -3.4 -2 -29.5 -2.8 -10.9 .8 -15 -1.1 -7 .2 -74 1.9 -6 .1 -7 1 -1 0 -15 .9 -1 .1 -10 1 -1 0 -12 1 -1 0 -5 1 -1 -.9 -16 1.1 -1zM726.5 596.4l-.3 57.1 -1.2 22 .9 5 .1 27 -1.5 18.4 -1.5 -17.4 .3 -25 1.1 -7 -1.3 -45 .5 -16 1 -1 .1 -17zM750.5 608.8l.8 .7 -.8 14.6 -.7 -10.6zM763.5 613.2l1 109.3 -1 43 1.6 15 -1.9 19 .9 15 -2.6 4.3 -5 -8 -1.4 -15.3 1.2 -10 2.6 -8 -2.2 -30 1.6 -29 -.6 -36 1.8 -5 .1 -22 1 -1 0 -8 2.1 -4 .1 -2 -1.1 -1 0 -11 1.2 -1zM810.5 622.1l.9 27.4 -1.2 31 2 10 -1.7 40 1.9 7 -1.1 30 .7 41 -.9 12 -3.7 7 -4.9 45.4 -3 7.8 -3 -4.8 -10.9 -38.4 -6.2 -14 2.1 -9 -.7 -10 1.3 -17 .1 -25 1.3 -7.4 1 -.8 .7 5.2 -1.5 31 1.4 15 -1.5 14 .9 3.3 2 1 2 -1 .7 -2.3 -2 -86 1.3 -27 1 -1 .1 -9 1 -1 .1 -25 1.7 -1 -.1 -18 1.6 99 -1.1 55 1.7 6.9 1.4 -6.9 1.3 -70 -.5 -29 .9 -1 1 -35 1 -1 0 -6 1 -1 .3 -15 1.4 0 1.9 9 1.4 -1 1 -11 1 -1 0 -13zM795.5 813.4l-.7 1.1 .7 4.2zM750.5 626.8l1 .2 0 57.5 -2 43.3 -1.5 -41.3 .7 -43zM855.5 652.9l.5 82.6 -1.3 11 .3 27 2.5 15.3 1 .5 2.5 -9.8 .7 11 -1.2 10.1 -2 -4.7 -3 9.5 -.9 8.1 .6 7 1.3 2.3 3 .2 2 -8.1 3 3.2 1.3 -2.6 1.8 -25 -.9 -73 .9 -1 .1 -10 1.1 -1 .5 -6 2 24 1.2 4.5 1.9 2.5 2.1 11.2 .7 12.8 -.7 3.7 -1.7 2.3 .2 25 1.7 11 -1.2 19.9 -1 1.4 -2 -1.9 -3 5.3 -5.1 3.3 -3.9 13 -3 4.2 -3 -3.6 -3.6 -11.6 -3.4 -3.7 -1.8 -10.3 1.5 -11 -.8 -9 1.5 -35 -.3 -50 1 -1 0 -8 1 -1 0 -11 1 -1 1 -19 1 -1 1.1 -9zM872.5 734l-1.9 5.5 -.5 17 .7 4 1.7 2 1.9 -3 .9 -17 -1.5 -7zM873.5 791l-1 .1 -1.1 4.4 1.1 6.2 1.4 -5.2zM776.5 662.9l.5 80.6 -.9 34 1.5 18 -2.1 10 1.6 7 -.6 9.6 -2.4 -4.6 .4 -11 -2.3 -6 -1.3 -20 1.3 -45 -.4 -28 .8 -1 0 -11 .9 -1 .1 -20 1 -1 .1 -8 1.5 -1zM841.5 667.9l1.1 61.6 -1.2 10 .1 15.5 -1 3.9 -1.5 -8.4 .6 -43 -1.3 -4zM834.5 675.8l.8 .7 .4 54 1.1 15 -1 52 -2.3 20.1 -2 -3.5 -.8 -5.6 -1.9 -61 1.7 -6 -1 -3 0 -9 1 -1 1.1 -20 1 -1 0 -22 1.1 -1zM1110.5 679.2l-1 7.6 -2 4 -.9 -5.3 1 -1 -1 -3zM1086.7 682.5l1.8 -1.8 3 .4 5.6 5.4 .8 3 -2.4 -.2 -3 -4.1 -5 -.9zM1081.5 688.8l1 .5 .9 8.2 -1.9 3.6 -4.9 -3.6 3 -7zM1104.8 693.5l-1.7 9 -4.6 -1.2 -3 1.8 -4.4 -2.6 5.4 -1.4 5 -5.4 2 -.9zM875.5 693.9l1.1 15.6 -1.1 16.4 -1 -.4 -.7 -16 .9 -3 -1 -2 1.1 -1zM1039.5 695l0 16.2 -1.9 -12.7zM1166.9 697.5l.6 -1.6 2.9 .6 -.9 1.4zM1068.5 698l3 10.8 -5.8 -6.3zM1111.2 700.5l-1.7 9 -3 .8 -.9 -2.8 4.3 -4 -.7 -2zM1080.5 702.1l-1 2.7 -.5 -1.3zM1122.5 701.8l1.4 .7 -1.4 3.6 -1.8 -2.6zM1153.5 702.2l1.1 2.3 -1.1 .6 -1.6 -1.6zM1185.8 703.5l2.7 -1.6 2 .4 .9 3.2 -4.9 .7zM949.5 703.7l.9 1.8 -.9 4.6 -.8 -3.6zM1003.5 703.9l.5 5.6 -1.5 8.7 -.9 -8.7 1.1 -1zM784.5 705.1l.1 16.4 -1.1 7.1 -.7 -19.1zM963.5 707l0 11 -1.9 -8.5zM1089.5 706.7l1.7 .8 5.6 12 1.7 -.2 3 -3.4 2 -.3 2 -2 4.5 .9 -1.5 2.9 -3 2.2 -3 6.6 -3 -.8 -2 -3.1 -4 -.9 -4.9 -4.9 1 -3 -2 -2 0 -3zM1127.5 712l-1.3 7.5 -4.2 4 1.3 5 -1.8 .7 -2 -2.7 1.8 -4 -.7 -3 1 -1 0 -3 4.9 -3.8zM897.5 713.2l.6 102.3 -.6 3 -1 .3 -2 -3.6 -.9 -4.7 .8 -49 -.7 -17 .9 -1 0 -12 1 -1 .1 -12 1.2 -1zM1079.5 712.9l1.7 6.6 -2.7 .9 -1.9 -1.9 .1 -4zM987.5 714.3l.4 8.2 -.4 3.1 -1 .7 -.9 -5.8 1.1 -1zM1066.8 714.5l3.7 -.4 .4 2.4 -2.4 -.3zM1018.5 714.8l1.2 5.7 -.2 8.5 -2.9 -3.5 0 -7zM1039.5 715.1l0 9.4 1.9 7 0 8 -.9 .8 -2.9 -4.8 -.1 -6 -1 -2 -4.8 -3 0 -2zM1287.9 715.5l4.2 0 1 2 -2.6 .5zM926.5 716.1l-.2 36.4 1.2 32 -1 10 1.6 10 -1.2 8 -2.4 2.6 -1.8 -1.6 -.4 -2 1.4 -12 -1 -8 1.1 -7 -1.3 -8 .1 -28 1 -3 2.3 -2 -1.9 -4 .7 -1 0 -21zM1342.3 716.5l-1.1 2 -6.7 2.3 -1.5 -1.3zM905.5 716.7l1 .8 .2 67 -.5 13 -1.7 4.4 -1.3 -6.4 -1.3 -30 1.7 -38 1 -1 .1 -9zM1029.5 716.8l1.6 4.7 -.6 2.7 -1.7 -3.7zM1142.8 718.5l1.7 -1.5 2 0 .8 1.5 -2.8 1.7zM918.5 718.4l1.2 46.1 -1.2 7 -.2 35 -.8 1.9 -1.5 -2.9 -2.1 -21 .9 -17 -1 -12 1.8 -1 0 -3 1 -1 -1 -5 1 -1 .1 -21 1.3 -1zM1058.5 717.7l1.8 .8 3.5 8 .7 4 -1 2.1 -1.1 -.1 .3 -2 -6.1 -9 0 -2zM1149.5 717.6l3.2 .9 -.8 7 6.6 5.4 1.4 2.6 -2.4 4.5 -8 2.3 -1.9 -1.8 2.9 -3.8 5 0 2.2 -2.2 -2.2 -1.3 -3 .1 -2.8 -1.8 .1 -5 -3.2 -2 0 -2zM1228 718.5l2.5 -.3 1.1 1.3zM972.5 719.2l0 7.9 -.7 -3.6zM888.5 719.8l1.2 30.7 -.9 42 1 9 -1.3 3.9 -1 -.8 -.9 -5.1 -1.3 -37 .3 -22 1 -1 0 -8 1.1 -1zM949.5 719.9l1.5 22.6 -1.7 15 1.7 9 -2 13 1.2 11 -1.4 5 .8 2 5.9 4.4 0 3 -3.8 4.6 -.8 3 1.6 2.1 3 -.8 .6 2.7 -.7 5 -3.9 1.6 -4 -1.5 -2.5 -9.1 2 -16 -2.5 -16 .6 -6 -1 -10 1.6 -16 1.9 -2 0 -4 1 -1 0 -4 -1 -1 0 -10 1.1 -1zM1208.7 723.5l1.8 -1.8 6 -.6 1.2 4.4 5.2 4 1.5 3 -5.9 -.2 -7 -3 -1.8 -1.8 1 -1zM1300.7 722.5l2.8 -1.7 2 .2 1.8 1.5 .1 2 -2.9 .7 -3 -.9zM1324.4 725.5l3.2 -3 3.9 -.3 1.3 .3 1.1 4 -3.4 .5 -1 -1zM962.5 722.7l.9 .8 .1 6.2 -2.9 -3.2zM1112.5 723.2l1.3 2.3 -1.7 9 -2.6 .9 -1.9 -1.9 0 -3 2 -2 -.9 -4 1.8 -1.4zM1166.5 722.7l5 .8 .5 11 1.5 5 -1 .6 -5.5 -2.6 .6 -7 -3.9 -4 0 -2zM1003.5 724.2l0 5.7 -1.9 -2.4 .1 -2zM1138.5 724.8l1.1 .7 -.2 3 -2.9 4.4 -1.9 -3.4 1 -3zM1261 728.5l-6.5 .7 -.7 -1.7 4.7 -2.7 1.8 .7zM1409 727.5l1.5 -1.3 1.4 .3 -.4 1.2zM1094.5 727.2l1 7.6 -1 1.3 -4.1 1.4 -.9 4.8 -3 4.7 -.7 3.5 4.9 13 -.8 8 2.3 7 .8 9 -4.5 6.4 -3 .7 -1.4 -1.1 -.3 -2 5.8 -5 -.7 -5 -4.8 -5 -2.5 -5 .9 -2.1 -3 -1 -1.3 1.1 -.6 -5 -3.9 -5 4.8 -10 -1 -3.5 -2 -1.2 -1 .7 -1.9 6 -4.3 5 .2 11.5 -2 .3 -4.7 -6.8 4.8 -9 0 -5 -1 -1 1.9 -1.7 8.3 -2.3 -4.2 -3 -1 -3 1 -2 3.9 -3.7 1 10.3 3 .5 6.1 -5.1 -1 -4 4.9 -4.9zM1081.5 757.7l-.7 2.8 2.7 6.4 3 .7 0 -3.1 -2 -5.4zM1288.7 728.5l1.8 -1.8 10 1 4.2 2.8 1.3 4 -1.5 1.5 -5 .3 -1.8 -1.8 1.8 -2.1 -5 -2.1 -3 0zM1267 729.5l.5 -.9 3 .6 2.2 2.3 -2.2 .6zM1347.9 730.5l3.6 -1.4 2 2.4zM1011.5 730.4l-1 6.6 -4 .7 -1.3 2.8 -.7 34 -3 7.5 -2.1 -4.5 1.1 -3 -1 -3 2 -5 .1 -26 2 -1 0 -4 1.9 -1.8 3 -.1zM1125.5 730l3 2.1 4.1 12.4 -1.1 2.8 -1 .2 -2.5 -5 -6.2 -4 2.8 -3 -1 -2zM1047.5 732.1l2 1.4 .9 3 -1.6 10 1.7 2 4.1 1 -1.1 3.3 -4 2 -4 4.4 -1.8 -2.7 2.9 -4 0 -2 -3.9 -5 5 -4 -.1 -4 -2 -3zM1235.9 741.5l16.6 -.8 3 -1.1 0 -1.2 -5 -2 -.9 -1.9 1.9 -1.9 7 .5 3.7 3.4 .1 2 -2.5 5 4.2 4 .2 2 -8.7 -.1 -2.9 -1.9 -1.1 -2.2 -14 -2.1zM1106.5 734l-.2 1.5 2.9 5 -.4 7 3.5 9 3.2 4.9 -1 8.5 -1 .4 -2 -1.5 -4.9 -11.3 -4.1 -1.7 -2.4 2.7 -.1 14 -.9 2 -1.6 .5 -4.8 -2.5 -.1 -2 1.9 -2 -1 -11 1 -2.6 8 -4.4 -.9 -10 2 -3 -.5 -2zM1028.5 734.7l10.5 14.8 .1 10 2.7 10 -4.3 8.8 -1.4 -.8 -.4 -6 1.8 -3 -3 -4.1 -5 0 -2 -2 -7 -.6 -.8 -1.3 .8 -2.9 6 -2 3 -4.9 1.4 .8 .2 6 1.4 2.9 5.2 -4.9 -3.1 -3 1.1 -6 -5.2 -2.1 -3.9 -6.9zM1366.4 736.5l-.7 2 -12.2 2.3 -2.5 -1.3 7.5 -1.6 -.8 -1.4 1.8 -1.7 6 .4zM784.5 736.2l.1 6.3 -1.1 3.5 -.2 -7.5 .2 -2zM940.5 736.3l.9 16.2 -1.2 10 1.1 14 -1.1 5 .4 16 -1.7 7 2.5 9 -.1 7 -1.8 1.6 -2.6 -3.6 -1.4 -12.3 -3 3.2 -1.4 -6.9 .6 -14 .8 -1.6 2 .4 2 -7.8 -.7 -6 .8 -17 1 -1 0 -14zM961.5 735.7l1.5 3.8 .6 14 -2.1 15.9 -6 -5.6 -1.2 -9.3 .5 -5 1 -1 -.1 -8 1.8 -2.8 .8 1.8 1.2 .1 .1 -2.1zM959.5 744.4l-1.2 1.1 0 2 1.2 1.1zM1414.3 737.5l2.2 -1.4 5.8 .4 -.1 3 -2.7 .4 -4.8 -1.4zM724.5 737.2l1.5 14.3 -.5 26 -1.1 -2 -.6 -18zM1178.7 745.5l.9 -3 -1.3 -4 2.2 -1.7 4.3 .7 -.3 5 4 2.6 12 -3.4 3 -2 3.5 -.2 -2.5 4.4 -4 0 -4.5 2.6 -1.2 6 -1.3 .6 -4 -.8 -1.9 -1.8 0 -2 -2.1 -1.2 -4 0zM1402.1 737.5l3.1 0 0 1zM1442.7 738.5l1.8 -1.7 4.1 .7 1.2 2 -4.3 .7zM1063.5 737.7l.8 1.8 -1.3 5 -3.3 3 -4.2 1.6 2.1 -3.6 0 -5 1.9 -1.9zM1142.5 738.2l-1 4.9 -1.6 -1.6zM1294.8 742.5l-8.3 -.2 -2.8 -1.8 0 -1 8.8 -1.4zM973.5 739.1l-.5 16.4 1.5 2.1 5 -2.4 1 7.9 -1 .2 -4 -4 -3 -.1 -1.7 -1.7 -2.2 -9zM1521 740.5l1.5 -1.4 1.3 .4 -1.3 1.4zM1470.3 740.5l-5.8 2 -3.2 -1 4.2 -.4 1 -1.1zM1161.5 740.7l2 .3 1.4 4.5 -.7 3 -1.7 1.4 -3.1 -1.4 1.2 -2 -3.3 -4zM1317.7 743.5l4.8 -1.8 8 -.7 7 4.2 5.8 6.3 -13.8 -1.2 -3.9 -1.8 2.9 -.8 -1 -1.4 -9 -1zM1151.1 744.5l1.4 -1.6 1.6 .6zM1367.9 744.5l2.6 -1.5 3.4 .5 -2.4 1.3zM979.5 743.9l1 5.9 -1.4 -1.3zM1116.7 744.5l2.4 0 .8 3 -2.4 -.2zM1444.8 745.5l3.7 -1.7 4.1 .7 1 3 -3.1 .6 -4 -.9zM1149.5 745.3l.1 2.2 4.1 4 -.5 4 -9.1 13 -1.6 8 3.2 3 -.7 6 5.3 6 .9 5 -4.7 2.8 -1.9 3.2 -.2 9 -1.9 2.1 -3 .8 -7.3 -9.9 3.3 -4.7 1 -.3 3 2.9 1 -.6 -.6 -3.3 2.3 -5 -2.1 -5 0 -4 -3.6 -2.5 -7 3.5 -.2 -2 4 -3 .9 -4 -5.6 -7 1.9 -2 .1 -4 1.9 -4 2 1 .8 9 1.2 1.5 4.1 -3.5 1 -4 4 -2 -.6 -3 2.6 -2 -.1 -1.1 -5 -.2 .4 -4.7 -1.1 -1 -2.3 1 -3 3.4 -1.9 -2.4 .9 -2.5 5 -4.3zM1019.5 745.7l.8 4.8 -.8 4.7 -1.9 -1.7 0 -6zM985.5 747l1 .5 1.4 7 -.7 15 3.3 10 -2.8 6 .6 24 -2.8 5.3 -3 -.9 -7 8.3 -5 1.2 -1.8 -1.9 .7 -4 -1.4 -7 1.5 -2.1 4 3.2 2.1 -2.1 -2.1 -3.3 -4 -.7 -2.8 -6 3.5 -6 -2.3 -4 0 -3 1.6 -1.6 2 .2 .2 8.4 1.8 8.9 4 2.8 3 4.6 1 -.2 1.2 -4.1 -.1 -6 -3 -5 -.1 -4 -5.9 -8 4 -4 2 -4 -2 -7 2.9 -3.9 3 1 1 -2.1 -.9 -4 2 -4 -2 -5zM982.5 777.4l-1.7 1.1 -.3 2 1 3.9 2 1.9 2 -7.8zM1290.1 752.5l2.5 -2 -.9 -2 1.8 -1.8 2 .2 4 4.1 5 1.8 7.7 -.3 -.3 -1 2.6 -.2 -.9 2.2 2.9 2.5 9 .7 4.2 2.8 .7 2 -5.9 .8 -2 -3 -5 -2.7 -7 1.4 -17 .9 0 -.8 5.1 -2.6 -1.1 -1.1zM1318.1 747.5l-2.6 2.6 -2.7 -1.6 3.7 -1.5zM1224.4 748.5l-.9 2.9 -4.9 2.1 -1.1 1.7 11.5 1.3 -7.5 7.4 -2 .9 -2.9 -.3 -1.3 -1 2.3 -2 0 -4 -2.9 -1 -1.8 -4 6.6 -4.8zM1538.8 749.5l.7 -1.7 3.1 .7 -.7 2 -1.4 .6zM1724 755.5l-4.5 .6 -4 -1.8 -.8 -2.8 1.1 -2 6 -1 0 4zM1124.5 749l3.6 .5 .2 4 2.7 4 -4.5 3.1 -.8 -1.1 .9 -2 -.5 -3 -2.3 -2zM1607.9 750.5l5.6 -1.4 2.2 .4 1.1 2 -5.3 .6zM1205.5 750.1l2 1.1 .8 2.3 -1.8 2.7 -2 .7 -1.1 -1.4 1.3 -1 -1 -3zM1367.6 751.5l1.9 -1.9 6 .6 4.5 6.3 -7.5 .9 -4.9 -3.9zM1263.1 751.5l-2.6 5.2 -7 .6 -2.8 -1.8 .9 -2 5.9 -2.8zM1226 753.5l2.5 -1.6 3.3 1.6 -1.3 1.4zM1408.6 753.5l2.9 -1.8 4 .2 1.3 1.6 -1.3 3.4 -4 .5zM1806.1 753.5l-.3 4 -1.3 1.2 -6 -.6 -3.8 -1.6 .8 -1.3 4 -.4 -.7 -1.3 2.7 -1.6zM1437.1 755.5l24.4 -1.2 -.3 2.2 1.7 2 12.2 6 -4.6 .7 -1 -.9 -3 0 -8 -4.1 -12 -.9zM1178.5 754.7l10.3 .8 -1.7 8 1.4 1.2 2 -.2 5 -5.5 3 6 4.9 2.5 -2.2 4 1.3 4.8 5.3 3.2 -2.3 1.3 -3 -1.5 -5 -.3 -4 -2.4 -3 .2 -1 6.7 -4.4 3 1.1 8 -1.7 3.7 -4 -2.3 -5 0 -.5 -5.4 -2.5 -1.5 -3.2 1.5 -.8 7.1 -4 -7.8 1.1 -7.3 -1.7 -1 .6 -1.6 11 2.2 .2 -3.6 1.9 -1 -2.6 -2 .5 -3.6 4 -4 3 .8 2.1 -1.2 -2.1 -1.3 -4 .8 -2.2 -1.5 1.3 -1 -1.1 -1.1 -2 0 -2 -2.1 -2.7 -.8 -.1 -1 2.8 -1.3 2 .5 2 -1zM1188.8 773.5l-3.3 -.8 -1.8 .8 -2.2 8.5 1 .5 7.2 -6zM1496.8 755.5l-8.3 6.8 -2 .5 -1.5 -1.3 4.5 -4.8 6 -1.7zM1156.8 758.5l.7 -1.1 2 .1 -2 1.6zM1345.2 757.5l-2.7 1.6 -1.8 -.6 2.8 -1.6zM1531.8 758.5l2.7 -1.7 6.3 .7 .3 2 -6.6 .8zM994.5 757.8l1.4 3.7 -.4 6.7 -2.9 -4.7 .1 -4zM1618.5 758.5l.1 2 -3.1 4.1 -3 .4 -7.4 -1.5 1.4 -1.4 4 -.3 5 -4zM1243.1 760.5l2.4 -1.6 4 .3 3 4.3 5 2 11 .3 1 -1 6.4 -.3 -7.4 8.4 -7.8 1.6 0 2 1.7 1 -6.9 .8 -6 -1.6 -2 -3.3 3 -2.8 7 .5 1 1 3.1 -1.6 -13.1 -3.2 -.8 -.8 3 -2 -1.2 -1.2 -5 -1.1zM1053.5 759.8l2.6 3.7 1.4 7.5 7 1.8 2 1.7 -1.1 7 1.1 6.5 -2.3 3.5 -2.1 7 1.5 5 -1.8 9 2.3 7 -.6 1.9 -2 1 -3 -.5 -1.6 -1.4 1.5 -7 -.9 -1.7 -2 -.1 -4 4.9 -2 -.9 -1.2 -2.2 5.2 -11.8 3 1.2 .7 -4.4 -4.1 -5 .5 -4 2 -5 1.9 -1.8 2.1 -.2 -1.7 -1 0 -2 -2.1 -3 1.7 -.9 0 -1.2 -6 -2 -3.8 -6.9 .8 -2.7zM1300.9 761.5l3.6 -1.8 6 .3 4 3.6 7 3.1 2 2.8 -2 .7 -12.8 -4.7 .8 -1.1 -6 -1.1zM1393.3 761.5l-3.2 4 -8.6 2.6 -6 3.7 -3.5 3.7 -6.5 3.2 -3.8 12.8 -15.9 7 -.2 2 2.5 5 -1.6 2.7 -12 .9 -9 2.9 -3.3 -.5 3.3 -4.8 9 1.5 1 -.9 1.1 -3.8 -2.1 -5 -2.6 -2 .7 -2 -1.3 -1 .5 -1 2.7 -.6 10 1.6 3 -.6 3.1 -3.4 -1.9 -2 4.8 -2 2.1 -2 -2.3 -2 .2 -5.5 2 -1.3 4 -.1 -1.9 -2.1 2.9 -1.9 13 -.7 -2.7 -1.4 4.8 -2 -1.1 -1.1 -7 -1.1 -.8 -.8 1.8 -1.8 4 -1 9 .1 1 -.9 9 .4zM1754.4 761.5l-2.4 4 -.2 4 -7.3 -.3 -8.7 -3.7 1.7 -1.7 8 .1 7 -2.9zM972.5 762l.3 6.5 -2.3 4.2 -1.6 -1.2 -.3 -2 1 -4zM1166.9 766.5l-3.1 5 -.3 6.1 -6 -2 -3 5.1 -2 .6 -1.6 -4.8 1.6 -5.2 1.1 1.2 .9 -9.4 2 -1 3 3.8 3 -.5zM750.5 762.6l1.3 3.9 -.2 13 -1.1 5.3 -1 .2 -1.5 -11.5 .9 -8zM1017.5 762.8l.6 .7 -3.6 4.6 -1.6 4.4 .6 1.6 4 -2.8 2.2 2.2 -4.1 13 .3 4 3.1 7 -3.4 7 2.2 8 -.3 1.2 -5.4 3.8 -.5 3 1.4 3 -1.5 .6 -2.9 -5.6 .9 -6 -3.4 -6 .4 -.8 1 .9 0 -3.1 -3 -1.1 -5.3 -5.9 -.3 -11 2.6 -2.9 1.5 3.9 .9 11 1.6 1.9 2 -1 .8 -5.9 1.2 -2 -1.5 -9 2.5 -5 -1.8 -9 2.8 -2.9zM1434.7 764.5l6.8 -1.8 5 .3 4.8 6.5 -4.8 .8 -11 -4zM1517.9 764.5l2.6 -1.9 .2 1.9zM1788 765.5l1.5 -1.5 7 -.7 8.4 2.2zM1480 764.5l7.5 .6 1.3 2.4 -.5 2 -2.8 1.6 -3.9 .4 1.9 -.1 .3 -.9 -3.1 -1 1 -3 -1.9 -1zM1524.5 764.5l2 -.6 10 2.2 2.6 5.4 4.8 4 -10.4 -.2 -6 -1.9 -4 -3.1 6 -2.7 3.2 -.1 -3.2 -1.5 -4 0zM1304.5 771.3l-.7 3.2 -5.3 3.8 -5 -.9 -10 1.9 -5 -.5 -.7 3.7 8.8 8 -1.5 2 -3.6 1.8 -3.9 -1.8 2.9 -1.1 -4 -.1 .7 5.2 -1.7 3.3 -5 .5 -8.5 -3.8 .6 -1 -.8 -1 9.8 -4 -5.1 -6 -9.3 0 3.3 -.4 .1 -1.6 -2 -1 .9 -1.9 4 -1.7 4 .7 1.1 -1.1 -.7 -1 1.6 -.6 9 2.5 4 -2.8 1 -2.7 3 -1.1 6 1.9 5 -1.1 1.1 -1.1 -2.1 -1.2 -9 .2 1 -3.4 7 -2.3 2 .5 1.2 2.2zM1400 770.5l5.9 -3 -4.6 -1 2.2 -1.8 2 .4 2 2.4 .2 2 -1.2 1.5 -5 1zM1670.1 766.5l.4 -1.4 2.1 .4 -.3 1zM1028.5 766l.6 4.5 3.9 7 -2.6 11 .4 2 2.8 2 .9 -6 2 -2 3 2 1.9 4 -.9 3.7 -5 1.2 -2 3.6 -6.9 -4.5 .9 -2 -3.9 -3 .9 -8 3 -4 -4.2 -8 1.2 -2.8zM1806.2 767.5l1.3 2.6 0 5.8 -11 1.5 .4 3.1 -1.4 .3 -9.5 -.3 5.8 -2 -4 -2 2.7 -1.7 7 .1 1.1 -1.4 -.1 -1.1 -5 -1.1 -1.8 -1.8 2.8 -1.8zM1629.8 769.5l2.7 -1.7 4 .3 1.7 3.4 -4.7 .7zM1453.2 769.5l8.3 .8 6.9 5.2 .1 1.5 -6 1.1 -2.8 3.4 3.5 2 2.3 3.3 -7 .6 -2.8 -1.9 .9 -3 -1.1 -.9 -6.8 -1.1 -.6 -1 4.5 -3 -1 -2 2.9 -2.9 3.2 -1.1zM1514.1 770.5l-8.4 0 4.8 -.3 1 -.9zM961.5 769.8l2.9 3.7 -1 14 .8 7 2 4 -3.7 4.8 -2 -1.3 -2 -5.8 -1 -.9 -2 .8 -.8 -1.6 .8 -1.6 2 -.2 .7 -2.2 -2.5 -8 .1 -4zM1124.5 770l.2 9.5 -7.2 13 3 4.4 5.9 2.6 .6 3 -4.5 -.6 -4 -2.9 -2.5 1.5 .7 3 6.9 7 -1.7 10 -1.4 2 -3 -.6 -1 -7.7 -2 -2.9 -1.4 1.2 -.6 4 -2.3 1 1 -6 -3.4 -4 .5 -10 -1.8 -2.7 -4 2.7 -1.4 6 -1.6 1.5 -2 -.3 -4 -4.7 -1 .2 -2.3 15.3 4.3 1.3 3.1 -4.3 2.9 -1.8 1.4 .8 .6 2 -1.3 4 -7.7 5.3 -5 .8 -3 -.8 -2.1 -6.3 -1.9 -2.4 -3 -.1 -3 -3.6 -4 -.7 0 -6.9 -5.5 -2.3 .5 -3.6 7 2.9 1 -6.3 3.2 1 1.4 2 -.8 4 2.3 5 .8 5 2.1 .3 5.4 -11.3 1.8 -2 2.8 -.2 4 -2.7 2.7 -4.1 .1 -2 -3.4 -2 .7 -1 -2.5 -4 1.4 -2 5 -1.4 1 6.1 3 -1.2 4 -3.8 2 -.3 -1.1 6.6 1.1 1.4 4.6 -4.4 -1.4 -10 4.8 -.1 3 -2.4zM1668.7 770.5l-4.5 9 -3.7 1.6 -2.6 -.6 1.8 -2 0 -2 -3.2 -1.3 0 -1.4 9 -4.1zM1213.5 771.4l1.7 1.1 -.7 .9 -1.5 -.9zM1414.8 774.5l3.7 -2.8 9 -.2 8 4.5 7.6 7.5 -.6 .8 -12.8 .2 2 -1 -5.6 -3 2.4 -.8 0 -1.3zM1334.2 772.5l-3.7 7.1 -8 1.4 -3.4 -1.5 -.1 -3 1.5 -1.9 10 -.8 1 -1.8zM1214.5 777.9l8 -4.7 5 -.1 5.3 2.4 1.8 4 5.6 6 4.3 1.4 8 .3 -4 2.6 -4.2 6.7 4.3 3 0 2 -9.1 3.8 -.7 1.2 1.7 3.2 3 2.4 5 2 12.7 2.4 1.1 2 -.8 1.4 -5 2.6 -8 -.1 -2 -1.3 -2.3 -4.6 -3.7 -3 -4 .9 -12 6.5 -5 -.4 1 -1.8 6 -2.1 .7 -3.1 -1.7 -4.8 -6.2 -3.2 -.9 -2 7.3 -2 -.2 -7.1 7 .9 3 -3.8 -2 -.2 -3 -3.2 -6.1 -1.6 3.1 -1.1 -8 -1.1 -1 1 -1 -3 -4.4 -.8zM1612.3 773.5l-.2 2 -1.6 1.6 -2 .5 -1.9 -1.1 .1 -2 2.8 -1.4zM1699.2 774.5l8.3 -.6 1 -1 9 .4 2.5 3.2 -11.5 -.3 -1 -1.1zM1047.5 773.9l3.6 5.6 -3.6 5.5 -1.3 -1.5 -.6 -3 1 -1 -1 -2 .1 -3zM1577.5 774.9l12.5 -.4 -1.5 2.3 -.8 4.7 -4.2 3.6 -5 -.8 -1.7 -1.8 3.8 -2 -.1 -1.2 -3.5 -.8zM993.5 776l2.5 3.5 .8 4 -.6 2 -2.7 2.2 -1.2 -1.2 -1.7 -7zM1073.5 776.9l3 0 3 3.6 2 4.7 -.6 2.3 -8.4 -1.6 1.1 -1.4 -2 -2 -.1 -2zM1395.5 775.9l.8 1.6 -1.8 6 0 4.5 -7.9 5.5 -4.1 5 2.9 4 11 3 -6.9 2.4 -8 -2.6 -5.3 2.2 .3 1.4 6 2.6 3 3 1.4 5 -1.4 1.9 -2 .5 -3 -4.3 -4 -2 -2 -5.4 -6 -.3 -3 -2.4 -.5 -3 4.5 -.9 .1 -1.1 -3.1 -.2 -2.6 -2.8 .6 -1 14 -3.4 1.1 -3.6 -.9 -3 4.9 -1 -1.1 -1.2 -2.3 .2 1.3 -3 6 -5.9zM1635.5 775.7l6.3 .8 -.7 4 3.5 3 -2 5 -.7 6 2.5 9 -4.1 7 1.7 5 -1.5 2.5 -8 -4.7 -15.3 -4.8 2.5 -1 -2.8 -2 1.6 -3.2 7 .3 2 -1.1 2 -4 2.3 -2 -2.1 -4 3.9 -2 -1 -2 2 -2 -.9 -3 2 -1 -3.2 -1.2 -4 .9 -2.7 -1.7 1.7 -1.8 3 0zM1561.3 778.5l1.2 -1.5 4 -.1 .3 2.6 -2.3 .5zM1493.8 778.5l5.7 1.5 1 1.5 -.6 2 -3.4 .5 .2 -1.5zM1546 779.5l1.5 -1.5 3.6 .5 .4 1zM1719.7 779.5l3.8 -1.7 4.5 1.7 .7 2 -4.2 .8zM1740.9 778.5l7.6 -.7 5 .9 6.5 5.8 3.1 7 -1 3 -14.6 7.4 -5 .5 -1.9 -4.9 8.9 -1.8 4 -2.1 2.1 -3.1 -10.1 -2.8 0 -1.6 5.1 -1.6 -8.1 -2.3 -1.9 -1.7zM840.5 778.7l1 8.8 -1 -.2 -.3 -1.8zM1292.2 791.5l8.3 -4 -3.7 -2 -.3 -2 7 -.9 1.1 -1.1 -6.1 -.8 0 -.9 7 -1.1 9.4 1.8 2.2 2 .5 4 7.9 4 -1.8 2 -5.2 1.7 -2 -.3 -2.4 -5.4 -1.6 -.9 -10.9 .9 .9 3 -7 1.5zM1679.8 780.5l5.7 -1.6 1.4 .6 .2 2 -3.6 .7zM1407.5 783.8l7 -4 2.9 .7 -.8 5 6.3 3 -1.3 5 8.3 3 2.7 3 -2.8 4 1.4 4 -5.7 3 -.4 2 3.4 1.4 5 -2.1 4.1 1.7 2 3 -2.9 4 -6.2 2.7 -4 -.1 -8 -7.2 -10 -6.4 5 -1.4 8 .4 1 -1 -2.4 -7 2.5 -2 -3.1 -1.9 .3 -3.1 -9.3 -1.3 -6.5 5.3 .7 4 -2.2 1.4 -2 -.1 .8 -9.3 7.2 -2.7 .9 -1.3 -3 -4zM1473.5 780.5l3 -.4 8.6 4.4 2.4 4.8 10 6.3 10.2 2.9 1.8 10 -8.4 9 -.6 4.4 -2 .2 -3 -2.3 -5 1.3 -2 -1.6 -.2 -3 1.2 -1.5 8 -.1 1.5 -1.4 -4.5 -2.6 -.9 -4.4 -2.1 -2.2 -4 -1.1 -1.7 -1.7 -.4 -3 -3.5 -4 1.7 -1 -5 -4 3 -2 0 -2 -6.1 -2.3 -2.2 -1.7zM1492.1 799.5l6.4 2.8 6.2 -.8 -3.2 -.3 -5 -3.2zM733.5 782l1 4.5 .4 17 -1.4 12.3 -1.4 -7.3zM1648.6 782.5l3.9 0 -2 1zM1331.4 785.5l.6 -2 1.5 -.8 4.9 1.8 -3.9 2.6 -2 -.1zM1510.1 787.5l4.4 -3.8 8 .4 7 8.4 3 5.9 11 3 2.5 4.1 -6.5 .6 -3 4.7 -15.4 5.7 1.3 4 -4.9 1.8 -3.1 -5.8 5.1 -.8 2 -4.2 5 -.7 1.4 -3.3 -.7 -4 1.5 -1 -6.2 -.1 -1 -2 -1.9 -.9 2.4 -5 -9.5 -3.8zM1514.2 788.5l1.3 1.2 2.1 -1.2zM1683.9 786.5l6.6 -2.7 5 .7 .4 1 -.7 2 -2.7 .6zM1582.8 785.5l-2.2 2 -1.7 6 -4.4 3.2 -1.3 9.8 -4.7 3.4 -2.3 -1.4 -.3 -6 -8.4 -6.8 -9.1 -1.2 5.1 -.6 1 -1 10 -.2 7 -2.1 0 -1.3 -3 -1.1 -7 -.1 0 -2.2 13 0 3 -1zM1729.2 785.5l-5.7 1.6 -9 4.9 -7.9 -.5 2.1 -2 -2.4 -2 4.2 -1.6 12 .1 1 -1.1zM1798.8 786.5l5.7 -1.7 3 .2 0 6 -5 .3 -1.8 -1.8 4.1 -1 -3.3 -.2zM657.5 785.7l1.1 16.8 -1.1 14.6 -1 -1.9 -.4 -8.7zM1222.2 786.5l-2.7 4.2 -10 2.5 -2.8 5.3 -9.9 6 .3 1 5.4 1.9 4.9 5.1 -1.9 3.5 -6 1.9 -8 -5 -6.8 -.4 -1.4 -9 3.2 .5 6.4 -6.5 8.6 -5.7 8 -2.1 1 -2 8 -2zM1615.7 789.5l-9.2 .7 -1 -.9 -5 -.2 -2.6 -1.6 14.6 -1.5 2.3 .5zM1154.5 786.7l1.3 .8 -.3 1.5 -1.4 -.5zM1502 787.5l3.5 0 -2 .9zM1070.7 788.5l2.1 0 .7 4.4 -3.2 -2.4zM1193.5 788l0 1.5 -2 1.2 .6 -2.2zM1457.5 790.3l6 -.6 1 -1 3 .6 -.6 3.2 5.1 4 .3 3 -6.8 3.5 -3 0 0 -1 3.2 -1.5 -3.2 -.1 -2.9 -1.9 3 -2zM1439.8 792.5l1.7 -1.7 3 -.7 6.4 3.4 -3.4 3.2 -5 1.7 -1.6 -1.9 2.6 -.8 1.1 -2.2zM1738.9 791.5l-.2 2 -1.2 .6 -7.9 -.6 2.9 -2.7 5 -.5zM912.5 791.4l1.1 2.1 .5 7 -1.6 7.1 -1 -.5 -1.3 -5.6zM1677.9 796.5l1.7 -2 -1 -2 4.9 -1.9 9 .7 2.2 3.2 -9.2 6.4 -2 .1zM1618.3 792.5l-.8 3 -3 3.2 -4 .1 -3 -3.3 2 -.8 1 -2.1 4 -.9zM1322.4 802.5l-1.9 2 -8 1.9 -2 2.1 0 2.5 6.8 3.5 2.3 5 -1.1 2.6 -6 1.8 -3 -.7 -2.8 -4.7 -8.2 -7.1 -1.8 -6.9 -8.2 2.4 -5.5 -.4 5.3 6 -2 5 1.1 4 -1.9 1 -2 -.4 -10.2 -9.6 -7.8 0 -1.1 -3 1.1 -1 -2.4 -4 3.4 -.9 11 1.7 3.2 -2.8 -1.7 -1 1.2 -2 6.3 -2.3 6 1.5 4 -.2 4 4 8 1.1 3 -1.7 1.1 -2.4 -10.1 0 .4 -5 1.6 -1.5 16 7zM1665.3 793.5l.2 5 -4 3.5 -5 .1 -3.2 -3.6 -.2 -2 3.4 -2.7 4 -1.1zM1793.2 794.5l14.3 -.3 0 2.7 -13 -1zM1044.5 794.8l3.1 1.7 .8 3 -2.3 7 -2.6 2.2 -2.2 -2.2 1.2 -6 -1.2 -2 1.1 -3zM1602.5 794.6l.8 1.9 -2.1 3 .9 5 -1.6 2 -2 .3 -.9 -1.3 .2 -3 2.4 -3 .3 -3.2zM840.5 796.2l1.6 16.3 -.6 3.8 -1 .3 -1.9 -13.1 .7 -6zM1155.5 797.4l2 -1.1 5 4.7 5 .6 3.5 9.9 7.8 4 1.2 2 -1.1 2 -6.4 2.3 -2 -.3 -1.3 -8 -5.7 -.4 -4 -4.1 -4 -.2zM1591.9 800.5l-.7 3 -1.7 1.3 -7 1.2 -2.6 -1.5 1 -3 4.6 -2.7 4 -.2zM1714.9 799.5l5.6 -1.5 8 1.3 7.7 5.2 .3 4.7 5.2 1.3 2.8 2 0 1 -4 1.8 -4 -.3 -.8 -1.5 1.1 -2 -1.3 -2.3 -8.6 3.3 2.2 2 .2 1 -7.8 2.8 -4 0 .2 -3.8 2 -1 -1.2 -1 7.1 -4 -3.1 -.4 -4.8 -3.6 3.9 -1zM1024.5 798.8l2.4 2.7 3.5 10 .3 8 -2.2 4.6 -7 1.9 -3 -1.1 -1.2 -2.4 1.2 -7.6 4 -1.9 1.4 -2.5 -.2 -3 -2.1 -4 .9 -3.6zM1441.5 799.6l3.1 3.9 -3.1 2.4 -3 .2 -1.1 -1.6 1.2 -1 -1.6 -1 .3 -2zM750.5 800.3l0 7.2 -.9 -1zM1807.5 799.8l0 17.2 -7 2.6 -3 -.8 -3.2 -3.3 -4.8 .9 -1.7 -.9 -.1 -3 4.8 -1.9 -.9 -1.1 .9 -1.9 6.1 -2.1 -1 -3 1.9 -1.9zM1552.4 805.5l1.1 -2.2 2.3 .2 -1.3 2.7zM1699.4 804.5l-2.9 3 -5 2.1 -14 2.2 -1.4 2.7 7.3 4 0 1 -7.9 2.2 -8 0 -6 -3.7 -3 -4.9 -3.7 -2.6 .7 -1.2 10 -.4 10 2 11 -6 9 -.1 1 -1zM1036.5 805.3l2.5 3.2 .5 3 -3 -.2 -1.9 -1.8zM1471.6 806.5l1.9 -1.9 7 .3 2.3 5.6 -1.3 1.4 -4 .1 -5 -3.7zM1777.6 805.5l-3.3 3 -1.2 6 3.3 5 -.5 1 -8.4 .3 -2 -2.9 -3.5 -1.4 -.3 -3 2.9 -2 -2.6 -2 5.5 -2.8zM1448.2 813.5l.4 -3 2.9 -4 6 .3 3.7 2.7 .2 1 -10.9 3.7zM1397.2 810.5l1.3 -2.3 5.5 1.3 .4 1 -4.9 1.8zM1560.3 811.5l-8.8 3.1 -2 0 -.7 -1.1 .7 -2.3 2 -1.6 6 -.7zM1616.7 818.5l-1.2 2.1 -3 .9 -6 -2.3 -5.8 2.3 -6.2 .4 -2.1 -.4 -1.3 -2 3.4 -1.6 -.5 -5.4 3.5 -2.6 8 3.2 2.3 -.6 3 -3 1.1 1 -.6 3zM1350.8 810.5l6.7 .8 7.2 5.2 -3.2 1.2 -5 -.5 -4.9 -4.7zM1707.1 811.5l2.4 -.3 1.1 1.3 -1.1 1.1 -2 0zM1129.5 812.8l9 2 1.3 3.7 -1.3 4 -3 .7 -2 -.8 -2.3 -5.9 -1.9 -2zM1465 812.5l3.5 -.1 5.3 2.1 2.8 4 -.1 2.4 -3 .6 -6 -3.8zM768.5 812.6l1 .6 1.3 5.3 -.1 3 -1.2 1.4 -1.8 -1.4 -.5 -2zM994.5 813l1 9.3 -2 1.1 -4 -.3 -1.3 -1.6zM1333.3 815.5l2.2 -1.9 3 .1 3.1 1.8 3.8 5 -3.9 .8 -4 -1.1 -3.8 -2.7zM1566.5 813.8l3 .8 2 2.9 -.7 2 -2.3 1.3 -2.6 -1.3zM1152 817.5l1.5 -1.9 3 -.9 2.7 1.8 2 3 -2.7 2.3 -4 .8 -2.4 -1.1zM1540.9 815.5l3.6 -.2 2.3 1.2 -2.3 4.9 -3 -.6 -1.4 -3.3zM932.5 815.6l1 1.9 -1 .6zM1077.5 815.7l.8 4.8 -1.8 2 -1.2 -4zM1368.8 818.5l3.6 1 -.3 3 -2.6 -.4zM1640 820.5l1.5 -2.3 5.5 3.3 -6.5 .2zM1750.8 819.5l2.7 -1.4 2.2 .4 .2 1 -3.4 1.1zM1040.3 821.5l2.2 -1.4 1.2 1.4 -1.2 1.4zM478.5 837l2.3 1.5 1.1 7 .3 81 -8.1 0 .6 -78 .9 -8zM444.5 841.5l3 2.1 1.7 9.9 .7 73 -15 0 1.1 -69 3.7 -12 2.3 -3zM498.5 841.2l1.1 2.3 .6 10 .3 73 -11.4 0 1.4 -77.5 1 -.7 2 3.8 3 -8.8zM462.5 848.5l2 18.9 .4 59.1 -5.1 0 .5 -65 1 -11z"/>
<path fill="#000" fill-opacity="0.12" d="M633.5 347.1l.9 15.4 -.9 119.9 -1 14.9 -2 -39.7 -1.7 276.9 -1.3 49.1 -1 4.3 -1 -23.8 -2 -169.9 -2.1 222.3 -.9 4 -3 3 -4.9 103 -22.1 0 -7.1 -102 -3.2 -4 -1.4 -270 .8 -1 .1 -18 .9 -1 .1 -21 1 -1 .1 -22 1.3 -1 .4 -15 .9 348 1.1 3.5 1.7 -1.5 .9 -9 1.7 -279 .9 -1 .1 -20 1.1 -1 .6 -20.1 .8 278.1 .8 35 1.4 8.8 2 -18.5 1.4 -43.3 .6 -188 1.1 -4 0 -12 1 -1 0 -21 1 -1 0 -25 1 -1 1.4 -52 1.1 0 .8 54 .6 262.7 1 20.3 .6 -10 1.9 -300 1.1 -1 .4 -22.9 .6 311.9 .9 45 1.5 13.3 1.5 -39.3 .7 -297 .9 -1 1.4 -50 1.2 -1 .3 -8.4 1.2 15.4 1.3 1 .7 8 2.3 -77 1.5 -2.6 1.2 11.6 .8 .8zM495.5 384.1l.9 .4 -1 310 -1.9 66.1 -2 23.7 -1 4.6 -1 .1 -5 -54.1 -1 -2.8 -3 32.8 -1 2.1 -1.4 -12.5 -1.7 -49 -.2 -114 .5 -11 .9 -1 0 -20 1 -1 1.3 -94 1.5 0 2.1 59.8 3.3 -64.8 .9 -1 0 -10 1 -1 0 -9 1 -1 0 -9 1 -1 .1 -9 .9 -1 .1 -8 1 -1 0 -8 1 -1 .1 -7 1.1 -1zM466.5 409l.9 .5 .1 276 -1 62 -1 17.4 -1 .6 -3.5 -62 -1.2 -90 .9 -1 0 -28 .9 -1 1 -74 1 -1 .1 -35 1 -1 0 -32 1.1 -1zM673.5 447.5l1.7 59 -1 18 .5 60 1.6 22 -1.4 14 .1 38 2.3 8 -1.1 19 2.6 7 -1.6 13 -.4 22 2.4 7 .2 36 -1.4 9 1.6 16 -1.3 22 -1.8 3.7 -4 1.7 -8 -1.9 -1.3 -4.5 -3.2 -76 -.6 -98 1.2 -4 2 -95 1 -1 1.1 -62 1.1 -1 .7 -22 1.4 60 .5 265 1.1 6 1.4 -290 .8 -1 .2 -22 1.1 -1zM453.5 448.3l.4 196.2 -1.4 53.5 -1 1.1 -3.4 -77.6 1.5 -4 0 -24 1 -1 .1 -53 1 -1 .1 -52 1.3 -1zM518.5 456.4l0 286.1 -1 40.2 -1.6 17.8 1.8 18 -.8 2 -1.4 .4 -3.4 -1.4 -.8 -3 3.6 -20 -2.7 -102 1.6 -181 .9 -1 0 -14 1 -1 1.2 -33 1.3 -1zM573.5 501.6l.3 254.9 -1.3 61 -1 1.6 -1.1 -1.6 -1.7 -42 -.7 -192 .7 -7 .9 -1 1.1 -34 1 -1 .1 -22 1.3 -1zM710.5 519.2l1.2 6.3 .3 19 -.7 18 .9 71 -.8 11 .8 45 -1.1 21 .8 15 -.6 53 .7 24 -1.2 18 -6.3 4.8 -4 -2.3 -1.6 -3.5 -.4 -46.7 -1.2 9.7 1 21 -2.8 8.8 -1 -5.3 .9 -36.5 1.1 -2.1 2 4.1 .2 -4 -.2 -2.9 -2 -2.1 -1.1 -5 1.5 -8 .5 -24 -.5 -27 1.1 -18 -1.1 -18 1.7 -1 0 -11 1 -1 0 -8 1 -1 .1 -9 .9 -1 .1 -12 .9 -1 .1 -11 .9 -1 0 -15 1 -1 0 -9 1 -1 .1 -12 .9 -1 .1 -15 .9 -1 .1 -8 1 -1 .1 -12 1 -1zM561.5 522.5l.3 283 -.9 11 -1.2 3 -5.2 -.8 -7 2 -2.2 -1.2 -.5 -3 1.9 -87 2.9 -9 1 -14 1 -1 0 -9 1 -1 1 -30 1 -1 0 -19 1 -1 0 -20 1 -1 0 -21 1 -1 0 -21 1 -1 .1 -21 1 -1 .1 -20 1.3 -1zM742.5 594l1.1 21.5 -.6 75 1.1 8 -1 31 .8 24 -1.3 14 .1 32 -1.2 13.7 -1 -.1 -1 -5.4 -1.9 -26.2 -2 -12 -1.2 -55 .3 -38 1.9 -6 0 -7 1 -1 0 -15 1 -1 0 -10 1 -1 .1 -12 1 -1 0 -5 1.1 -1 -1 -16 1.3 -1zM725.5 597l.9 6.5 0 31 -1.9 38.4 -1.2 -41.4zM763.5 622.4l.8 100.1 -1.1 44 1.7 14 -2.1 19 .6 13 -.9 3 -1 .3 -4 -4 -2 -16.3 1 -9.6 2.8 -8.4 -2.4 -30 1.6 -30 -.6 -35 1.7 -5 0 -22 1 -1 .1 -8 2.6 -6 -1.3 -1 -.1 -11 1.6 -1zM810.5 623.3l.7 31.2 -1.2 26 2 10 -1.9 40 2 7 -1.2 29 .7 42 -1.8 13 -2.3 1.5 -7 .7 -2.4 -2.2 -2.3 -11 1.8 -126 1 -1 0 -12 1 -1 .1 -6 1 -1 .7 -15 2.3 9 .8 .5 1.2 -1.5 1 -11 1 -1 0 -13zM804.5 688l-1 2.5 1 .8zM803.5 702.6l0 8.3 1 -6.4zM803.5 800.6l-1.1 3.9 1.1 3.1 1 -4.1zM750.5 627.2l.8 37.3 -.8 46.3 -1 -.1 -1.3 -24.2 .9 -43 1.3 -6zM855.5 655.5l.3 80 -1.4 11 .3 24 2.6 23 -2.9 15 -.7 12 -3.2 1.3 -3 -1.9 -1.5 -7.4 1.4 -11 -.7 -9 1.3 -35 -.2 -50 .8 -1 .1 -8 .9 -1 0 -11 1 -1 1.1 -19 1 -1 1.2 -9zM775.5 664.9l.9 1.6 -.4 113 1.3 16 -2.8 8.4 -1.8 -4.4 -1.1 -17 .2 -68 .8 -19 1 -1 .1 -20 1 -1zM841.5 668.4l.8 61.1 -1.6 8 -.2 19 -1.1 -7 1 -12 -1.1 -12 .4 -18 -1.2 -4 1.4 -9 0 -12 1.3 -1zM791.5 671l1.6 15.5 .6 64 -1.3 57 1.6 11 -1.5 4.2 -2 -1 -1 -5.2 -2 -82 1.1 -27 1 -1 0 -9 1.1 -1zM834.5 676.1l2 69.4 -.9 51 -2.1 18 -1 .1 -1.6 -8.1 -1.9 -60 1.6 -5 -1 -3 0 -9 1 -1 1 -20 1 -1 .1 -22 1.1 -1zM724.5 678.7l1.2 1.8 .1 24 -1.3 13.9 -1.3 -10.9 .3 -24zM1108.5 679.9l1.8 .6 -2.8 9.7 -.7 -4.7 1 -1 -1 -3zM1086.9 682.5l1.6 -1.5 2.6 .5 5.4 4.8 .9 2.2 -1.9 .6 -3 -4.3 -5 -.7zM1081.5 689.1l1.6 7.4 -1.6 4.2 -4.7 -3.2 3 -7zM1104.1 693.5l-1.6 6.1 -2 .5 -3 -1 4 -5.2zM875.5 694.3l.8 15.2 -.8 14.2 -1.2 -5.2 -.2 -9 .9 -3 -1 -2 1.1 -1zM1039.5 696l0 14.8 -.5 -6.3 -1.3 -1 .1 -5zM1167.3 696.5l1.7 0 -.3 1 -1.2 .2zM1067.5 700.2l3.1 5.3 -.1 2.5 -4.5 -5.5zM1092.5 700.5l2.3 0 .7 2zM1110.5 701.9l-1.4 7.6 -2.6 .6 -.7 -2.6 4.6 -4zM1122.5 702.2l0 3.4 -1.5 -2.1zM1188.8 702.5l.6 3 -2.9 .3 -.4 -2.3zM869.5 703.7l3 26.8 -2.2 9 -.6 19 2.8 7.9 1 -1.7 1.1 6.8 -.1 4.1 -2 -2.9 -.1 14.8 -1.4 10 1.5 9.5 1 .2 2 -13.3 .5 3.6 -1.5 15.9 -1 -2.7 -1 .2 -2.7 7.6 -2.3 1.4 -1 -1.8 -.2 -6.6 1.6 -19 -.6 -18 1 -15 -1.4 -42 1 -11zM1003.5 704.3l.3 6.2 -1.3 7.4 -.8 -8.4 1.2 -1zM783.5 707.3l1.1 5.2 -1.1 14.6 -.7 -9.6zM1089.5 707l2 1.9 5 11 2 -.3 7 -5.8 4.1 .7 -1.1 2.4 -3.2 2.6 -2.8 6.2 -3 -.4 -2 -3.1 -4 -.9 -4.8 -4.8 .9 -3 -1.9 -2 .1 -3zM963.5 707.6l0 9.5 -1.8 -5.6 .1 -2zM1126.5 712l.9 1.5 -1.2 5 -3.7 3.2 -1.5 -2.2 .8 -4zM1079.5 713.4l1.4 6.1 -2.4 .7 -1.8 -1.7 .2 -4zM1067.2 714.5l2.3 -.2 .5 1.2 -1.5 .3zM1018.5 715.1l1.1 5.4 -.1 7.9 -2.9 -2.9 .1 -7zM987.5 716l.2 6.5 -1.2 3.5 -.8 -5.5 1.2 -1zM1038.5 715.8l.9 .7 0 8 1.8 7 -.7 8.5 -2.9 -4.5 0 -6 -1 -2 -4.7 -3 0 -2zM897.5 717.2l.2 97.3 -1.2 3.1 -2 -3.5 -.6 -3.6 .7 -49 -.7 -17 .8 -1 0 -12 1 -1 .1 -12zM905.5 717l.9 4.5 .1 63 -.6 13 -1.4 2.9 -1.1 -4.9 -1.3 -30 1.6 -38 1.1 -1zM925.5 716.9l1.2 5.6 -.5 30 1.1 19 -1 23 1.5 9 -1.3 8.8 -2 1.9 -1.7 -2.7 1.1 -13 -1 -8 1.1 -6 -1.4 -8 .2 -28 1 -3 2.5 -2 -1.8 -4zM1058.5 717.9l1.5 .6 3.6 8 .7 4 -.8 1.5 -6.8 -10.5 .1 -2zM1143.2 718.5l1.3 -.9 2.5 .9 -2.5 1.4zM1149.5 717.8l2.7 .7 -1 7 7.3 5.9 1.1 2.1 -2.1 3.8 -8 2.8 -1.7 -1.6 2.7 -3.7 5 .1 2.5 -2.4 -8.1 -3 .2 -5 -3.4 -2 0 -2zM888.5 720.2l1.1 30.3 -1 42 .9 9 -1 2.9 -1.5 -3.9 -1.5 -39 .2 -21 .9 -1 .1 -8 1.2 -1zM949.5 720.3l1.3 22.2 -1.6 15 1.6 9 -1.9 13 1.2 11 -1.5 6 6.6 6 -4.6 10 .9 2.1 3 .6 1 1.3 -1 3.9 -4 1.1 -2.3 -1 -2.7 -7 1.8 -17 -2.5 -15 .5 -7 -1 -10 1.6 -16 1.9 -2 -.1 -4 1 -1 0 -4 -1.1 -1 .1 -10 1.2 -1zM1208.9 723.5l1.6 -1.5 5.3 -.5 1.4 5 4.7 3 1.2 2 -4.6 .6 -7 -3.2 -1.5 -1.4 .9 -1zM1301 722.5l3.5 -1.2 1.7 2.2 -1.7 1.3 -3 -.8zM917.5 722.9l.9 .6 1 40 -1.1 8 .6 6 -1.4 29.1 -3.2 -23.1 .7 -17 -1 -11 1.6 -1 0 -3 1 -1 -.9 -5 1 -1zM962.5 723l.9 4.5 -.9 1.6 -1.8 -2.6zM1111.5 723.3l1.8 1.2 -1.4 10 -2.4 .8 -1.8 -1.8 -.1 -3 2.1 -2 -.7 -4zM1166.5 723l3.5 .5 2.5 16 -5 -2.1 .3 -6.9 -3.9 -4 0 -2zM1120.5 724.6l1 -.2 1 4.3 -2.4 -1.2zM1002.5 724.9l.9 .6 .1 3.1 -1.7 -1.1zM1137.5 724.9l1.6 .6 .2 2 -1.3 4 -1.5 1.2 -1.8 -3.2zM1259.2 725.5l-1.5 3 -3.4 0 1.2 -2.4zM529.5 726.7l1.6 90.8 1.4 4.3 5 .7 1.8 3 -3.6 19 -.5 82 -5.8 0 -.7 -73 -3.4 -33 3.2 -92.7zM1289 728.5l2.5 -1.5 9 1.9 3.9 2.6 .5 3 -1.4 1.2 -4 .4 -1.7 -1.6 1.7 -2.3zM1094.4 728.5l.9 6 -.8 1.3 -4.4 1.7 -4.5 13 .7 4 4.2 9 -1 8 2.4 7 1 8 -4.3 7 -3.1 .9 -1.6 -2.9 5.8 -5 -.6 -5 -4.9 -5 -2.4 -5 .7 -2.2 -1 -1 -3 1 -.9 -4.8 -3.8 -5 4.9 -10 -1.2 -4 -2 -1.6 -1.3 .6 -1.3 6 -4.7 6 .2 11 -1.9 .5 -4.5 -6.5 4.6 -9 -.7 -6 1.6 -1.5 8.8 -2.5 -4.6 -3 -1.1 -3 1.1 -2 3.8 -3.3 .8 10.3 3.2 .2 6.1 -5.2 -.9 -4 4.8 -4.8zM1081.5 757.3l-1 2.2 2 6.4 4 1.8 .1 -3.2 -1.7 -5 -1.4 -1.9zM1125.5 730.4l2.8 2.1 4 12 -.8 2.2 -1 .1 -2.1 -4.3 -6.1 -4 2.4 -3 -1 -2zM1010.5 730.9l.8 .6 -.8 4.8 -1 .9 -3 -.1 -1.5 3.4 -.6 34 -.9 4.1 -2 2.5 -2 -3.6 1.1 -3 -1 -3 2 -5 .1 -26 2.1 -1 0 -4 1.7 -1.6 3 -.1zM1047.5 732.5l2 1.5 .7 2.5 -1.7 10 5.5 4 -.7 2 -3.8 2.1 -4 4.2 -1.5 -2.3 2.7 -4 0 -2 -3.8 -5 5 -4 -.2 -4 -1.9 -2 .3 -2zM1236.3 741.5l8.2 .6 11 -2.3 0 -1.5 -5 -2.1 -.7 -1.7 1.7 -1.7 6 .5 4.1 4.2 -2.7 6 4.3 5 -.7 1.1 -7 -.4 -2.7 -1.7 -1.3 -2.4 -14 -2.3zM1028.5 735l7 10.8 -4 -.6 -1.8 -1.7 -3 -6zM1104.5 735.2l4.3 5.3 -.2 7 3.1 9 3.4 5 -1.6 7.9 -2 -1.3 -4.5 -10.6 -2.5 -1.7 -3 .1 -1.6 2.6 -.2 14 -1.2 2 -4.5 -1 -1.3 -2 1.9 -3 -.9 -11 2.8 -3.8 6.1 -3.2 -1 -10zM1356.9 738.5l1.6 -.1 .6 -.9 -1.1 -1 1.5 -1.4 4.7 .4 .6 1 -2.2 2zM961.5 736l1.5 4.5 .5 13 -2 14.7 -6 -5 -1 -8.7 1.6 -6 -.1 -8 1.5 -2.5 .6 1.5 1.4 .1 .2 -2.1zM959.5 744.3l-1.5 1.2 0 2 1.5 1.2zM1178.8 745.5l.9 -3 -1 -1 0 -3 1.8 -1.4 3.2 .4 .3 5 3.5 2.9 3 -.1 5 -2.4 5 -.9 3 -2.1 2.4 .6 -1.4 2.7 -5 .6 -4.3 2.7 -1 5 -1.7 1.3 -3 -.7 -1.7 -1.6 0 -2 -2.3 -1.4 -4 0zM1443.1 738.5l1.4 -1.4 2 .3 1.3 2.1 -2.3 .4zM939.5 737.9l1.7 14.6 -1.1 10 1.1 7 -1.2 12 .6 15 -2 8 2.4 8 -1.5 7.3 -1.6 -2.3 -2.4 -14.2 -3 3.7 -1 -6.5 .6 -12 1.4 -1 2.1 2 2.1 -48zM1063.5 738l.4 2.5 -1.2 4 -2.2 2.3 -4 1.7 -.5 -1 1.7 -2 0 -5 1.8 -1.8zM1293.2 741.5l-6.7 .7 -2.6 -1.7 0 -1 6.6 -1.4 1.3 .4zM1141.5 739.3l0 3.4 -1 -1.2zM973.5 740l-.5 16.5 1.5 1.7 4 -3 1 .5 1.1 6.8 -1.1 .6 -2 -2.8 -6.4 -2.8 -2.2 -6 -.2 -3zM1161.5 740.8l2 .8 1.2 3.9 -.9 3 -1.3 .9 -2.7 -.9 .9 -2 -2.8 -3 -.1 -1zM1318 743.5l4.5 -1.7 7.6 -.3 7.4 4.5 2.3 4.5 -4.3 .5 -6 -1 -3 -1.5 2.3 -1 -1.3 -1.4 -9 -1.1zM1117.5 744.2l2.1 1.3 -.1 1.8 -2.3 -.8zM1445.1 745.5l4.4 -1.2 2 2.2 -1 1.1 -4 -.7zM1140.5 744.9l7 1.3 5.3 4.3 .7 2 -1.1 4 -8.4 12 -1.8 8 .3 1.5 2.7 1.5 -.7 6 5.6 6 .9 5 -5.2 3 -2.2 4 .8 7 -1.9 2.5 -2 .6 -2 -1.2 -5.8 -7.9 2.8 -3.9 3 1.9 2.6 0 -.8 -4 2.2 -4 -2 -6 .7 -4 -1.7 -2.8 -2 -1 -6 4 -2 0 .2 -1.2 4.1 -3 .7 -4 -5.7 -7 1.8 -2 .1 -4 1.8 -3.5 2 1 .6 8.5 1.4 1.7 4.2 -3.7 1 -4 4 -2 -.4 -3 2.5 -3 -5.2 -2 .5 -4 -2.6 -.1 -4 3.9 -1.3 -.8 .3 -3zM875.5 745.9l1.4 8.6 -1.4 3.6 -1 -4.6zM1019.5 746l0 8.9 -1.8 -1.4 0 -6zM1036.5 746.1l2.4 3.4 -.1 9 2.9 11 -4.2 8.2 -1.3 -1.2 -.4 -5 1.8 -3 -3.1 -4.1 -5 -.2 -2 -1.9 -5 -1.4 -2 .7 -.7 -2.1 1.7 -2.6 5 -1.3 3 -4.7 1 .6 1 8.3 1 1.1 2 -1.3 3.4 -4.1 -3.2 -3 -.1 -3zM985.5 747.5l1 .7 1.3 6.3 -.7 15 3 10 -2.7 6 1 7 -.3 17 -2.6 4.6 -3 -1.2 -5 6.5 -6 2.8 -1.8 -1.7 -1.4 -10 1.2 -1.5 3 2.5 2 .3 1.5 -2.3 -2.5 -3.9 -4 -.7 -1.6 -3.4 -.4 -3 3 -5 -2.5 -4 0 -2 1.5 -2 2 0 -.1 8 2.1 9.6 4 2.4 2 3.8 2 1.1 1.2 -4.9 0 -6 -3 -5 -.1 -4 -5.8 -8 3.8 -4 2 -4 -1.8 -7 2.7 -3.7 3 .8 1.1 -2.1 -.9 -4 1.9 -4 -1.8 -5zM982.5 777.2l-1.8 1.3 -.3 2 1.1 4.2 2 2 1.2 -1.2 .9 -7zM1291.9 748.5l1.6 -1.5 2 .3 4 4.2 11.5 4 -.1 1 -2.4 1.2 -13 .5 0 -1 3.3 -1.7 -1.3 -1.3 -6.4 -1.7 1.7 -2zM1223.2 748.5l-1.2 3 -6.5 3.5 -2 -1.5 0 -1.2 6 -4.4zM1313.2 748.5l3 0 -.7 1.1zM1539.5 748.2l1.7 .3 -.7 2 -1.3 -1zM1124.5 749.3l3 .5 .1 3.7 2.8 3 -.5 2 -2.4 1.6 -1.5 -.6 .8 -5 -2.6 -2zM1612.9 750.5l-1.4 1.1 -3.2 -1.1 3.2 -1.1zM1716.5 749.1l3.1 .4 1.3 6 -5.9 -2zM1367.7 751.5l1.8 -1.7 5 .5 2.9 3.2 1 3 -5.9 .7 -4.8 -3.7zM725.5 750.7l-1 12.3 -.1 -9.5zM1205.5 750.9l2.3 2.6 -2.3 2.9 -1.6 -.9 1 -1 -.6 -3zM1261.8 751.5l-2.7 5 -5.6 .5 -2.6 -1.5 .9 -2 5.7 -2.6zM1408.8 753.5l2.7 -1.6 4.3 .6 .2 2 -.8 2 -3.7 .7zM1803.3 754.5l-.4 3 -4.4 .2 -1.8 -1.2 -.1 -1 3.5 -1 -1 -1 2.4 -1zM1439.5 755.5l19.8 -1 -.2 3 11.5 5 2.3 2 -6.4 -.5 -8 -4.2 -12 -.8 -4 -2.1 -3 -.3zM1170.5 759.6l6 -1.7 2 -3 8.7 .6 1 3 -1.8 5 3.1 1.8 6 -5.4 3 6 3.6 1.6 -2.7 4 2.5 7 -3.4 .3 -7.3 -3.3 -2.7 -2.6 -4 -.6 -1.3 1.2 -2.7 7.9 -3 .8 -1.6 -3.7 1.8 -1 -2.5 -2 .3 -3 3 -3.6 4 .3 2.3 -1.7 -1.3 -1.7 -4 .9 -2.8 -1.2 1 -1 -1.2 -1.2 -6 -2.4zM1196 769.5l.5 1.3 2.7 -.3 -1.7 -1.3zM784.5 756.1l-1.1 32.4 1.5 17 -2.4 7.8 -1.5 -8.8 1.4 -17 -.1 -23 1.2 -8.1zM1215.8 763.5l1.9 -2 .1 -4 -1.3 -1.2 11.2 .2 -1.8 3 -5.4 4.6 -3 .4zM1494.9 756.5l-5.4 4.5 -3.2 .5 3.2 -4.6 2 -.9zM1320.8 757.5l4.7 -.3 4 3.3 -1 1.1 -4 .3zM1532.1 758.5l2.4 -1.4 4.1 .4 .5 2 -4.6 .5zM994.5 758.2l1.3 3.3 -.3 6.3 -2.9 -4.3 .3 -4zM1617 758.5l.3 2 -2.8 2.8 -2 .9 -3.4 -.7 -.3 -1 3.7 -1.5 3 -2.8zM1244 760.5l1.5 -1.1 3.1 .1 3.2 4 5.7 2.4 8 .6 4 -1.3 3.9 .3 -5.1 7 -7.8 1.2 -1.5 -1.2 2.5 -2.2 -13.7 -3.8 3.1 -2 -1.4 -1.6 -5 -1zM1053.5 760.1l2.5 3.4 1.5 7.8 7 1.7 1.6 1.5 -.8 7 1 6 -2.5 4 -1.8 6 1.5 7 -2.1 8 2.3 7 -2.2 2.3 -4 -1.7 1.4 -6.6 -1.4 -2.3 -2 0 -4 5 -2 -.9 -.9 -1.8 4.6 -11 3.3 .7 .9 -4.7 -4.2 -5 .4 -4 2.2 -5 3.8 -2 -1.5 -1 0 -2 -2 -3 1.4 -.8 0 -1.4 -6 -2.1 -3.6 -6.7 .6 -2.4zM1301.3 761.5l3.2 -1.6 5 .2 5 4.1 6 2.3 2.2 3 -4.2 -.4 -5 -2.6 -4 -.6 0 -1.7 -6 -1.2zM1389.5 761.5l-.3 3 -15.7 6.8 -2.9 4.2 -6.1 3.3 -3.8 12.7 -16.1 7 2.6 6 -.7 2.2 -4 1.6 -6 -.1 .1 -4.7 -1.7 -5 -2.7 -2 .6 -2 -1.1 -1 .8 -1 15 .9 3.1 -3.9 -1.7 -2 4.6 -1.7 2.1 -2.3 -2.1 -2 0 -4.7 2 -1.8 4 -.3 -1.7 -2.2 2.7 -1.7 13 -.5 .6 -.8 -3 -1 4.7 -2 -1.3 -1.3 -7 -1.2 1 -2 14 -1.6zM1752.3 762.5l-3 3 .2 3.5 -5 -.1 -8.3 -3.4 1.3 -1.4 8 .2zM750.5 763.3l1.1 3.2 -.2 13 -.9 4.4 -1 .1 -1.2 -10.5 .8 -8zM972.5 762.7l.2 5.8 -2.2 4 -1.8 -3 1 -4zM1165.3 766.5l-1.7 5 -.2 5 -.9 .9 -5.7 -1.9 -2.3 4.7 -2 .7 -1.4 -4.4 1.4 -3.5 1.2 -.5 .8 -9 2 -.8 3 3.6 3 -.6zM1434.9 764.5l6.6 -1.6 4.7 .6 2.9 4 .2 2 -2.8 .6 -11 -4zM1015.5 763.9l1.6 .6 -3.6 5 -1 5 5 -2.9 2.1 1.9 -1.1 5.5 -3.3 7.5 .3 4 3.4 7 -3.5 7 2.1 8 -5 4 -2 4.3 -1.6 -2.3 .7 -6 -3.4 -6 1.3 .1 .1 -3.1 -3.1 -1.3 -4.8 -4.7 -.7 -11 .7 -2 1.8 -1.1 1.4 3.1 .9 11 1.7 2.2 2 -1.1 .8 -6.1 1.3 -2 -1.5 -9 2.9 -6 -2.1 -8 2.6 -2.8zM1304.1 771.5l-.9 3 -4.7 2.7 -6 -.1 -10 1.9 -2.5 -1.5 2.7 -2 .8 -2.2 3 -1.1 6 1.7 6.2 -2.4 -5.2 -2.4 -4 -.5 -.4 -1.1 2.4 -1.5 5 -.7 1.1 2.2zM1480.2 765.5l5.3 -.3 2 1.3 .4 2 -3.4 2.3 -3 -.7 -.7 -2.6 1.1 -1zM1790.6 765.5l1.9 -.9 2.8 .9zM1027.5 765.9l5.2 11.6 -2.5 11 .5 2 1.8 1.9 1.6 .1 .4 -5.5 2 -2.2 3 1.9 1.8 3.8 -.8 3.4 -5 1 -2 3.8 -6.8 -4.2 .9 -2 -3.8 -3 .7 -7.8 3.1 -4.2 -4.1 -8 1 -2.5zM1524 770.5l5.5 -2.7 3.5 -.3 -2.5 -.6 0 -1.2 3 .4 2.5 1.4 1.4 4 2.7 3 -6.6 .6 -4 -.8zM1406.7 767.5l-.3 3 -4.9 .8 -.8 -.8zM1630.1 769.5l2.4 -1.4 3.3 .4 .8 3 -3.1 .4zM1791.9 769.5l2.6 -1.6 8 .1 4.1 5.5 -3.1 2.2 -6.8 -.2 2.1 -3 -5.3 -1.4zM1124.4 770.5l.1 9 -7.5 13 2.5 4.3 6 2.4 1.2 2.3 -1.2 .8 -3 -.7 -4 -3.4 -2 .6 -.9 1.7 .9 3.6 6.7 6.4 -2 10 -1.7 1.4 -1.2 -.4 -2.8 -10.2 -4 -.2 -3.4 -3.6 .4 -10 -2 -3 -4.2 3 -1.5 6 -1.3 1.2 -3 -.9 -3 -4.2 -1 0 -3 16.3 5 1.6 3.5 -5 2.5 -1.3 1.5 1.3 -.5 4 -9 5.6 -5 .6 -2 -.8 -3.9 -9.4 3.7 -3 1.3 -6 3.9 -5.5 3 -.4 4 -2.9 3 -4.5 0 -2.2 -3.4 -1.5 .6 -1 -2 -3 .1 -2 1.7 -1.5 3 -.5 2 6.2 7 -5.3 2 0 -1.5 7.1 1.5 .7 4.8 -4.7 -1.6 -7 .8 -2.8 4 -.1 3 -2.1zM1463.4 772.5l.9 3 -6.8 5.1 -6 .4 -2.8 -1.5 4 -3 -1 -2 4.8 -3.8 3 -.7zM1667.6 770.5l-3.3 8 -1.8 1.5 -3 .5 .4 -4 -3.7 -2 9.3 -4.5zM961.5 770.9l2 1 1 2.6 -1.2 12 2.1 12 -2.9 4.3 -2 -1.4 -2.9 -6.9 .7 -6 -2.6 -7 .8 -4zM1247.8 773.5l2.7 -2.7 4 .3 6.8 6.4 -5.8 .5 -5 -1.1zM1415.1 774.5l3.4 -2.5 8 .2 8 3.6 7 7.1 -9.1 1.6 -1.9 -2.4 -3.4 -1.6 1.7 -1 -.3 -1.3 -2 0 -3 -2.1zM1224.5 773.2l6 1.4 7.7 9.9 9.5 4 -4.5 9 4.8 3 -2.8 2 -7.8 2 -.8 1 3.6 6 -.5 1 -11.2 4.8 -1 -.5 -.3 -5.3 -1.4 -3 -6.3 -3.4 -.5 -1.6 7.3 -2 -.8 -6.2 7 .3 3.1 -4.1 -2.1 -.4 -3 -3.2 -4.6 -1.4 1.6 -1.2 -5 -1.3 -4 1 -1 -2.8 -3.6 -.7 1.6 -3.6zM1332.1 773.5l-.6 4 -2 2.1 -7 1.1 -3.3 -2.2 1.3 -3.4zM1706.1 774.5l6 -1 2.7 2 -6.3 .3zM1047.5 774.1l3.4 5.4 -3.4 5.2 -1.1 -1.2 -.6 -3 .8 -1 -.9 -2 .3 -3zM1786.8 780.5l5.3 -2 -4 -2 2.4 -1.3 2.3 .3 1.9 3 -.8 2zM1259.5 779.8l4 -1.6 4 .5 2 -2.4 7 2.2 .4 4 8.1 7 .3 2 -4.8 2.3 -1.8 -1.3 1.8 -1.3 -4 -.1 -.2 6.4 -2.8 2.6 -9 -2.1 -2 -1.5 -.4 -2 9.5 -4 -4.1 -5.8 -6 -.4 -.8 -1.8 -1.9 -1zM1395.5 776.5l-2 11.9 -11.1 8.1 -1.1 2 3.2 4.9 8 1 1.5 1.1 -5.5 1.8 -6 -2.8 -6 1.9 -3.4 3.1 -3.6 .3 -3 -1.6 -1 -3.7 4 -.8 .2 -1.2 -3.2 -.3 -2 -2.7 14 -3.7 1.2 -4.3 -.7 -3 4.7 -1 -2.4 -2 .8 -2 7.4 -6.8zM1580.5 776.1l4 .7 2.7 2.7 -.3 2 -3.4 3 -5 -.5 -1.4 -1.5 3.4 -1.7 .3 -1.3 -2.8 -1zM1635.5 775.9l4.7 .6 -1.3 4 3.9 4 -1.8 10 2.1 8 -4.2 7 1.5 5 -1.9 1.6 -5 -3.3 -14.9 -4.3 1.3 -1 -2.6 -2 2.2 -3.1 7.4 .1 6 -7 -2.9 -4 3.7 -2 -.9 -2 2 -2 -.8 -3 2 -1 -3.5 -1.4 -4 .7 -2.4 -1.3 1.4 -1.5zM993.5 776.5l2.3 3 .8 4 -.6 2 -2.5 1.9 -1.3 -1.9 -.9 -6zM1073.5 777.2l3 .1 2.8 3.2 2.1 5 -.9 2 -2 -1.3 -5 .2 -.9 -.9 1 -1 -2.1 -3.2zM1562.7 777.5l2.5 0 -.7 1.7zM1189.5 778.3l0 4.4 -5.2 3.8 1.7 6 -1.5 5.1 -4 -2 -3 .7 -2 -.8 -.4 -6 -1.6 -.8 -4.3 .8 -.7 6.9 -3.7 -6.9 .9 -7 -1.3 -1 .4 -1 1.7 -.3 8 2.8 4 2.6 4 -1.1 4 -5.5 2 -1.2zM1203.7 778.5l2.8 -.1 .7 1.1 -1.7 .9zM1720 779.5l4.5 -1.2 2.4 1.2 .7 2 -3.1 .6zM1742.4 778.5l8.8 0 5.8 4 5.1 8 .3 2 -1.1 2 -14.9 7 -3.9 -.5 -.7 -1.5 .7 -1.8 4 -.6 7 -3.4 2.2 -3.2 -9.5 -3 -.4 -1 4.9 -2 -8.2 -2.7 -1 -1.3zM1298.2 783.5l5.3 -.7 1 -1.6 -3.4 -.7 2.4 -1.1 7.7 .1 4.6 2 .2 5 8.9 4 -1.9 2 -5.5 1.3 -1.6 -1.3 -1.5 -5 -10.9 -.5zM1494.1 779.5l4 0 1.3 1 .2 2 -3 1 .4 -1zM1680.2 780.5l4.3 -1.3 1.3 .3 .1 2 -2.4 .4zM1407.1 784.5l7.4 -4.4 1.6 .4 -.6 5.3 6 2.6 .2 2.1 -2.2 1.9 -8.3 -1.9 -.4 -2 -3.3 -2zM1474.5 781.2l3 -.3 6 2.6 2 2 1 3.4 8.6 5.6 .8 2 -4.9 2 -.7 1 1.2 1.1 8 2.1 5.4 -1.2 -3.8 -1 -1.1 -3 6.8 1 1.8 9 -1.1 2 -6 4.5 -.7 -1.5 -6 -2 -1.3 -4.3 -2 -2.2 -5.3 -2.5 .3 -3 -4.2 -4 1.4 -1 -4.8 -4 2.8 -2 0 -2 -1.2 -1.3 -5 -1.3zM1331.9 784.5l2.6 -1.4 2.9 1.4 -.9 1.4 -3 .9zM1457.5 782.9l3 0 4.3 3.6 -6.3 .7 -2.6 -1.7zM1511.9 785.5l2.6 -1.6 7.5 .6 6.7 8 3.4 7 9.5 2 2.1 3 -6.1 1 -.2 3 -2.1 2 -13.8 3.9 0 -2.2 4 -.3 2 -1.4 .3 -7 1.2 -1 -6.5 -.4 -2.5 -2.6 2.9 -6 -7.4 -1.4 -4.1 -4.6zM1513.7 788.5l1.8 1.4 2.2 -1.4zM1694 785.5l-1.1 2 -8.5 -1 6.1 -2.3zM1581.4 785.5l-2 1 -1.9 6.6 -5.4 3.4 1.3 4 -.8 5 -1.1 2 -3 1.8 -2 -.9 .1 -4.9 -1.1 -2 -4.7 -3 -4.3 -4.6 -2 .2 10 -1.2 7 -2.1 0 -1.8 -4.7 -1.5 1.7 -.9zM1806.6 785.5l.9 4 -5 1.5 -1.5 -1.5 3.5 -.4 0 -1.1 -3 0 -2.3 -1.5zM1220.7 786.5l-1.8 4 -9.4 2.1 -3.3 5.9 -10.6 6 .9 1.6 6.1 2.4 1.9 5 -1.8 3 -4.2 .5 -6 -4.1 -7 -.4 -.8 -1 -.7 -6 2.6 -1 6.6 -7 8.3 -5.6 8 -2 1 -2 8 -2zM1614.1 789.5l-7.6 .4 -6 -1.4 -.3 -1 11.3 -1.1zM1707.7 791.5l1.2 -2 -1.8 -1 1.4 -1.4 13.8 -.6 -7.8 5zM733.5 788.2l.9 16.3 -.9 8.2 -1.1 -5.2zM1070.5 789.4l2 -.6 .7 2.7 -1.7 0zM1465.5 789.1l1.3 .4 -.8 3 5.1 4 .4 2 -5 3.4 -3 .7 2.4 -2.1 -3.4 -.2 -2.7 -1.8 2.9 -2 -3.9 -6zM1294.6 791.5l3.9 -1.7 2.2 .7 -3.2 1.7zM1440.6 792.5l3.9 -1.8 5.6 2.8 -2.7 3 -3.9 1.4 -2.1 -1.4 2.1 -.6 1.2 -2.4zM1678.4 796.5l1.3 -2 -.9 -2 4.7 -1.7 7.6 .7 1.6 3 -8.2 5.6zM1730.3 793.5l2.2 -2.4 5.3 .4 -.2 2 -1.1 .3zM1407.9 792.5l-.6 2 -4.8 2.8 -1 -1.2 0 -1.9 1.8 -1.7zM1617.2 792.5l-.4 3 -3.3 2.9 -3 .1 -2.5 -3 2.5 -2.7zM912.5 793.5l.8 9 -.8 2.9 -1 0 -.9 -4.9zM955.1 794.5l1.4 -1.1 .9 1.1 -1.9 1zM1664.5 793.5l.3 5 -3.3 2.9 -4 .4 -3.6 -3.3 -.2 -2 2.8 -2.4 4 -1.2zM1066.5 797.3l2 -.1 3 3.2 2 .2 1.6 -1.1 .1 -5 2.3 .3 1.2 2.7 -1.1 3 2.9 5 .8 7 -2.8 .5 -4 -3.5 -2 -.2 -1 -7.5 -5 -1zM1302.6 797.5l1.9 -3.9 6.3 1.9 1.7 2 -8 2.2zM1795.6 794.5l8.9 -.1 1.3 2.1 -10 -1zM1044.5 795l2.8 1.5 .9 3 -2.2 7 -2.5 1.9 -2 -1.9 1.1 -7 -1.1 -1 1 -2.8zM1421.5 794.8l7.5 1.7 2.9 3 -2.6 4 1 4 -6 2 .5 4 3.7 .9 5 -2.1 3.3 1.2 1.6 2 -2.3 4 -4.6 2.4 -5 .4 -15.6 -11.8 -.3 -1 2.6 -1 9.3 .7 1 -.7 -3.1 -8 2.3 -2 -2.7 -2zM657.5 795.9l0 15.9 -1 -6.3zM1156 797.5l2.5 -.3 4 4.2 4.2 1.1 2.8 5.6 0 4.1 -5 .5 -5 -4.4 -4 -.4 -.3 -8.4zM840.5 797.6l.9 6.9 -.9 5.8 -1.6 -6.8 .6 -5zM1279.7 801.5l1.8 -2.3 5 -1.7 10 1.9 .9 2.1 -3.3 3 -5.6 1.9 -8 -1.1 -.7 -1.8 1.1 -1zM1402.5 797.9l1.6 2.6 -2.6 1.7 -1 -1.7zM1716 799.5l4.5 -1.2 7 1.3 7.6 4.9 .2 3 -4.8 2.7 -6 .6 -1 -1.3 2.3 -1 -3.3 -1 -3.8 -3 3 -1zM1024.5 799l2.3 2.5 3.4 10 0 7 -2.7 3.7 -7 1.9 -2.5 -2.6 .6 -6 5.1 -4 .4 -3 -2.3 -5 .7 -3.3zM1319.5 800.2l1.8 1.3 -.1 2 -8.7 2 -2.9 3 .2 3 6 3 2.5 5 -2.8 2.7 -5 .6 -12 -12.3 0 -4.2 2 -2.3 10 -.3 5 -4.2zM1591.1 800.5l-.6 2.6 -2.1 1.4 -5.9 .8 -2 -1.8 1.2 -2 4.8 -2.5 3 .1zM1437.3 801.5l3.2 -1.6 2.7 1.6 1 2 -2.2 2 -2.5 .6 -1.9 -1.6 1.1 -1zM1807.5 800.2l0 8.9 -2.9 3.4 .7 3 -.8 1.2 -5 1.4 -5 -3.5 -5 .8 -1.5 -.9 .5 -2.5 4.2 -1.5 -1 -1 .8 -1.7 5 -1.1 1.2 -1.2 -1 -3 1.8 -1.8zM1600.5 801.3l.9 2.2 -1.9 1.9 -1.1 -.9 0 -2zM1263.5 804.5l4 -.6 7 2.1 5 .1 7.8 6.4 -2.8 7.5 -6 -2.8 -5 -5.2 -8 .1 -.9 -2.6 1 -1zM1697.9 804.5l-1.4 2.2 -6 2.7 -7 .9 -2.7 -.8 5.7 -4.1zM1471.8 806.5l1.7 -1.8 7 .7 1.4 5.1 -1.4 1 -3 -.1 -5 -3.4zM1036.5 805.8l2.1 2.7 -.1 2.7 -3.6 -1.7zM1448.5 812.5l1.4 -4 2.6 -2.1 5 .7 3 2.4 -1 1.5 -10 2.5zM1775.2 806.5l-2.3 4 -.7 5 1.7 4 -1.2 1 -4.3 0 -2.2 -3 -3.7 -1.5 -.5 -2.5 2.7 -2 -2.2 -2.1 5 -2.5zM1322.9 810.5l1.6 -2.6 2 -1 6.2 1.6 -6.2 2.9 -3 .1zM775.5 809.3l.9 3.2 -.9 3.9 -.9 -3.9zM1398.1 810.5l1.4 -1.3 2.4 1.3 -2.4 1.1zM1376.5 810.1l4 .7 3.6 2.7 1.3 5 -.9 1.8 -2 -.7 -1.1 -2.1 -4.6 -2zM1558.7 810.5l-.2 1.1 -5.6 1.9 -2.3 0 -.5 -1 1.4 -1.7zM1657.3 810.5l8.2 -.8 7.8 2.8 4.2 6 -5 2.6 -4 0 -7 -3.6zM1736.7 812.5l1.8 -2.3 4.8 2.3 -.8 1.4 -3 .8 -2 -.4zM1351.9 811.5l1.6 -.8 4 1 4.6 2.8 .7 2 -6.3 .2zM1594.5 812.5l2 -1.7 2 -.1 7 3.5 6 1.1 2.9 3.2 -2.9 1.4 -5 -2.9 -5 2.7 -6.8 .8 .8 -3zM1718.1 815.5l1.8 -2 -.8 -1 2.4 -.9 3 .6 1.9 2.3 -.9 1.5 -6 1.4zM1111.5 812.6l1.2 1.9 -1.2 2.4 -1.1 -1.4zM1130.1 813.5l7.7 2 1.4 3 -.7 2.7 -2 1.1 -3 -.9zM1170.5 813.5l5.9 1 2.3 2 -.2 1.5 -7 2.5 -1.2 -2zM1465.5 813.5l2 -.9 5.1 1.9 2.6 3 .3 2.4 -2 .4 -6 -3zM1244.4 814.5l14.1 1.9 1.7 2.1 -3.7 2.8 -7 .1 -2 -1.3zM1333.9 815.5l2.6 -1.5 2.3 .5 2.5 2 .9 3 -5.7 -.5 -2.2 -1.5zM1488.7 817.5l.8 -1.5 3 -.7 5 2.2 -6 2.6 -2 -.5zM1566.5 815l2 -.2 1.9 1.7 -.9 2.8 -3 -.3zM994.5 815.8l0 5.4 -3.6 .3 .1 -2 2.5 -3.7zM1152.4 818.5l1.1 -2 2 -.7 2 .6 1.6 2.1 -.9 2 -2.7 1.1 -2.7 -1.1zM1542.5 816.3l2.4 1.2 -1.4 2.5 -1.9 -1.5zM1077.5 816.6l.3 3.9 -1.3 1 -.9 -3zM1516.5 818.5l2 -.6 1.1 1.6 -2.1 .9zM1369.9 819.5l1.1 0 .5 1.5 -1 .4zM478.5 843.4l2 3.8 .9 11.3 .5 68 -7.3 0 .6 -66 1.3 -13zM444.5 847.8l2 1.5 1 2.7 1.2 9.5 .9 65 -14 0 1.1 -53 3.7 -19 2.1 -5.2zM498.5 854.2l1.3 17.3 .3 55 -10.2 0 .6 -48.4 1 -3.5 2 10 4 -30.1zM462.5 862.3l1.6 21.2 .2 43 -4.1 0 .3 -47.2 1 -15.5z"/>
<path fill="#000" fill-opacity="0.12" d="M633.5 347.6l0 61 -1 24.1 -1.5 -53.2 1.2 -6 -.1 -12 1.1 -1zM627.5 369.4l2.2 19.1 .5 27 -2.7 333.5 -1 3.2 -3 -225.4 -2.3 223.7 -1.7 52.7 -1 -6.7 -.8 -49 -.3 -244 2.9 -72 .9 0 1.3 14 1 -7.1 .2 8.1 1.1 0zM495.5 384.5l-.5 207 -1.5 100.5 -2 24.7 -2 4.6 -2 -6.3 -3 -36.5 -1 -1.2 -2.1 35.2 -1.9 11.9 -2.5 -37.9 -.1 -106 .8 -1 0 -20 1 -1 1.5 -94 1.7 25 1.6 64.5 1 -3.8 1.5 -79.7 .9 -1 0 -10 1 -1 0 -10 1 -1 0 -9 1 -1 0 -9 1 -1 0 -9 1 -1 .1 -8 .9 -1 .1 -8 1 -1zM466.5 409.3l.9 46.2 -.1 210 -.8 51.8 -1 17.2 -1 1.8 -3.3 -45.8 -1.1 -77zM605.5 445.4l1.3 68.1 .7 310 -3 20.3 -2 5.4 -1 -.3 -2 -6.7 -2.4 -16.7 1.6 -19 .8 -40 .2 -204 1 -4 0 -12 .9 -1 .1 -21 1 -1 0 -25 1 -1 .1 -26 1.1 -1zM517.5 464.2l.8 1.3 0 236 -.6 54 -1.2 19.6 -1.5 -6.6 -1.5 -28.6 -1 -67.4 1 -151zM666.5 465.6l1.3 66.9 .4 260 1.3 6.5 1.1 -17.5 .5 -283 2.4 -32 1.3 40 -.9 18 .4 61 1.1 21 -1.2 15 .2 38 1.1 8 .4 62 .6 3 2 2.3 .6 18.7 -.5 17 -1.7 7 1.9 18 -1.3 8 0 13 -1.1 3 -3.9 1.6 -2.4 -1.6 -1.6 -3.8 -1.4 2.8 -1.6 .8 -2 -5.1 -3.6 -99.7 -.4 -72 1.1 -4 2.1 -95 1 -1 0 -24 1 -1 .2 -37 1.1 -1zM612.5 468.7l-1 335.6 -.2 -331.8 1.2 -1zM453.5 481.2l.2 158.3 -1 38 -1.2 6.7 -3.1 -62.7 1.3 -4 0 -24 1 -1 1.3 -106 1.4 -1zM582.5 486l1 .2 .1 213.3 -.7 77 -1.4 20.9 -2 -69.9 -.6 -177 .8 -1 .1 -18 .9 -1 .1 -21 1 -1zM592.5 500.4l0 245.1 -1 69.5 -1 -4.5 -.9 -48 .3 -218 1.1 -33 1.2 -1zM573.5 516.9l0 204.6 -.8 52 -1.2 14.9 -1.3 -10.9 -1.1 -34 -.8 -160 .5 -7 .9 -1 0 -14 1 -1 1.3 -42zM710.5 520.7l1.2 23.8 -.6 18 .9 70 -.9 12 .7 46 -1.1 20 .6 91 -1.5 18 -1.3 1.3 -5 1.2 -2 -.5 -1.6 -3 -.6 -51 -.8 -4.6 -2.3 -3.4 .3 -2.4 1 1.1 .9 -3.7 -1.4 -15 1 -14 -.7 -26 .9 -18 -1.1 -18 1.6 -1 0 -11 1 -1 0 -8 1 -1 .1 -9 .9 -1 .1 -12 .9 -1 .1 -11 .9 -1 0 -15 1 -1 0 -9 1 -1 .1 -12 .9 -1 .1 -15 .9 -1 .1 -8 1.1 -1 .1 -12 1 -1zM561.5 536.9l-.1 254.6 -1.9 18.8 -1 1.6 -9 3.9 -2.2 -2.3 -.8 -8 .5 -76 2.7 -9 1 -14 1 -1 0 -9 1 -1 1 -30 1 -1 0 -19 1 -1 0 -20 1 -1 0 -21 1 -1 0 -21 1 -1 .1 -21 1 -1 .2 -20zM725.5 597.4l.7 37.1 -.6 21 -1.1 2.7 -1 -26.7zM741.5 600.1l1 .4 .9 15 -.8 57 1.1 27 -1 29 .9 25 -1.6 22 .2 24 -.7 7.5 -1 1 -4.2 -41.5 -.1 -26 -1.5 -23 .1 -41 1.9 -6 0 -7 1 -1 0 -15 1 -1 0 -10 1 -1 .1 -12 1 -1 0 -5 1.1 -1 .1 -5 -1.1 -1zM809.5 626l1 .5 .5 19 -1.3 36 2 9 -2.1 41 2.2 7 -1.4 27 .9 41 -1.4 13 -1.4 1.7 -2 .3 -7 -2.3 -3 -8.7 .9 -74 -.8 -11 2.1 -54 1 -1 .1 -6 1.1 -1 .6 -11.4 2 7.5 2.3 -3.1 1 -11 1 -1 0 -13 1.1 -1zM804.5 681.5l-1.4 8 .4 4.9 1 -.2 .7 -4.7zM804.5 698l-1 1.2 -.7 8.3 1.7 28 -1 10 1 .7 1.6 -11.7zM803.5 755.3l0 7.5 1.3 -3.3zM804.5 798.2l-1 .4 -1.5 5.9 1.5 6 1.3 -5zM750.5 640.3l.5 45.2 -1.5 19.4 -1.1 -18.4 1 -43zM763.5 641.7l.7 80.8 -1.4 45 1.8 13 -3.1 32.3 -1.3 -2.3 -.7 -6.6 -1 5.7 -1 -.8 -1.5 -14.3 .8 -8 2.3 -5 .7 -5 -2.7 -29 1.6 -30 -.6 -35 1.6 -5 0 -22 1 -1 .1 -8zM854.5 656.1l.8 2.4 .4 43 -1.3 69 2 23 -3.8 24 -3.1 2.3 -2 -2.3 -1.1 -6 1.3 -10 .2 -94 .9 -9 .9 -1 0 -11 1 -1 1.1 -19 1 -1 .1 -5zM775.5 665.2l1.2 77.3 -.9 37 1.2 16 -2.5 6.3 -1.3 -3.3 -1.1 -17 -.2 -67 .8 -19 1 -1 .1 -20 1.1 -1zM791.5 671.3l1.5 16.2 .4 91 -1.6 30 1.4 8 -.6 3 -1.1 .7 -1.6 -4.7 -2.3 -81 1.1 -27 1 -1 0 -9 1.1 -1zM834.5 677.2l1.8 67.3 -1 52 -1.8 14 -1 1.5 -1.6 -10.5 -1.8 -56 1.5 -4 -.9 -3 0 -9 .9 -1 1.1 -20 1 -1 .2 -22 1.2 -1zM724.5 680.2l1 2.3 -1 6.9zM1108.5 680.2l1.1 .3 .2 2 -2.3 7 -.5 -4 1 -1 -1 -1 0 -2zM1087.2 682.5l1.3 -1.2 1.5 .2 1.8 3 -4.3 -.7zM840.5 682.2l1.7 28.3 -.7 22.6 -1 .4 -.7 -26 -1 -4zM1093.5 685.2l2.5 1.3 .8 2 -1.3 .3 -1.4 -1.3zM1081.5 689.4l1.1 8.1 -1.1 2.4 -2 .1 -2.5 -2.5 1.8 -5zM724.5 693.7l1 11.8 -1 8.4 -.9 -6.4zM1103.2 694.5l-1.4 4 -3.1 0 .4 -2 2.4 -2.3zM1038.5 697.9l1 .6 0 10.2 -.1 -4.2 -1.5 -1zM1066.5 701.3l3 3.2 1 3.1 -2.4 -2.1zM875.5 703.8l0 16 -1.1 -10.3 .9 -3 -1 -2zM1109.5 704.3l-.9 5.2 -2.1 .4 -.5 -2.4zM1003.5 705.4l-1 12.1 -.7 -8 1.3 -1zM868.5 706.2l1 .1 2.4 24.2 -1.8 8 -.6 15.5 -1 1.5 -1.3 -38zM1088.5 708l1.3 -.5 1.7 2.1 5 11 9 -6.7 3.5 .6 -.7 2 -3.3 3 -2.8 6 -2.7 -.4 -2 -3.2 -4 -.8 -4.7 -4.6 .9 -3 -1.9 -2zM962.5 708.9l1.1 .6 -.1 6.2 -1.6 -2.2zM1126.5 712.3l-.7 6.2 -3.3 2.3 -1.1 -1.3 .6 -4zM1077.5 714.1l2 .1 1 5.3 -2 .5 -1.6 -1.5zM1018.5 715.5l.9 12 -.9 .6 -1.8 -2.6 .1 -7zM1038.5 715.9l2.6 15.6 -.6 8.2 -2.8 -4.2 0 -6 -1.1 -2 -4.5 -3 .1 -2zM905.5 717.3l1 49.2 -.8 30 -1.2 2.5 -2.3 -33.5 1.7 -38 1.1 -1zM925.5 717.2l1 18.3 -1 6.1zM896.5 718.1l1.1 5.4 .1 31 -.9 10 .7 28 -1 23.6 -2.2 -5.6 .6 -49 -.8 -14zM987.5 717.6l-1 8 -.6 -5.1zM1058.5 718.1l4.9 8.4 .1 4.9 -6.7 -9.9 .1 -2zM1149.5 718l2.2 .5 -1.2 5.7 -2 -.1 -1.6 -1.6 -.1 -2zM888.5 721.9l.6 60.6 -1.6 10.9 -1.3 -9.9 -.4 -43 .9 -1 .2 -8 1.3 -1zM949.5 721.9l1.1 20.6 -1.5 6 0 9 1.6 10 -1.9 11 1 12 -2.3 4.4 -2.5 -13.4 .5 -6 -1.1 -11 1.1 -13 2.4 -5 -.1 -4 1.1 -1 -.1 -4 -1.1 -1 0 -8zM1209.2 723.5l1.3 -1.1 3.8 .1 1.1 4 5.3 3 1 2 -3.2 .3 -7 -3.2zM1301.3 722.5l2.2 -.7 1.1 1.7 -3.1 .2zM917.5 723.1l1.7 40.4 -1.4 25 -1.3 4.7 -1.7 -9.7 .5 -17 -1.1 -11 1.5 -1 0 -3 1 -1 -.9 -5 1 -1zM962.5 723.3l0 5.6 -1.7 -2.4zM1164.5 724.2l3.3 -.7 1.7 1.7 2.3 13.3 -3.7 -1 -.1 -7 -3.9 -4zM1111.5 723.7l1.3 .8 .3 2 -1.5 8 -2.1 .6 -1.7 -1.6 -.1 -3 2.1 -2 -.4 -4zM1137.5 725.2l1 .3 .4 3 -2.4 3.8 -1.7 -2.8zM1150.5 725.7l5.2 4.8 -5.2 -.6zM1289.3 728.5l1.2 -1.2 11 2.9 2.3 2.3 -.1 2 -4.2 1.3 -1.4 -1.3 1.4 -2.5zM1093.9 728.5l1.1 6 -4.8 2 -4.9 14 .7 4 4.4 9 -1.2 8 2.4 7 1.1 8 -4.4 7 -2.8 .7 -1.4 -2.7 5.7 -5 -.4 -5 -5.1 -5 -2.3 -5 .5 -2.4 -1 -1 -3.3 .4 -.5 -4 -3.8 -6 5.1 -9 -2.1 -6 8.8 -7 -.8 -4 4.6 -4.6zM1081.5 756.9l-1.2 2.6 1.8 6 1.4 1.9 3 .5 .2 -3.4 -2 -6zM1010.5 731.1l0 4.5 -1 1 -3 -.4 -1.7 4.3 -.4 34 -.9 3.8 -2 2.2 -1.7 -2 .8 -6 -1 -1 2 -5 .2 -26 2.3 -1 -.1 -4 1.5 -1.3 3 -.2zM1125.5 730.8l3 3 3.1 8.7 -.1 3.3 -1 0 -2 -3.7 -5.8 -3.6 2.1 -3 -1 -2zM1074.5 732l1 0 .3 1.5 -.3 8.2 -2 -.6 -2.7 -3.6 1 -3zM1158.5 732.1l.5 2.4 -1.5 2 -4 .3 -3 3 -2.3 -.3 .8 -3 1.5 -1.4 5 .1 2.7 -1.7zM1047.5 732.9l2 1.6 .5 2 -1.8 10 5.1 5 -7.8 6.9 -1.2 -1.9 2.5 -4 0 -2 -3.6 -5 5 -4 -.4 -4 -1.8 -2zM1251.5 733l5.1 .5 3.9 3.8 -.1 2.2 -2.8 4 3.5 3 .6 2 -6.2 .5 -2.5 -1.5 -1.5 -2.6 -3 -.3 -.9 -1.1 2.4 -2 5.9 -2 -.4 -1.3 -5.5 -2.7zM1027.5 736l1.2 -.5 5.7 9 -2.9 .5 -1.6 -1.5 -3 -6zM1358.4 736.5l1.1 -1 3 1 -3 1.2zM961.5 736.3l1.4 5.2 .5 13 -1.9 12.5 -1 .4 -2 -3.3 -3 -1.6 -.8 -7 .8 -3.7 2.1 -1.3 -1.2 -10 1.1 -2.2 .4 1.2 1.6 .2 .4 -2.2zM959.5 744.2l-1.8 1.3 -.1 2 1.9 1.4zM1104.5 735.6l3.9 4.9 0 7 2.8 10 3.3 3.5 -1 7.1 -1 .2 -4.9 -10.8 -3.1 -1.9 -3 0 -1.8 2.9 0 13 -1.2 2.5 -2 .2 -3.6 -2.7 1.7 -3 -.8 -11 2.7 -3.6 6.1 -3.4 -.9 -3 0 -7zM1179.1 745.5l.8 -1 -.8 -5 1.4 -1.9 2 .2 1.4 5.7 3.6 2.5 4.8 -.5 3.2 -2.3 9.4 -2.7 -1.4 2.4 -4 .1 -5 2.9 -1.3 5.6 -1.7 1.1 -3 -1.6 -.5 -2.5 -2.5 -1.7 -4 .1zM939.5 738.2l1.5 14.3 -1.1 10 1.1 7 -1.2 11 .6 16 -2.9 8.4 -2 -3.8 -3 2.8 -.7 -9.4 .7 -5.7 1 -.1 2 3.4 .8 -1.6 .5 -34 .9 -1 .2 -14zM1063.5 738.4l-1.1 6.1 -2.9 2.6 -3 .8 1.3 -2.4 0 -5 1.7 -1.7zM1443.4 738.5l1.1 -1 1.1 1 -.1 .8zM1284.2 739.5l6.3 -.7 .9 2.7 -4.9 .4 -2.4 -1.4zM973.5 741.3l-1 16.7 -2 -2.3 -1.8 -6.2 3.2 -7zM1161.5 741.1l2 1.1 .8 2.3 -.3 3 -1.5 1.5 -2.2 -.5 .5 -2 -2.5 -3 .1 -1zM1318.3 743.5l10 -2 2.2 2.4 6 2.2 1.9 3.4 -2.9 1.2 -6 -1 -1.9 -1.2 1.4 -1 -1.5 -1.7 -9 -1.2zM528.5 742.8l1 4.5 .1 69.2 -1.1 3.3 -1.4 -2.3zM925.5 744l.8 .5 .8 27 -1 24 1.4 8 -1.4 8 -1.6 1.7 -1.2 -2.7 .8 -12 -1 -8 1 -6 -1.3 -8 .2 -28zM1072.5 744.3l1 2.2 -.5 3 -5 7 -.1 11 -1.4 .2 -4.3 -6.2 4.5 -9 -.6 -6 2.4 -1.7zM1117.5 744.8l1.9 1.7 -1.9 .1zM1140.5 745.1l11 4.8 1.6 2.6 -4 9 -6.1 9 -1.5 8 3.3 2 -1.3 3.6 -1 -.2 -2 -4.3 -5.1 -.1 -1.1 -5 -5.3 -5 1.7 -2 .1 -4 1.7 -3 2 1.2 1 9.9 5 -3.6 2 -5.1 3.3 -1.4 -.2 -3 2.3 -3 -3.8 -2 -.6 -5.2 -3 .7 -4 3.7 -1.2 -1.2 .7 -2zM1019.5 746.3l0 8.2 -1.6 -1 -.1 -6zM1036.5 746.4l2.2 3.1 -.3 8 3.1 12 -4 7.5 -1 -.8 -.6 -4.7 1.7 -3 -3.1 -4.2 -3 -1.2 -2 .9 -6 -3.5 -3 .7 -.5 -1.7 1.5 -2.3 5 -1.5 3 -4.6 2 9.6 1 .8 5.6 -6 -3.3 -3 -.1 -3zM1292.2 748.5l2.4 -1 3.8 4 8.2 4 -.4 2 -9.7 0 2.5 -2 -7.5 -3.9 1.6 -1.1zM985.5 747.9l2.2 6.6 -.7 15 2.6 10 -2.7 6 1.3 6 -.1 17 -2.6 4.9 -3.3 -1.9 .7 -11 -3.1 -6 -.2 -4 -5.6 -8 3.7 -4 2 -4 -1.7 -7 2.5 -3.4 3 .6 1.2 -2.2 -.9 -4 1.9 -4 -1.7 -5zM982.5 776.9l-1.4 .6 -.9 3 1.3 4.6 2 2 1.7 -1.6 -.4 -5 .9 -2zM1222 748.5l-.1 2 -6.4 3.5 -1.6 -1.5 5.6 -4.4zM875.5 749.5l1.1 4 -1.1 2.8zM1124.5 749.9l2.8 .6 -.8 2.8 -2 -1zM1367.9 751.5l1.6 -1.5 4.5 .5 3 4 -.1 2 -4.4 .5 -2 -.9 -2.7 -2.6zM1716.5 749.6l1.8 1.9 -.3 3 -2.7 -1zM1260.3 751.5l-1.8 4.3 -5 .9 -2.4 -1.2 .9 -2 2.5 -1.5zM1205.5 751.8l1.8 1.7 -1.8 2.3 -.8 -.3 -.2 -3zM1409 753.5l2.5 -1.4 3.1 .4 .4 3 -3.5 1.5zM1128.5 755.3l1.5 2.2 -3.5 2.2 .8 -4.2zM1170.5 760.5l6 -2.3 2 -3.1 8 1.4 .9 3 -2.2 5 5.3 1 3 -4 2 -.7 1.9 5.7 -3 4 5.1 3 1.3 4 -2.3 .8 -9 -5.7 -5 -.9 -1.8 1.8 -2.2 6.7 -3 .9 -1.3 -2.6 1.6 -1 -2.4 -2 .3 -3 2.8 -3.2 5 .2 1.5 -2 -.2 -2 -1.3 -.6 -5 1.3 -1.3 -.7 .6 -1 -1.3 -1.3zM978.5 755.6l1.5 2.9 -.5 4.3 -4.6 -4.3zM1216.3 763.5l1.5 -2 .2 -5 7.5 .3 -.3 2.7 -3.7 3.7 -3 1.1zM1442.6 756.5l6.9 -.6 3 1 .9 1.6 -6.9 .2zM1492.8 756.5l-2.4 3 -2.9 1.3 -.3 -1.3 2.3 -2.3zM1532.5 758.5l2 -1.1 2.1 1.1 -2.1 1.1zM783.5 758.1l1 3.4 -1 14.6 -1 -8.6zM1321.9 758.5l3.6 -.6 2.9 2.6 -3.9 1zM994.5 758.6l1.2 2.9 -.2 5.7 -2.8 -3.7 .2 -3zM1615.8 759.5l-1.3 2.2 -2.9 -.2 2.9 -2.2zM1053.5 760.4l2.3 3.1 1.5 8 7.2 1.8 1.4 2.2 -.8 6 1 6 -2.8 4 -1.6 6 1.6 7 -2.6 8 2.5 6 -1.7 2.6 -2 -.1 -1.7 -1.5 1.7 -6 -2 -2.8 -2 0 -4 5 -2.5 -2.2 .8 -4 3.7 -6.9 3 1 1 -2 .2 -3.1 -4.3 -5 .3 -4 2.4 -5 3.6 -2 -3.4 -6 1.4 -1 -.2 -1.3 -6 -2.2 -3.4 -6.5 .4 -2zM1244.7 761.5l2.8 -1.2 2.2 2.2zM1302.2 761.5l2.3 -1.4 4.8 .4 5.2 4.7 6.4 2.3 .6 2 -3 -.7 -4 -2.8 -5 -.4 0 -1.6zM1460.3 760.5l4.2 0 5.9 3 -3.9 .2zM1367.4 763.5l5.1 -2.4 13.2 2.4 -11.2 5.9 -3 -.9 4.5 -2 -1.5 -1.5zM869.5 762.1l1.9 8.4 .3 17 -1.2 9 1.3 12 -1 6 -2.3 3.4 -1.5 -2.4 -.5 -7 1.7 -15 -.6 -21 .9 -9.3zM971.5 763l1 .7 .3 3.8 -2.3 4.7 -1.6 -2.7zM1164.3 766.5l-1.4 10 -6.4 -1.4 -2 4.6 -2 .7 -1.1 -3.9 2.4 -4 .7 -8.6 2 -.6 3 3.4zM1435.2 764.5l6.3 -1.4 3.2 .4 3.5 5 -1.7 1.3 -11 -4zM750.5 764.3l.6 15.2 -.6 3.2 -1 .2 -1 -8.7 .9 -8.7zM1016.5 764.4l-5 10 -1 -.5 -1.4 -6.4 2.4 -2.7zM1248.1 766.5l3.4 -2.7 5 2.5 12 .8 1.2 2.4 -2.4 3 -5.8 .7 -1.5 -.7 1.8 -2 -2.3 -1.4 -9 -1.1zM1737.1 765.5l1 -1 3.9 0 4.6 3 -2.1 1zM1295.5 765.5l-.3 2 -4.1 0 .4 -1.1zM1481.7 765.5l3.8 .7 1.2 2.3 -2.2 1.7 -3 -.4zM1027.5 766.1l5 11.4 -2 13 4 3.3 .1 -6.3 1.9 -2.4 3 1.8 1.6 3.6 -1.6 3.8 -4.6 .2 -1.4 3.9 -6 -3.4 .2 -2.5 -3.8 -3 .4 -7 3.3 -5 -3.8 -8 .7 -2.2zM1536.8 774.5l-7.3 -.4 -4.8 -3.6 1.8 -1.5 7 -1.8 1.5 1.3zM1303.5 771.5l-1 2.9 -4 2.1 -6 .1 -9 2 -2.7 -1.1 2.7 -3.8 3 -1 6 1.5 5 -1.4 1.3 -1.3 -3.5 -2 1.2 -1.2 4.7 1.2zM1406 768.5l-1.3 2 -2.3 0 .1 -1.1zM1792.2 769.5l2.3 -1.4 5 .4 4 2.6 1.1 2.4 -2.1 1.6 -4 .1 0 -3.2 -5 -1.1zM1630.8 769.5l2.7 -.4 .7 1.4 -2.7 .1zM1462.3 772.5l0 2 -5.8 5.6 -5 .5 -2.2 -1.1 3.5 -3 -1 -2 2.7 -2.7 4 -1.6zM1666.2 770.5l-2.9 8 -1.8 1.2 -2 -.2 .6 -3 -3.3 -2zM962.5 771.4l1.8 3.1 -1.2 12 2 12 -2.6 3.8 -2 -1.5 -1.8 -5.3 -.5 -8 -2.3 -6 .6 -3.5zM1123.5 770.7l.7 8.8 -7.3 11 -.4 3 1.1 3 -2.4 4 1.3 4.8 5 3.2 1.4 2 -1.5 8 -1.9 2.4 -1.8 -1.4 -2.2 -9 -4 -.3 -3.1 -2.7 .3 -10 -1.2 -2.9 -2 -.1 -2.6 2 -3.4 7.9 -3 -.9 -3.3 -5 4.6 -4 3.2 -5 -.5 -2.2 -3.1 -.8 .4 -1 -2.2 -4 .9 -1.4 4 -1 2 6 8.4 -5.6 -1.2 8 1.8 .1 5 -5.1 -1.5 -6 .5 -3.1 4 -.5zM1248.3 773.5l2.2 -2.5 4.1 .5 3.1 6 -7.2 -1zM1369.5 771.6l.7 2.9 -7.1 5 -.1 4 -2.5 7.1 -16.3 6.9 -.6 2 2.8 5 -1.1 2 -4.8 1.6 -3.5 -.6 -1.5 -8.4 -2.9 -2.6 -.1 -3.3 2 -.6 13 1.8 3.2 -4.9 -1.4 -2 4.2 -1.4 2.2 -2.6 -2 -2 -.1 -3 1.9 -3.2 4.3 -.8 -1.8 -2 2.5 -1.5 7 -.3zM1017.5 771.8l1.4 .7 .4 3 -4.5 11 .5 5 3.3 6 -3.4 7 1.9 8 -5 4 -1.6 2.8 -1.3 -1.8 .6 -5 -3.5 -6 1.2 .2 .1 -3.2 -7.8 -6 -.6 -11 1.3 -2.5 2 1.6 .8 10.9 1.2 2.8 2 .5 1.7 -2.3 .2 -5 1.2 -2 -1.4 -9 3.3 -5.5zM1415.6 774.5l3.9 -2.2 10 2 4.9 2.2 5.6 6 -7.5 1.5 -4.4 -3.5 1 -1 -.6 -1.5 -2 -.1 -3 -2.1zM1047.5 774.3l3.1 5.2 -3.1 4.8 -1.7 -6.8 .6 -3zM1225.5 773.7l5 1.8 6.9 9 7.4 4 .9 2 -.8 3 -3.8 4 5.1 3 -1.7 1.3 -10.3 2.7 4.3 7 -2.2 2 -6.8 2.8 -1.3 -.8 -1.8 -7 -6.9 -4 1 -1.3 6.4 -1.7 -.7 -6 7.3 .2 2.2 -4.2 -2.2 -.7 -2 -2.8 -4.3 -1.5 .3 -1.4 -5 -1.4 -4 1 -1 -2.8 -2.6 -.4 1.1 -3zM1330.1 778.5l-2.6 1.3 -5 .5 -2.8 -1.8 .1 -2 1.7 -1.3 5 -.9 3.6 .2zM1394.7 776.5l.5 2 -2.1 6 .1 3 -9.7 7.5 -3 1.2 -1.4 -6.7 .4 -1.1 4.3 -.9 -2 -2 5.7 -7.6zM1638.3 776.5l-1.4 4 4.3 5 -1.7 9 2.1 5 -.2 3 -3.1 5 -3.8 3.2 -14 -2.3 -2.6 -2.9 1.4 -2 7.2 -.2 7.8 -7.8 -3.9 -4 3.4 -2 -.9 -2 2.1 -2 -.7 -3 2.1 -1 -3.9 -1.7 -6 -.3 5 -2.3zM1788.7 776.5l1.8 -.3 1.7 1.3zM993.5 777l2.1 2.5 .7 3 -.6 3 -2.2 1.5 -1.8 -6.5zM1073.5 777.6l2 -.5 2.7 2.4 2.7 5 -.4 2.6 -7.6 -1.6 .8 -1 -2.1 -3zM1259.5 780l4 -1.5 4 .4 2 -2.2 5.6 1.8 .2 3 4.2 4.9 4.5 3.1 .4 2 -2.9 1.7 -2 -.7 1 -1.5 -4 -.2 -1.4 1.7 .5 5 -2.1 2.2 -3 .1 -6 -2 -1.7 -1.3 -.3 -2 8 -2.7 1.2 -1.3 -4.1 -6 -6.1 -.5 -2.5 -2.5zM1580.5 777.6l3 .1 2.5 1.8 0 2 -2.5 2.4 -5 -.2 -1 -1.2 3.5 -2 -.5 -1.8 -1.2 -.2zM1743.1 779.5l2.2 -1 4.2 .3 6.2 3.7 5.6 8 0 3 -4.8 3.3 -12 3.3 -.2 -1.6 9.2 -4.6 2.4 -3.4 -8.6 -3 -.7 -1 4.2 -2 -7.8 -3zM1188.5 778.7l.5 3.8 -3.5 1.4 -.3 -2.4zM1301 783.5l3.8 -2 -2.3 -1 4 -1.4 7 1.4 2.2 3 -2.2 2.8 -6 .6 -4 -.8zM1494.5 779.5l4 .9 .1 2.1 -1.1 .5zM1684.5 780.5l-1 1.1 -2.5 -1.1 2.5 -1.1zM1720.3 779.5l3.2 -.8 2 .8 .8 2 -4.8 -.7zM1165.5 780.6l8.6 2.9 2.4 3 6.1 0 2.9 5 -1 5.4 -4 -1.7 -4.5 .3 -.9 -2 .8 -4 -1.4 -1.4 -5 .4 -2 4.2 -2.3 -3.2zM1414.5 781l0 2.8 -2 3.2 -5 -1.5 2 -2.4zM1475.5 782.1l2 -.6 6 2.4 3 5.6 5.7 3 2.1 3 -5.8 2.7 -4 -1.8 -1.7 -1.9 1 -1 -4.4 -4 2.5 -2 0 -2 -1.4 -1.5zM1332.5 785.5l1 -1.6 2.6 .6 -1.6 1.6zM1456.4 784.5l4.1 -.7 2.7 2.7 -4.7 .4 -2.3 -1.4zM1512.2 785.5l2.3 -1.4 6 .4 3.2 3 .8 3 -2.7 2 -4.3 .3 -2.3 -1.3 -.9 -2 2.2 .5 1.3 -1.5 -4.3 -.6zM970.5 785.3l1.1 2.2 -1.1 5 -2.5 -4zM1686.6 786.5l.9 -1.1 4 .1 -.2 1zM1143.5 785.7l6 5.4 1.4 4.4 -1.3 2 -3.8 1 -3.3 3.9 -1.7 -3.9 1.9 -4 -1.8 -6zM1219.6 786.5l-.1 2 -1.7 2 -4.3 1.5 -4 -.1 -4 6.6 -10.9 6 1.9 2.5 5 1.5 1.4 5 -1.4 2.6 -3 .2 -4 -3.4 -9.4 -1.4 -.4 -5 9 -9 7.8 -5.4 7 -1.2 2 -2.7zM1800.4 786.5l4.1 -.2 .7 1.2 -3.7 .2zM696.5 786.9l0 6.5 -1 -.2 -.1 -2.7zM1603.1 788.5l.5 -1 4.9 -.7 1.2 .7 0 1 -1.9 1zM1707.5 788.5l5 -1.5 5 .5 -2.3 3 -3.7 1 -3 -.4 .6 -1.6zM1315.4 789.5l1.1 -1.7 2 0 5.6 2.7 -1.8 2 -3.8 1 -2 -.8zM1413 789.5l.5 -1.5 2 -.4 5.1 1.9 -2.1 2zM1575.5 788.6l1.5 .9 -1 3 -6.6 3 2.6 5 -.2 4 -1.2 3 -3.1 1.1 -1 -2.1 .5 -4 -5.5 -4 -2.6 -4 .5 -1 5.1 -.3 7 -2.2 .7 -1.5 -2.7 -1.5zM1465.4 789.5l-.9 3 5.9 5 -3.9 3.7 -6.5 -2.7 2.8 -2 -1.5 -2 .2 -4zM1801.3 789.5l3.5 0 -2.3 1.1zM1441.7 792.5l1.8 -1.1 5 1.1 .7 2 -2.7 2.2 -3 .7 -1.4 -.9 1.4 -.4 1.4 -2.6zM1678.9 796.5l.6 -4.5 9.8 -.5 1.4 2 -.7 2 -5.5 3zM1731.2 793.5l1.3 -2 3.6 0 .5 1 -1.1 1.1zM782.5 792l2.1 12.5 -1.1 5.6 -1 .3 -1.2 -6.9zM1526 792.5l2.5 1.1 2.1 6.9 5.9 2.8 -.4 5.2 -2.6 1.9 -5 .6 .8 -8.5 -.8 -.9 -6 .2 -2.1 -2.3 4.1 -5.6 1.8 -.4zM1615.8 792.5l.5 2 -2.8 3.3 -3 .1 -1.9 -2.4 1.9 -2.5zM1402.4 795.5l1.1 -2.4 3 .4 -2 2zM1663.2 793.5l.9 4 -1.6 2.7 -4 1.1 -3.3 -1.8 -.7 -3 2 -1.9 4 -1.4zM887.5 793.6l1.5 5.9 -.5 3.8 -1.2 -2.8zM1303 797.5l1.5 -3.4 6.4 2.4 -.4 1 -5 1.7 -2 -.4zM970.5 794.8l1 .2 1.7 9.5 -1.7 .4 -2 -.6 -1.8 -4.8zM1044.5 795.3l2.5 1.2 1 3 -2.1 7 -2.4 1.7 -1.8 -1.7 1 -7 -1.1 -1 .9 -2.5zM1075.6 795.5l1.9 .1 0 2.5 -1 .4zM1421.5 795.6l4 0 5.4 2.9 -2.2 5 .2 4 -2.4 .7 -2.2 -.7 -3.5 -7 2 -2 -1.8 -1zM948.5 797.2l6 5.3 -4.4 10 3.7 6 -3.3 1.8 -2.6 -1.8 -2 -6 1.2 -13zM1066.5 797.8l2 -.3 2.1 3 -2.1 .7 -2 -.7zM1156.5 797.7l2 .1 4 4.1 4 1.7 2.5 4.9 -.5 3 -4 .5 -5 -4.4 -3 .3 -1 -.9 -.1 -7.5zM1378.9 797.5l2.6 4 -.1 2 -9.9 5.6 -3 0 -2.1 -1.6 -.6 -3 3.7 -.7 .3 -1.3 -3.3 -.6 -1 -2.4zM695.5 798.3l1.2 4.2 -1.2 5.5zM911.5 798.1l1 .1 .3 3.3 -.3 2.1 -1 .3zM1091.5 798l.8 .5 -3.9 17 1.1 1.7 4.4 2.3 -3 2 -4.4 .1 -3.6 -8.1 3.1 -4 1.2 -7zM1280.4 801.5l2.1 -2.5 4 -1.2 8 2.1 1.2 1.6 -2.6 3 -4.6 1.5 -7 -2.1zM1507.3 807.5l-4.8 3.3 -6 .1 -2 -1.5 -.7 -2.9 -2.3 -2.8 -4.5 -2.2 1.5 -1.1 12 2.7 4.6 -1.6 -3.1 -1 .5 -2.2 2 0 2.5 2.2zM1024.5 799.3l3 4.2 2.5 8 .2 4 -1.7 4.7 -7 3.2 -2.9 -1.9 .3 -6 4.9 -4 .4 -3 -2.2 -5 .5 -3zM1121 799.5l.5 -.8 3 .6 1.2 2.2 -2.3 0zM1590.1 800.5l-.3 2 -2.3 1.5 -4 .6 -2.1 -1.1 1.5 -2 3.6 -1.9zM1717 799.5l4.5 -.8 5 1.2 7.4 4.6 .4 2 -3.7 3 -5.1 .6 -1 -.6 1.5 -1 -6.3 -4 2.1 -1 -4.3 -2.7zM840.5 799.7l0 8.1 -1.1 -4.3zM1313 803.5l3.5 -3.1 3 .7 .9 1.4 -2.9 1.6zM1437.8 801.5l1.7 -1.1 2 .4 2.2 2.7 -4.2 2.3 -1.6 -1.3 .9 -1zM1807.5 801.5l-.4 4 -4.4 7 .6 3 -.9 1 -2.9 .4 -4 -2.9 -7 -.1 0 -1.6 4.3 -1.8 -.9 -1 .6 -1.6 5 -1.1 1.3 -1.3 -1 -3 1.7 -1.7 4 -.7zM1072.5 802l4 -1.1 3 2.9 1.1 3.7 -1.1 4.6 -7.1 -3.6zM1135.5 801.4l7 2.4 1.5 5.7 -1.5 2.9 -3 .2 -5.5 -6.1 -.8 -2zM1264 804.5l4.5 -.2 14 5.5 3.7 2.7 -.2 2 -2.5 2.6 -2 .4 -3 -1 -5 -5.2 -7 1 -1.5 -1.8 .7 -2zM976.5 805.1l4.4 6.4 0 2 -3.4 5 -4 2.5 -2 .1 -1.3 -1.6 -1.7 -8.5 1 -1.2 3 2.2 3 -.3 .9 -2.2 -2.2 -4zM1299.6 806.5l2.9 -1.7 6.2 .7 -.6 6 7.2 4 1.5 3 -.7 2 -3.6 1.7 -3 -.8 -10.1 -10.9 -.6 -2zM1472 806.5l1.5 -1.6 6 .5 1.7 4.1 -1.7 1.4 -2 -.2zM1684 808.5l3.8 -3 8 0 -5.3 3.2zM937.5 806.4l1 .1 1.9 5 -.9 4.4 -2.1 -4.4zM1036.5 806.4l2 3.1 -1 1.2 -2.3 -1.2zM1323.7 810.5l2.8 -3.1 4.7 1.1 -3.7 2.3zM1448.9 811.5l1.2 -3 2.4 -1.9 5.2 .9 1.9 2 -2.1 1.8 -6 1.7 -2 -.2zM1772.5 806.8l-1.7 8.7 1 3 -2.3 1.1 -2 -2.3 -4.6 -1.8 -.6 -2 2.5 -2 -1.9 -2 4.6 -2.4zM1412.1 809.5l3.4 -.7 6 1.3 4 4.6 3 .2 5 -2.1 2.2 .7 1.5 2 -3 4 -6.7 2.3 -7.9 -6.3 -5.1 -2.3zM1659 811.5l5.5 -1 5 1.6 1.9 1.4 2.1 5 -4 1.7 -7 -2.7 -2 -2zM1353.4 811.5l4.9 1 3.1 3 -1.9 1 -3 -.4 -3 -2.6zM1376.5 811.5l2 -.9 2.5 .9 2.2 2 .1 2 -1.8 1.1 -4 -.9zM1595.2 812.5l1.3 -1.1 3 .3 4 2.8 .3 2 -3.3 2.3 -3 .2zM1737.8 812.5l1.7 -1.4 2.3 1.4 -2.3 1.3zM1101.5 812.4l-.5 4.1 -4.5 1.9 -.7 -.9 1.8 -4 1.9 -1.6zM1718.9 814.5l2.6 -2.2 3 2.2 -1 1.3 -3 .7zM1466.4 813.5l5 1 2.2 4 -6.1 -1.8zM1131.8 814.5l2.7 .1 3.3 1.9 .7 2 -1 2.4 -2 .6 -2 -1zM1171.3 814.5l4.2 .3 1.9 1.7 -.3 1 -5.6 1.7zM1334.8 815.5l2.7 -.7 2.6 2.7 -.8 1 -2.8 -.3 -2 -1.7zM1248.4 817.5l1.1 -1.2 4 -.1 4 1.2 .4 1.1 -2.4 1.7 -4 .4 -2.5 -1.1zM1489.8 817.5l1.7 -1.2 2 1.2 -2 1.5zM1566.9 816.5l1.6 -.7 1 1.7 -2 1zM1153.4 818.5l2.1 -1.6 2 1.6 -2 1.9zM1076.5 817.6l1.1 .9 -1.1 1.9zM478.5 850.6l1.6 4.9 .9 12 .6 59 -6.6 0 .7 -57 1 -13zM444.5 855.5l2.4 4 1.6 13.1 .7 53.9 -12.2 0 .8 -41 3.4 -23 1.3 -4.6zM532.5 856.1l1.8 20.4 .3 50 -4.2 0 .2 -49zM498.5 869.8l1.1 16.7 .1 40 -4.2 0 .2 -37 1.8 -19.6zM462.5 878.9l1.1 15.6 0 32 -2.8 0 .7 -45.4z"/>
</g>
<path d="M518.5 290V927M582.5 290V927M631.5 290V927M672.5 290V927M706.5 290V927M736.5 290V927M762.5 290V927M785.5 290V927M939.5 290V927M1029.5 290V927M1093.5 290V927M1143.5 290V927M1183.5 290V927M1217.5 290V927M1247.5 290V927M1273.5 290V927M1297.5 290V927M1451.5 290V927M1541.5 290V927M1604.5 290V927M1654.5 290V927M1694.5 290V927M1729.5 290V927M1758.5 290V927M1785.5 290V927M428 874.5H1808M428 821.5H1808M428 768.5H1808M428 714.5H1808M428 661.5H1808M428 608.5H1808M428 555.5H1808M428 502.5H1808M428 449.5H1808M428 396.5H1808M428 343.5H1808" stroke="#4e4c48" stroke-width="1.1" fill="none"/>
<path d="M428 531.500H1808" stroke="#d8d4c4" stroke-width="2"/>
<polyline points="428,782.5 445,778 458,773.8 470,763 480,752 488,741 491,725 493,710 498,685 503,670 506.8,667 508,675 509,735 510,821 525.5,821 535,816 545.5,810 578,808.8 603,806 623,802 628,803.8 640.5,813.8 650.5,817 660.5,815 671.8,812 680.5,814.5 695.5,819.5 715.5,813.8 735.5,817.5 778,817.5 803,815 825.5,818.8 853,814.5 878,814.5 903,811.5 910.5,811 912,786 938,784.5 939,810 941.8,815 948,814.5 949,803.8 963,801 965.5,783 971,783.8 973,817.5 988,819 1038,817.5 1050.5,816 1075,818.8 1263,819.5 1807,820" fill="none" stroke="#000" stroke-width="2.600" stroke-dasharray="9 5" stroke-linejoin="round"/>
</g>
<g font-size="14.500" fill="#222">
<text x="419.500" y="348.1" text-anchor="end">900m</text>
<text x="419.500" y="401.2" text-anchor="end">800m</text>
<text x="419.500" y="454.3" text-anchor="end">700m</text>
<text x="419.500" y="507.4" text-anchor="end">600m</text>
<text x="419.500" y="560.5" text-anchor="end">500m</text>
<text x="419.500" y="613.6" text-anchor="end">400m</text>
<text x="419.500" y="666.7" text-anchor="end">300m</text>
<text x="419.500" y="719.8" text-anchor="end">200m</text>
<text x="419.500" y="772.9" text-anchor="end">100m</text>
<text x="419.500" y="826" text-anchor="end">0</text>
<text x="419.500" y="879.1" text-anchor="end">-100m</text>
<text x="419.500" y="932.2" text-anchor="end">-200m</text>
<text x="415" y="281.500" text-anchor="middle">s</text>
<text x="517.5" y="949" text-anchor="middle">30</text>
<text x="581.3" y="949" text-anchor="middle">40</text>
<text x="630.9" y="949" text-anchor="middle">50</text>
<text x="671.4" y="949" text-anchor="middle">60</text>
<text x="705.6" y="949" text-anchor="middle">70</text>
<text x="735.2" y="949" text-anchor="middle">80</text>
<text x="784.8" y="949" text-anchor="middle">100</text>
<text x="938.7" y="949" text-anchor="middle">200</text>
<text x="1028.8" y="949" text-anchor="middle">300</text>
<text x="1092.6" y="949" text-anchor="middle">400</text>
<text x="1142.2" y="949" text-anchor="middle">500</text>
<text x="1182.7" y="949" text-anchor="middle">600</text>
<text x="1246.5" y="949" text-anchor="middle">800</text>
<text x="1296.1" y="949" text-anchor="middle">1k</text>
<text x="1450" y="949" text-anchor="middle">2k</text>
<text x="1540.1" y="949" text-anchor="middle">3k</text>
<text x="1603.9" y="949" text-anchor="middle">4k</text>
<text x="1653.5" y="949" text-anchor="middle">5k</text>
<text x="1694" y="949" text-anchor="middle">6k</text>
<text x="1728.2" y="949" text-anchor="middle">7k</text>
<text x="1826" y="949" text-anchor="end">10,00kHz</text>
</g>
<rect x="383.500" y="522.500" width="41" height="18" fill="#fff" stroke="#2020e0" stroke-width="1.200"/><text x="404" y="537" font-size="14.500" fill="#2020e0" text-anchor="middle">545m</text>
<rect x="409.500" y="934.500" width="32.500" height="18" fill="#fff" stroke="#2020e0" stroke-width="1.200"/><text x="425.700" y="949" font-size="14.500" fill="#2020e0" text-anchor="middle">20,0</text>
<rect x="1815.500" y="418" width="56" height="383" fill="url(#cbar)" stroke="#222" stroke-width="1.300"/>
<text x="1873" y="444" font-size="14.500" fill="#222">95</text>
<text x="1873" y="482.3" font-size="14.500" fill="#222">91</text>
<text x="1873" y="520.6" font-size="14.500" fill="#222">87</text>
<text x="1873" y="558.9" font-size="14.500" fill="#222">83</text>
<text x="1873" y="597.2" font-size="14.500" fill="#222">79</text>
<text x="1873" y="635.5" font-size="14.500" fill="#222">75</text>
<text x="1873" y="673.8" font-size="14.500" fill="#222">71</text>
<text x="1873" y="712.1" font-size="14.500" fill="#222">67</text>
<text x="1873" y="750.4" font-size="14.500" fill="#222">63</text>
<text x="1873" y="788.8" font-size="14.500" fill="#222">59</text>
<path d="M1816 438.5H1871M1816 476.5H1871M1816 514.5H1871M1816 552.5H1871M1816 591.5H1871M1816 629.5H1871M1816 667.5H1871M1816 706.5H1871M1816 744.5H1871M1816 782.5H1871" stroke="#111" stroke-width="1.300"/>
<text x="1841" y="414" font-size="14.500" fill="#222" text-anchor="middle">97</text><text x="1841" y="817" font-size="14.500" fill="#222" text-anchor="middle">57</text>
</svg>
<svg class="abs" style="left:360px;top:185px" width="1560" height="100" viewBox="360 185 1560 100" font-family="Liberation Sans, sans-serif">
<defs>
<linearGradient id="tb" x1="0" y1="0" x2="0" y2="1"><stop offset="0" stop-color="#fafafa"/><stop offset="0.45" stop-color="#ebebeb"/><stop offset="0.55" stop-color="#dedede"/><stop offset="1" stop-color="#c9c9c9"/></linearGradient>
<linearGradient id="tbs" x1="0" y1="0" x2="0" y2="1"><stop offset="0" stop-color="#9a9a9a"/><stop offset="0.25" stop-color="#c6c6c6"/><stop offset="1" stop-color="#e8e8e8"/></linearGradient>
<linearGradient id="cam" x1="0" y1="0" x2="1" y2="0"><stop offset="0" stop-color="#dcdcdc"/><stop offset="0.25" stop-color="#f8f8f8"/><stop offset="0.6" stop-color="#e2e2e2"/><stop offset="1" stop-color="#cfcfcf"/></linearGradient>
<radialGradient id="lens" cx="0.5" cy="0.5" r="0.5"><stop offset="0" stop-color="#223"/><stop offset="0.3" stop-color="#556"/><stop offset="0.55" stop-color="#99a"/><stop offset="0.8" stop-color="#777"/><stop offset="1" stop-color="#aaa"/></radialGradient>
<radialGradient id="gear" cx="0.5" cy="0.4" r="0.6"><stop offset="0" stop-color="#e2e2e2"/><stop offset="1" stop-color="#9c9c9c"/></radialGradient>
</defs>
<!-- capture -->
<rect x="377" y="212" width="40" height="24.500" rx="1.500" fill="url(#cam)" stroke="#b4b4b4" stroke-width="1"/>
<rect x="383" y="209" width="6" height="3" fill="#ccc"/>
<circle cx="403.500" cy="223.500" r="8.200" fill="url(#lens)" stroke="#999" stroke-width="0.800"/>
<circle cx="403.500" cy="223.500" r="2.300" fill="#112"/>
<text x="396.500" y="258" font-size="14.500" fill="#1c1c1c" text-anchor="middle">Capture</text>
<!-- tab bar -->
<rect x="577" y="221" width="817.500" height="29.500" rx="5" fill="url(#tb)" stroke="#7a7a7a" stroke-width="1.400"/>
<rect x="1238" y="221.700" width="99" height="28.100" fill="url(#tbs)"/>
<path d="M677.500 221.500v29M739 221.500v29M816 221.500v29M880.500 221.500v29M960.500 221.500v29M997.500 221.500v29M1047 221.500v29M1103.500 221.500v29M1161.500 221.500v29M1237.500 221.500v29M1337.500 221.500v29" stroke="#8a8a8a" stroke-width="1.200"/>
<g font-size="14.300" fill="#1c1c1c" text-anchor="middle"><text x="627" y="241.500">SPL &amp; Phase</text><text x="706.500" y="241.500">All SPL</text><text x="776" y="241.500">Distortion</text><text x="847" y="241.500">Impulse</text><text x="919.500" y="241.500">Filtered IR</text><text x="977.500" y="241.500">GD</text><text x="1020.500" y="241.500">RT60</text><text x="1073.500" y="241.500">Clarity</text><text x="1131" y="241.500">Decay</text><text x="1198.500" y="241.500" letter-spacing="-0.2">Waterfall</text><text x="1286" y="241.500">Spectrogram</text><text x="1364.500" y="241.500">Scope</text></g>
<!-- scrollbars icon -->
<g><rect x="1642.500" y="207.500" width="38" height="21" fill="#fff" stroke="#555" stroke-width="1.400"/><rect x="1632.500" y="215" width="6" height="6" fill="#999" stroke="#666" stroke-width="1"/><path d="M1632.500 211.500l3-3.500 3 3.500zM1632.500 224.500l3 3.500 3-3.500z" fill="#555"/><rect x="1654.500" y="231.500" width="12" height="5" fill="#999" stroke="#666" stroke-width="1"/><path d="M1645.500 231l-3.500 3 3.500 3zM1675.500 231l3.500 3-3.500 3z" fill="#555"/></g>
<text x="1656.500" y="260.500" font-size="14.700" fill="#1c1c1c" text-anchor="middle">Scrollbars</text>
<!-- freq axis -->
<g><rect x="1716.500" y="207.500" width="47.500" height="30.500" fill="#fff" stroke="#555" stroke-width="1.400"/><path d="M1734.500 208v30M1745.500 208v30M1753.500 208v30M1759 208v30" stroke="#999" stroke-width="0.900"/></g>
<text x="1739.500" y="260.500" font-size="14.700" fill="#1c1c1c" text-anchor="middle">Freq. Axis</text>
<!-- limits -->
<g><rect x="1790.500" y="207.500" width="47.500" height="30.500" fill="#fff" stroke="#555" stroke-width="1.400"/><path d="M1794 222.500h41M1814 210v26" stroke="#111" stroke-width="1.700"/><path d="M1798.500 218l-5 4.500 5 4.500M1830.500 218l5 4.500-5 4.500M1809.500 214l4.500-5 4.500 5M1809.500 232l4.500 5 4.500-5" stroke="#111" stroke-width="1.700" fill="none"/></g>
<text x="1814" y="260.500" font-size="14.700" fill="#1c1c1c" text-anchor="middle">Limits</text>
<!-- controls gear -->
<g><circle cx="1881.500" cy="223" r="11.500" fill="url(#gear)" stroke="#9a9a9a" stroke-width="0.800"/><circle cx="1881.500" cy="223" r="13" fill="none" stroke="#b0b0b0" stroke-width="4.500" stroke-dasharray="4.600 3.570"/><circle cx="1881.500" cy="223" r="6" fill="#cfcfcf" stroke="#999" stroke-width="1"/><circle cx="1881.500" cy="223" r="3.200" fill="#f4f4f4" stroke="#aaa" stroke-width="0.800"/></g>
<text x="1881" y="260.500" font-size="14.700" fill="#1c1c1c" text-anchor="middle">Controls</text>
</svg>
<!-- legend -->
<svg class="abs" style="left:700px;top:950px" width="840" height="46" viewBox="700 950 840 46" font-family="Liberation Sans, sans-serif">
<rect x="715.500" y="958.500" width="802" height="31" fill="#b0b0b0"/>
<rect x="717.500" y="960" width="798.500" height="28" fill="#fff" stroke="#8a8a8a" stroke-width="1"/>
<g><rect x="723.500" y="965" width="16.500" height="17.500" rx="2" fill="#f2f2f2" stroke="#666" stroke-width="1.200"/><path d="M727 973l4 6 6.500-13.500" stroke="#111" stroke-width="2.200" fill="none"/></g>
<text x="748" y="980" font-size="14.500" fill="#f08010" letter-spacing="-0.300">IR 50 [FDW]</text>
<path d="M935 975h44" stroke="#f08010" stroke-width="2.200"/>
<text x="1014" y="980" font-size="14.500" fill="#f08010">56,2 dB</text>
<g><rect x="1115.500" y="965" width="16.500" height="17.500" rx="2" fill="#f2f2f2" stroke="#666" stroke-width="1.200"/><path d="M1119 973l4 6 6.500-13.500" stroke="#111" stroke-width="2.200" fill="none"/></g>
<text x="1141" y="980" font-size="14.500" fill="#1c1c1c">Peak energy time</text>
<path d="M1329 975h40" stroke="#111" stroke-width="2.400" stroke-dasharray="11 3"/>
<text x="1398" y="980" font-size="14.500" fill="#1c1c1c">67,16 ms</text>
</svg>

<svg class="abs" style="left:0;top:185px" width="360" height="811" viewBox="0 185 360 811" font-family="Liberation Sans, sans-serif">
<defs><linearGradient id="tabg" x1="0" y1="0" x2="0" y2="1"><stop offset="0" stop-color="#9a9a9a"/><stop offset="0.09" stop-color="#cfcfcf"/><stop offset="0.2" stop-color="#d9d9d9"/><stop offset="1" stop-color="#d9d9d9"/></linearGradient><radialGradient id="redx" cx="0.5" cy="0.35" r="0.7"><stop offset="0" stop-color="#f06030"/><stop offset="0.55" stop-color="#d81808"/><stop offset="1" stop-color="#a00000"/></radialGradient><linearGradient id="cbtn" x1="0" y1="0" x2="0" y2="1"><stop offset="0" stop-color="#f7f7f7"/><stop offset="0.5" stop-color="#e9e9e9"/><stop offset="1" stop-color="#d4d4d4"/></linearGradient><pattern id="tgrid" width="120" height="70" patternUnits="userSpaceOnUse" x="17" y="0"><rect width="120" height="70" fill="#fff"/>
<path d="M12 0v70" stroke="#d9d9d9" stroke-width="1.2"/><path d="M19.1 0v70" stroke="#d9d9d9" stroke-width="1.2"/><path d="M24.1 0v70" stroke="#d9d9d9" stroke-width="1.2"/><path d="M28 0v70" stroke="#d9d9d9" stroke-width="1.2"/><path d="M31.1 0v70" stroke="#d9d9d9" stroke-width="1.6"/><path d="M33.8 0v70" stroke="#d9d9d9" stroke-width="1.6"/><path d="M36.1 0v70" stroke="#d9d9d9" stroke-width="1.6"/><path d="M38.2 0v70" stroke="#d9d9d9" stroke-width="1.6"/><path d="M40 0v70" stroke="#d9d9d9" stroke-width="1.6"/><path d="M52 0v70" stroke="#d9d9d9" stroke-width="1.2"/><path d="M59.1 0v70" stroke="#d9d9d9" stroke-width="1.2"/><path d="M64.1 0v70" stroke="#d9d9d9" stroke-width="1.2"/><path d="M68 0v70" stroke="#d9d9d9" stroke-width="1.2"/><path d="M71.1 0v70" stroke="#d9d9d9" stroke-width="1.6"/><path d="M73.8 0v70" stroke="#d9d9d9" stroke-width="1.6"/><path d="M76.1 0v70" stroke="#d9d9d9" stroke-width="1.6"/><path d="M78.2 0v70" stroke="#d9d9d9" stroke-width="1.6"/><path d="M80 0v70" stroke="#d9d9d9" stroke-width="1.6"/><path d="M92 0v70" stroke="#d9d9d9" stroke-width="1.2"/><path d="M99.1 0v70" stroke="#d9d9d9" stroke-width="1.2"/><path d="M104.1 0v70" stroke="#d9d9d9" stroke-width="1.2"/><path d="M108 0v70" stroke="#d9d9d9" stroke-width="1.2"/><path d="M111.1 0v70" stroke="#d9d9d9" stroke-width="1.6"/><path d="M113.8 0v70" stroke="#d9d9d9" stroke-width="1.6"/><path d="M116.1 0v70" stroke="#d9d9d9" stroke-width="1.6"/><path d="M118.2 0v70" stroke="#d9d9d9" stroke-width="1.6"/><path d="M120 0v70" stroke="#d9d9d9" stroke-width="1.6"/>
</pattern></defs>
<rect x="6" y="185.500" width="97.500" height="32" rx="5" fill="url(#cbtn)" stroke="#8e8e8e" stroke-width="1.200"/>
<text x="12.800" y="207.500" font-size="14.500" fill="#1a1a1a">Collapse</text>
<circle cx="85.700" cy="202" r="9.800" fill="#f6f6f6" stroke="#555" stroke-width="1.100"/><path d="M85 197.500l-4.500 4.500 4.500 4.500M90.500 197.500l-4.500 4.500 4.500 4.500" stroke="#333" stroke-width="1.400" fill="none"/>
<path d="M6.500 223 H144 L176 190 H354 V315.5 H6.500 Z" fill="#d8d8d8" stroke="#8a8a8a" stroke-width="1.300"/>
<path d="M7 224.2 H144.500 L176.500 191.2 H353.500" fill="none" stroke="#8c8c8c" stroke-width="3" opacity="0.750"/>
<path d="M7 226.6 H145 L177 193.6 H353.500" fill="none" stroke="#b9b9b9" stroke-width="2.500" opacity="0.800"/>
<rect x="181" y="198.8" width="129" height="24.500" fill="#fff" stroke="#8d8d8d" stroke-width="1.300"/>
<text x="181.7" y="217.1" font-size="14.600" fill="#2a2a2a">Окт 18 10:43:06</text>
<circle cx="332.300" cy="211.5" r="10.300" fill="url(#redx)" stroke="#8e0000" stroke-width="0.800"/>
<path d="M327.800 207 l9 9 M336.800 207 l-9 9" stroke="#fff" stroke-width="2.700" stroke-linecap="round"/>
<text x="151" y="241.1" font-size="14.400" fill="#2a2a2a">white</text>
<text x="151" y="261.3" font-size="15" fill="#2a2a2a">19</text>
<path d="M335 230.3l3.500 0" stroke="#c02020" stroke-width="1.200"/>
<rect x="17" y="237.2" width="120" height="66.5" fill="url(#tgrid)" stroke="#c6c6c6" stroke-width="1"/>
<polyline points="17.5,270.4 19,271 20.5,267.7 22,263.2 23.4,263.3 24.9,255.2 26.4,256 27.9,254.9 29.4,253.1 30.9,246.7 32.4,249.9 33.9,245.6 35.3,245 36.8,248.6 38.3,255.2 39.8,250.1 41.3,249.5 42.8,249.9 44.3,248.7 45.8,248.5 47.2,255.7 48.7,256.7 50.2,251.4 51.7,252.3 53.2,255.7 54.7,258.9 56.2,264.7 57.7,272.8 59.1,265.5 60.6,257.3 62.1,253.2 63.6,254.3 65.1,250.4 66.6,257.6 68.1,259.2 69.6,257.1 71.1,252.7 72.5,259.8 74,258.9 75.5,261.2 77,263 78.5,264 80,255.9 81.5,259 83,262.9 84.4,264.3 85.9,263.5 87.4,266.9 88.9,262.6 90.4,258.9 91.9,263.7 93.4,268.2 94.9,266.8 96.3,266.6 97.8,268.3 99.3,262.6 100.8,263.6 102.3,269.1 103.8,272.6 105.3,267.5 106.8,270.4 108.2,267.7 109.7,266.4 111.2,267.5 112.7,276.5 114.2,272.3 115.7,271.2 117.2,270.3 118.6,271.5 120.1,268 121.6,276 123.1,277.8 124.6,274.8 126.1,271 127.6,274.7 129.1,272.6 130.6,274.7 132,280.2 133.5,280.2 135,274.1 136.5,274.4" fill="none" stroke="#c81e1e" stroke-width="1.500" stroke-linejoin="round"/>
<text x="21.500" y="252.7" font-size="15" fill="#111">1</text>
<path d="M21.500 255h8.3" stroke="#111" stroke-width="1.100"/>
<path d="M6.500 263.5 H144 L176 230.5 H354 V356 H6.500 Z" fill="#d8d8d8" stroke="#8a8a8a" stroke-width="1.300"/>
<path d="M7 264.7 H144.500 L176.500 231.7 H353.500" fill="none" stroke="#8c8c8c" stroke-width="3" opacity="0.750"/>
<path d="M7 267.1 H145 L177 234.1 H353.500" fill="none" stroke="#b9b9b9" stroke-width="2.500" opacity="0.800"/>
<rect x="181" y="239.3" width="129" height="24.500" fill="#fff" stroke="#8d8d8d" stroke-width="1.300"/>
<text x="181.7" y="257.6" font-size="14.600" fill="#2a2a2a">Окт 18 11:12:08</text>
<circle cx="332.300" cy="252" r="10.300" fill="url(#redx)" stroke="#8e0000" stroke-width="0.800"/>
<path d="M327.800 247.5 l9 9 M336.800 247.5 l-9 9" stroke="#fff" stroke-width="2.700" stroke-linecap="round"/>
<text x="151" y="281.6" font-size="14.400" fill="#2a2a2a">white</text>
<text x="151" y="301.8" font-size="15" fill="#2a2a2a">19</text>
<path d="M335 270.8l3.500 0" stroke="#c02020" stroke-width="1.200"/>
<rect x="17" y="277.7" width="120" height="66.5" fill="url(#tgrid)" stroke="#c6c6c6" stroke-width="1"/>
<polyline points="17.5,309.1 19,310.4 20.5,308.5 22,300 23.4,303.2 24.9,301.9 26.4,296.3 27.9,292.7 29.4,295.1 30.9,289 32.4,284.5 33.9,287.3 35.3,289 36.8,289 38.3,292.7 39.8,294.7 41.3,287.3 42.8,287.5 44.3,291.1 45.8,293.8 47.2,292 48.7,297.6 50.2,293.4 51.7,290.8 53.2,293.4 54.7,305 56.2,305.8 57.7,309.7 59.1,306.4 60.6,299.6 62.1,290.2 63.6,295.5 65.1,296.1 66.6,296 68.1,296.3 69.6,299.2 71.1,294.3 72.5,296.6 74,303.2 75.5,304.1 77,300.4 78.5,301.2 80,300.9 81.5,297.5 83,303 84.4,307.6 85.9,305.8 87.4,301 88.9,304.6 90.4,301.7 91.9,303.4 93.4,307.5 94.9,312 96.3,304 97.8,305.1 99.3,305.5 100.8,307 102.3,306.6 103.8,314.5 105.3,310.3 106.8,306.6 108.2,306.3 109.7,311.2 111.2,309 112.7,313.6 114.2,315.6 115.7,311.4 117.2,307.1 118.6,312.1 120.1,314.4 121.6,313.7 123.1,317.2 124.6,316.6 126.1,311.4 127.6,310.5 129.1,318 130.6,317.2 132,318.2 133.5,318.6 135,318.1 136.5,311.4" fill="none" stroke="#0a7a3c" stroke-width="1.500" stroke-linejoin="round"/>
<text x="21.500" y="293.2" font-size="15" fill="#111">2</text>
<path d="M21.500 295.5h8.3" stroke="#111" stroke-width="1.100"/>
<path d="M6.500 304 H144 L176 271 H354 V396.5 H6.500 Z" fill="#d8d8d8" stroke="#8a8a8a" stroke-width="1.300"/>
<path d="M7 305.2 H144.500 L176.500 272.2 H353.500" fill="none" stroke="#8c8c8c" stroke-width="3" opacity="0.750"/>
<path d="M7 307.6 H145 L177 274.6 H353.500" fill="none" stroke="#b9b9b9" stroke-width="2.500" opacity="0.800"/>
<rect x="181" y="279.8" width="129" height="24.500" fill="#fff" stroke="#8d8d8d" stroke-width="1.300"/>
<text x="181.7" y="298.1" font-size="14.600" fill="#2a2a2a">Окт 18 11:15:21</text>
<circle cx="332.300" cy="292.5" r="10.300" fill="url(#redx)" stroke="#8e0000" stroke-width="0.800"/>
<path d="M327.800 288 l9 9 M336.800 288 l-9 9" stroke="#fff" stroke-width="2.700" stroke-linecap="round"/>
<text x="151" y="322.1" font-size="14.400" fill="#2a2a2a">white</text>
<text x="151" y="342.3" font-size="15" fill="#2a2a2a">19</text>
<path d="M335 311.3l3.500 0" stroke="#c02020" stroke-width="1.200"/>
<rect x="17" y="318.2" width="120" height="66.5" fill="url(#tgrid)" stroke="#c6c6c6" stroke-width="1"/>
<polyline points="17.5,349.8 19,351.7 20.5,346.8 22,338.7 23.4,343.8 24.9,344.2 26.4,340.1 27.9,332.9 29.4,331.8 30.9,324 32.4,327.3 33.9,331.9 35.3,334.4 36.8,327.9 38.3,331 39.8,328.6 41.3,328.4 42.8,331 44.3,338.3 45.8,333.1 47.2,331 48.7,331.9 50.2,332.7 51.7,332.6 53.2,341.2 54.7,346.6 56.2,344.6 57.7,344.7 59.1,344.7 60.6,340.3 62.1,336.5 63.6,340 65.1,335.2 66.6,331.6 68.1,333.2 69.6,340.1 71.1,338 72.5,343.1 74,343.6 75.5,340.8 77,335 78.5,342.5 80,342.9 81.5,344.3 83,344.6 84.4,346.6 85.9,338.8 87.4,341.2 88.9,346.1 90.4,348.2 91.9,345.6 93.4,348.6 94.9,345.4 96.3,341.8 97.8,346.1 99.3,351.8 100.8,350 102.3,348.2 103.8,350.3 105.3,346 106.8,346.4 108.2,351.8 109.7,356.2 111.2,350.1 112.7,351.6 114.2,350.4 115.7,350 117.2,350.1 118.6,359.2 120.1,355.5 121.6,353.1 123.1,351.9 124.6,355 126.1,351.5 127.6,358.4 129.1,360.6 130.6,357.6 132,352.6 133.5,357.1 135,356.6 136.5,357.8" fill="none" stroke="#4a3ae0" stroke-width="1.500" stroke-linejoin="round"/>
<text x="21.500" y="333.7" font-size="15" fill="#111">3</text>
<path d="M21.500 336h8.3" stroke="#111" stroke-width="1.100"/>
<path d="M6.500 344.5 H144 L176 311.5 H354 V437 H6.500 Z" fill="#d8d8d8" stroke="#8a8a8a" stroke-width="1.300"/>
<path d="M7 345.7 H144.500 L176.500 312.7 H353.500" fill="none" stroke="#8c8c8c" stroke-width="3" opacity="0.750"/>
<path d="M7 348.1 H145 L177 315.1 H353.500" fill="none" stroke="#b9b9b9" stroke-width="2.500" opacity="0.800"/>
<rect x="181" y="320.3" width="129" height="24.500" fill="#fff" stroke="#8d8d8d" stroke-width="1.300"/>
<text x="181.7" y="338.6" font-size="14.600" fill="#2a2a2a">Окт 18 11:21:48</text>
<circle cx="332.300" cy="333" r="10.300" fill="url(#redx)" stroke="#8e0000" stroke-width="0.800"/>
<path d="M327.800 328.5 l9 9 M336.800 328.5 l-9 9" stroke="#fff" stroke-width="2.700" stroke-linecap="round"/>
<text x="151" y="362.6" font-size="14.400" fill="#2a2a2a">white</text>
<text x="151" y="382.8" font-size="15" fill="#2a2a2a">19</text>
<path d="M335 351.8l3.500 0" stroke="#c02020" stroke-width="1.200"/>
<rect x="17" y="358.7" width="120" height="66.5" fill="url(#tgrid)" stroke="#c6c6c6" stroke-width="1"/>
<polyline points="17.5,387.2 19,388.7 20.5,389.9 22,384.2 23.4,385.5 24.9,383.4 26.4,375.3 27.9,371.7 29.4,375.4 30.9,372.8 32.4,366.6 33.9,368.4 35.3,368.8 36.8,369 38.3,372 39.8,377.4 41.3,370.5 42.8,369 44.3,370.5 45.8,373.9 47.2,371.7 48.7,378.8 50.2,376.6 51.7,373.4 53.2,373.1 54.7,384.3 56.2,386.2 57.7,390.3 59.1,388.9 60.6,382.6 62.1,371.5 63.6,373.9 65.1,376.2 66.6,376.8 68.1,378.4 69.6,381.6 71.1,377 72.5,375.5 74,382.4 75.5,384.6 77,382.9 78.5,382.9 80,383.7 81.5,377.8 83,381.8 84.4,387 85.9,388.3 87.4,383.2 88.9,386.7 90.4,382.9 91.9,383 93.4,386.1 94.9,393.4 96.3,387.1 97.8,387.1 99.3,386.7 100.8,387.2 102.3,385.7 103.8,394.2 105.3,393.5 106.8,389.3 108.2,387.7 109.7,391.1 111.2,389.2 112.7,392.5 114.2,397.6 115.7,394.5 117.2,389.5 118.6,391.5 120.1,394.7 121.6,393.1 123.1,398.2 124.6,399.1 126.1,394.9 127.6,390.6 129.1,397.5 130.6,397 132,399 133.5,400.2 135,401.5 136.5,393.1" fill="none" stroke="#e88020" stroke-width="1.500" stroke-linejoin="round"/>
<text x="21.500" y="374.2" font-size="15" fill="#111">4</text>
<path d="M21.500 376.5h8.3" stroke="#111" stroke-width="1.100"/>
<path d="M6.500 385 H144 L176 352 H354 V477.5 H6.500 Z" fill="#d8d8d8" stroke="#8a8a8a" stroke-width="1.300"/>
<path d="M7 386.2 H144.500 L176.500 353.2 H353.500" fill="none" stroke="#8c8c8c" stroke-width="3" opacity="0.750"/>
<path d="M7 388.6 H145 L177 355.6 H353.500" fill="none" stroke="#b9b9b9" stroke-width="2.500" opacity="0.800"/>
<rect x="181" y="360.8" width="129" height="24.500" fill="#fff" stroke="#8d8d8d" stroke-width="1.300"/>
<clipPath id="c4"><rect x="182" y="361.8" width="127" height="23"/></clipPath>
<text x="175.5" y="379.1" font-size="14.600" fill="#2a2a2a" clip-path="url(#c4)">Lf+Rf cardio optimal</text>
<circle cx="332.300" cy="373.5" r="10.300" fill="url(#redx)" stroke="#8e0000" stroke-width="0.800"/>
<path d="M327.800 369 l9 9 M336.800 369 l-9 9" stroke="#fff" stroke-width="2.700" stroke-linecap="round"/>
<text x="151" y="403.1" font-size="14.400" fill="#2a2a2a">white</text>
<text x="151" y="423.3" font-size="15" fill="#2a2a2a">19</text>
<path d="M335 392.3l3.500 0" stroke="#c02020" stroke-width="1.200"/>
<rect x="17" y="399.2" width="120" height="66.5" fill="url(#tgrid)" stroke="#c6c6c6" stroke-width="1"/>
<polyline points="17.5,429.4 19,430.2 20.5,428.3 22,425 23.4,429.5 24.9,421.2 26.4,415.7 27.9,412.5 29.4,414.2 30.9,409.6 32.4,413.5 33.9,411.5 35.3,407.3 36.8,406.1 38.3,414 39.8,413.8 41.3,413.1 42.8,414.4 44.3,412.6 45.8,408.3 47.2,412.5 48.7,418.8 50.2,416.4 51.7,416.5 53.2,418.8 54.7,421 56.2,422.2 57.7,431.9 59.1,430.1 60.6,423.1 62.1,415.8 63.6,416.3 65.1,410.3 66.6,415.5 68.1,421.2 69.6,423.8 71.1,417.1 72.5,420.6 74,419.5 75.5,420.3 77,422.9 78.5,429 80,422.8 81.5,420.5 83,422.5 84.4,424.2 85.9,423.7 87.4,429.1 88.9,429.6 90.4,423.1 91.9,423 93.4,426.9 94.9,428.1 96.3,428 97.8,433.3 99.3,428.7 100.8,425 102.3,426.3 103.8,433 105.3,430 106.8,433.7 108.2,433.1 109.7,430.4 111.2,425.8 112.7,434.3 114.2,434.9 115.7,435.2 117.2,434.3 118.6,436 120.1,429.2 121.6,432.8 123.1,438.2 124.6,439.4 126.1,435.7 127.6,437.9 129.1,435.6 130.6,433 132,438.3 133.5,443.3 135,440.5 136.5,437.5" fill="none" stroke="#18a018" stroke-width="1.500" stroke-linejoin="round"/>
<text x="21.500" y="414.7" font-size="15" fill="#111">5</text>
<path d="M21.500 417h8.3" stroke="#111" stroke-width="1.100"/>
<path d="M6.500 425.5 H144 L176 392.5 H354 V518 H6.500 Z" fill="#d8d8d8" stroke="#8a8a8a" stroke-width="1.300"/>
<path d="M7 426.7 H144.500 L176.500 393.7 H353.500" fill="none" stroke="#8c8c8c" stroke-width="3" opacity="0.750"/>
<path d="M7 429.1 H145 L177 396.1 H353.500" fill="none" stroke="#b9b9b9" stroke-width="2.500" opacity="0.800"/>
<rect x="181" y="401.3" width="129" height="24.500" fill="#fff" stroke="#8d8d8d" stroke-width="1.300"/>
<text x="181.7" y="419.6" font-size="14.600" fill="#2a2a2a">LR cardio IRalt</text>
<circle cx="332.300" cy="414" r="10.300" fill="url(#redx)" stroke="#8e0000" stroke-width="0.800"/>
<path d="M327.800 409.5 l9 9 M336.800 409.5 l-9 9" stroke="#fff" stroke-width="2.700" stroke-linecap="round"/>
<text x="151" y="443.6" font-size="14.400" fill="#2a2a2a">white</text>
<text x="151" y="463.8" font-size="15" fill="#2a2a2a">19</text>
<path d="M335 432.8l3.500 0" stroke="#c02020" stroke-width="1.200"/>
<rect x="17" y="439.7" width="120" height="66.5" fill="url(#tgrid)" stroke="#c6c6c6" stroke-width="1"/>
<polyline points="17.5,465.1 19,466.7 20.5,468.8 22,474.9 23.4,467.8 24.9,459.3 26.4,456.3 27.9,454.1 29.4,449.3 30.9,452.1 32.4,456.1 33.9,450.7 35.3,447.8 36.8,449.7 38.3,451.7 39.8,450.3 41.3,457.1 42.8,455.8 44.3,451.5 45.8,448.7 47.2,455.3 48.7,453.1 50.2,456.7 51.7,458.9 53.2,460.4 54.7,456.1 56.2,465.3 57.7,468.5 59.1,466.9 60.6,461.4 62.1,460.3 63.6,450.3 65.1,448 66.6,453.1 68.1,458 69.6,456.3 71.1,458.5 72.5,457.7 74,452.3 75.5,454 77,460 78.5,460.4 80,456.5 81.5,458.9 83,455.3 84.4,453.8 85.9,457 87.4,464.1 88.9,458.7 90.4,458.8 91.9,457.9 93.4,458.2 94.9,456 96.3,465.3 97.8,464.8 99.3,462.1 100.8,459.6 102.3,463.9 103.8,460.6 105.3,465.6 106.8,470.2 108.2,469.5 109.7,463.5 111.2,466.7 112.7,468.3 114.2,468.5 115.7,472.8 117.2,476.1 118.6,471.2 120.1,468 121.6,473.3 123.1,474 124.6,475.5 126.1,478.4 127.6,479.6 129.1,471.7 130.6,474.6 132,478.1 133.5,480.6 135,478.7 136.5,484" fill="none" stroke="#1e78e0" stroke-width="1.500" stroke-linejoin="round"/>
<text x="21.500" y="455.2" font-size="15" fill="#111">6</text>
<path d="M21.500 457.5h8.3" stroke="#111" stroke-width="1.100"/>
<path d="M6.500 466 H144 L176 433 H354 V558.5 H6.500 Z" fill="#d8d8d8" stroke="#8a8a8a" stroke-width="1.300"/>
<path d="M7 467.2 H144.500 L176.500 434.2 H353.500" fill="none" stroke="#8c8c8c" stroke-width="3" opacity="0.750"/>
<path d="M7 469.6 H145 L177 436.6 H353.500" fill="none" stroke="#b9b9b9" stroke-width="2.500" opacity="0.800"/>
<rect x="181" y="441.8" width="129" height="24.500" fill="#fff" stroke="#8d8d8d" stroke-width="1.300"/>
<text x="181.7" y="460.1" font-size="14.600" fill="#2a2a2a">LR cardio IR</text>
<circle cx="332.300" cy="454.5" r="10.300" fill="url(#redx)" stroke="#8e0000" stroke-width="0.800"/>
<path d="M327.800 450 l9 9 M336.800 450 l-9 9" stroke="#fff" stroke-width="2.700" stroke-linecap="round"/>
<text x="151" y="484.1" font-size="14.400" fill="#2a2a2a">white</text>
<text x="151" y="504.3" font-size="15" fill="#2a2a2a">19</text>
<path d="M335 473.3l3.500 0" stroke="#c02020" stroke-width="1.200"/>
<rect x="17" y="480.2" width="120" height="66.5" fill="url(#tgrid)" stroke="#c6c6c6" stroke-width="1"/>
<polyline points="17.5,508.2 19,507.5 20.5,513.3 22,507.7 23.4,505.6 24.9,503.6 26.4,500.7 27.9,489.5 29.4,493.1 30.9,494.9 32.4,493.8 33.9,488.8 35.3,492.4 36.8,488.6 38.3,490 39.8,495.1 41.3,498.6 42.8,492.2 44.3,492.2 45.8,493.6 47.2,492.6 48.7,494.8 50.2,500.9 51.7,500 53.2,496 54.7,502.3 56.2,507.4 57.7,509.1 59.1,508.7 60.6,508.9 62.1,497.3 63.6,493 65.1,493.9 66.6,498.6 68.1,497.5 69.6,505 71.1,503 72.5,499.4 74,497.4 75.5,505.3 77,503.6 78.5,505.7 80,506.6 81.5,505.2 83,498.9 84.4,504.6 85.9,508.5 87.4,508 88.9,507.5 90.4,509.2 91.9,504.6 93.4,503.2 94.9,510.4 96.3,512.4 97.8,510.2 99.3,509.5 100.8,510.8 102.3,505.4 103.8,509.8 105.3,514.8 106.8,515.9 108.2,510 109.7,513.5 111.2,510.4 112.7,511 114.2,514 115.7,520.9 117.2,514.3 118.6,513.8 120.1,513.9 121.6,515.2 123.1,513.8 124.6,521.7 126.1,520.8 127.6,516.1 129.1,514.7 130.6,518.7 132,517.4 133.5,520.2 135,524.8 136.5,521.4" fill="none" stroke="#c07820" stroke-width="1.500" stroke-linejoin="round"/>
<text x="21.500" y="495.7" font-size="15" fill="#111">7</text>
<path d="M21.500 498h8.3" stroke="#111" stroke-width="1.100"/>
<path d="M6.500 506.5 H144 L176 473.5 H354 V599 H6.500 Z" fill="#d8d8d8" stroke="#8a8a8a" stroke-width="1.300"/>
<path d="M7 507.7 H144.500 L176.500 474.7 H353.500" fill="none" stroke="#8c8c8c" stroke-width="3" opacity="0.750"/>
<path d="M7 510.1 H145 L177 477.1 H353.500" fill="none" stroke="#b9b9b9" stroke-width="2.500" opacity="0.800"/>
<rect x="181" y="482.3" width="129" height="24.500" fill="#fff" stroke="#8d8d8d" stroke-width="1.300"/>
<text x="181.7" y="500.6" font-size="14.600" fill="#2a2a2a">Lr sub phase</text>
<circle cx="332.300" cy="495" r="10.300" fill="url(#redx)" stroke="#8e0000" stroke-width="0.800"/>
<path d="M327.800 490.5 l9 9 M336.800 490.5 l-9 9" stroke="#fff" stroke-width="2.700" stroke-linecap="round"/>
<text x="151" y="524.6" font-size="14.400" fill="#2a2a2a">white</text>
<text x="151" y="544.8" font-size="15" fill="#2a2a2a">19</text>
<path d="M335 513.8l3.500 0" stroke="#c02020" stroke-width="1.200"/>
<rect x="17" y="520.7" width="120" height="66.5" fill="url(#tgrid)" stroke="#c6c6c6" stroke-width="1"/>
<polyline points="17.5,580.2 19,578.3 20.5,578.2 22,579.5 23.4,580.4 24.9,579.6 26.4,577.9 27.9,576.6 29.4,575.9 30.9,574.4 32.4,571.1 33.9,566.5 35.3,562.9 36.8,561.2 38.3,560.3 39.8,558.7 41.3,556.2 42.8,553.8 44.3,552.8 45.8,552.2 47.2,550.3 48.7,546.5 50.2,542.3 51.7,539.3 53.2,537.8 54.7,536.5 56.2,534.3 57.7,532 59.1,531.2 60.6,532.4 62.1,534 63.6,534.2 65.1,532.8 66.6,531.5 68.1,531.3 69.6,531.7 71.1,531.3 72.5,529.9 74,529.1 75.5,530.1 77,532.5 78.5,534.4 80,534.5 81.5,533.5 83,533 84.4,533.5 85.9,533.6 87.4,532.3 88.9,530.2 90.4,529.4 91.9,530.6 93.4,532.8 94.9,534.1 96.3,534.1 97.8,534 99.3,534.9 100.8,536.2 102.3,536.3 103.8,534.6 105.3,532.8 106.8,532.5 108.2,534.2 109.7,536.2 111.2,537.4 112.7,538.1 114.2,539.9 115.7,542.9 117.2,545.8 118.6,547.1 120.1,546.7 121.6,546.7 123.1,548.3 124.6,551.1 126.1,553.6 127.6,555.3 129.1,557.4 130.6,561.1 132,565.9 133.5,569.9 135,571.9 136.5,572.5" fill="none" stroke="#20a0a0" stroke-width="1.500" stroke-linejoin="round"/>
<text x="21.500" y="536.2" font-size="15" fill="#111">8</text>
<path d="M21.500 538.5h8.3" stroke="#111" stroke-width="1.100"/>
<path d="M6.500 547 H144 L176 514 H354 V639.5 H6.500 Z" fill="#d8d8d8" stroke="#8a8a8a" stroke-width="1.300"/>
<path d="M7 548.2 H144.500 L176.500 515.2 H353.500" fill="none" stroke="#8c8c8c" stroke-width="3" opacity="0.750"/>
<path d="M7 550.6 H145 L177 517.6 H353.500" fill="none" stroke="#b9b9b9" stroke-width="2.500" opacity="0.800"/>
<rect x="181" y="522.8" width="129" height="24.500" fill="#fff" stroke="#8d8d8d" stroke-width="1.300"/>
<text x="181.7" y="541.1" font-size="14.600" fill="#2a2a2a">Lmic</text>
<circle cx="332.300" cy="535.5" r="10.300" fill="url(#redx)" stroke="#8e0000" stroke-width="0.800"/>
<path d="M327.800 531 l9 9 M336.800 531 l-9 9" stroke="#fff" stroke-width="2.700" stroke-linecap="round"/>
<text x="151" y="565.1" font-size="14.400" fill="#2a2a2a">white</text>
<text x="151" y="585.3" font-size="15" fill="#2a2a2a">19</text>
<path d="M335 554.3l3.500 0" stroke="#c02020" stroke-width="1.200"/>
<rect x="17" y="561.2" width="120" height="66.5" fill="url(#tgrid)" stroke="#c6c6c6" stroke-width="1"/>
<polyline points="17.5,591.8 19,590.2 20.5,587.9 22,590.8 23.4,591.7 24.9,582.6 26.4,576 27.9,577.8 29.4,575.2 30.9,573.3 32.4,573.2 33.9,572.3 35.3,566.5 36.8,572.9 38.3,576.7 39.8,576.7 41.3,572.7 42.8,576.4 44.3,571.1 45.8,572.7 47.2,577.1 48.7,582.3 50.2,575.7 51.7,577.9 53.2,579.2 54.7,582.6 56.2,587 57.7,596.4 59.1,590.9 60.6,582.2 62.1,578 63.6,577 65.1,574.3 66.6,579.5 68.1,585.1 69.6,581.2 71.1,578.8 72.5,581.5 74,583.7 75.5,582.5 77,588.9 78.5,587.5 80,583 81.5,580.7 83,587.6 84.4,585.7 85.9,588.9 87.4,590.2 88.9,589.5 90.4,581.8 91.9,587.7 93.4,590.1 94.9,591.4 96.3,590.5 97.8,594 99.3,587.3 100.8,586.8 102.3,591.7 103.8,595.8 105.3,592.6 106.8,594.5 108.2,593.7 109.7,589.2 111.2,591.3 112.7,597.9 114.2,598.3 115.7,594.6 117.2,596.9 118.6,594 120.1,592.9 121.6,596.6 123.1,603.6 124.6,598 126.1,597.9 127.6,597.3 129.1,597.8 130.6,595.7 132,604.8 133.5,603.8 135,600.6 136.5,597.8" fill="none" stroke="#7a20f0" stroke-width="1.500" stroke-linejoin="round"/>
<text x="21.500" y="576.7" font-size="15" fill="#111">9</text>
<path d="M21.500 579h8.3" stroke="#111" stroke-width="1.100"/>
<path d="M6.500 587.5 H144 L176 554.5 H354 V679 H6.500 Z" fill="#d8d8d8" stroke="#8a8a8a" stroke-width="1.300"/>
<path d="M7 588.7 H144.500 L176.500 555.7 H353.500" fill="none" stroke="#8c8c8c" stroke-width="3" opacity="0.750"/>
<path d="M7 591.1 H145 L177 558.1 H353.500" fill="none" stroke="#b9b9b9" stroke-width="2.500" opacity="0.800"/>
<rect x="181" y="563.3" width="129" height="24.500" fill="#fff" stroke="#8d8d8d" stroke-width="1.300"/>
<text x="181.7" y="581.6" font-size="14.600" fill="#2a2a2a">Rmic</text>
<circle cx="332.300" cy="576" r="10.300" fill="url(#redx)" stroke="#8e0000" stroke-width="0.800"/>
<path d="M327.800 571.5 l9 9 M336.800 571.5 l-9 9" stroke="#fff" stroke-width="2.700" stroke-linecap="round"/>
<text x="151" y="605.6" font-size="14.400" fill="#2a2a2a">white</text>
<text x="151" y="625.8" font-size="15" fill="#2a2a2a">19</text>
<path d="M335 594.8l3.500 0" stroke="#c02020" stroke-width="1.200"/>
<rect x="17" y="601.7" width="120" height="66.5" fill="url(#tgrid)" stroke="#c6c6c6" stroke-width="1"/>
<polyline points="17.5,635.1 19,624.2 20.5,626 22,629.3 23.4,630.8 24.9,628.4 26.4,624.6 27.9,613.4 29.4,608.3 30.9,613.3 32.4,615.7 33.9,613.8 35.3,614 36.8,614.8 38.3,608.8 39.8,611.9 41.3,617.3 42.8,619.2 44.3,614.2 45.8,617.6 47.2,614 48.7,613.5 50.2,616.4 51.7,625 53.2,621.4 54.7,625 56.2,628.3 57.7,630 59.1,625 60.6,628.8 62.1,624.4 63.6,617.7 65.1,614.3 66.6,618.3 68.1,617.5 69.6,621.9 71.1,627.8 72.5,625.9 74,620.5 75.5,622.1 77,625.1 78.5,623.7 80,628.4 81.5,630.2 83,626.3 84.4,621.4 85.9,627.7 87.4,627.6 88.9,629.4 90.4,630.9 91.9,632.8 93.4,624.2 94.9,627.3 96.3,630.7 97.8,633.4 99.3,631 100.8,635.8 102.3,630.5 103.8,628 105.3,630.7 106.8,637.5 108.2,634.4 109.7,635.6 111.2,635.7 112.7,632.2 114.2,630.7 115.7,637.9 117.2,640.4 118.6,636.8 120.1,637.7 121.6,636.9 123.1,634.3 124.6,635.9 126.1,644.2 127.6,641.3 129.1,639.2 130.6,638.5 132,640.1 133.5,636.3 135,644.1 136.5,646" fill="none" stroke="#b020c8" stroke-width="1.500" stroke-linejoin="round"/>
<text x="21.500" y="617.2" font-size="15" fill="#111">10</text>
<path d="M21.500 619.5h16.6" stroke="#111" stroke-width="1.100"/>
<path d="M6.500 627 H144 L176 594 H354 V718 H6.500 Z" fill="#d8d8d8" stroke="#8a8a8a" stroke-width="1.300"/>
<path d="M7 628.2 H144.500 L176.500 595.2 H353.500" fill="none" stroke="#8c8c8c" stroke-width="3" opacity="0.750"/>
<path d="M7 630.6 H145 L177 597.6 H353.500" fill="none" stroke="#b9b9b9" stroke-width="2.500" opacity="0.800"/>
<rect x="181" y="602.8" width="129" height="24.500" fill="#fff" stroke="#8d8d8d" stroke-width="1.300"/>
<text x="181.7" y="621.1" font-size="14.600" fill="#2a2a2a">LR corona</text>
<circle cx="332.300" cy="615.5" r="10.300" fill="url(#redx)" stroke="#8e0000" stroke-width="0.800"/>
<path d="M327.800 611 l9 9 M336.800 611 l-9 9" stroke="#fff" stroke-width="2.700" stroke-linecap="round"/>
<text x="151" y="645.1" font-size="14.400" fill="#2a2a2a">white</text>
<text x="151" y="665.3" font-size="15" fill="#2a2a2a">19</text>
<path d="M335 634.3l3.500 0" stroke="#c02020" stroke-width="1.200"/>
<rect x="17" y="641.2" width="120" height="66.5" fill="url(#tgrid)" stroke="#c6c6c6" stroke-width="1"/>
<polyline points="17.5,669.6 19,670.4 20.5,672.8 22,667.3 23.4,667.1 24.9,665.9 26.4,658.6 27.9,653.9 29.4,657.3 30.9,656.1 32.4,649 33.9,650.1 35.3,651.7 36.8,652.3 38.3,653.7 39.8,659.8 41.3,653.7 42.8,651.1 44.3,652.4 45.8,657.3 47.2,654.5 48.7,660.4 50.2,659.4 51.7,656.4 53.2,654.9 54.7,666.6 56.2,669.8 57.7,672.4 59.1,670.6 60.6,665.7 62.1,654.3 63.6,655.5 65.1,659.2 66.6,660 68.1,660.2 69.6,663.6 71.1,660.4 72.5,657.8 74,664.3 75.5,667.7 77,665.7 78.5,664.3 80,666.4 81.5,661 83,663.9 84.4,669.1 85.9,671.8 87.4,665.4 88.9,668.3 90.4,666 91.9,666 93.4,667.9 94.9,676 96.3,670.4 97.8,668.9 99.3,668.7 100.8,670.6 102.3,668.3 103.8,675.9 105.3,676.5 106.8,672.1 108.2,669.4 109.7,673.6 111.2,672.7 112.7,674.5 114.2,679.6 115.7,677.6 117.2,672 118.6,673 120.1,677.8 121.6,676.2 123.1,680 124.6,681.3 126.1,678.2 127.6,672.6 129.1,679.5 130.6,680.4 132,681.7 133.5,681.8 135,684.3 136.5,676.1" fill="none" stroke="#c81e1e" stroke-width="1.500" stroke-linejoin="round"/>
<text x="21.500" y="656.7" font-size="15" fill="#111">11</text>
<path d="M6.500 666 H144 L176 633 H354 V757 H6.500 Z" fill="#d8d8d8" stroke="#8a8a8a" stroke-width="1.300"/>
<path d="M7 667.2 H144.500 L176.500 634.2 H353.500" fill="none" stroke="#8c8c8c" stroke-width="3" opacity="0.750"/>
<path d="M7 669.6 H145 L177 636.6 H353.500" fill="none" stroke="#b9b9b9" stroke-width="2.500" opacity="0.800"/>
<rect x="181" y="641.8" width="129" height="24.500" fill="#fff" stroke="#8d8d8d" stroke-width="1.300"/>
<text x="181.7" y="660.1" font-size="14.600" fill="#2a2a2a">IR 140</text>
<circle cx="332.300" cy="654.5" r="10.300" fill="url(#redx)" stroke="#8e0000" stroke-width="0.800"/>
<path d="M327.800 650 l9 9 M336.800 650 l-9 9" stroke="#fff" stroke-width="2.700" stroke-linecap="round"/>
<text x="151" y="684.1" font-size="14.400" fill="#2a2a2a">white</text>
<text x="151" y="704.3" font-size="15" fill="#2a2a2a">19</text>
<path d="M335 673.3l3.500 0" stroke="#c02020" stroke-width="1.200"/>
<rect x="17" y="680.2" width="120" height="66.5" fill="url(#tgrid)" stroke="#c6c6c6" stroke-width="1"/>
<polyline points="17.5,700.8 19,711.3 20.5,712.7 22,712.5 23.4,707.7 24.9,702.4 26.4,692 27.9,694.2 29.4,696.2 30.9,694.1 32.4,690.2 33.9,692.1 35.3,689 36.8,687.8 38.3,694.3 39.8,697.5 41.3,693.7 42.8,691.8 44.3,694.2 45.8,690.7 47.2,693.9 48.7,699 50.2,700.5 51.7,693.9 53.2,698.9 54.7,702 56.2,707 57.7,709.8 59.1,714 60.6,702.4 62.1,696.3 63.6,694.1 65.1,696.6 66.6,694.9 68.1,703 69.6,703.5 71.1,699.5 72.5,697.2 74,703.3 75.5,703 77,704.3 78.5,707.5 80,705.4 81.5,699.7 83,702.3 84.4,707.9 85.9,706.5 87.4,708.3 88.9,709 90.4,705.8 91.9,701.5 93.4,709.3 94.9,710.8 96.3,710.7 97.8,709.4 99.3,711.8 100.8,704.7 102.3,708.4 103.8,713.1 105.3,715.8 106.8,710.4 108.2,713.8 109.7,710.5 111.2,709.5 112.7,712.5 114.2,719.8 115.7,715.3 117.2,713.8 118.6,714.4 120.1,713.7 121.6,712.9 123.1,719.7 124.6,721.8 126.1,716.1 127.6,715.6 129.1,717.2 130.6,717 132,718 133.5,725.2 135,721.5 136.5,717.7" fill="none" stroke="#0a7a3c" stroke-width="1.500" stroke-linejoin="round"/>
<text x="21.500" y="695.7" font-size="15" fill="#111">12</text>
<path d="M6.500 705 H144 L176 672 H354 V796.2 H6.500 Z" fill="#d8d8d8" stroke="#8a8a8a" stroke-width="1.300"/>
<path d="M7 706.2 H144.500 L176.500 673.2 H353.500" fill="none" stroke="#8c8c8c" stroke-width="3" opacity="0.750"/>
<path d="M7 708.6 H145 L177 675.6 H353.500" fill="none" stroke="#b9b9b9" stroke-width="2.500" opacity="0.800"/>
<rect x="181" y="680.8" width="129" height="24.500" fill="#fff" stroke="#8d8d8d" stroke-width="1.300"/>
<text x="181.7" y="699.1" font-size="14.600" fill="#2a2a2a">IR 190</text>
<circle cx="332.300" cy="693.5" r="10.300" fill="url(#redx)" stroke="#8e0000" stroke-width="0.800"/>
<path d="M327.800 689 l9 9 M336.800 689 l-9 9" stroke="#fff" stroke-width="2.700" stroke-linecap="round"/>
<text x="151" y="723.1" font-size="14.400" fill="#2a2a2a">white</text>
<text x="151" y="743.3" font-size="15" fill="#2a2a2a">19</text>
<path d="M335 712.3l3.500 0" stroke="#c02020" stroke-width="1.200"/>
<rect x="17" y="719.2" width="120" height="66.5" fill="url(#tgrid)" stroke="#c6c6c6" stroke-width="1"/>
<polyline points="17.5,756.4 19,751.1 20.5,743.8 22,740.5 23.4,746.7 24.9,742.9 26.4,742.5 27.9,736.7 29.4,730.5 30.9,723.7 32.4,730.8 33.9,732.1 35.3,732.1 36.8,732.1 38.3,733.4 39.8,727.1 41.3,728.8 42.8,735.1 44.3,736.2 45.8,733.7 47.2,734.9 48.7,733.7 50.2,729.7 51.7,736 53.2,742.8 54.7,745.5 56.2,745.5 57.7,749.9 59.1,742.9 60.6,739.5 62.1,739.6 63.6,741.6 65.1,733.2 66.6,735.2 68.1,735.9 69.6,737.8 71.1,738.3 72.5,747.1 74,743.4 75.5,740 77,739.4 78.5,743.1 80,740.7 81.5,746 83,748.7 84.4,744.6 85.9,740.3 87.4,744.4 88.9,746 90.4,745.7 91.9,750.4 93.4,749.9 94.9,744.5 96.3,743.2 97.8,749.9 99.3,748.8 100.8,750.9 102.3,752.1 103.8,751.3 105.3,744 106.8,750.1 108.2,752.8 109.7,754.1 111.2,752.1 112.7,756 114.2,749 115.7,749.5 117.2,753.9 118.6,758.9 120.1,754.3 121.6,756.7 123.1,755 124.6,752.1 126.1,753.3 127.6,761.1 129.1,760.1 130.6,756.9 132,758 133.5,756.8 135,755.1 136.5,759.7" fill="none" stroke="#4a3ae0" stroke-width="1.500" stroke-linejoin="round"/>
<text x="21.500" y="734.7" font-size="15" fill="#111">13</text>
<path d="M6.500 744.2 H144 L176 711.2 H354 V978.5 H6.500 Z" fill="#fff" stroke="#8a8a8a" stroke-width="1.300"/>
<path d="M6.500 743.2 H143 L175 710.2 H354" fill="none" stroke="#7a7a7a" stroke-width="2.600" opacity="0.800"/>
<rect x="181" y="720" width="129" height="24.500" fill="#fff" stroke="#8d8d8d" stroke-width="1.300"/>
<text x="181.7" y="738.3" font-size="14.600" fill="#2a2a2a">IR 50</text>
<circle cx="332.300" cy="732.7" r="10.300" fill="url(#redx)" stroke="#8e0000" stroke-width="0.800"/>
<path d="M327.800 728.2 l9 9 M336.800 728.2 l-9 9" stroke="#fff" stroke-width="2.700" stroke-linecap="round"/>
<rect x="17" y="758.4" width="120" height="66.5" fill="url(#tgrid)" stroke="#c6c6c6" stroke-width="1"/>
<polyline points="17.5,805 19,804.7 20.5,806 22,805.4 23.4,806.7 24.9,806.7 26.4,798.7 27.9,787.7 29.4,779.2 30.9,772 32.4,769.2 33.9,771.2 35.3,770.9 36.8,769.4 38.3,770 39.8,768.5 41.3,766.7 42.8,769.5 44.3,772.1 45.8,772.7 47.2,775 48.7,775.5 50.2,773.2 51.7,775.5 53.2,782.5 54.7,789.1 56.2,794.1 57.7,791.9 59.1,781.7 60.6,774.1 62.1,772.3 63.6,770.8 65.1,771.9 66.6,776.2 68.1,777.1 69.6,776.3 71.1,777.2 72.5,776 74,774.3 75.5,776.6 77,777.9 78.5,776.6 80,777.1 81.5,776.1 83,772.7 84.4,773.1 85.9,775.5 87.4,776 88.9,778.4 90.4,780.8 91.9,778.9 93.4,777.9 94.9,779.3 96.3,778.8 97.8,779.4 99.3,782.1 100.8,781 102.3,778.3 103.8,778.1 105.3,776.6 106.8,775.6 108.2,778.9 109.7,781.2 111.2,780.7 112.7,782.1 114.2,782.2 115.7,780 117.2,781.4 118.6,784 120.1,783.6 121.6,784.3 123.1,784.7 124.6,781 126.1,779.2 127.6,780.5 129.1,781 130.6,783.5 132,788 133.5,788.7 135,788.4 136.5,790.9" fill="none" stroke="#e88020" stroke-width="1.500" stroke-linejoin="round"/>
<text x="21.500" y="773.9" font-size="15" fill="#111">14</text>
<g font-size="14.400" fill="#2a2a2a"><text x="151" y="762.300">white cardio optimal.mda</text><text x="151" y="782.500">19 Окт 2020 9:36:00 πμ</text><text x="151" y="802.800">Mic/Meter: 7053981_90d</text><text x="151" y="823">Soundcard: No Cal</text></g>
<g font-size="13.500" fill="#333"><text x="18.500" y="822.500">20</text><text x="100.500" y="822.500">20,0k</text></g>
<g><rect x="323" y="753" width="19" height="18" fill="#2b2b2b"/><rect x="326" y="753" width="12" height="8" fill="#dfe8f0"/><rect x="327" y="764" width="10" height="7" fill="#555"/><path d="M324 770l13-15 3.500 2.500-13 15z" fill="#e0b020" stroke="#6a5000" stroke-width="0.700"/><path d="M337 755l2-2.500 3.500 2.500-2 2.500z" fill="#d02020"/></g>
<g><path d="M326.500 791.500l3 2.500" stroke="#ccc" stroke-width="3"/><path d="M328 790.500L340.500 777" stroke="#d03030" stroke-width="2.200"/><path d="M325 793.500c1-2 2.500-2.500 3.500-1.500s0.500 2.500-1.500 3.500z" fill="#999"/><path d="M321.500 796.500h17" stroke="#f08000" stroke-width="1.800"/></g>
<g><rect x="322.500" y="804.500" width="20.500" height="21.500" rx="3.500" fill="#f4f4f4" stroke="#888" stroke-width="1.600"/><path d="M326 810h9M326 814h5M333 814h6M326 818h6M334 818h5M326 822h12" stroke="#444" stroke-width="1.300"/></g>
<rect x="17" y="831.500" width="330" height="105.500" fill="#fff" stroke="#8d8d8d" stroke-width="1.300"/>
<g font-size="14.600" fill="#2a2a2a"><text x="23.500" y="871">Delay -0,011±0,010 ms (-4 mm, -0,15 in)</text><text x="23.500" y="891.300">using estimated IR delay relative to Acoustic</text><text x="23.500" y="911.600">reference on&#160; R</text></g>
<rect x="17" y="943.500" width="120" height="29" rx="4.500" fill="url(#cbtn)" stroke="#7e7e7e" stroke-width="1.200"/>
<text x="33" y="963.500" font-size="14.500" fill="#1a1a1a">Change Cal...</text>
</svg>
<div id="status">
<div class="s" style="left:3px;letter-spacing:-0.2px">104/124MB</div><div class="sep" style="left:104px"></div>
<div class="s" style="left:110px;letter-spacing:-0.2px">48000 Hz</div><div class="sep" style="left:180px"></div>
<div class="s" style="left:185px;letter-spacing:-0.2px">16 Bit</div><div class="sep" style="left:229px"></div>
<div class="sep" style="left:1643px"></div>
</div>
<div id="task">
<div id="search"><svg class="abs" style="left:14px;top:8px" width="40" height="40" viewBox="0 0 40 40"><circle cx="24" cy="14" r="8" fill="none" stroke="#111" stroke-width="1.700"/><path d="M18.500 20L4.500 33.500" stroke="#111" stroke-width="1.900"/></svg><div class="ph">Πληκτρολογήστε εδώ για αναζήτηση</div></div>
<svg class="abs" style="left:0;top:0" width="1920" height="54" viewBox="0 1026 1920 54">
<!-- start -->
<g fill="#fff"><path d="M22.500 1046l8-1.200v8.400h-8zM31.500 1044.600l10-1.600v10.200h-10zM22.500 1054.200h8v8.400l-8-1.200zM31.500 1054.200h10v10.200l-10-1.600z"/></g>
<!-- task view -->
<g stroke="#eee" stroke-width="1.300" fill="none"><path d="M549 1044.500v-2.500h16.500v2.500M549 1061.500v2.500h16.500v-2.500M551.500 1047.500h11.500v11h-11.500z"/><path d="M572.500 1041.500v7.500M572.500 1056v8.500"/><circle cx="572.500" cy="1052.500" r="1.300" fill="#eee" stroke="none"/></g>
<!-- explorer -->
<g><path d="M616.500 1043.500q0-1.500 1.500-1.500h8l2.500 2.500h15q1.500 0 1.500 1.500v13.500h-28.500z" fill="#f5b400"/><path d="M616.500 1047.500h28.500v16q0 1.500-1.500 1.500h-25.500q-1.500 0-1.500-1.500z" fill="#ffd75e"/><path d="M621.500 1065v-7q0-2.500 2.500-2.500h13.500q2.500 0 2.500 2.500v7h-4v-5.500h-10.500v5.500z" fill="#2f8de0"/></g>
<rect x="603" y="1077" width="43" height="3" fill="#76b9ed"/><rect x="646" y="1077" width="12" height="3" fill="#5a8fc0"/>
<!-- store -->
<g><path d="M690 1049v-5q0-5 7-5t7 5v5" stroke="#f2f2f2" stroke-width="2.500" fill="none"/><rect x="681" y="1048" width="32" height="21" rx="1" fill="#f2f2f2"/><rect x="691" y="1052.500" width="5.500" height="5.500" fill="#f25022"/><rect x="697.500" y="1052.500" width="5.500" height="5.500" fill="#7fba00"/><rect x="691" y="1059" width="5.500" height="5.500" fill="#00a4ef"/><rect x="697.500" y="1059" width="5.500" height="5.500" fill="#ffb900"/></g>
<!-- mail -->
<g><path d="M747.500 1048l16.500-11 16.500 11v19h-33z" fill="#0a62b8"/><path d="M750 1046h28v14h-28z" fill="#fff"/><path d="M747.500 1048l16.500 11 16.500-11v19h-33z" fill="#2aa7ee"/><path d="M747.500 1067l16.500-8 16.500 8z" fill="#1b8ad8"/></g>
<!-- edge -->
<g><circle cx="830" cy="1053" r="16.500" fill="#1a73c8"/><path d="M814 1050c2-9 9-14 16.500-14 9 0 16 7 16 15 0 5-4 8-9 8-4 0-5-2-4-4 1-3-2-7-7-7-6 0-11 4-12.500 2z" fill="#3fd28a"/><path d="M814 1050c5-8 16-7 19 0c-6-1-10 3-9 8c1 6 7 10 14 8c-6 5-16 5-21-2c-3-4-4-9-3-14z" fill="#0c4f9e"/><path d="M838 1059c-4 1-8-1-8-5c0-3 3-4 3-4c-3-2-9 1-9 8c1 6 8 10 15 8c4-2 7-5 8-8c-2 1-5 2-9 1z" fill="#1a5fb8"/></g>
<!-- opera -->
<g><ellipse cx="897" cy="1053" rx="15" ry="15.500" fill="#e81123"/><ellipse cx="896" cy="1053" rx="6.500" ry="11.500" fill="#25272c"/><path d="M900 1039c8 2 12 8 12 14s-4 12-12 14c4-3 6-8 6-14s-2-11-6-14z" fill="#b00818"/></g>
<!-- chrome -->
<g><circle cx="963" cy="1053" r="16" fill="#fff"/><path d="M963 1053L949.200 1045a16 16 0 0 1 27.600 0z" fill="#db4437"/><path d="M963 1053L976.800 1045a16 16 0 0 1-13.800 24z" fill="#ffcd40"/><path d="M963 1053L963 1069a16 16 0 0 1-13.800-24z" fill="#0f9d58"/><path d="M949.200 1045h27.600a16 16 0 0 0-27.600 0z" fill="#db4437"/><circle cx="963" cy="1053" r="7.300" fill="#fff"/><circle cx="963" cy="1053" r="5.800" fill="#4285f4"/></g>
<rect x="937" y="1077" width="54" height="3" fill="#76b9ed"/>
<!-- avast -->
<g><circle cx="1030" cy="1053" r="15" fill="#ff7800"/><path d="M1022 1040a15 15 0 0 1 23 13c0 4-2 8-4 10c2-8-2-18-19-23z" fill="#7b4bd8"/><path d="M1018 1062c3 5 10 7 16 5c4-1 7-4 9-7c-8 6-20 6-25 2z" fill="#ffc400"/><path d="M1030 1043.500l7.500 3v6c0 5-3.500 8.500-7.500 10c-4-1.500-7.500-5-7.500-10v-6z" fill="#fff"/><circle cx="1030" cy="1051" r="1.800" fill="#333"/><path d="M1029.300 1052h1.400l0.600 4h-2.600z" fill="#333"/></g>
<!-- red app -->
<g><rect x="1081" y="1037" width="32" height="32" fill="#9b0000"/><g fill="#fff"><rect x="1091" y="1043" width="4" height="4"/><rect x="1097" y="1043" width="4" height="4"/><rect x="1103" y="1043" width="4" height="4"/><rect x="1097" y="1049" width="4" height="4"/><rect x="1103" y="1049" width="4" height="4"/><rect x="1091" y="1055.500" width="4" height="4"/><rect x="1103" y="1055.500" width="4" height="4"/><rect x="1085" y="1061.500" width="4" height="4"/></g></g>
<rect x="1070" y="1077" width="43" height="3" fill="#76b9ed"/><rect x="1113" y="1077" width="12" height="3" fill="#5a8fc0"/>
<!-- REW active -->
<rect x="1131" y="1026" width="65" height="54" fill="#5f5856"/><rect x="1131" y="1077" width="65" height="3" fill="#76b9ed"/>
<g><rect x="1147" y="1037" width="33" height="32" fill="#4a1a9e"/><path d="M1149 1068c1-6 2-9 4-10c2-6 3-8 4-2c2 4 3 5 6 6c2-8 3-12 5-4c1 3 3 4 6 5c2-1 4-1 5 0v5z" fill="#18a0c8"/><path d="M1150 1068c1-4 2-6 4-7c1-4 2-5 3 0c2 3 3 4 6 4c1-6 3-8 4-2c2 2 4 3 7 3c2 0 3 0 4 1v1z" fill="#5ad048"/><path d="M1153 1068c0-4 1-6 2-6s2 3 3 6zM1163 1068c0-5 1-8 2.500-8s2 4 2.500 8z" fill="#f0d020"/><path d="M1154.300 1068c0-2 0.500-4 1-4s0.800 2 1 4zM1164.500 1068c0-3 0.500-6 1-6s1 3 1.200 6z" fill="#e02010"/><text x="1163.500" y="1049" font-size="11.500" font-weight="bold" fill="#e8e8e8" text-anchor="middle" font-family="Liberation Sans, sans-serif">REW</text><text x="1172.500" y="1056" font-size="5" font-weight="bold" fill="#ddd" text-anchor="middle" font-family="Liberation Sans, sans-serif">V5.1</text></g>
<!-- tray -->
<g stroke="#f2f2f2" fill="none" stroke-width="1.300"><path d="M1585.500 1057l7-7 7 7"/>
<path d="M1619.500 1046v5M1623.500 1046v5M1617.500 1051h8v3q0 3-4 3t-4-3zM1621.500 1057v5"/><path d="M1626 1049.500h9.500v11h-8" stroke="#aaa"/><path d="M1636.500 1053v4" stroke="#aaa"/><path d="M1627.500 1052.500l5 5.500M1632.500 1052.500l-5 5.500" stroke-width="1.400"/>
<path d="M1651 1061a14 14 0 0 1 14-14M1655 1061a10 10 0 0 1 10-10M1659 1061a6 6 0 0 1 6-6" stroke-width="1.200"/><circle cx="1664.500" cy="1060.500" r="1.300" fill="#f2f2f2"/>
<path d="M1679.500 1049.500h4l4.500-4v15l-4.500-4h-4z"/><path d="M1691 1049q2.500 3.500 0 7M1694.500 1046.500q4.500 6 0 12M1698 1044q6 9 0 17.500" stroke-width="1.200"/>
<path d="M1865.500 1041.500h20v20h-10l-3 3v-3h-7z" stroke-width="1.400"/></g>
<circle cx="1883" cy="1060" r="4.500" fill="#25272c" stroke="#f2f2f2" stroke-width="1.200"/>
<path d="M1913.500 1026v54" stroke="#555" stroke-width="1"/>
</svg>
<div class="t" style="left:1721px;top:19px;font-size:15px;color:#f4f4f4">ΕΛ</div>
<div class="t" style="left:1769px;top:8px;font-size:15.500px;color:#f4f4f4">10:35 πμ</div>
<div class="t" style="left:1759.500px;top:33px;font-size:15.500px;color:#f4f4f4;letter-spacing:0.55px">19/10/2020</div>
</div>

</body></html>
